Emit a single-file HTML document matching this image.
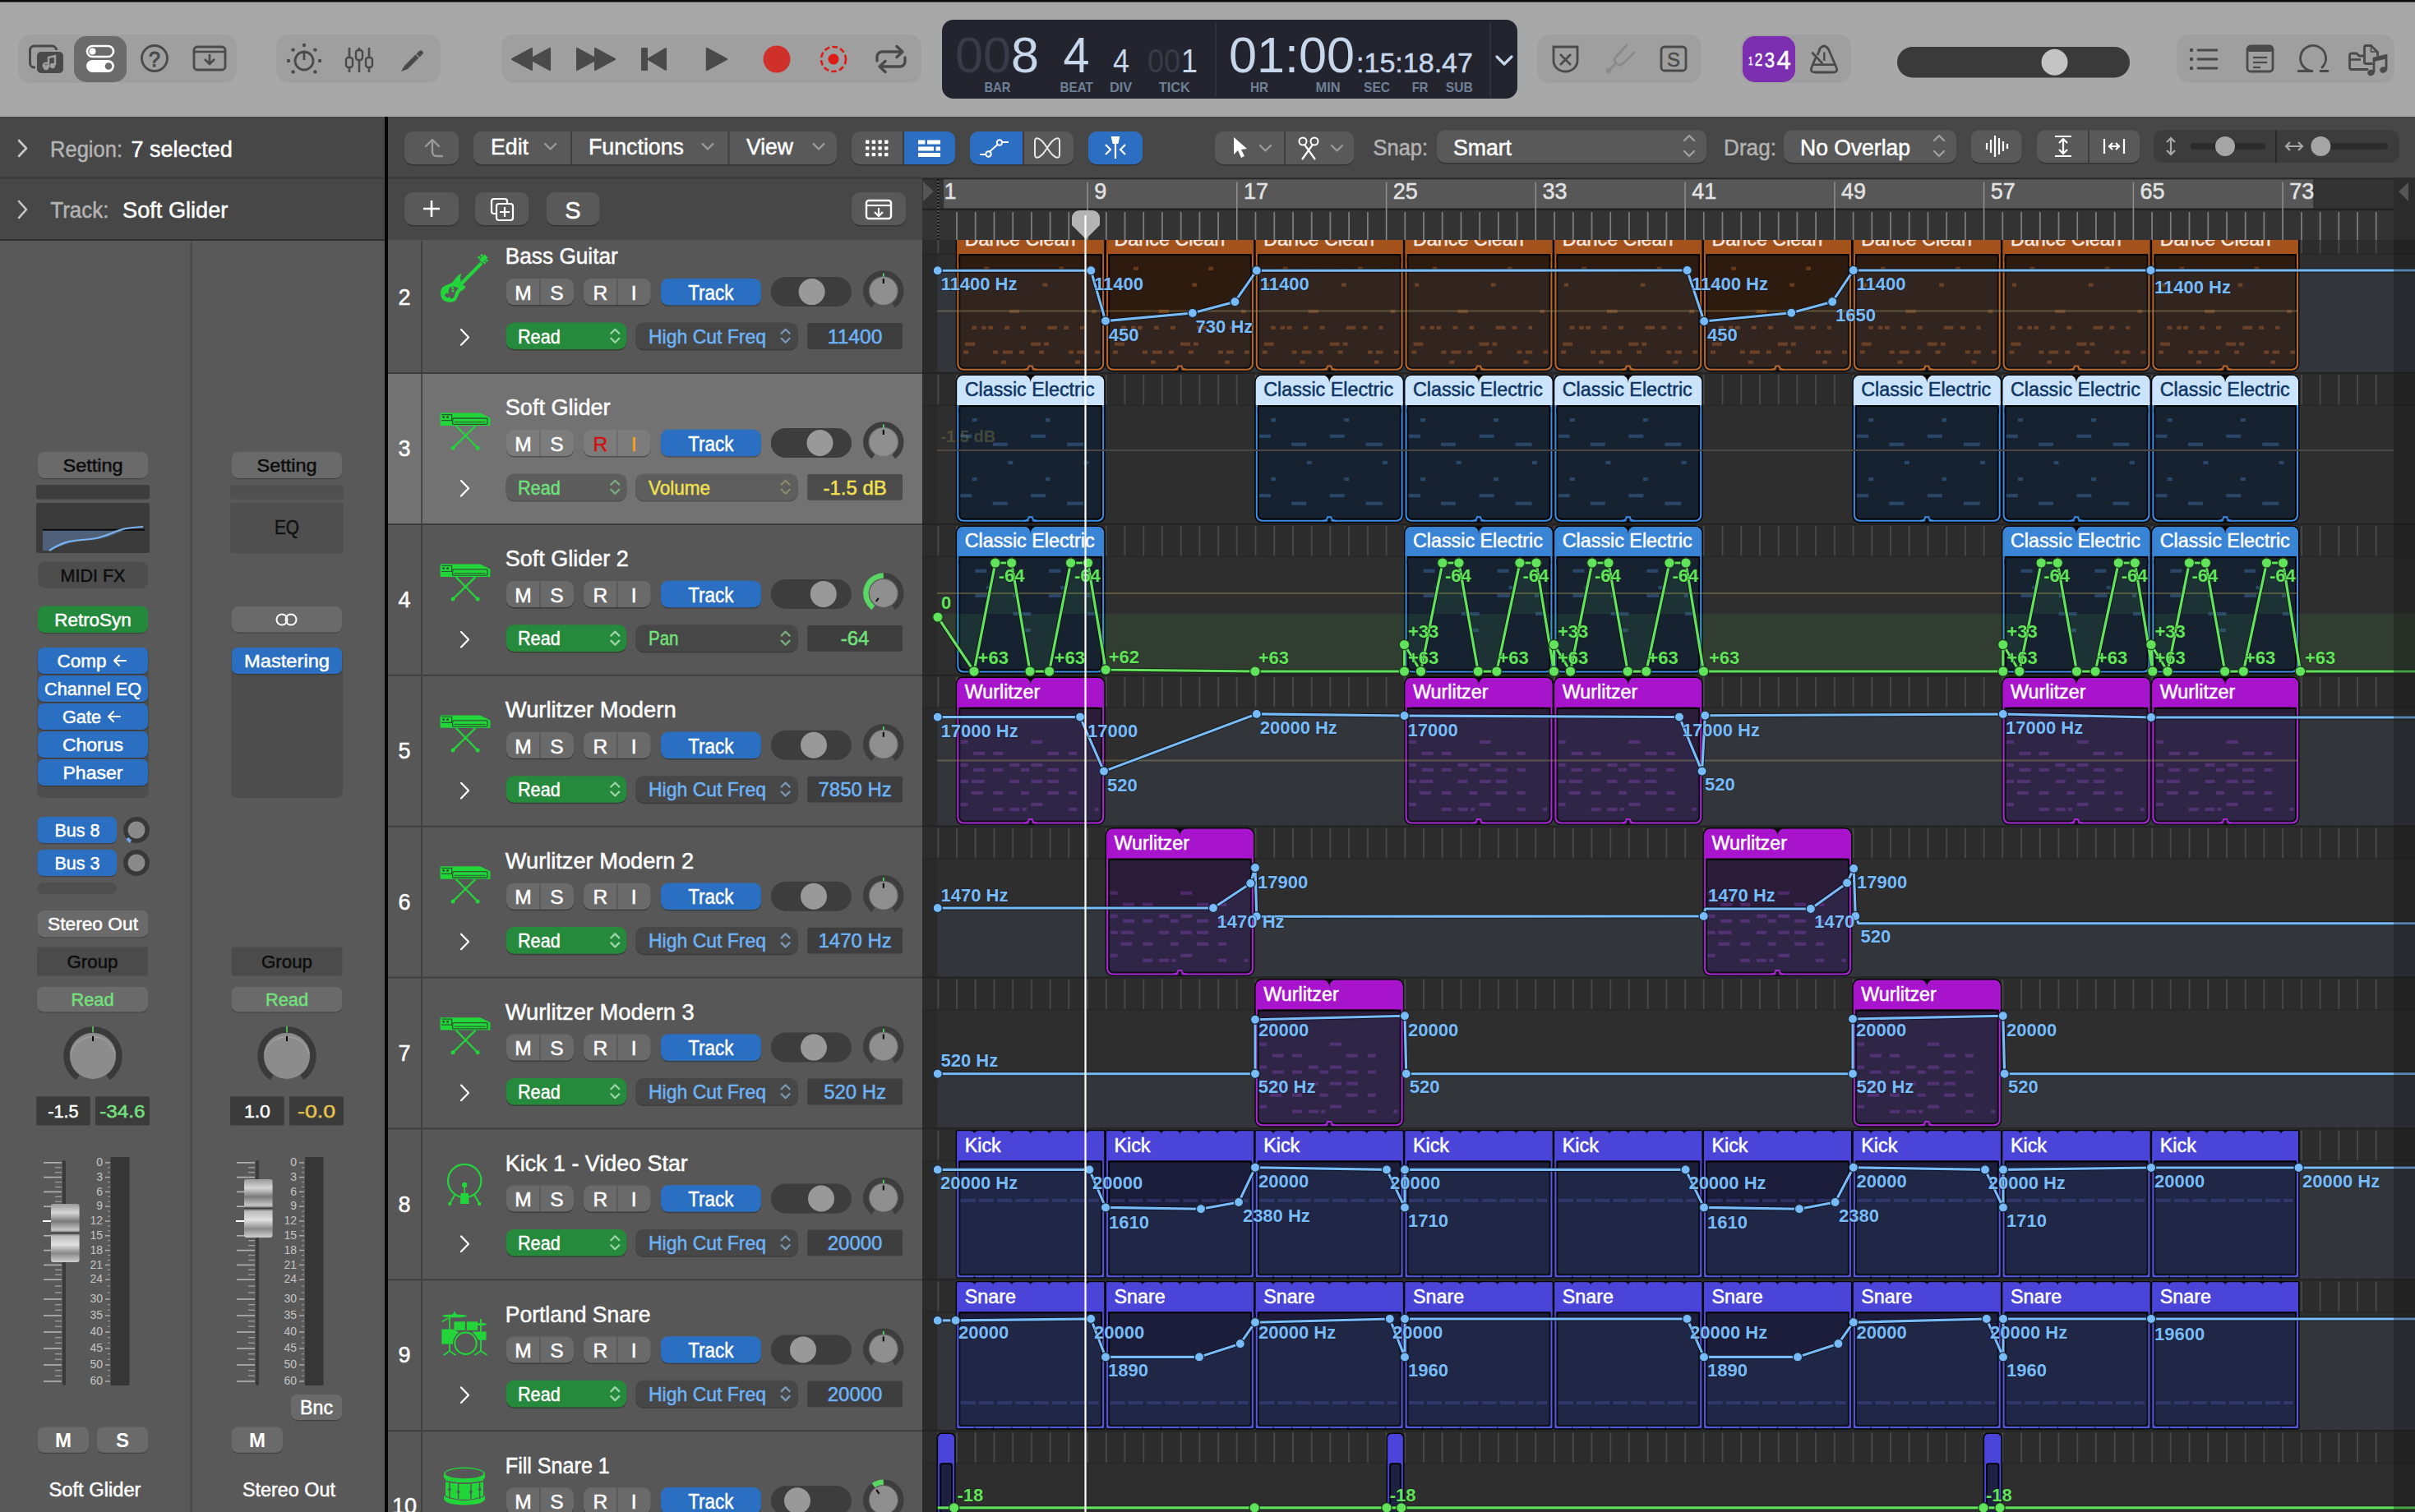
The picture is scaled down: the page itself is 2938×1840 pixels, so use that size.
<!DOCTYPE html>
<html><head><meta charset="utf-8"><title>Logic Pro</title>
<style>
html,body{margin:0;padding:0;background:#474747;overflow:hidden;width:2938px;height:1840px}
svg{display:block;font-family:"Liberation Sans",sans-serif}
</style></head><body>
<svg width="2938" height="1840" viewBox="0 0 2938 1840">
<rect x="0.0" y="0.0" width="2938.0" height="1840.0" rx="0" fill="#474747" />
<rect x="0.0" y="0.0" width="2938.0" height="142.0" rx="0" fill="#a8a8a8" />
<rect x="0.0" y="0.0" width="2938.0" height="2.5" rx="0" fill="#0a0a0a" />
<rect x="22.0" y="42.0" width="266.0" height="59.0" rx="15" fill="#9f9f9f" />
<rect x="336.0" y="42.0" width="200.0" height="59.0" rx="15" fill="#9f9f9f" />
<rect x="610.0" y="42.0" width="511.0" height="59.0" rx="15" fill="#9f9f9f" />
<rect x="1870.0" y="42.0" width="200.0" height="59.0" rx="15" fill="#9f9f9f" />
<rect x="2118.0" y="42.0" width="134.0" height="59.0" rx="15" fill="#9f9f9f" />
<rect x="2648.0" y="42.0" width="265.0" height="59.0" rx="15" fill="#9f9f9f" />
<rect x="90.0" y="44.0" width="64.0" height="56.0" rx="15" fill="#6b6b6b" />
<rect x="36.5" y="56.0" width="32.0" height="26.0" rx="5" fill="none" stroke="#4a4a4a" stroke-width="3"/>
<rect x="43.0" y="61.0" width="36.0" height="30.0" rx="6" fill="#9f9f9f" />
<rect x="45.0" y="63.0" width="32.0" height="26.0" rx="5" fill="#4a4a4a" />
<path d="M56 83 a3.2 3.2 0 1 1 0.1 0 M59 82 V70 l8 -2 v11" fill="none" stroke="#9f9f9f" stroke-width="2.4" />
<circle cx="56.0" cy="82.0" r="3.2" fill="#9f9f9f" />
<circle cx="64.0" cy="80.0" r="3.2" fill="#9f9f9f" />
<rect x="106.0" y="56.0" width="32.0" height="13.0" rx="6.5" fill="none" stroke="#fff" stroke-width="2.6"/>
<circle cx="112.5" cy="62.5" r="4" fill="#fff" />
<rect x="105.0" y="73.0" width="34.0" height="15.0" rx="7.5" fill="#fff" />
<circle cx="132.0" cy="80.5" r="4.3" fill="#6b6b6b" />
<circle cx="188.0" cy="71.0" r="15.5" fill="none" stroke="#4a4a4a" stroke-width="2.8"/>
<text x="188.0" y="80.5" font-size="25" fill="#4a4a4a" text-anchor="middle" stroke="#4a4a4a" stroke-width="0.9">?</text>
<rect x="236.0" y="57.0" width="38.0" height="28.0" rx="4" fill="none" stroke="#4a4a4a" stroke-width="2.8"/>
<line x1="236.0" y1="63.0" x2="274.0" y2="63.0" stroke="#4a4a4a" stroke-width="2.6" />
<path d="M255 66 V78 M249 72 l6 6 l6 -6" fill="none" stroke="#4a4a4a" stroke-width="2.6" />
<circle cx="370.0" cy="74.0" r="11" fill="none" stroke="#4a4a4a" stroke-width="2.8"/>
<line x1="370.0" y1="63.0" x2="370.0" y2="73.0" stroke="#4a4a4a" stroke-width="2.8" />
<circle cx="370.0" cy="55.0" r="2.2" fill="#4a4a4a" />
<circle cx="383.4" cy="60.6" r="2.2" fill="#4a4a4a" />
<circle cx="356.6" cy="60.6" r="2.2" fill="#4a4a4a" />
<circle cx="389.0" cy="74.0" r="2.2" fill="#4a4a4a" />
<circle cx="351.0" cy="74.0" r="2.2" fill="#4a4a4a" />
<circle cx="383.4" cy="87.4" r="2.2" fill="#4a4a4a" />
<circle cx="356.6" cy="87.4" r="2.2" fill="#4a4a4a" />
<line x1="425.0" y1="58.0" x2="425.0" y2="88.0" stroke="#4a4a4a" stroke-width="2.6" />
<rect x="421.0" y="70.0" width="8.0" height="12.0" rx="3" fill="#9f9f9f" stroke="#4a4a4a" stroke-width="2.4"/>
<line x1="437.0" y1="58.0" x2="437.0" y2="88.0" stroke="#4a4a4a" stroke-width="2.6" />
<rect x="433.0" y="61.0" width="8.0" height="12.0" rx="3" fill="#9f9f9f" stroke="#4a4a4a" stroke-width="2.4"/>
<line x1="449.0" y1="58.0" x2="449.0" y2="88.0" stroke="#4a4a4a" stroke-width="2.6" />
<rect x="445.0" y="70.0" width="8.0" height="12.0" rx="3" fill="#9f9f9f" stroke="#4a4a4a" stroke-width="2.4"/>
<path d="M492 80 L510 62 a2.5 2.5 0 0 1 3.5 0 l0.5 0.5 a2.5 2.5 0 0 1 0 3.5 L496 84 L488 87 Z" fill="#4a4a4a" />
<line x1="506.0" y1="66.0" x2="510.0" y2="70.0" stroke="#9f9f9f" stroke-width="1.2" />
<path d="M623 72 L647 59 V85 Z M645 72 L669 59 V85 Z" fill="#4a4a4a" stroke="#4a4a4a" stroke-width="2" stroke-linejoin="round"/>
<path d="M702 59 L726 72 L702 85 Z M724 59 L748 72 L724 85 Z" fill="#4a4a4a" stroke="#4a4a4a" stroke-width="2" stroke-linejoin="round"/>
<rect x="780.0" y="58.0" width="8.0" height="28.0" rx="1.5" fill="#4a4a4a" />
<path d="M810 59 V85 L788 72 Z" fill="#4a4a4a" stroke="#4a4a4a" stroke-width="2" stroke-linejoin="round"/>
<path d="M860 59 V85 L884 72 Z" fill="#4a4a4a" stroke="#4a4a4a" stroke-width="2.4" stroke-linejoin="round"/>
<circle cx="945.0" cy="72.0" r="16.5" fill="#d0302a" />
<circle cx="1014.0" cy="72.0" r="15" fill="none" stroke="#dd1b14" stroke-width="2.6" stroke-dasharray="6.5 3.3"/>
<circle cx="1014.0" cy="72.0" r="6.5" fill="#dd1b14" />
<path d="M1067 74 V69 a6 6 0 0 1 6 -6 H1098 M1091 56.5 L1098 63 L1091 69.5 M1101 70 V75 a6 6 0 0 1 -6 6 H1070 M1077 74.5 L1070 81 L1077 87.5" fill="none" stroke="#4a4a4a" stroke-width="3.4" stroke-linejoin="round" stroke-linecap="round"/>
<rect x="1146.0" y="24.0" width="700.0" height="96.0" rx="14" fill="#23242d" />
<line x1="1479.0" y1="27.0" x2="1479.0" y2="118.0" stroke="#333744" stroke-width="1.5" />
<line x1="1813.0" y1="27.0" x2="1813.0" y2="118.0" stroke="#333744" stroke-width="1.5" />
<text x="1162.0" y="88.3" font-size="61.5" fill="#393c48" textLength="68.0" lengthAdjust="spacingAndGlyphs" stroke="none">00</text>
<text x="1230.0" y="88.3" font-size="61.5" fill="#c6d7eb" textLength="34.0" lengthAdjust="spacingAndGlyphs" stroke="none">8</text>
<text x="1293.5" y="88.3" font-size="61.5" fill="#c6d7eb" textLength="32.0" lengthAdjust="spacingAndGlyphs" stroke="none">4</text>
<text x="1354.0" y="88.3" font-size="40.7" fill="#c6d7eb" textLength="20.0" lengthAdjust="spacingAndGlyphs" stroke="none">4</text>
<text x="1396.0" y="88.3" font-size="40.7" fill="#393c48" textLength="40.0" lengthAdjust="spacingAndGlyphs" stroke="none">00</text>
<text x="1437.0" y="88.3" font-size="40.7" fill="#c6d7eb" textLength="20.0" lengthAdjust="spacingAndGlyphs" stroke="none">1</text>
<text x="1197.4" y="111.7" font-size="16.3" fill="#6e8095" font-weight="bold" textLength="32.0" lengthAdjust="spacingAndGlyphs">BAR</text>
<text x="1289.5" y="111.7" font-size="16.3" fill="#6e8095" font-weight="bold" textLength="40.3" lengthAdjust="spacingAndGlyphs">BEAT</text>
<text x="1350.0" y="111.7" font-size="16.3" fill="#6e8095" font-weight="bold" textLength="27.3" lengthAdjust="spacingAndGlyphs">DIV</text>
<text x="1409.8" y="111.7" font-size="16.3" fill="#6e8095" font-weight="bold" textLength="38.0" lengthAdjust="spacingAndGlyphs">TICK</text>
<text x="1521.0" y="111.7" font-size="16.3" fill="#6e8095" font-weight="bold" textLength="22.0" lengthAdjust="spacingAndGlyphs">HR</text>
<text x="1600.6" y="111.7" font-size="16.3" fill="#6e8095" font-weight="bold" textLength="30.1" lengthAdjust="spacingAndGlyphs">MIN</text>
<text x="1659.0" y="111.7" font-size="16.3" fill="#6e8095" font-weight="bold" textLength="32.0" lengthAdjust="spacingAndGlyphs">SEC</text>
<text x="1717.7" y="111.7" font-size="16.3" fill="#6e8095" font-weight="bold" textLength="19.7" lengthAdjust="spacingAndGlyphs">FR</text>
<text x="1758.7" y="111.7" font-size="16.3" fill="#6e8095" font-weight="bold" textLength="33.2" lengthAdjust="spacingAndGlyphs">SUB</text>
<text x="1495.0" y="88.3" font-size="61.5" fill="#c6d7eb" textLength="153.0" lengthAdjust="spacingAndGlyphs" stroke="none">01:00</text>
<text x="1650.0" y="87.5" font-size="33.7" fill="#c6d7eb" stroke="#c6d7eb" stroke-width="0.5" textLength="142.0" lengthAdjust="spacingAndGlyphs">:15:18.47</text>
<path d="M1821 69 L1830 78 L1839 69" fill="none" stroke="#c6d7eb" stroke-width="3.2" stroke-linecap="round" stroke-linejoin="round"/>
<path d="M1890 57 h29 v17 a14.5 13 0 0 1 -29 0 z" fill="none" stroke="#4a4a4a" stroke-width="2.8" />
<path d="M1898 66 l13 13 M1911 66 l-13 13" fill="none" stroke="#4a4a4a" stroke-width="2.6" />
<path d="M1957 86 L1966 77 M1966 77 C1962 72 1965 70 1968 67 L1979 55 M1966 77 C1971 81 1973 79 1976 76 L1988 64" fill="none" stroke="#8a8a8a" stroke-width="2.8" stroke-linecap="round" stroke-linejoin="round"/>
<circle cx="1957.0" cy="86.0" r="3.2" fill="#8a8a8a" />
<rect x="2021.0" y="57.0" width="30.0" height="29.0" rx="4" fill="none" stroke="#4a4a4a" stroke-width="2.8"/>
<text x="2036.0" y="81.0" font-size="24" fill="#4a4a4a" stroke="#4a4a4a" stroke-width="0.5" text-anchor="middle">S</text>
<rect x="2120.0" y="44.0" width="64.0" height="56.0" rx="15" fill="#7b2eb0" />
<text x="2127.0" y="78.7" font-size="14.8" fill="#fff" stroke="#fff" stroke-width="0.5" textLength="5.5" lengthAdjust="spacingAndGlyphs">1</text>
<text x="2134.8" y="80.0" font-size="22.5" fill="#fff" stroke="#fff" stroke-width="0.5" textLength="9.6" lengthAdjust="spacingAndGlyphs">2</text>
<text x="2146.7" y="82.0" font-size="26" fill="#fff" stroke="#fff" stroke-width="0.5" textLength="12.3" lengthAdjust="spacingAndGlyphs">3</text>
<text x="2161.6" y="83.7" font-size="31" fill="#fff" stroke="#fff" stroke-width="0.5" textLength="17.3" lengthAdjust="spacingAndGlyphs">4</text>
<path d="M2213.5 60 Q2219 52 2224.5 60 L2234 82 Q2236.5 88 2230 88 H2208 Q2201.5 88 2204 82 L2208.5 71" fill="none" stroke="#4a4a4a" stroke-width="2.8" stroke-linejoin="round" stroke-linecap="round"/>
<path d="M2211.5 66 L2213.5 61" fill="none" stroke="#4a4a4a" stroke-width="2.8" stroke-linecap="round"/>
<line x1="2206.0" y1="78.7" x2="2232.0" y2="78.7" stroke="#4a4a4a" stroke-width="2.6" />
<line x1="2204.4" y1="63.8" x2="2217.3" y2="77.4" stroke="#4a4a4a" stroke-width="2.8" />
<line x1="2219.3" y1="63.5" x2="2219.3" y2="74.0" stroke="#4a4a4a" stroke-width="2.4" />
<rect x="2308.0" y="57.0" width="283.0" height="37.5" rx="18.7" fill="#3a3a3a" />
<circle cx="2499.5" cy="75.8" r="16" fill="#c4c4c4" />
<circle cx="2666.0" cy="61.0" r="2.3" fill="#4a4a4a" />
<line x1="2674.0" y1="61.0" x2="2697.0" y2="61.0" stroke="#4a4a4a" stroke-width="2.8" stroke-linecap="round"/>
<circle cx="2666.0" cy="72.0" r="2.3" fill="#4a4a4a" />
<line x1="2674.0" y1="72.0" x2="2697.0" y2="72.0" stroke="#4a4a4a" stroke-width="2.8" stroke-linecap="round"/>
<circle cx="2666.0" cy="83.0" r="2.3" fill="#4a4a4a" />
<line x1="2674.0" y1="83.0" x2="2697.0" y2="83.0" stroke="#4a4a4a" stroke-width="2.8" stroke-linecap="round"/>
<rect x="2734.0" y="56.0" width="31.0" height="31.0" rx="4" fill="none" stroke="#4a4a4a" stroke-width="2.8"/>
<rect x="2734.0" y="56.0" width="31.0" height="7.0" rx="3" fill="#4a4a4a" />
<line x1="2741.0" y1="70.0" x2="2758.0" y2="70.0" stroke="#4a4a4a" stroke-width="2.2" />
<line x1="2741.0" y1="76.0" x2="2758.0" y2="76.0" stroke="#4a4a4a" stroke-width="2.2" />
<line x1="2741.0" y1="82.0" x2="2750.0" y2="82.0" stroke="#4a4a4a" stroke-width="2.2" />
<path d="M2796 86.5 H2814 A15.5 15.5 0 1 1 2825 82 M2823 86.5 H2832" fill="none" stroke="#4a4a4a" stroke-width="2.8" stroke-linecap="round"/>
<path d="M2880 84.5 H2861 a2.5 2.5 0 0 1 -2.5 -2.5 V67.5 a2.5 2.5 0 0 1 2.5 -2.5 h6 l3 3 h6" fill="none" stroke="#4a4a4a" stroke-width="2.8" stroke-linejoin="round" stroke-linecap="round"/>
<line x1="2859.0" y1="72.5" x2="2872.0" y2="72.5" stroke="#4a4a4a" stroke-width="2.6" />
<path d="M2885.5 77.5 H2878.5 a2 2 0 0 1 -2 -2 V57.5 a2 2 0 0 1 2 -2 h6 l8 8 v4" fill="none" stroke="#4a4a4a" stroke-width="2.8" stroke-linejoin="round" stroke-linecap="round"/>
<path d="M2884.5 56 V63 h7" fill="none" stroke="#4a4a4a" stroke-width="1.6" />
<path d="M2888 88 V71 L2903 67.5 V85" fill="none" stroke="#4a4a4a" stroke-width="2.8" />
<path d="M2888 70 L2903 66.5 V71.5 L2888 75 Z" fill="#4a4a4a" />
<ellipse cx="2884.5" cy="88.5" rx="4.3" ry="3.6" fill="#4a4a4a" transform="rotate(-20 2884.5 88.5)"/>
<ellipse cx="2899.5" cy="85" rx="4.3" ry="3.6" fill="#4a4a4a" transform="rotate(-20 2899.5 85)"/>
<rect x="0.0" y="142.0" width="2938.0" height="150.0" rx="0" fill="#474747" />
<rect x="0.0" y="142.0" width="468.0" height="150.0" rx="0" fill="#474747" />
<line x1="0.0" y1="216.5" x2="468.0" y2="216.5" stroke="#3b3b3b" stroke-width="2" />
<line x1="0.0" y1="292.0" x2="468.0" y2="292.0" stroke="#303030" stroke-width="2" />
<path d="M23 171 l9 9.5 l-9 9.5" fill="none" stroke="#c8c8c8" stroke-width="2.6" stroke-linecap="round" stroke-linejoin="round"/>
<text x="61.0" y="190.5" font-size="27" fill="#b3b3b3" stroke="#b3b3b3" stroke-width="0.5" textLength="88.0" lengthAdjust="spacingAndGlyphs">Region:</text>
<text x="159.4" y="190.5" font-size="27" fill="#ffffff" stroke="#ffffff" stroke-width="0.5" textLength="123.4" lengthAdjust="spacingAndGlyphs">7 selected</text>
<path d="M23 245 l9 10 l-9 10" fill="none" stroke="#c8c8c8" stroke-width="2.6" stroke-linecap="round" stroke-linejoin="round"/>
<text x="61.3" y="265.0" font-size="27" fill="#b3b3b3" stroke="#b3b3b3" stroke-width="0.5" textLength="71.2" lengthAdjust="spacingAndGlyphs">Track:</text>
<text x="149.0" y="265.0" font-size="27" fill="#ffffff" stroke="#ffffff" stroke-width="0.5" textLength="128.4" lengthAdjust="spacingAndGlyphs">Soft Glider</text>
<rect x="468.0" y="142.0" width="4.0" height="1698.0" rx="0" fill="#050505" />
<line x1="472.0" y1="216.5" x2="1122.0" y2="216.5" stroke="#3b3b3b" stroke-width="2" />
<rect x="492.0" y="161.5" width="66.0" height="40.0" rx="10" fill="rgba(0,0,0,0.28)" />
<rect x="492.0" y="160.0" width="66.0" height="40.0" rx="10" fill="#595959" />
<path d="M526 171 V185 a5 5 0 0 0 5 5 h7 M518 178 l8 -8 l8 8" fill="none" stroke="#9a9a9a" stroke-width="2.4" stroke-linecap="round" stroke-linejoin="round"/>
<rect x="575.7" y="161.5" width="442.3" height="40.0" rx="10" fill="rgba(0,0,0,0.28)" />
<rect x="575.7" y="160.0" width="442.3" height="40.0" rx="10" fill="#595959" />
<line x1="695.0" y1="160.0" x2="695.0" y2="200.0" stroke="#3e3e3e" stroke-width="2" />
<line x1="886.6" y1="160.0" x2="886.6" y2="200.0" stroke="#3e3e3e" stroke-width="2" />
<text x="597.0" y="188.4" font-size="27" fill="#fff" stroke="#fff" stroke-width="0.5" textLength="46.0" lengthAdjust="spacingAndGlyphs">Edit</text>
<text x="716.0" y="188.4" font-size="27" fill="#fff" stroke="#fff" stroke-width="0.5" textLength="116.0" lengthAdjust="spacingAndGlyphs">Functions</text>
<text x="908.0" y="188.4" font-size="27" fill="#fff" stroke="#fff" stroke-width="0.5" textLength="57.0" lengthAdjust="spacingAndGlyphs">View</text>
<path d="M663.1 175 l6.5 6.5 l6.5 -6.5" fill="none" stroke="#9a9a9a" stroke-width="2.4" stroke-linecap="round" stroke-linejoin="round"/>
<path d="M854.5 175 l6.5 6.5 l6.5 -6.5" fill="none" stroke="#9a9a9a" stroke-width="2.4" stroke-linecap="round" stroke-linejoin="round"/>
<path d="M989.5 175 l6.5 6.5 l6.5 -6.5" fill="none" stroke="#9a9a9a" stroke-width="2.4" stroke-linecap="round" stroke-linejoin="round"/>
<rect x="492.0" y="235.5" width="66.0" height="40.0" rx="10" fill="rgba(0,0,0,0.28)" />
<rect x="492.0" y="234.0" width="66.0" height="40.0" rx="10" fill="#595959" />
<path d="M525 244 V264 M515 254 H535" fill="none" stroke="#fff" stroke-width="2.6" />
<rect x="578.0" y="235.5" width="65.5" height="40.0" rx="10" fill="rgba(0,0,0,0.28)" />
<rect x="578.0" y="234.0" width="65.5" height="40.0" rx="10" fill="#595959" />
<rect x="598.0" y="242.0" width="19.0" height="18.0" rx="3" fill="none" stroke="#fff" stroke-width="2.2"/>
<rect x="604.0" y="248.0" width="20.0" height="20.0" rx="3" fill="#595959" stroke="#fff" stroke-width="2.2"/>
<path d="M614 252 V264 M608 258 H620" fill="none" stroke="#fff" stroke-width="2.2" />
<rect x="664.5" y="235.5" width="65.1" height="40.0" rx="10" fill="rgba(0,0,0,0.28)" />
<rect x="664.5" y="234.0" width="65.1" height="40.0" rx="10" fill="#595959" />
<text x="697.0" y="266.0" font-size="29" fill="#fff" stroke="#fff" stroke-width="0.5" text-anchor="middle">S</text>
<rect x="1036.0" y="235.5" width="66.0" height="40.0" rx="10" fill="rgba(0,0,0,0.28)" />
<rect x="1036.0" y="234.0" width="66.0" height="40.0" rx="10" fill="#595959" />
<rect x="1054.0" y="244.0" width="30.0" height="22.0" rx="3" fill="none" stroke="#fff" stroke-width="2.4"/>
<line x1="1054.0" y1="250.0" x2="1084.0" y2="250.0" stroke="#fff" stroke-width="2.2" />
<path d="M1069 253 V262 M1064 258 l5 5 l5 -5" fill="none" stroke="#fff" stroke-width="2.2" />
<rect x="1036.0" y="161.5" width="126.0" height="40.0" rx="10" fill="rgba(0,0,0,0.28)" />
<rect x="1036.0" y="160.0" width="126.0" height="40.0" rx="10" fill="#595959" />
<rect x="1100.0" y="160.0" width="62.0" height="40.0" rx="10" fill="#2c6ec2" />
<rect x="1100.0" y="160.0" width="12.0" height="40.0" rx="0" fill="#2c6ec2" />
<line x1="1099.0" y1="160.0" x2="1099.0" y2="200.0" stroke="#3e3e3e" stroke-width="2" />
<rect x="1053.0" y="170.5" width="4.4" height="4.4" rx="0.8" fill="#fff" />
<rect x="1060.7" y="170.5" width="4.4" height="4.4" rx="0.8" fill="#fff" />
<rect x="1068.4" y="170.5" width="4.4" height="4.4" rx="0.8" fill="#fff" />
<rect x="1076.1" y="170.5" width="4.4" height="4.4" rx="0.8" fill="#fff" />
<rect x="1053.0" y="178.2" width="4.4" height="4.4" rx="0.8" fill="#fff" />
<rect x="1060.7" y="178.2" width="4.4" height="4.4" rx="0.8" fill="#fff" />
<rect x="1068.4" y="178.2" width="4.4" height="4.4" rx="0.8" fill="#fff" />
<rect x="1076.1" y="178.2" width="4.4" height="4.4" rx="0.8" fill="#fff" />
<rect x="1053.0" y="185.9" width="4.4" height="4.4" rx="0.8" fill="#fff" />
<rect x="1060.7" y="185.9" width="4.4" height="4.4" rx="0.8" fill="#fff" />
<rect x="1068.4" y="185.9" width="4.4" height="4.4" rx="0.8" fill="#fff" />
<rect x="1076.1" y="185.9" width="4.4" height="4.4" rx="0.8" fill="#fff" />
<rect x="1117.0" y="170.5" width="8.5" height="5.0" rx="0.5" fill="#fff" />
<rect x="1128.0" y="170.5" width="16.0" height="5.0" rx="0.5" fill="#fff" />
<rect x="1117.0" y="178.5" width="19.0" height="5.0" rx="0.5" fill="#fff" />
<rect x="1138.5" y="178.5" width="5.5" height="5.0" rx="0.5" fill="#fff" />
<rect x="1117.0" y="186.0" width="27.0" height="5.0" rx="0.5" fill="#fff" />
<rect x="1180.0" y="161.5" width="126.0" height="40.0" rx="10" fill="rgba(0,0,0,0.28)" />
<rect x="1180.0" y="160.0" width="126.0" height="40.0" rx="10" fill="#595959" />
<rect x="1180.0" y="160.0" width="64.0" height="40.0" rx="10" fill="#2c6ec2" />
<rect x="1232.0" y="160.0" width="12.0" height="40.0" rx="0" fill="#2c6ec2" />
<line x1="1245.0" y1="160.0" x2="1245.0" y2="200.0" stroke="#3e3e3e" stroke-width="2" />
<path d="M1192 188 h7 M1219 173 h8 M1204 184.5 L1213.5 176" fill="none" stroke="#fff" stroke-width="2" />
<circle cx="1202.5" cy="187.5" r="3.2" fill="none" stroke="#fff" stroke-width="2"/>
<circle cx="1216.0" cy="173.5" r="3.2" fill="none" stroke="#fff" stroke-width="2"/>
<path d="M1259 188 V172 C1259 166 1264 168 1268 172 C1272 176 1276 184 1280 188 C1284 192 1289 194 1289 188 V172 C1289 166 1284 168 1280 172 C1276 176 1272 184 1268 188 C1264 192 1259 194 1259 188 Z" fill="none" stroke="#e8e8e8" stroke-width="2" stroke-linejoin="round"/>
<rect x="1324.0" y="161.5" width="66.0" height="40.0" rx="10" fill="rgba(0,0,0,0.28)" />
<rect x="1324.0" y="160.0" width="66.0" height="40.0" rx="10" fill="#595959" />
<rect x="1324.0" y="160.0" width="66.0" height="40.0" rx="10" fill="#2c6ec2" />
<path d="M1357 170 V193 M1353 167 h8 l-1.5 7 h-5 z M1345 176 l6 6 l-6 6 M1369 176 l-6 6 l6 6" fill="none" stroke="#fff" stroke-width="2.2" />
<rect x="1353.0" y="167.0" width="8.0" height="6.0" rx="0" fill="#fff" />
<rect x="1478.0" y="161.5" width="169.5" height="40.0" rx="10" fill="rgba(0,0,0,0.28)" />
<rect x="1478.0" y="160.0" width="169.5" height="40.0" rx="10" fill="#595959" />
<line x1="1563.0" y1="160.0" x2="1563.0" y2="200.0" stroke="#3e3e3e" stroke-width="2" />
<path d="M1501 167 L1501 188 L1506 183 L1510 192 L1514 190 L1510 182 L1517 181 Z" fill="#fff" />
<path d="M1533 177 l6.5 6.5 l6.5 -6.5" fill="none" stroke="#9a9a9a" stroke-width="2.4" stroke-linecap="round" stroke-linejoin="round"/>
<circle cx="1585.0" cy="172.0" r="4.5" fill="none" stroke="#fff" stroke-width="2"/>
<circle cx="1599.0" cy="172.0" r="4.5" fill="none" stroke="#fff" stroke-width="2"/>
<path d="M1587 176 L1600 194 M1597 176 L1584 194" fill="none" stroke="#fff" stroke-width="2.2" />
<path d="M1620 177 l6.5 6.5 l6.5 -6.5" fill="none" stroke="#9a9a9a" stroke-width="2.4" stroke-linecap="round" stroke-linejoin="round"/>
<text x="1670.6" y="188.5" font-size="27" fill="#b3b3b3" stroke="#b3b3b3" stroke-width="0.5" textLength="66.4" lengthAdjust="spacingAndGlyphs">Snap:</text>
<rect x="1748.0" y="159.9" width="328.0" height="39.6" rx="10" fill="rgba(0,0,0,0.28)" />
<rect x="1748.0" y="158.4" width="328.0" height="39.6" rx="10" fill="#595959" />
<text x="1768.0" y="188.5" font-size="27" fill="#fff" stroke="#fff" stroke-width="0.5" textLength="71.0" lengthAdjust="spacingAndGlyphs">Smart</text>
<path d="M2049 171 l6 -6 l6 6 M2049 184 l6 6 l6 -6" fill="none" stroke="#a0a0a0" stroke-width="2.4" stroke-linecap="round" stroke-linejoin="round"/>
<text x="2097.0" y="188.5" font-size="27" fill="#b3b3b3" stroke="#b3b3b3" stroke-width="0.5" textLength="64.0" lengthAdjust="spacingAndGlyphs">Drag:</text>
<rect x="2170.0" y="159.9" width="210.0" height="39.6" rx="10" fill="rgba(0,0,0,0.28)" />
<rect x="2170.0" y="158.4" width="210.0" height="39.6" rx="10" fill="#595959" />
<text x="2190.0" y="188.5" font-size="27" fill="#fff" stroke="#fff" stroke-width="0.5" textLength="134.0" lengthAdjust="spacingAndGlyphs">No Overlap</text>
<path d="M2353 171 l6 -6 l6 6 M2353 184 l6 6 l6 -6" fill="none" stroke="#a0a0a0" stroke-width="2.4" stroke-linecap="round" stroke-linejoin="round"/>
<rect x="2397.6" y="159.9" width="62.1" height="39.6" rx="10" fill="rgba(0,0,0,0.28)" />
<rect x="2397.6" y="158.4" width="62.1" height="39.6" rx="10" fill="#595959" />
<line x1="2417.0" y1="174.0" x2="2417.0" y2="182.0" stroke="#fff" stroke-width="2.2" />
<line x1="2422.0" y1="170.0" x2="2422.0" y2="186.0" stroke="#fff" stroke-width="2.2" />
<line x1="2427.0" y1="165.0" x2="2427.0" y2="191.0" stroke="#fff" stroke-width="2.2" />
<line x1="2432.0" y1="168.0" x2="2432.0" y2="188.0" stroke="#fff" stroke-width="2.2" />
<line x1="2437.0" y1="172.0" x2="2437.0" y2="184.0" stroke="#fff" stroke-width="2.2" />
<line x1="2442.0" y1="175.0" x2="2442.0" y2="181.0" stroke="#fff" stroke-width="2.2" />
<rect x="2478.0" y="159.9" width="125.4" height="39.6" rx="10" fill="rgba(0,0,0,0.28)" />
<rect x="2478.0" y="158.4" width="125.4" height="39.6" rx="10" fill="#595959" />
<line x1="2541.0" y1="158.4" x2="2541.0" y2="198.0" stroke="#3e3e3e" stroke-width="2" />
<path d="M2500 166 h20 M2500 190 h20 M2510 170 V186 M2505 174 l5 -5 l5 5 M2505 182 l5 5 l5 -5" fill="none" stroke="#fff" stroke-width="2.2" />
<path d="M2560 169 V187 M2584 169 V187 M2566 178 h12 M2570 174 l-4 4 l4 4 M2574 174 l4 4 l-4 4" fill="none" stroke="#fff" stroke-width="2.2" />
<rect x="2620.0" y="158.4" width="299.0" height="39.6" rx="10" fill="#3c3c3c" />
<line x1="2769.0" y1="158.4" x2="2769.0" y2="198.0" stroke="#2a2a2a" stroke-width="2" />
<path d="M2641 168 V188 M2636 173 l5 -5 l5 5 M2636 183 l5 5 l5 -5" fill="none" stroke="#a8a8a8" stroke-width="2.2" />
<rect x="2665.0" y="174.0" width="91.0" height="8.0" rx="4" fill="#2c2c2c" />
<circle cx="2707.0" cy="178.0" r="12" fill="#a5a5a5" />
<path d="M2781 178 h20 M2786 173 l-5 5 l5 5 M2796 173 l5 5 l-5 5" fill="none" stroke="#a8a8a8" stroke-width="2.2" />
<rect x="2810.0" y="174.0" width="95.0" height="8.0" rx="4" fill="#2c2c2c" />
<circle cx="2823.3" cy="178.0" r="12" fill="#a5a5a5" />
<rect x="0.0" y="293.0" width="468.0" height="1547.0" rx="0" fill="#595959" />
<rect x="231.5" y="293.0" width="2.0" height="1547.0" rx="0" fill="#474747" />
<rect x="46.0" y="551.2" width="134.0" height="32.0" rx="8" fill="rgba(0,0,0,0.25)" />
<rect x="46.0" y="550.0" width="134.0" height="32.0" rx="8" fill="#6a6a6a" />
<text x="76.5" y="574.0" font-size="22.3" fill="#0d0d0d" stroke="#0d0d0d" stroke-width="0.5" textLength="73.0" lengthAdjust="spacingAndGlyphs">Setting</text>
<rect x="282.0" y="551.2" width="134.0" height="32.0" rx="8" fill="rgba(0,0,0,0.25)" />
<rect x="282.0" y="550.0" width="134.0" height="32.0" rx="8" fill="#6a6a6a" />
<text x="312.5" y="574.0" font-size="22.3" fill="#0d0d0d" stroke="#0d0d0d" stroke-width="0.5" textLength="73.0" lengthAdjust="spacingAndGlyphs">Setting</text>
<rect x="44.0" y="590.0" width="138.0" height="17.5" rx="3" fill="#3d3d3d" />
<rect x="280.0" y="590.0" width="138.0" height="17.5" rx="3" fill="#505050" />
<rect x="44.0" y="612.0" width="138.0" height="61.0" rx="3" fill="#3b3b3b" />
<rect x="280.0" y="612.0" width="138.0" height="61.0" rx="3" fill="#4f4f4f" />
<text x="334.0" y="650.0" font-size="23" fill="#111" stroke="#111" stroke-width="0.5" textLength="30.0" lengthAdjust="spacingAndGlyphs">EQ</text>
<path d="M52 670 V645 H155 C150 645 145 648 135 652 C122 657 115 656 100 658 C85 660 75 664 60 670 Z" fill="#4f6078" />
<line x1="52.0" y1="644.8" x2="176.0" y2="644.8" stroke="#0a0a0a" stroke-width="2" />
<path d="M60 670 C75 660 85 658 100 657 C115 656 125 654 140 647 C155 641 165 642 174 641" fill="none" stroke="#7ab4f0" stroke-width="2.2" />
<rect x="46.0" y="683.6" width="134.0" height="32.4" rx="9" fill="#4d4d4d" />
<text x="73.5" y="707.5" font-size="22" fill="#0d0d0d" stroke="#0d0d0d" stroke-width="0.5" textLength="79.0" lengthAdjust="spacingAndGlyphs">MIDI FX</text>
<rect x="46.0" y="738.8" width="134.0" height="32.4" rx="8" fill="rgba(0,0,0,0.25)" />
<rect x="46.0" y="737.6" width="134.0" height="32.4" rx="8" fill="#248a3b" />
<text x="66.2" y="762.0" font-size="22.5" fill="#fff" stroke="#fff" stroke-width="0.5" textLength="93.6" lengthAdjust="spacingAndGlyphs">RetroSyn</text>
<rect x="282.0" y="739.2" width="134.0" height="31.5" rx="8" fill="rgba(0,0,0,0.25)" />
<rect x="282.0" y="738.0" width="134.0" height="31.5" rx="8" fill="#6a6a6a" />
<circle cx="343.0" cy="754.0" r="6.5" fill="none" stroke="#fff" stroke-width="2"/>
<circle cx="354.0" cy="754.0" r="6.5" fill="none" stroke="#fff" stroke-width="2"/>
<rect x="45.0" y="788.0" width="136.0" height="183.0" rx="8" fill="#4d4d4d" />
<rect x="281.0" y="788.0" width="136.0" height="183.0" rx="8" fill="#4d4d4d" />
<rect x="46.0" y="789.2" width="134.0" height="32.0" rx="7" fill="rgba(0,0,0,0.25)" />
<rect x="46.0" y="788.0" width="134.0" height="32.0" rx="7" fill="#2b6fc3" />
<text x="69.5" y="812.0" font-size="22.5" fill="#fff" stroke="#fff" stroke-width="0.5" textLength="60.0" lengthAdjust="spacingAndGlyphs">Comp</text>
<path d="M139 804 h14 M145 798 l-6 6 l6 6" fill="none" stroke="#fff" stroke-width="2.2" stroke-linecap="round" stroke-linejoin="round"/>
<rect x="46.0" y="823.2" width="134.0" height="32.0" rx="7" fill="rgba(0,0,0,0.25)" />
<rect x="46.0" y="822.0" width="134.0" height="32.0" rx="7" fill="#2b6fc3" />
<text x="54.0" y="846.0" font-size="22.5" fill="#fff" stroke="#fff" stroke-width="0.5" textLength="118.0" lengthAdjust="spacingAndGlyphs">Channel EQ</text>
<rect x="46.0" y="857.2" width="134.0" height="32.0" rx="7" fill="rgba(0,0,0,0.25)" />
<rect x="46.0" y="856.0" width="134.0" height="32.0" rx="7" fill="#2b6fc3" />
<text x="76.0" y="880.0" font-size="22.5" fill="#fff" stroke="#fff" stroke-width="0.5" textLength="47.0" lengthAdjust="spacingAndGlyphs">Gate</text>
<path d="M132 872 h14 M138 866 l-6 6 l6 6" fill="none" stroke="#fff" stroke-width="2.2" stroke-linecap="round" stroke-linejoin="round"/>
<rect x="46.0" y="891.2" width="134.0" height="32.0" rx="7" fill="rgba(0,0,0,0.25)" />
<rect x="46.0" y="890.0" width="134.0" height="32.0" rx="7" fill="#2b6fc3" />
<text x="76.0" y="914.0" font-size="22.5" fill="#fff" stroke="#fff" stroke-width="0.5" textLength="74.0" lengthAdjust="spacingAndGlyphs">Chorus</text>
<rect x="46.0" y="925.2" width="134.0" height="32.0" rx="7" fill="rgba(0,0,0,0.25)" />
<rect x="46.0" y="924.0" width="134.0" height="32.0" rx="7" fill="#2b6fc3" />
<text x="76.5" y="948.0" font-size="22.5" fill="#fff" stroke="#fff" stroke-width="0.5" textLength="73.0" lengthAdjust="spacingAndGlyphs">Phaser</text>
<rect x="282.0" y="789.2" width="134.0" height="32.0" rx="7" fill="rgba(0,0,0,0.25)" />
<rect x="282.0" y="788.0" width="134.0" height="32.0" rx="7" fill="#2b6fc3" />
<text x="297.0" y="812.0" font-size="22.5" fill="#fff" stroke="#fff" stroke-width="0.5" textLength="104.0" lengthAdjust="spacingAndGlyphs">Mastering</text>
<rect x="45.5" y="995.2" width="96.5" height="32.0" rx="7" fill="rgba(0,0,0,0.25)" />
<rect x="45.5" y="994.0" width="96.5" height="32.0" rx="7" fill="#2b6fc3" />
<text x="66.5" y="1018.0" font-size="22.5" fill="#fff" stroke="#fff" stroke-width="0.5" textLength="55.0" lengthAdjust="spacingAndGlyphs">Bus 8</text>
<circle cx="166.0" cy="1010.0" r="16" fill="#383838" />
<circle cx="166.0" cy="1010.0" r="10.5" fill="#8a8a8a" />
<rect x="45.5" y="1035.2" width="96.5" height="32.0" rx="7" fill="rgba(0,0,0,0.25)" />
<rect x="45.5" y="1034.0" width="96.5" height="32.0" rx="7" fill="#2b6fc3" />
<text x="66.5" y="1058.0" font-size="22.5" fill="#fff" stroke="#fff" stroke-width="0.5" textLength="55.0" lengthAdjust="spacingAndGlyphs">Bus 3</text>
<circle cx="166.0" cy="1050.0" r="16" fill="#383838" />
<circle cx="166.0" cy="1050.0" r="10.5" fill="#8a8a8a" />
<path d="M155 1020 a14 14 0 0 0 4 4" fill="none" stroke="#6aa8f0" stroke-width="4" />
<rect x="45.5" y="1074.0" width="96.5" height="14.0" rx="7" fill="#4f4f4f" />
<rect x="45.5" y="1109.2" width="134.8" height="32.4" rx="8" fill="rgba(0,0,0,0.25)" />
<rect x="45.5" y="1108.0" width="134.8" height="32.4" rx="8" fill="#6a6a6a" />
<text x="58.0" y="1132.0" font-size="22.5" fill="#fff" stroke="#fff" stroke-width="0.5" textLength="110.0" lengthAdjust="spacingAndGlyphs">Stereo Out</text>
<rect x="45.0" y="1152.4" width="135.0" height="35.2" rx="2" fill="#4b4b4b" />
<text x="81.5" y="1178.0" font-size="22.5" fill="#0d0d0d" stroke="#0d0d0d" stroke-width="0.5" textLength="62.0" lengthAdjust="spacingAndGlyphs">Group</text>
<rect x="45.0" y="1201.9" width="135.0" height="30.7" rx="8" fill="rgba(0,0,0,0.25)" />
<rect x="45.0" y="1200.7" width="135.0" height="30.7" rx="8" fill="#6a6a6a" />
<text x="86.5" y="1224.0" font-size="22.5" fill="#73e07c" stroke="#73e07c" stroke-width="0.5" textLength="52.0" lengthAdjust="spacingAndGlyphs">Read</text>
<rect x="281.6" y="1152.4" width="134.8" height="35.2" rx="2" fill="#4b4b4b" />
<text x="318.0" y="1178.0" font-size="22.5" fill="#0d0d0d" stroke="#0d0d0d" stroke-width="0.5" textLength="62.0" lengthAdjust="spacingAndGlyphs">Group</text>
<rect x="281.6" y="1201.9" width="134.8" height="30.7" rx="8" fill="rgba(0,0,0,0.25)" />
<rect x="281.6" y="1200.7" width="134.8" height="30.7" rx="8" fill="#6a6a6a" />
<text x="323.0" y="1224.0" font-size="22.5" fill="#73e07c" stroke="#73e07c" stroke-width="0.5" textLength="52.0" lengthAdjust="spacingAndGlyphs">Read</text>
<path d="M94.6 1311.2 A32 32 0 1 1 131.4 1311.2" fill="none" stroke="#3a3a3a" stroke-width="7.5" />
<circle cx="113.0" cy="1285.0" r="28" fill="#8c8c8c" />
<path d="M86 1282 A28 28 0 0 1 140 1282" fill="none" stroke="#a8a8a8" stroke-width="1" />
<line x1="113.0" y1="1249.0" x2="113.0" y2="1256.5" stroke="#5ad865" stroke-width="1.5" />
<line x1="113.0" y1="1261.0" x2="113.0" y2="1267.0" stroke="#000" stroke-width="2" />
<path d="M330.6 1311.2 A32 32 0 1 1 367.4 1311.2" fill="none" stroke="#3a3a3a" stroke-width="7.5" />
<circle cx="349.0" cy="1285.0" r="28" fill="#8c8c8c" />
<path d="M322 1282 A28 28 0 0 1 376 1282" fill="none" stroke="#a8a8a8" stroke-width="1" />
<line x1="349.0" y1="1249.0" x2="349.0" y2="1256.5" stroke="#5ad865" stroke-width="1.5" />
<line x1="349.0" y1="1261.0" x2="349.0" y2="1267.0" stroke="#000" stroke-width="2" />
<rect x="44.2" y="1334.2" width="65.6" height="35.4" rx="2" fill="#3b3b3b" />
<text x="58.3" y="1360.0" font-size="22.5" fill="#fff" stroke="#fff" stroke-width="0.5" textLength="37.4" lengthAdjust="spacingAndGlyphs">-1.5</text>
<rect x="116.0" y="1334.2" width="66.0" height="35.4" rx="2" fill="#3b3b3b" />
<text x="121.3" y="1360.0" font-size="22.5" fill="#76e27e" stroke="#76e27e" stroke-width="0.5" textLength="55.3" lengthAdjust="spacingAndGlyphs">-34.6</text>
<rect x="280.0" y="1334.2" width="65.8" height="35.4" rx="2" fill="#3b3b3b" />
<text x="296.9" y="1360.0" font-size="22.5" fill="#fff" stroke="#fff" stroke-width="0.5" textLength="32.0" lengthAdjust="spacingAndGlyphs">1.0</text>
<rect x="352.0" y="1334.2" width="66.0" height="35.4" rx="2" fill="#3b3b3b" />
<text x="362.0" y="1360.0" font-size="22.5" fill="#e6c34a" stroke="#e6c34a" stroke-width="0.5" textLength="46.0" lengthAdjust="spacingAndGlyphs">-0.0</text>
<defs><linearGradient id="capg" x1="0" y1="0" x2="0" y2="1"><stop offset="0" stop-color="#9a9a9a"/><stop offset="0.15" stop-color="#d6d6d6"/><stop offset="0.3" stop-color="#7a7a7a"/><stop offset="0.45" stop-color="#c8c8c8"/><stop offset="0.5" stop-color="#555"/><stop offset="0.55" stop-color="#bbb"/><stop offset="0.7" stop-color="#e0e0e0"/><stop offset="0.85" stop-color="#8a8a8a"/><stop offset="1" stop-color="#cfcfcf"/></linearGradient></defs>
<line x1="53.0" y1="1414.9" x2="75.0" y2="1414.9" stroke="#b4b4b4" stroke-width="1.6" />
<line x1="67.0" y1="1420.8" x2="75.0" y2="1420.8" stroke="#9a9a9a" stroke-width="1.4" />
<line x1="67.0" y1="1426.7" x2="75.0" y2="1426.7" stroke="#9a9a9a" stroke-width="1.4" />
<text x="125.0" y="1419.1" font-size="14" fill="#c4c4c4" text-anchor="end" stroke="none">0</text>
<line x1="128.0" y1="1414.9" x2="134.0" y2="1414.9" stroke="#b0b0b0" stroke-width="1.4" />
<line x1="131.0" y1="1420.8" x2="134.0" y2="1420.8" stroke="#9a9a9a" stroke-width="1.2" />
<line x1="131.0" y1="1426.7" x2="134.0" y2="1426.7" stroke="#9a9a9a" stroke-width="1.2" />
<line x1="53.0" y1="1432.6" x2="75.0" y2="1432.6" stroke="#b4b4b4" stroke-width="1.6" />
<line x1="67.0" y1="1438.5" x2="75.0" y2="1438.5" stroke="#9a9a9a" stroke-width="1.4" />
<line x1="67.0" y1="1444.5" x2="75.0" y2="1444.5" stroke="#9a9a9a" stroke-width="1.4" />
<text x="125.0" y="1436.8" font-size="14" fill="#c4c4c4" text-anchor="end" stroke="none">3</text>
<line x1="128.0" y1="1432.6" x2="134.0" y2="1432.6" stroke="#b0b0b0" stroke-width="1.4" />
<line x1="131.0" y1="1438.5" x2="134.0" y2="1438.5" stroke="#9a9a9a" stroke-width="1.2" />
<line x1="131.0" y1="1444.5" x2="134.0" y2="1444.5" stroke="#9a9a9a" stroke-width="1.2" />
<line x1="53.0" y1="1450.4" x2="75.0" y2="1450.4" stroke="#b4b4b4" stroke-width="1.6" />
<line x1="67.0" y1="1456.3" x2="75.0" y2="1456.3" stroke="#9a9a9a" stroke-width="1.4" />
<line x1="67.0" y1="1462.3" x2="75.0" y2="1462.3" stroke="#9a9a9a" stroke-width="1.4" />
<text x="125.0" y="1454.6" font-size="14" fill="#c4c4c4" text-anchor="end" stroke="none">6</text>
<line x1="128.0" y1="1450.4" x2="134.0" y2="1450.4" stroke="#b0b0b0" stroke-width="1.4" />
<line x1="131.0" y1="1456.3" x2="134.0" y2="1456.3" stroke="#9a9a9a" stroke-width="1.2" />
<line x1="131.0" y1="1462.3" x2="134.0" y2="1462.3" stroke="#9a9a9a" stroke-width="1.2" />
<line x1="53.0" y1="1468.2" x2="75.0" y2="1468.2" stroke="#b4b4b4" stroke-width="1.6" />
<line x1="67.0" y1="1474.1" x2="75.0" y2="1474.1" stroke="#9a9a9a" stroke-width="1.4" />
<line x1="67.0" y1="1480.1" x2="75.0" y2="1480.1" stroke="#9a9a9a" stroke-width="1.4" />
<text x="125.0" y="1472.4" font-size="14" fill="#c4c4c4" text-anchor="end" stroke="none">9</text>
<line x1="128.0" y1="1468.2" x2="134.0" y2="1468.2" stroke="#b0b0b0" stroke-width="1.4" />
<line x1="131.0" y1="1474.1" x2="134.0" y2="1474.1" stroke="#9a9a9a" stroke-width="1.2" />
<line x1="131.0" y1="1480.1" x2="134.0" y2="1480.1" stroke="#9a9a9a" stroke-width="1.2" />
<line x1="53.0" y1="1486.0" x2="75.0" y2="1486.0" stroke="#b4b4b4" stroke-width="1.6" />
<line x1="67.0" y1="1491.9" x2="75.0" y2="1491.9" stroke="#9a9a9a" stroke-width="1.4" />
<line x1="67.0" y1="1497.9" x2="75.0" y2="1497.9" stroke="#9a9a9a" stroke-width="1.4" />
<text x="125.0" y="1490.2" font-size="14" fill="#c4c4c4" text-anchor="end" stroke="none">12</text>
<line x1="128.0" y1="1486.0" x2="134.0" y2="1486.0" stroke="#b0b0b0" stroke-width="1.4" />
<line x1="131.0" y1="1491.9" x2="134.0" y2="1491.9" stroke="#9a9a9a" stroke-width="1.2" />
<line x1="131.0" y1="1497.9" x2="134.0" y2="1497.9" stroke="#9a9a9a" stroke-width="1.2" />
<line x1="53.0" y1="1503.8" x2="75.0" y2="1503.8" stroke="#b4b4b4" stroke-width="1.6" />
<line x1="67.0" y1="1509.7" x2="75.0" y2="1509.7" stroke="#9a9a9a" stroke-width="1.4" />
<line x1="67.0" y1="1515.7" x2="75.0" y2="1515.7" stroke="#9a9a9a" stroke-width="1.4" />
<text x="125.0" y="1508.0" font-size="14" fill="#c4c4c4" text-anchor="end" stroke="none">15</text>
<line x1="128.0" y1="1503.8" x2="134.0" y2="1503.8" stroke="#b0b0b0" stroke-width="1.4" />
<line x1="131.0" y1="1509.7" x2="134.0" y2="1509.7" stroke="#9a9a9a" stroke-width="1.2" />
<line x1="131.0" y1="1515.7" x2="134.0" y2="1515.7" stroke="#9a9a9a" stroke-width="1.2" />
<line x1="53.0" y1="1521.6" x2="75.0" y2="1521.6" stroke="#b4b4b4" stroke-width="1.6" />
<line x1="67.0" y1="1527.5" x2="75.0" y2="1527.5" stroke="#9a9a9a" stroke-width="1.4" />
<line x1="67.0" y1="1533.5" x2="75.0" y2="1533.5" stroke="#9a9a9a" stroke-width="1.4" />
<text x="125.0" y="1525.8" font-size="14" fill="#c4c4c4" text-anchor="end" stroke="none">18</text>
<line x1="128.0" y1="1521.6" x2="134.0" y2="1521.6" stroke="#b0b0b0" stroke-width="1.4" />
<line x1="131.0" y1="1527.5" x2="134.0" y2="1527.5" stroke="#9a9a9a" stroke-width="1.2" />
<line x1="131.0" y1="1533.5" x2="134.0" y2="1533.5" stroke="#9a9a9a" stroke-width="1.2" />
<line x1="53.0" y1="1539.4" x2="75.0" y2="1539.4" stroke="#b4b4b4" stroke-width="1.6" />
<line x1="67.0" y1="1545.3" x2="75.0" y2="1545.3" stroke="#9a9a9a" stroke-width="1.4" />
<line x1="67.0" y1="1551.3" x2="75.0" y2="1551.3" stroke="#9a9a9a" stroke-width="1.4" />
<text x="125.0" y="1543.6" font-size="14" fill="#c4c4c4" text-anchor="end" stroke="none">21</text>
<line x1="128.0" y1="1539.4" x2="134.0" y2="1539.4" stroke="#b0b0b0" stroke-width="1.4" />
<line x1="131.0" y1="1545.3" x2="134.0" y2="1545.3" stroke="#9a9a9a" stroke-width="1.2" />
<line x1="131.0" y1="1551.3" x2="134.0" y2="1551.3" stroke="#9a9a9a" stroke-width="1.2" />
<line x1="53.0" y1="1557.2" x2="75.0" y2="1557.2" stroke="#b4b4b4" stroke-width="1.6" />
<line x1="67.0" y1="1565.1" x2="75.0" y2="1565.1" stroke="#9a9a9a" stroke-width="1.4" />
<line x1="67.0" y1="1573.1" x2="75.0" y2="1573.1" stroke="#9a9a9a" stroke-width="1.4" />
<text x="125.0" y="1561.4" font-size="14" fill="#c4c4c4" text-anchor="end" stroke="none">24</text>
<line x1="128.0" y1="1557.2" x2="134.0" y2="1557.2" stroke="#b0b0b0" stroke-width="1.4" />
<line x1="131.0" y1="1565.1" x2="134.0" y2="1565.1" stroke="#9a9a9a" stroke-width="1.2" />
<line x1="131.0" y1="1573.1" x2="134.0" y2="1573.1" stroke="#9a9a9a" stroke-width="1.2" />
<line x1="53.0" y1="1581.0" x2="75.0" y2="1581.0" stroke="#b4b4b4" stroke-width="1.6" />
<line x1="67.0" y1="1587.7" x2="75.0" y2="1587.7" stroke="#9a9a9a" stroke-width="1.4" />
<line x1="67.0" y1="1594.3" x2="75.0" y2="1594.3" stroke="#9a9a9a" stroke-width="1.4" />
<text x="125.0" y="1585.2" font-size="14" fill="#c4c4c4" text-anchor="end" stroke="none">30</text>
<line x1="128.0" y1="1581.0" x2="134.0" y2="1581.0" stroke="#b0b0b0" stroke-width="1.4" />
<line x1="131.0" y1="1587.7" x2="134.0" y2="1587.7" stroke="#9a9a9a" stroke-width="1.2" />
<line x1="131.0" y1="1594.3" x2="134.0" y2="1594.3" stroke="#9a9a9a" stroke-width="1.2" />
<line x1="53.0" y1="1601.0" x2="75.0" y2="1601.0" stroke="#b4b4b4" stroke-width="1.6" />
<line x1="67.0" y1="1607.7" x2="75.0" y2="1607.7" stroke="#9a9a9a" stroke-width="1.4" />
<line x1="67.0" y1="1614.3" x2="75.0" y2="1614.3" stroke="#9a9a9a" stroke-width="1.4" />
<text x="125.0" y="1605.2" font-size="14" fill="#c4c4c4" text-anchor="end" stroke="none">35</text>
<line x1="128.0" y1="1601.0" x2="134.0" y2="1601.0" stroke="#b0b0b0" stroke-width="1.4" />
<line x1="131.0" y1="1607.7" x2="134.0" y2="1607.7" stroke="#9a9a9a" stroke-width="1.2" />
<line x1="131.0" y1="1614.3" x2="134.0" y2="1614.3" stroke="#9a9a9a" stroke-width="1.2" />
<line x1="53.0" y1="1621.0" x2="75.0" y2="1621.0" stroke="#b4b4b4" stroke-width="1.6" />
<line x1="67.0" y1="1627.7" x2="75.0" y2="1627.7" stroke="#9a9a9a" stroke-width="1.4" />
<line x1="67.0" y1="1634.3" x2="75.0" y2="1634.3" stroke="#9a9a9a" stroke-width="1.4" />
<text x="125.0" y="1625.2" font-size="14" fill="#c4c4c4" text-anchor="end" stroke="none">40</text>
<line x1="128.0" y1="1621.0" x2="134.0" y2="1621.0" stroke="#b0b0b0" stroke-width="1.4" />
<line x1="131.0" y1="1627.7" x2="134.0" y2="1627.7" stroke="#9a9a9a" stroke-width="1.2" />
<line x1="131.0" y1="1634.3" x2="134.0" y2="1634.3" stroke="#9a9a9a" stroke-width="1.2" />
<line x1="53.0" y1="1641.0" x2="75.0" y2="1641.0" stroke="#b4b4b4" stroke-width="1.6" />
<line x1="67.0" y1="1647.7" x2="75.0" y2="1647.7" stroke="#9a9a9a" stroke-width="1.4" />
<line x1="67.0" y1="1654.3" x2="75.0" y2="1654.3" stroke="#9a9a9a" stroke-width="1.4" />
<text x="125.0" y="1645.2" font-size="14" fill="#c4c4c4" text-anchor="end" stroke="none">45</text>
<line x1="128.0" y1="1641.0" x2="134.0" y2="1641.0" stroke="#b0b0b0" stroke-width="1.4" />
<line x1="131.0" y1="1647.7" x2="134.0" y2="1647.7" stroke="#9a9a9a" stroke-width="1.2" />
<line x1="131.0" y1="1654.3" x2="134.0" y2="1654.3" stroke="#9a9a9a" stroke-width="1.2" />
<line x1="53.0" y1="1661.0" x2="75.0" y2="1661.0" stroke="#b4b4b4" stroke-width="1.6" />
<line x1="67.0" y1="1667.7" x2="75.0" y2="1667.7" stroke="#9a9a9a" stroke-width="1.4" />
<line x1="67.0" y1="1674.3" x2="75.0" y2="1674.3" stroke="#9a9a9a" stroke-width="1.4" />
<text x="125.0" y="1665.2" font-size="14" fill="#c4c4c4" text-anchor="end" stroke="none">50</text>
<line x1="128.0" y1="1661.0" x2="134.0" y2="1661.0" stroke="#b0b0b0" stroke-width="1.4" />
<line x1="131.0" y1="1667.7" x2="134.0" y2="1667.7" stroke="#9a9a9a" stroke-width="1.2" />
<line x1="131.0" y1="1674.3" x2="134.0" y2="1674.3" stroke="#9a9a9a" stroke-width="1.2" />
<line x1="53.0" y1="1681.0" x2="75.0" y2="1681.0" stroke="#b4b4b4" stroke-width="1.6" />
<text x="125.0" y="1685.2" font-size="14" fill="#c4c4c4" text-anchor="end" stroke="none">60</text>
<line x1="128.0" y1="1681.0" x2="134.0" y2="1681.0" stroke="#b0b0b0" stroke-width="1.4" />
<rect x="76.0" y="1412.0" width="4.0" height="274.0" rx="2" fill="#3a3a3a" />
<rect x="134.5" y="1408.0" width="23.1" height="278.0" rx="1" fill="#363636" />
<rect x="62.0" y="1465" width="34.6" height="71" rx="3" fill="url(#capg)"/>
<line x1="62.0" y1="1500.5" x2="96.6" y2="1500.5" stroke="#3a3a3a" stroke-width="1.5" />
<line x1="52.0" y1="1486.0" x2="62.0" y2="1486.0" stroke="#fff" stroke-width="2" />
<line x1="288.0" y1="1414.9" x2="310.0" y2="1414.9" stroke="#b4b4b4" stroke-width="1.6" />
<line x1="302.0" y1="1420.8" x2="310.0" y2="1420.8" stroke="#9a9a9a" stroke-width="1.4" />
<line x1="302.0" y1="1426.7" x2="310.0" y2="1426.7" stroke="#9a9a9a" stroke-width="1.4" />
<text x="361.0" y="1419.1" font-size="14" fill="#c4c4c4" text-anchor="end" stroke="none">0</text>
<line x1="364.0" y1="1414.9" x2="370.0" y2="1414.9" stroke="#b0b0b0" stroke-width="1.4" />
<line x1="367.0" y1="1420.8" x2="370.0" y2="1420.8" stroke="#9a9a9a" stroke-width="1.2" />
<line x1="367.0" y1="1426.7" x2="370.0" y2="1426.7" stroke="#9a9a9a" stroke-width="1.2" />
<line x1="288.0" y1="1432.6" x2="310.0" y2="1432.6" stroke="#b4b4b4" stroke-width="1.6" />
<line x1="302.0" y1="1438.5" x2="310.0" y2="1438.5" stroke="#9a9a9a" stroke-width="1.4" />
<line x1="302.0" y1="1444.5" x2="310.0" y2="1444.5" stroke="#9a9a9a" stroke-width="1.4" />
<text x="361.0" y="1436.8" font-size="14" fill="#c4c4c4" text-anchor="end" stroke="none">3</text>
<line x1="364.0" y1="1432.6" x2="370.0" y2="1432.6" stroke="#b0b0b0" stroke-width="1.4" />
<line x1="367.0" y1="1438.5" x2="370.0" y2="1438.5" stroke="#9a9a9a" stroke-width="1.2" />
<line x1="367.0" y1="1444.5" x2="370.0" y2="1444.5" stroke="#9a9a9a" stroke-width="1.2" />
<line x1="288.0" y1="1450.4" x2="310.0" y2="1450.4" stroke="#b4b4b4" stroke-width="1.6" />
<line x1="302.0" y1="1456.3" x2="310.0" y2="1456.3" stroke="#9a9a9a" stroke-width="1.4" />
<line x1="302.0" y1="1462.3" x2="310.0" y2="1462.3" stroke="#9a9a9a" stroke-width="1.4" />
<text x="361.0" y="1454.6" font-size="14" fill="#c4c4c4" text-anchor="end" stroke="none">6</text>
<line x1="364.0" y1="1450.4" x2="370.0" y2="1450.4" stroke="#b0b0b0" stroke-width="1.4" />
<line x1="367.0" y1="1456.3" x2="370.0" y2="1456.3" stroke="#9a9a9a" stroke-width="1.2" />
<line x1="367.0" y1="1462.3" x2="370.0" y2="1462.3" stroke="#9a9a9a" stroke-width="1.2" />
<line x1="288.0" y1="1468.2" x2="310.0" y2="1468.2" stroke="#b4b4b4" stroke-width="1.6" />
<line x1="302.0" y1="1474.1" x2="310.0" y2="1474.1" stroke="#9a9a9a" stroke-width="1.4" />
<line x1="302.0" y1="1480.1" x2="310.0" y2="1480.1" stroke="#9a9a9a" stroke-width="1.4" />
<text x="361.0" y="1472.4" font-size="14" fill="#c4c4c4" text-anchor="end" stroke="none">9</text>
<line x1="364.0" y1="1468.2" x2="370.0" y2="1468.2" stroke="#b0b0b0" stroke-width="1.4" />
<line x1="367.0" y1="1474.1" x2="370.0" y2="1474.1" stroke="#9a9a9a" stroke-width="1.2" />
<line x1="367.0" y1="1480.1" x2="370.0" y2="1480.1" stroke="#9a9a9a" stroke-width="1.2" />
<line x1="288.0" y1="1486.0" x2="310.0" y2="1486.0" stroke="#b4b4b4" stroke-width="1.6" />
<line x1="302.0" y1="1491.9" x2="310.0" y2="1491.9" stroke="#9a9a9a" stroke-width="1.4" />
<line x1="302.0" y1="1497.9" x2="310.0" y2="1497.9" stroke="#9a9a9a" stroke-width="1.4" />
<text x="361.0" y="1490.2" font-size="14" fill="#c4c4c4" text-anchor="end" stroke="none">12</text>
<line x1="364.0" y1="1486.0" x2="370.0" y2="1486.0" stroke="#b0b0b0" stroke-width="1.4" />
<line x1="367.0" y1="1491.9" x2="370.0" y2="1491.9" stroke="#9a9a9a" stroke-width="1.2" />
<line x1="367.0" y1="1497.9" x2="370.0" y2="1497.9" stroke="#9a9a9a" stroke-width="1.2" />
<line x1="288.0" y1="1503.8" x2="310.0" y2="1503.8" stroke="#b4b4b4" stroke-width="1.6" />
<line x1="302.0" y1="1509.7" x2="310.0" y2="1509.7" stroke="#9a9a9a" stroke-width="1.4" />
<line x1="302.0" y1="1515.7" x2="310.0" y2="1515.7" stroke="#9a9a9a" stroke-width="1.4" />
<text x="361.0" y="1508.0" font-size="14" fill="#c4c4c4" text-anchor="end" stroke="none">15</text>
<line x1="364.0" y1="1503.8" x2="370.0" y2="1503.8" stroke="#b0b0b0" stroke-width="1.4" />
<line x1="367.0" y1="1509.7" x2="370.0" y2="1509.7" stroke="#9a9a9a" stroke-width="1.2" />
<line x1="367.0" y1="1515.7" x2="370.0" y2="1515.7" stroke="#9a9a9a" stroke-width="1.2" />
<line x1="288.0" y1="1521.6" x2="310.0" y2="1521.6" stroke="#b4b4b4" stroke-width="1.6" />
<line x1="302.0" y1="1527.5" x2="310.0" y2="1527.5" stroke="#9a9a9a" stroke-width="1.4" />
<line x1="302.0" y1="1533.5" x2="310.0" y2="1533.5" stroke="#9a9a9a" stroke-width="1.4" />
<text x="361.0" y="1525.8" font-size="14" fill="#c4c4c4" text-anchor="end" stroke="none">18</text>
<line x1="364.0" y1="1521.6" x2="370.0" y2="1521.6" stroke="#b0b0b0" stroke-width="1.4" />
<line x1="367.0" y1="1527.5" x2="370.0" y2="1527.5" stroke="#9a9a9a" stroke-width="1.2" />
<line x1="367.0" y1="1533.5" x2="370.0" y2="1533.5" stroke="#9a9a9a" stroke-width="1.2" />
<line x1="288.0" y1="1539.4" x2="310.0" y2="1539.4" stroke="#b4b4b4" stroke-width="1.6" />
<line x1="302.0" y1="1545.3" x2="310.0" y2="1545.3" stroke="#9a9a9a" stroke-width="1.4" />
<line x1="302.0" y1="1551.3" x2="310.0" y2="1551.3" stroke="#9a9a9a" stroke-width="1.4" />
<text x="361.0" y="1543.6" font-size="14" fill="#c4c4c4" text-anchor="end" stroke="none">21</text>
<line x1="364.0" y1="1539.4" x2="370.0" y2="1539.4" stroke="#b0b0b0" stroke-width="1.4" />
<line x1="367.0" y1="1545.3" x2="370.0" y2="1545.3" stroke="#9a9a9a" stroke-width="1.2" />
<line x1="367.0" y1="1551.3" x2="370.0" y2="1551.3" stroke="#9a9a9a" stroke-width="1.2" />
<line x1="288.0" y1="1557.2" x2="310.0" y2="1557.2" stroke="#b4b4b4" stroke-width="1.6" />
<line x1="302.0" y1="1565.1" x2="310.0" y2="1565.1" stroke="#9a9a9a" stroke-width="1.4" />
<line x1="302.0" y1="1573.1" x2="310.0" y2="1573.1" stroke="#9a9a9a" stroke-width="1.4" />
<text x="361.0" y="1561.4" font-size="14" fill="#c4c4c4" text-anchor="end" stroke="none">24</text>
<line x1="364.0" y1="1557.2" x2="370.0" y2="1557.2" stroke="#b0b0b0" stroke-width="1.4" />
<line x1="367.0" y1="1565.1" x2="370.0" y2="1565.1" stroke="#9a9a9a" stroke-width="1.2" />
<line x1="367.0" y1="1573.1" x2="370.0" y2="1573.1" stroke="#9a9a9a" stroke-width="1.2" />
<line x1="288.0" y1="1581.0" x2="310.0" y2="1581.0" stroke="#b4b4b4" stroke-width="1.6" />
<line x1="302.0" y1="1587.7" x2="310.0" y2="1587.7" stroke="#9a9a9a" stroke-width="1.4" />
<line x1="302.0" y1="1594.3" x2="310.0" y2="1594.3" stroke="#9a9a9a" stroke-width="1.4" />
<text x="361.0" y="1585.2" font-size="14" fill="#c4c4c4" text-anchor="end" stroke="none">30</text>
<line x1="364.0" y1="1581.0" x2="370.0" y2="1581.0" stroke="#b0b0b0" stroke-width="1.4" />
<line x1="367.0" y1="1587.7" x2="370.0" y2="1587.7" stroke="#9a9a9a" stroke-width="1.2" />
<line x1="367.0" y1="1594.3" x2="370.0" y2="1594.3" stroke="#9a9a9a" stroke-width="1.2" />
<line x1="288.0" y1="1601.0" x2="310.0" y2="1601.0" stroke="#b4b4b4" stroke-width="1.6" />
<line x1="302.0" y1="1607.7" x2="310.0" y2="1607.7" stroke="#9a9a9a" stroke-width="1.4" />
<line x1="302.0" y1="1614.3" x2="310.0" y2="1614.3" stroke="#9a9a9a" stroke-width="1.4" />
<text x="361.0" y="1605.2" font-size="14" fill="#c4c4c4" text-anchor="end" stroke="none">35</text>
<line x1="364.0" y1="1601.0" x2="370.0" y2="1601.0" stroke="#b0b0b0" stroke-width="1.4" />
<line x1="367.0" y1="1607.7" x2="370.0" y2="1607.7" stroke="#9a9a9a" stroke-width="1.2" />
<line x1="367.0" y1="1614.3" x2="370.0" y2="1614.3" stroke="#9a9a9a" stroke-width="1.2" />
<line x1="288.0" y1="1621.0" x2="310.0" y2="1621.0" stroke="#b4b4b4" stroke-width="1.6" />
<line x1="302.0" y1="1627.7" x2="310.0" y2="1627.7" stroke="#9a9a9a" stroke-width="1.4" />
<line x1="302.0" y1="1634.3" x2="310.0" y2="1634.3" stroke="#9a9a9a" stroke-width="1.4" />
<text x="361.0" y="1625.2" font-size="14" fill="#c4c4c4" text-anchor="end" stroke="none">40</text>
<line x1="364.0" y1="1621.0" x2="370.0" y2="1621.0" stroke="#b0b0b0" stroke-width="1.4" />
<line x1="367.0" y1="1627.7" x2="370.0" y2="1627.7" stroke="#9a9a9a" stroke-width="1.2" />
<line x1="367.0" y1="1634.3" x2="370.0" y2="1634.3" stroke="#9a9a9a" stroke-width="1.2" />
<line x1="288.0" y1="1641.0" x2="310.0" y2="1641.0" stroke="#b4b4b4" stroke-width="1.6" />
<line x1="302.0" y1="1647.7" x2="310.0" y2="1647.7" stroke="#9a9a9a" stroke-width="1.4" />
<line x1="302.0" y1="1654.3" x2="310.0" y2="1654.3" stroke="#9a9a9a" stroke-width="1.4" />
<text x="361.0" y="1645.2" font-size="14" fill="#c4c4c4" text-anchor="end" stroke="none">45</text>
<line x1="364.0" y1="1641.0" x2="370.0" y2="1641.0" stroke="#b0b0b0" stroke-width="1.4" />
<line x1="367.0" y1="1647.7" x2="370.0" y2="1647.7" stroke="#9a9a9a" stroke-width="1.2" />
<line x1="367.0" y1="1654.3" x2="370.0" y2="1654.3" stroke="#9a9a9a" stroke-width="1.2" />
<line x1="288.0" y1="1661.0" x2="310.0" y2="1661.0" stroke="#b4b4b4" stroke-width="1.6" />
<line x1="302.0" y1="1667.7" x2="310.0" y2="1667.7" stroke="#9a9a9a" stroke-width="1.4" />
<line x1="302.0" y1="1674.3" x2="310.0" y2="1674.3" stroke="#9a9a9a" stroke-width="1.4" />
<text x="361.0" y="1665.2" font-size="14" fill="#c4c4c4" text-anchor="end" stroke="none">50</text>
<line x1="364.0" y1="1661.0" x2="370.0" y2="1661.0" stroke="#b0b0b0" stroke-width="1.4" />
<line x1="367.0" y1="1667.7" x2="370.0" y2="1667.7" stroke="#9a9a9a" stroke-width="1.2" />
<line x1="367.0" y1="1674.3" x2="370.0" y2="1674.3" stroke="#9a9a9a" stroke-width="1.2" />
<line x1="288.0" y1="1681.0" x2="310.0" y2="1681.0" stroke="#b4b4b4" stroke-width="1.6" />
<text x="361.0" y="1685.2" font-size="14" fill="#c4c4c4" text-anchor="end" stroke="none">60</text>
<line x1="364.0" y1="1681.0" x2="370.0" y2="1681.0" stroke="#b0b0b0" stroke-width="1.4" />
<rect x="311.0" y="1412.0" width="4.0" height="274.0" rx="2" fill="#3a3a3a" />
<rect x="371.0" y="1408.0" width="22.6" height="278.0" rx="1" fill="#363636" />
<rect x="297.0" y="1435" width="34.6" height="71" rx="3" fill="url(#capg)"/>
<line x1="297.0" y1="1470.5" x2="331.6" y2="1470.5" stroke="#3a3a3a" stroke-width="1.5" />
<line x1="287.0" y1="1486.0" x2="297.0" y2="1486.0" stroke="#fff" stroke-width="2" />
<rect x="353.8" y="1697.9" width="62.6" height="31.3" rx="8" fill="rgba(0,0,0,0.25)" />
<rect x="353.8" y="1696.7" width="62.6" height="31.3" rx="8" fill="#6a6a6a" />
<text x="365.0" y="1721.0" font-size="23" fill="#fff" stroke="#fff" stroke-width="0.5" textLength="40.0" lengthAdjust="spacingAndGlyphs">Bnc</text>
<rect x="45.5" y="1737.7" width="62.5" height="31.3" rx="8" fill="rgba(0,0,0,0.25)" />
<rect x="45.5" y="1736.5" width="62.5" height="31.3" rx="8" fill="#6a6a6a" />
<text x="77.0" y="1761.0" font-size="24" fill="#fff" font-weight="bold" text-anchor="middle">M</text>
<rect x="117.7" y="1737.7" width="62.6" height="31.3" rx="8" fill="rgba(0,0,0,0.25)" />
<rect x="117.7" y="1736.5" width="62.6" height="31.3" rx="8" fill="#6a6a6a" />
<text x="149.0" y="1761.0" font-size="24" fill="#fff" font-weight="bold" text-anchor="middle">S</text>
<rect x="281.6" y="1737.7" width="62.4" height="31.3" rx="8" fill="rgba(0,0,0,0.25)" />
<rect x="281.6" y="1736.5" width="62.4" height="31.3" rx="8" fill="#6a6a6a" />
<text x="313.0" y="1761.0" font-size="24" fill="#fff" font-weight="bold" text-anchor="middle">M</text>
<text x="59.5" y="1820.7" font-size="23.5" fill="#fff" stroke="#fff" stroke-width="0.5" textLength="112.0" lengthAdjust="spacingAndGlyphs">Soft Glider</text>
<text x="295.0" y="1820.7" font-size="23.5" fill="#fff" stroke="#fff" stroke-width="0.5" textLength="113.0" lengthAdjust="spacingAndGlyphs">Stereo Out</text>
<rect x="472.0" y="292.0" width="650.0" height="1548.0" rx="0" fill="#565656" />
<defs><clipPath id="hdr"><rect x="472" y="293" width="650" height="1547"/></clipPath></defs><g clip-path="url(#hdr)">
<rect x="472.0" y="271.1" width="650.0" height="182.0" rx="0" fill="#575757" />
<rect x="472.0" y="453.1" width="650.0" height="2.0" rx="0" fill="#3d3d3d" />
<rect x="512.0" y="271.1" width="2.0" height="182.0" rx="0" fill="#414141" />
<text x="492.0" y="371.1" font-size="27" fill="#fff" stroke="#fff" stroke-width="0.5" text-anchor="middle">2</text>
<g transform="translate(0 0.0)" fill="#22d63a"><path d="M561.5 333 C557 334 554 339 551 343 C548 346 542 346.5 538 350 C535 354 535.5 361 539 365 C543 368.5 550 368.5 554 366 C557 363 557.5 357 560 355 C562 353 566 352 566 349 C565.5 346.5 562 347.5 559.5 346.5 L558.5 345.5 C560 343 561.5 341 560 339 C559.5 337 561 335 561.5 333 Z"/><path d="M557 346.5 L584.5 318.5 L587.5 321.5 L560 349.5 Z"/><path d="M583 316 L589.5 309.5 L593.5 313.5 L587 320 Z"/><circle cx="585.8" cy="310.7" r="1.5"/><circle cx="582.7" cy="313.2" r="1.5"/><circle cx="592.2" cy="317" r="1.5"/><circle cx="589.6" cy="319.8" r="1.5"/></g>
<path d="M547.5 349.5 C551 347.5 554 349.0 558 351.0 C555 353.0 553.5 357.0 552.5 361.0 C551 364.0 548.5 364.0 547 362.0 C545 357.0 545 353.0 547.5 349.5 Z" fill="#575757" />
<circle cx="550.8" cy="350.6" r="1.6" fill="#22d63a" />
<circle cx="551.0" cy="354.0" r="1.6" fill="#22d63a" />
<rect x="541.5" y="357.5" width="5" height="4" fill="#575757" transform="rotate(40 544 359.5)"/>
<text x="614.8" y="321.4" font-size="26.8" fill="#fff" stroke="#fff" stroke-width="0.5" textLength="137.0" lengthAdjust="spacingAndGlyphs">Bass Guitar</text>
<rect x="616.0" y="340.6" width="82.0" height="32.0" rx="9" fill="rgba(0,0,0,0.3)" />
<rect x="616.0" y="339.1" width="82.0" height="32.0" rx="9" fill="#6a6a6a" />
<rect x="656.2" y="339.1" width="1.6" height="32.0" rx="0" fill="#575757" />
<text x="636.5" y="364.8" font-size="24.5" fill="#fff" stroke="#fff" stroke-width="0.5" text-anchor="middle">M</text>
<text x="677.5" y="364.8" font-size="24.5" fill="#fff" stroke="#fff" stroke-width="0.5" text-anchor="middle">S</text>
<rect x="709.8" y="340.6" width="81.9" height="32.0" rx="9" fill="rgba(0,0,0,0.3)" />
<rect x="709.8" y="339.1" width="81.9" height="32.0" rx="9" fill="#6a6a6a" />
<rect x="750.0" y="339.1" width="1.6" height="32.0" rx="0" fill="#575757" />
<text x="730.3" y="364.8" font-size="24.5" fill="#fff" stroke="#fff" stroke-width="0.5" text-anchor="middle">R</text>
<text x="771.2" y="364.8" font-size="24.5" fill="#fff" stroke="#fff" stroke-width="0.5" text-anchor="middle">I</text>
<rect x="803.8" y="340.6" width="122.1" height="32.2" rx="9" fill="rgba(0,0,0,0.3)" />
<rect x="803.8" y="338.9" width="122.1" height="32.5" rx="9" fill="#2b6fc3" />
<text x="864.8" y="364.8" font-size="25" fill="#fff" stroke="#fff" stroke-width="0.5" text-anchor="middle" textLength="55.0" lengthAdjust="spacingAndGlyphs">Track</text>
<rect x="937.8" y="337.1" width="98.2" height="36.0" rx="18" fill="#3d3d3d" />
<circle cx="987.6" cy="355.1" r="16" fill="#999999" />
<path d="M1062.5 371.7 A21.5 21.5 0 1 1 1087.1 371.7" fill="none" stroke="#3d3d3d" stroke-width="6.5" />
<circle cx="1074.8" cy="354.1" r="17" fill="#8f8f8f" />
<line x1="1074.8" y1="339.1" x2="1074.8" y2="345.1" stroke="#111" stroke-width="2.2" />
<line x1="1074.8" y1="332.6" x2="1074.8" y2="336.6" stroke="#5bd665" stroke-width="1.8" />
<path d="M561 401.1 l9 9.3 l-9 9.3" fill="none" stroke="#fff" stroke-width="2.2" stroke-linecap="round" stroke-linejoin="round"/>
<rect x="615.5" y="394.0" width="146.9" height="32.6" rx="10" fill="rgba(0,0,0,0.3)" />
<rect x="615.5" y="392.5" width="146.9" height="32.6" rx="10" fill="#268a3c" />
<text x="630.0" y="417.6" font-size="24.3" fill="#fff" stroke="#fff" stroke-width="0.5" textLength="51.7" lengthAdjust="spacingAndGlyphs">Read</text>
<path d="M743.3 405.8 l5 -5 l5 5 M743.3 411.8 l5 5 l5 -5" fill="none" stroke="#9fd4a8" stroke-width="2.2" stroke-linecap="round" stroke-linejoin="round"/>
<rect x="773.0" y="394.0" width="197.7" height="32.6" rx="10" fill="rgba(0,0,0,0.3)" />
<rect x="773.0" y="392.5" width="197.7" height="32.6" rx="10" fill="#474747" />
<text x="789.0" y="417.6" font-size="24.3" fill="#6db3f8" stroke="#6db3f8" stroke-width="0.5" textLength="143.0" lengthAdjust="spacingAndGlyphs">High Cut Freq</text>
<path d="M950.6 405.8 l5 -5 l5 5 M950.6 411.8 l5 5 l5 -5" fill="none" stroke="#7d9ab8" stroke-width="2.2" stroke-linecap="round" stroke-linejoin="round"/>
<rect x="982.2" y="393.1" width="115.8" height="31.8" rx="2" fill="#3e3e3e" />
<text x="1006.8" y="417.6" font-size="24.3" fill="#6db3f8" stroke="#6db3f8" stroke-width="0.5" textLength="66.6" lengthAdjust="spacingAndGlyphs">11400</text>
<rect x="472.0" y="455.0" width="650.0" height="182.0" rx="0" fill="#727272" />
<rect x="472.0" y="637.0" width="650.0" height="2.0" rx="0" fill="#3d3d3d" />
<rect x="512.0" y="455.0" width="2.0" height="182.0" rx="0" fill="#4a4a4a" />
<text x="492.0" y="555.0" font-size="27" fill="#fff" stroke="#fff" stroke-width="0.5" text-anchor="middle">3</text>
<path d="M535.6 502.6 H584.0 L596.4 508.6 V518.0 H535.6 Z" fill="#22d63a" />
<rect x="550.6" y="509.0" width="42.4" height="7.3" rx="1" fill="none" stroke="#2a5a30" stroke-width="1.3"/>
<line x1="552.6" y1="513.6" x2="590.6" y2="513.6" stroke="#2a5a30" stroke-width="1" />
<path d="M537.1 511.6 H549.6 V504.6 H537.1" fill="none" stroke="#2a5a30" stroke-width="1.2" />
<circle cx="539.6" cy="507.6" r="1.5" fill="#2a5a30" />
<circle cx="544.6" cy="507.6" r="1.5" fill="#2a5a30" />
<line x1="554.6" y1="518.0" x2="581.4" y2="545.6" stroke="#22d63a" stroke-width="2.2" />
<line x1="578.6" y1="518.0" x2="550.6" y2="545.6" stroke="#22d63a" stroke-width="2.2" />
<circle cx="551.0" cy="545.2" r="2.5" fill="#22d63a" />
<circle cx="581.1" cy="545.2" r="2.5" fill="#22d63a" />
<text x="614.8" y="505.3" font-size="26.8" fill="#fff" stroke="#fff" stroke-width="0.5" textLength="127.8" lengthAdjust="spacingAndGlyphs">Soft Glider</text>
<rect x="616.0" y="524.5" width="82.0" height="32.0" rx="9" fill="rgba(0,0,0,0.3)" />
<rect x="616.0" y="523.0" width="82.0" height="32.0" rx="9" fill="#7c7c7c" />
<rect x="656.2" y="523.0" width="1.6" height="32.0" rx="0" fill="#6a6a6a" />
<text x="636.5" y="548.7" font-size="24.5" fill="#fff" stroke="#fff" stroke-width="0.5" text-anchor="middle">M</text>
<text x="677.5" y="548.7" font-size="24.5" fill="#fff" stroke="#fff" stroke-width="0.5" text-anchor="middle">S</text>
<rect x="709.8" y="524.5" width="81.9" height="32.0" rx="9" fill="rgba(0,0,0,0.3)" />
<rect x="709.8" y="523.0" width="81.9" height="32.0" rx="9" fill="#7c7c7c" />
<rect x="750.0" y="523.0" width="1.6" height="32.0" rx="0" fill="#6a6a6a" />
<text x="730.3" y="548.7" font-size="24.5" fill="#d40f0f" stroke="#d40f0f" stroke-width="0.5" text-anchor="middle">R</text>
<text x="771.2" y="548.7" font-size="24.5" fill="#f5a31c" stroke="#f5a31c" stroke-width="0.5" text-anchor="middle">I</text>
<rect x="803.8" y="524.5" width="122.1" height="32.2" rx="9" fill="rgba(0,0,0,0.3)" />
<rect x="803.8" y="522.8" width="122.1" height="32.5" rx="9" fill="#2b6fc3" />
<text x="864.8" y="548.7" font-size="25" fill="#fff" stroke="#fff" stroke-width="0.5" text-anchor="middle" textLength="55.0" lengthAdjust="spacingAndGlyphs">Track</text>
<rect x="937.8" y="521.0" width="98.2" height="36.0" rx="18" fill="#3d3d3d" />
<circle cx="997.5" cy="539.0" r="16" fill="#999999" />
<path d="M1062.5 555.6 A21.5 21.5 0 1 1 1087.1 555.6" fill="none" stroke="#3d3d3d" stroke-width="6.5" />
<circle cx="1074.8" cy="538.0" r="17" fill="#8f8f8f" />
<line x1="1074.8" y1="523.0" x2="1074.8" y2="529.0" stroke="#111" stroke-width="2.2" />
<line x1="1074.8" y1="516.5" x2="1074.8" y2="520.5" stroke="#5bd665" stroke-width="1.8" />
<path d="M561 585.0 l9 9.3 l-9 9.3" fill="none" stroke="#fff" stroke-width="2.2" stroke-linecap="round" stroke-linejoin="round"/>
<rect x="615.5" y="577.9" width="146.9" height="32.6" rx="10" fill="rgba(0,0,0,0.3)" />
<rect x="615.5" y="576.4" width="146.9" height="32.6" rx="10" fill="#5d5d5d" />
<text x="630.0" y="601.5" font-size="24.3" fill="#6fe07a" stroke="#6fe07a" stroke-width="0.5" textLength="51.7" lengthAdjust="spacingAndGlyphs">Read</text>
<path d="M743.3 589.7 l5 -5 l5 5 M743.3 595.7 l5 5 l5 -5" fill="none" stroke="#7aae80" stroke-width="2.2" stroke-linecap="round" stroke-linejoin="round"/>
<rect x="773.0" y="577.9" width="197.7" height="32.6" rx="10" fill="rgba(0,0,0,0.3)" />
<rect x="773.0" y="576.4" width="197.7" height="32.6" rx="10" fill="#5e5e5e" />
<text x="789.0" y="601.5" font-size="24.3" fill="#f2e04f" stroke="#f2e04f" stroke-width="0.5" textLength="75.0" lengthAdjust="spacingAndGlyphs">Volume</text>
<path d="M950.6 589.7 l5 -5 l5 5 M950.6 595.7 l5 5 l5 -5" fill="none" stroke="#8a8a6a" stroke-width="2.2" stroke-linecap="round" stroke-linejoin="round"/>
<rect x="982.2" y="577.0" width="115.8" height="31.8" rx="2" fill="#4b4b4b" />
<text x="1001.5" y="601.5" font-size="24.3" fill="#f2e04f" stroke="#f2e04f" stroke-width="0.5" textLength="77.2" lengthAdjust="spacingAndGlyphs">-1.5 dB</text>
<rect x="472.0" y="638.9" width="650.0" height="182.0" rx="0" fill="#575757" />
<rect x="472.0" y="820.9" width="650.0" height="2.0" rx="0" fill="#3d3d3d" />
<rect x="512.0" y="638.9" width="2.0" height="182.0" rx="0" fill="#414141" />
<text x="492.0" y="738.9" font-size="27" fill="#fff" stroke="#fff" stroke-width="0.5" text-anchor="middle">4</text>
<path d="M535.6 686.5 H584.0 L596.4 692.5 V701.9 H535.6 Z" fill="#22d63a" />
<rect x="550.6" y="692.9" width="42.4" height="7.3" rx="1" fill="none" stroke="#2a5a30" stroke-width="1.3"/>
<line x1="552.6" y1="697.5" x2="590.6" y2="697.5" stroke="#2a5a30" stroke-width="1" />
<path d="M537.1 695.5 H549.6 V688.5 H537.1" fill="none" stroke="#2a5a30" stroke-width="1.2" />
<circle cx="539.6" cy="691.5" r="1.5" fill="#2a5a30" />
<circle cx="544.6" cy="691.5" r="1.5" fill="#2a5a30" />
<line x1="554.6" y1="701.9" x2="581.4" y2="729.5" stroke="#22d63a" stroke-width="2.2" />
<line x1="578.6" y1="701.9" x2="550.6" y2="729.5" stroke="#22d63a" stroke-width="2.2" />
<circle cx="551.0" cy="729.1" r="2.5" fill="#22d63a" />
<circle cx="581.1" cy="729.1" r="2.5" fill="#22d63a" />
<text x="614.8" y="689.2" font-size="26.8" fill="#fff" stroke="#fff" stroke-width="0.5" textLength="150.0" lengthAdjust="spacingAndGlyphs">Soft Glider 2</text>
<rect x="616.0" y="708.4" width="82.0" height="32.0" rx="9" fill="rgba(0,0,0,0.3)" />
<rect x="616.0" y="706.9" width="82.0" height="32.0" rx="9" fill="#6a6a6a" />
<rect x="656.2" y="706.9" width="1.6" height="32.0" rx="0" fill="#575757" />
<text x="636.5" y="732.6" font-size="24.5" fill="#fff" stroke="#fff" stroke-width="0.5" text-anchor="middle">M</text>
<text x="677.5" y="732.6" font-size="24.5" fill="#fff" stroke="#fff" stroke-width="0.5" text-anchor="middle">S</text>
<rect x="709.8" y="708.4" width="81.9" height="32.0" rx="9" fill="rgba(0,0,0,0.3)" />
<rect x="709.8" y="706.9" width="81.9" height="32.0" rx="9" fill="#6a6a6a" />
<rect x="750.0" y="706.9" width="1.6" height="32.0" rx="0" fill="#575757" />
<text x="730.3" y="732.6" font-size="24.5" fill="#fff" stroke="#fff" stroke-width="0.5" text-anchor="middle">R</text>
<text x="771.2" y="732.6" font-size="24.5" fill="#fff" stroke="#fff" stroke-width="0.5" text-anchor="middle">I</text>
<rect x="803.8" y="708.4" width="122.1" height="32.2" rx="9" fill="rgba(0,0,0,0.3)" />
<rect x="803.8" y="706.7" width="122.1" height="32.5" rx="9" fill="#2b6fc3" />
<text x="864.8" y="732.6" font-size="25" fill="#fff" stroke="#fff" stroke-width="0.5" text-anchor="middle" textLength="55.0" lengthAdjust="spacingAndGlyphs">Track</text>
<rect x="937.8" y="704.9" width="98.2" height="36.0" rx="18" fill="#3d3d3d" />
<circle cx="1001.8" cy="722.9" r="16" fill="#999999" />
<path d="M1062.5 739.5 A21.5 21.5 0 1 1 1087.1 739.5" fill="none" stroke="#3d3d3d" stroke-width="6.5" />
<path d="M1074.8 700.4 A21.5 21.5 0 0 0 1062.5 739.5" fill="none" stroke="#5bd665" stroke-width="6.5" />
<circle cx="1074.8" cy="721.9" r="17" fill="#8f8f8f" />
<line x1="1065.8" y1="731.9" x2="1068.8" y2="727.9" stroke="#111" stroke-width="2" />
<path d="M561 768.9 l9 9.3 l-9 9.3" fill="none" stroke="#fff" stroke-width="2.2" stroke-linecap="round" stroke-linejoin="round"/>
<rect x="615.5" y="761.8" width="146.9" height="32.6" rx="10" fill="rgba(0,0,0,0.3)" />
<rect x="615.5" y="760.3" width="146.9" height="32.6" rx="10" fill="#268a3c" />
<text x="630.0" y="785.4" font-size="24.3" fill="#fff" stroke="#fff" stroke-width="0.5" textLength="51.7" lengthAdjust="spacingAndGlyphs">Read</text>
<path d="M743.3 773.5999999999999 l5 -5 l5 5 M743.3 779.5999999999999 l5 5 l5 -5" fill="none" stroke="#9fd4a8" stroke-width="2.2" stroke-linecap="round" stroke-linejoin="round"/>
<rect x="773.0" y="761.8" width="197.7" height="32.6" rx="10" fill="rgba(0,0,0,0.3)" />
<rect x="773.0" y="760.3" width="197.7" height="32.6" rx="10" fill="#474747" />
<text x="789.0" y="785.4" font-size="24.3" fill="#72e27a" stroke="#72e27a" stroke-width="0.5" textLength="36.4" lengthAdjust="spacingAndGlyphs">Pan</text>
<path d="M950.6 773.5999999999999 l5 -5 l5 5 M950.6 779.5999999999999 l5 5 l5 -5" fill="none" stroke="#7aae80" stroke-width="2.2" stroke-linecap="round" stroke-linejoin="round"/>
<rect x="982.2" y="760.9" width="115.8" height="31.8" rx="2" fill="#3e3e3e" />
<text x="1022.8" y="785.4" font-size="24.3" fill="#72e27a" stroke="#72e27a" stroke-width="0.5" textLength="34.6" lengthAdjust="spacingAndGlyphs">-64</text>
<rect x="472.0" y="822.8" width="650.0" height="182.0" rx="0" fill="#575757" />
<rect x="472.0" y="1004.8" width="650.0" height="2.0" rx="0" fill="#3d3d3d" />
<rect x="512.0" y="822.8" width="2.0" height="182.0" rx="0" fill="#414141" />
<text x="492.0" y="922.8" font-size="27" fill="#fff" stroke="#fff" stroke-width="0.5" text-anchor="middle">5</text>
<path d="M535.6 870.4 H584.0 L596.4 876.4 V885.8 H535.6 Z" fill="#22d63a" />
<rect x="550.6" y="876.8" width="42.4" height="7.3" rx="1" fill="none" stroke="#2a5a30" stroke-width="1.3"/>
<line x1="552.6" y1="881.4" x2="590.6" y2="881.4" stroke="#2a5a30" stroke-width="1" />
<path d="M537.1 879.4 H549.6 V872.4 H537.1" fill="none" stroke="#2a5a30" stroke-width="1.2" />
<circle cx="539.6" cy="875.4" r="1.5" fill="#2a5a30" />
<circle cx="544.6" cy="875.4" r="1.5" fill="#2a5a30" />
<line x1="554.6" y1="885.8" x2="581.4" y2="913.4" stroke="#22d63a" stroke-width="2.2" />
<line x1="578.6" y1="885.8" x2="550.6" y2="913.4" stroke="#22d63a" stroke-width="2.2" />
<circle cx="551.0" cy="913.0" r="2.5" fill="#22d63a" />
<circle cx="581.1" cy="913.0" r="2.5" fill="#22d63a" />
<text x="614.8" y="873.1" font-size="26.8" fill="#fff" stroke="#fff" stroke-width="0.5" textLength="207.8" lengthAdjust="spacingAndGlyphs">Wurlitzer Modern</text>
<rect x="616.0" y="892.3" width="82.0" height="32.0" rx="9" fill="rgba(0,0,0,0.3)" />
<rect x="616.0" y="890.8" width="82.0" height="32.0" rx="9" fill="#6a6a6a" />
<rect x="656.2" y="890.8" width="1.6" height="32.0" rx="0" fill="#575757" />
<text x="636.5" y="916.5" font-size="24.5" fill="#fff" stroke="#fff" stroke-width="0.5" text-anchor="middle">M</text>
<text x="677.5" y="916.5" font-size="24.5" fill="#fff" stroke="#fff" stroke-width="0.5" text-anchor="middle">S</text>
<rect x="709.8" y="892.3" width="81.9" height="32.0" rx="9" fill="rgba(0,0,0,0.3)" />
<rect x="709.8" y="890.8" width="81.9" height="32.0" rx="9" fill="#6a6a6a" />
<rect x="750.0" y="890.8" width="1.6" height="32.0" rx="0" fill="#575757" />
<text x="730.3" y="916.5" font-size="24.5" fill="#fff" stroke="#fff" stroke-width="0.5" text-anchor="middle">R</text>
<text x="771.2" y="916.5" font-size="24.5" fill="#fff" stroke="#fff" stroke-width="0.5" text-anchor="middle">I</text>
<rect x="803.8" y="892.3" width="122.1" height="32.2" rx="9" fill="rgba(0,0,0,0.3)" />
<rect x="803.8" y="890.6" width="122.1" height="32.5" rx="9" fill="#2b6fc3" />
<text x="864.8" y="916.5" font-size="25" fill="#fff" stroke="#fff" stroke-width="0.5" text-anchor="middle" textLength="55.0" lengthAdjust="spacingAndGlyphs">Track</text>
<rect x="937.8" y="888.8" width="98.2" height="36.0" rx="18" fill="#3d3d3d" />
<circle cx="990.0" cy="906.8" r="16" fill="#999999" />
<path d="M1062.5 923.4 A21.5 21.5 0 1 1 1087.1 923.4" fill="none" stroke="#3d3d3d" stroke-width="6.5" />
<circle cx="1074.8" cy="905.8" r="17" fill="#8f8f8f" />
<line x1="1074.8" y1="890.8" x2="1074.8" y2="896.8" stroke="#111" stroke-width="2.2" />
<line x1="1074.8" y1="884.3" x2="1074.8" y2="888.3" stroke="#5bd665" stroke-width="1.8" />
<path d="M561 952.8 l9 9.3 l-9 9.3" fill="none" stroke="#fff" stroke-width="2.2" stroke-linecap="round" stroke-linejoin="round"/>
<rect x="615.5" y="945.7" width="146.9" height="32.6" rx="10" fill="rgba(0,0,0,0.3)" />
<rect x="615.5" y="944.2" width="146.9" height="32.6" rx="10" fill="#268a3c" />
<text x="630.0" y="969.3" font-size="24.3" fill="#fff" stroke="#fff" stroke-width="0.5" textLength="51.7" lengthAdjust="spacingAndGlyphs">Read</text>
<path d="M743.3 957.5 l5 -5 l5 5 M743.3 963.5 l5 5 l5 -5" fill="none" stroke="#9fd4a8" stroke-width="2.2" stroke-linecap="round" stroke-linejoin="round"/>
<rect x="773.0" y="945.7" width="197.7" height="32.6" rx="10" fill="rgba(0,0,0,0.3)" />
<rect x="773.0" y="944.2" width="197.7" height="32.6" rx="10" fill="#474747" />
<text x="789.0" y="969.3" font-size="24.3" fill="#6db3f8" stroke="#6db3f8" stroke-width="0.5" textLength="143.0" lengthAdjust="spacingAndGlyphs">High Cut Freq</text>
<path d="M950.6 957.5 l5 -5 l5 5 M950.6 963.5 l5 5 l5 -5" fill="none" stroke="#7d9ab8" stroke-width="2.2" stroke-linecap="round" stroke-linejoin="round"/>
<rect x="982.2" y="944.8" width="115.8" height="31.8" rx="2" fill="#3e3e3e" />
<text x="995.5" y="969.3" font-size="24.3" fill="#6db3f8" stroke="#6db3f8" stroke-width="0.5" textLength="89.2" lengthAdjust="spacingAndGlyphs">7850 Hz</text>
<rect x="472.0" y="1006.7" width="650.0" height="182.0" rx="0" fill="#575757" />
<rect x="472.0" y="1188.7" width="650.0" height="2.0" rx="0" fill="#3d3d3d" />
<rect x="512.0" y="1006.7" width="2.0" height="182.0" rx="0" fill="#414141" />
<text x="492.0" y="1106.7" font-size="27" fill="#fff" stroke="#fff" stroke-width="0.5" text-anchor="middle">6</text>
<path d="M535.6 1054.3 H584.0 L596.4 1060.3 V1069.7 H535.6 Z" fill="#22d63a" />
<rect x="550.6" y="1060.7" width="42.4" height="7.3" rx="1" fill="none" stroke="#2a5a30" stroke-width="1.3"/>
<line x1="552.6" y1="1065.3" x2="590.6" y2="1065.3" stroke="#2a5a30" stroke-width="1" />
<path d="M537.1 1063.3 H549.6 V1056.3 H537.1" fill="none" stroke="#2a5a30" stroke-width="1.2" />
<circle cx="539.6" cy="1059.3" r="1.5" fill="#2a5a30" />
<circle cx="544.6" cy="1059.3" r="1.5" fill="#2a5a30" />
<line x1="554.6" y1="1069.7" x2="581.4" y2="1097.3" stroke="#22d63a" stroke-width="2.2" />
<line x1="578.6" y1="1069.7" x2="550.6" y2="1097.3" stroke="#22d63a" stroke-width="2.2" />
<circle cx="551.0" cy="1096.9" r="2.5" fill="#22d63a" />
<circle cx="581.1" cy="1096.9" r="2.5" fill="#22d63a" />
<text x="614.8" y="1057.0" font-size="26.8" fill="#fff" stroke="#fff" stroke-width="0.5" textLength="229.4" lengthAdjust="spacingAndGlyphs">Wurlitzer Modern 2</text>
<rect x="616.0" y="1076.2" width="82.0" height="32.0" rx="9" fill="rgba(0,0,0,0.3)" />
<rect x="616.0" y="1074.7" width="82.0" height="32.0" rx="9" fill="#6a6a6a" />
<rect x="656.2" y="1074.7" width="1.6" height="32.0" rx="0" fill="#575757" />
<text x="636.5" y="1100.4" font-size="24.5" fill="#fff" stroke="#fff" stroke-width="0.5" text-anchor="middle">M</text>
<text x="677.5" y="1100.4" font-size="24.5" fill="#fff" stroke="#fff" stroke-width="0.5" text-anchor="middle">S</text>
<rect x="709.8" y="1076.2" width="81.9" height="32.0" rx="9" fill="rgba(0,0,0,0.3)" />
<rect x="709.8" y="1074.7" width="81.9" height="32.0" rx="9" fill="#6a6a6a" />
<rect x="750.0" y="1074.7" width="1.6" height="32.0" rx="0" fill="#575757" />
<text x="730.3" y="1100.4" font-size="24.5" fill="#fff" stroke="#fff" stroke-width="0.5" text-anchor="middle">R</text>
<text x="771.2" y="1100.4" font-size="24.5" fill="#fff" stroke="#fff" stroke-width="0.5" text-anchor="middle">I</text>
<rect x="803.8" y="1076.2" width="122.1" height="32.2" rx="9" fill="rgba(0,0,0,0.3)" />
<rect x="803.8" y="1074.5" width="122.1" height="32.5" rx="9" fill="#2b6fc3" />
<text x="864.8" y="1100.4" font-size="25" fill="#fff" stroke="#fff" stroke-width="0.5" text-anchor="middle" textLength="55.0" lengthAdjust="spacingAndGlyphs">Track</text>
<rect x="937.8" y="1072.7" width="98.2" height="36.0" rx="18" fill="#3d3d3d" />
<circle cx="990.0" cy="1090.7" r="16" fill="#999999" />
<path d="M1062.5 1107.3 A21.5 21.5 0 1 1 1087.1 1107.3" fill="none" stroke="#3d3d3d" stroke-width="6.5" />
<circle cx="1074.8" cy="1089.7" r="17" fill="#8f8f8f" />
<line x1="1074.8" y1="1074.7" x2="1074.8" y2="1080.7" stroke="#111" stroke-width="2.2" />
<line x1="1074.8" y1="1068.2" x2="1074.8" y2="1072.2" stroke="#5bd665" stroke-width="1.8" />
<path d="M561 1136.7 l9 9.3 l-9 9.3" fill="none" stroke="#fff" stroke-width="2.2" stroke-linecap="round" stroke-linejoin="round"/>
<rect x="615.5" y="1129.6" width="146.9" height="32.6" rx="10" fill="rgba(0,0,0,0.3)" />
<rect x="615.5" y="1128.1" width="146.9" height="32.6" rx="10" fill="#268a3c" />
<text x="630.0" y="1153.2" font-size="24.3" fill="#fff" stroke="#fff" stroke-width="0.5" textLength="51.7" lengthAdjust="spacingAndGlyphs">Read</text>
<path d="M743.3 1141.4 l5 -5 l5 5 M743.3 1147.4 l5 5 l5 -5" fill="none" stroke="#9fd4a8" stroke-width="2.2" stroke-linecap="round" stroke-linejoin="round"/>
<rect x="773.0" y="1129.6" width="197.7" height="32.6" rx="10" fill="rgba(0,0,0,0.3)" />
<rect x="773.0" y="1128.1" width="197.7" height="32.6" rx="10" fill="#474747" />
<text x="789.0" y="1153.2" font-size="24.3" fill="#6db3f8" stroke="#6db3f8" stroke-width="0.5" textLength="143.0" lengthAdjust="spacingAndGlyphs">High Cut Freq</text>
<path d="M950.6 1141.4 l5 -5 l5 5 M950.6 1147.4 l5 5 l5 -5" fill="none" stroke="#7d9ab8" stroke-width="2.2" stroke-linecap="round" stroke-linejoin="round"/>
<rect x="982.2" y="1128.7" width="115.8" height="31.8" rx="2" fill="#3e3e3e" />
<text x="995.5" y="1153.2" font-size="24.3" fill="#6db3f8" stroke="#6db3f8" stroke-width="0.5" textLength="89.2" lengthAdjust="spacingAndGlyphs">1470 Hz</text>
<rect x="472.0" y="1190.6" width="650.0" height="182.0" rx="0" fill="#575757" />
<rect x="472.0" y="1372.6" width="650.0" height="2.0" rx="0" fill="#3d3d3d" />
<rect x="512.0" y="1190.6" width="2.0" height="182.0" rx="0" fill="#414141" />
<text x="492.0" y="1290.6" font-size="27" fill="#fff" stroke="#fff" stroke-width="0.5" text-anchor="middle">7</text>
<path d="M535.6 1238.1999999999998 H584.0 L596.4 1244.1999999999998 V1253.6 H535.6 Z" fill="#22d63a" />
<rect x="550.6" y="1244.6" width="42.4" height="7.3" rx="1" fill="none" stroke="#2a5a30" stroke-width="1.3"/>
<line x1="552.6" y1="1249.2" x2="590.6" y2="1249.2" stroke="#2a5a30" stroke-width="1" />
<path d="M537.1 1247.1999999999998 H549.6 V1240.1999999999998 H537.1" fill="none" stroke="#2a5a30" stroke-width="1.2" />
<circle cx="539.6" cy="1243.2" r="1.5" fill="#2a5a30" />
<circle cx="544.6" cy="1243.2" r="1.5" fill="#2a5a30" />
<line x1="554.6" y1="1253.6" x2="581.4" y2="1281.2" stroke="#22d63a" stroke-width="2.2" />
<line x1="578.6" y1="1253.6" x2="550.6" y2="1281.2" stroke="#22d63a" stroke-width="2.2" />
<circle cx="551.0" cy="1280.8" r="2.5" fill="#22d63a" />
<circle cx="581.1" cy="1280.8" r="2.5" fill="#22d63a" />
<text x="614.8" y="1240.9" font-size="26.8" fill="#fff" stroke="#fff" stroke-width="0.5" textLength="230.0" lengthAdjust="spacingAndGlyphs">Wurlitzer Modern 3</text>
<rect x="616.0" y="1260.1" width="82.0" height="32.0" rx="9" fill="rgba(0,0,0,0.3)" />
<rect x="616.0" y="1258.6" width="82.0" height="32.0" rx="9" fill="#6a6a6a" />
<rect x="656.2" y="1258.6" width="1.6" height="32.0" rx="0" fill="#575757" />
<text x="636.5" y="1284.3" font-size="24.5" fill="#fff" stroke="#fff" stroke-width="0.5" text-anchor="middle">M</text>
<text x="677.5" y="1284.3" font-size="24.5" fill="#fff" stroke="#fff" stroke-width="0.5" text-anchor="middle">S</text>
<rect x="709.8" y="1260.1" width="81.9" height="32.0" rx="9" fill="rgba(0,0,0,0.3)" />
<rect x="709.8" y="1258.6" width="81.9" height="32.0" rx="9" fill="#6a6a6a" />
<rect x="750.0" y="1258.6" width="1.6" height="32.0" rx="0" fill="#575757" />
<text x="730.3" y="1284.3" font-size="24.5" fill="#fff" stroke="#fff" stroke-width="0.5" text-anchor="middle">R</text>
<text x="771.2" y="1284.3" font-size="24.5" fill="#fff" stroke="#fff" stroke-width="0.5" text-anchor="middle">I</text>
<rect x="803.8" y="1260.1" width="122.1" height="32.2" rx="9" fill="rgba(0,0,0,0.3)" />
<rect x="803.8" y="1258.4" width="122.1" height="32.5" rx="9" fill="#2b6fc3" />
<text x="864.8" y="1284.3" font-size="25" fill="#fff" stroke="#fff" stroke-width="0.5" text-anchor="middle" textLength="55.0" lengthAdjust="spacingAndGlyphs">Track</text>
<rect x="937.8" y="1256.6" width="98.2" height="36.0" rx="18" fill="#3d3d3d" />
<circle cx="990.0" cy="1274.6" r="16" fill="#999999" />
<path d="M1062.5 1291.2 A21.5 21.5 0 1 1 1087.1 1291.2" fill="none" stroke="#3d3d3d" stroke-width="6.5" />
<circle cx="1074.8" cy="1273.6" r="17" fill="#8f8f8f" />
<line x1="1074.8" y1="1258.6" x2="1074.8" y2="1264.6" stroke="#111" stroke-width="2.2" />
<line x1="1074.8" y1="1252.1" x2="1074.8" y2="1256.1" stroke="#5bd665" stroke-width="1.8" />
<path d="M561 1320.6 l9 9.3 l-9 9.3" fill="none" stroke="#fff" stroke-width="2.2" stroke-linecap="round" stroke-linejoin="round"/>
<rect x="615.5" y="1313.5" width="146.9" height="32.6" rx="10" fill="rgba(0,0,0,0.3)" />
<rect x="615.5" y="1312.0" width="146.9" height="32.6" rx="10" fill="#268a3c" />
<text x="630.0" y="1337.1" font-size="24.3" fill="#fff" stroke="#fff" stroke-width="0.5" textLength="51.7" lengthAdjust="spacingAndGlyphs">Read</text>
<path d="M743.3 1325.3 l5 -5 l5 5 M743.3 1331.3 l5 5 l5 -5" fill="none" stroke="#9fd4a8" stroke-width="2.2" stroke-linecap="round" stroke-linejoin="round"/>
<rect x="773.0" y="1313.5" width="197.7" height="32.6" rx="10" fill="rgba(0,0,0,0.3)" />
<rect x="773.0" y="1312.0" width="197.7" height="32.6" rx="10" fill="#474747" />
<text x="789.0" y="1337.1" font-size="24.3" fill="#6db3f8" stroke="#6db3f8" stroke-width="0.5" textLength="143.0" lengthAdjust="spacingAndGlyphs">High Cut Freq</text>
<path d="M950.6 1325.3 l5 -5 l5 5 M950.6 1331.3 l5 5 l5 -5" fill="none" stroke="#7d9ab8" stroke-width="2.2" stroke-linecap="round" stroke-linejoin="round"/>
<rect x="982.2" y="1312.6" width="115.8" height="31.8" rx="2" fill="#3e3e3e" />
<text x="1002.2" y="1337.1" font-size="24.3" fill="#6db3f8" stroke="#6db3f8" stroke-width="0.5" textLength="75.8" lengthAdjust="spacingAndGlyphs">520 Hz</text>
<rect x="472.0" y="1374.5" width="650.0" height="182.0" rx="0" fill="#575757" />
<rect x="472.0" y="1556.5" width="650.0" height="2.0" rx="0" fill="#3d3d3d" />
<rect x="512.0" y="1374.5" width="2.0" height="182.0" rx="0" fill="#414141" />
<text x="492.0" y="1474.5" font-size="27" fill="#fff" stroke="#fff" stroke-width="0.5" text-anchor="middle">8</text>
<circle cx="565.2" cy="1437.0" r="20.2" fill="none" stroke="#22d63a" stroke-width="2.2"/>
<circle cx="565.2" cy="1442.0" r="3.2" fill="#22d63a" />
<line x1="565.2" y1="1442.0" x2="565.2" y2="1452.0" stroke="#22d63a" stroke-width="1.6" />
<path d="M560.7 1452.0 h9 l1 13 h-11 z" fill="#22d63a" />
<line x1="553.2" y1="1454.0" x2="547.2" y2="1465.0" stroke="#22d63a" stroke-width="2" />
<circle cx="547.2" cy="1465.0" r="2.2" fill="#22d63a" />
<line x1="577.2" y1="1454.0" x2="583.2" y2="1465.0" stroke="#22d63a" stroke-width="2" />
<circle cx="583.2" cy="1465.0" r="2.2" fill="#22d63a" />
<text x="614.8" y="1424.8" font-size="26.8" fill="#fff" stroke="#fff" stroke-width="0.5" textLength="222.0" lengthAdjust="spacingAndGlyphs">Kick 1 - Video Star</text>
<rect x="616.0" y="1444.0" width="82.0" height="32.0" rx="9" fill="rgba(0,0,0,0.3)" />
<rect x="616.0" y="1442.5" width="82.0" height="32.0" rx="9" fill="#6a6a6a" />
<rect x="656.2" y="1442.5" width="1.6" height="32.0" rx="0" fill="#575757" />
<text x="636.5" y="1468.2" font-size="24.5" fill="#fff" stroke="#fff" stroke-width="0.5" text-anchor="middle">M</text>
<text x="677.5" y="1468.2" font-size="24.5" fill="#fff" stroke="#fff" stroke-width="0.5" text-anchor="middle">S</text>
<rect x="709.8" y="1444.0" width="81.9" height="32.0" rx="9" fill="rgba(0,0,0,0.3)" />
<rect x="709.8" y="1442.5" width="81.9" height="32.0" rx="9" fill="#6a6a6a" />
<rect x="750.0" y="1442.5" width="1.6" height="32.0" rx="0" fill="#575757" />
<text x="730.3" y="1468.2" font-size="24.5" fill="#fff" stroke="#fff" stroke-width="0.5" text-anchor="middle">R</text>
<text x="771.2" y="1468.2" font-size="24.5" fill="#fff" stroke="#fff" stroke-width="0.5" text-anchor="middle">I</text>
<rect x="803.8" y="1444.0" width="122.1" height="32.2" rx="9" fill="rgba(0,0,0,0.3)" />
<rect x="803.8" y="1442.3" width="122.1" height="32.5" rx="9" fill="#2b6fc3" />
<text x="864.8" y="1468.2" font-size="25" fill="#fff" stroke="#fff" stroke-width="0.5" text-anchor="middle" textLength="55.0" lengthAdjust="spacingAndGlyphs">Track</text>
<rect x="937.8" y="1440.5" width="98.2" height="36.0" rx="18" fill="#3d3d3d" />
<circle cx="999.0" cy="1458.5" r="16" fill="#999999" />
<path d="M1062.5 1475.1 A21.5 21.5 0 1 1 1087.1 1475.1" fill="none" stroke="#3d3d3d" stroke-width="6.5" />
<circle cx="1074.8" cy="1457.5" r="17" fill="#8f8f8f" />
<line x1="1074.8" y1="1442.5" x2="1074.8" y2="1448.5" stroke="#111" stroke-width="2.2" />
<line x1="1074.8" y1="1436.0" x2="1074.8" y2="1440.0" stroke="#5bd665" stroke-width="1.8" />
<path d="M561 1504.5 l9 9.3 l-9 9.3" fill="none" stroke="#fff" stroke-width="2.2" stroke-linecap="round" stroke-linejoin="round"/>
<rect x="615.5" y="1497.4" width="146.9" height="32.6" rx="10" fill="rgba(0,0,0,0.3)" />
<rect x="615.5" y="1495.9" width="146.9" height="32.6" rx="10" fill="#268a3c" />
<text x="630.0" y="1521.0" font-size="24.3" fill="#fff" stroke="#fff" stroke-width="0.5" textLength="51.7" lengthAdjust="spacingAndGlyphs">Read</text>
<path d="M743.3 1509.2 l5 -5 l5 5 M743.3 1515.2 l5 5 l5 -5" fill="none" stroke="#9fd4a8" stroke-width="2.2" stroke-linecap="round" stroke-linejoin="round"/>
<rect x="773.0" y="1497.4" width="197.7" height="32.6" rx="10" fill="rgba(0,0,0,0.3)" />
<rect x="773.0" y="1495.9" width="197.7" height="32.6" rx="10" fill="#474747" />
<text x="789.0" y="1521.0" font-size="24.3" fill="#6db3f8" stroke="#6db3f8" stroke-width="0.5" textLength="143.0" lengthAdjust="spacingAndGlyphs">High Cut Freq</text>
<path d="M950.6 1509.2 l5 -5 l5 5 M950.6 1515.2 l5 5 l5 -5" fill="none" stroke="#7d9ab8" stroke-width="2.2" stroke-linecap="round" stroke-linejoin="round"/>
<rect x="982.2" y="1496.5" width="115.8" height="31.8" rx="2" fill="#3e3e3e" />
<text x="1006.8" y="1521.0" font-size="24.3" fill="#6db3f8" stroke="#6db3f8" stroke-width="0.5" textLength="66.6" lengthAdjust="spacingAndGlyphs">20000</text>
<rect x="472.0" y="1558.4" width="650.0" height="182.0" rx="0" fill="#575757" />
<rect x="472.0" y="1740.4" width="650.0" height="2.0" rx="0" fill="#3d3d3d" />
<rect x="512.0" y="1558.4" width="2.0" height="182.0" rx="0" fill="#414141" />
<text x="492.0" y="1658.4" font-size="27" fill="#fff" stroke="#fff" stroke-width="0.5" text-anchor="middle">9</text>
<g transform="translate(0 0.0)"><ellipse cx="553" cy="1601.4" rx="14.8" ry="1.9" fill="#22d63a"/><path d="M550 1600 Q553 1595.5 556 1600 Z" fill="#22d63a"/><rect x="552.2" y="1596" width="1.6" height="4" fill="#22d63a"/><line x1="537.6" y1="1608.5" x2="545.5" y2="1604" stroke="#22d63a" stroke-width="1.8"/><line x1="547" y1="1602" x2="547" y2="1645" stroke="#22d63a" stroke-width="1.8"/><path d="M539.6 1649.3 L547 1644 L554.5 1649.3" fill="none" stroke="#22d63a" stroke-width="1.8"/><path d="M537.3 1617.5 H551 L557.5 1620.8 V1625 L551 1635.6 H537.3 Z" fill="#22d63a"/><rect x="552.4" y="1608.3" width="13.4" height="10.5" fill="#22d63a"/><rect x="567.8" y="1608.3" width="13.2" height="10.5" fill="#22d63a"/><path d="M575 1620.5 H591.5 V1630.8 H582 L577 1625 Z" fill="#22d63a"/><ellipse cx="585.5" cy="1611.5" rx="6.5" ry="1.6" fill="#22d63a"/><line x1="585" y1="1605" x2="585" y2="1645" stroke="#22d63a" stroke-width="1.8"/><path d="M577.3 1649 L585 1644 L592.5 1649" fill="none" stroke="#22d63a" stroke-width="1.8"/><circle cx="566.5" cy="1634.7" r="15.5" fill="#575757"/><circle cx="566.5" cy="1634.7" r="13.2" fill="none" stroke="#22d63a" stroke-width="2"/></g>
<text x="614.8" y="1608.7" font-size="26.8" fill="#fff" stroke="#fff" stroke-width="0.5" textLength="176.6" lengthAdjust="spacingAndGlyphs">Portland Snare</text>
<rect x="616.0" y="1627.9" width="82.0" height="32.0" rx="9" fill="rgba(0,0,0,0.3)" />
<rect x="616.0" y="1626.4" width="82.0" height="32.0" rx="9" fill="#6a6a6a" />
<rect x="656.2" y="1626.4" width="1.6" height="32.0" rx="0" fill="#575757" />
<text x="636.5" y="1652.1" font-size="24.5" fill="#fff" stroke="#fff" stroke-width="0.5" text-anchor="middle">M</text>
<text x="677.5" y="1652.1" font-size="24.5" fill="#fff" stroke="#fff" stroke-width="0.5" text-anchor="middle">S</text>
<rect x="709.8" y="1627.9" width="81.9" height="32.0" rx="9" fill="rgba(0,0,0,0.3)" />
<rect x="709.8" y="1626.4" width="81.9" height="32.0" rx="9" fill="#6a6a6a" />
<rect x="750.0" y="1626.4" width="1.6" height="32.0" rx="0" fill="#575757" />
<text x="730.3" y="1652.1" font-size="24.5" fill="#fff" stroke="#fff" stroke-width="0.5" text-anchor="middle">R</text>
<text x="771.2" y="1652.1" font-size="24.5" fill="#fff" stroke="#fff" stroke-width="0.5" text-anchor="middle">I</text>
<rect x="803.8" y="1627.9" width="122.1" height="32.2" rx="9" fill="rgba(0,0,0,0.3)" />
<rect x="803.8" y="1626.2" width="122.1" height="32.5" rx="9" fill="#2b6fc3" />
<text x="864.8" y="1652.1" font-size="25" fill="#fff" stroke="#fff" stroke-width="0.5" text-anchor="middle" textLength="55.0" lengthAdjust="spacingAndGlyphs">Track</text>
<rect x="937.8" y="1624.4" width="98.2" height="36.0" rx="18" fill="#3d3d3d" />
<circle cx="977.0" cy="1642.4" r="16" fill="#999999" />
<path d="M1062.5 1659.0 A21.5 21.5 0 1 1 1087.1 1659.0" fill="none" stroke="#3d3d3d" stroke-width="6.5" />
<circle cx="1074.8" cy="1641.4" r="17" fill="#8f8f8f" />
<line x1="1074.8" y1="1626.4" x2="1074.8" y2="1632.4" stroke="#111" stroke-width="2.2" />
<line x1="1074.8" y1="1619.9" x2="1074.8" y2="1623.9" stroke="#5bd665" stroke-width="1.8" />
<path d="M561 1688.4 l9 9.3 l-9 9.3" fill="none" stroke="#fff" stroke-width="2.2" stroke-linecap="round" stroke-linejoin="round"/>
<rect x="615.5" y="1681.3" width="146.9" height="32.6" rx="10" fill="rgba(0,0,0,0.3)" />
<rect x="615.5" y="1679.8" width="146.9" height="32.6" rx="10" fill="#268a3c" />
<text x="630.0" y="1704.9" font-size="24.3" fill="#fff" stroke="#fff" stroke-width="0.5" textLength="51.7" lengthAdjust="spacingAndGlyphs">Read</text>
<path d="M743.3 1693.1000000000001 l5 -5 l5 5 M743.3 1699.1000000000001 l5 5 l5 -5" fill="none" stroke="#9fd4a8" stroke-width="2.2" stroke-linecap="round" stroke-linejoin="round"/>
<rect x="773.0" y="1681.3" width="197.7" height="32.6" rx="10" fill="rgba(0,0,0,0.3)" />
<rect x="773.0" y="1679.8" width="197.7" height="32.6" rx="10" fill="#474747" />
<text x="789.0" y="1704.9" font-size="24.3" fill="#6db3f8" stroke="#6db3f8" stroke-width="0.5" textLength="143.0" lengthAdjust="spacingAndGlyphs">High Cut Freq</text>
<path d="M950.6 1693.1000000000001 l5 -5 l5 5 M950.6 1699.1000000000001 l5 5 l5 -5" fill="none" stroke="#7d9ab8" stroke-width="2.2" stroke-linecap="round" stroke-linejoin="round"/>
<rect x="982.2" y="1680.4" width="115.8" height="31.8" rx="2" fill="#3e3e3e" />
<text x="1006.8" y="1704.9" font-size="24.3" fill="#6db3f8" stroke="#6db3f8" stroke-width="0.5" textLength="66.6" lengthAdjust="spacingAndGlyphs">20000</text>
<rect x="472.0" y="1742.3" width="650.0" height="182.0" rx="0" fill="#575757" />
<rect x="472.0" y="1924.3" width="650.0" height="2.0" rx="0" fill="#3d3d3d" />
<rect x="512.0" y="1742.3" width="2.0" height="182.0" rx="0" fill="#414141" />
<text x="492.0" y="1842.3" font-size="27" fill="#fff" stroke="#fff" stroke-width="0.5" text-anchor="middle">10</text>
<g transform="translate(0 0.0)"><path d="M542 1800 Q565 1811 588 1800 V1822 Q565 1831 542 1822 Z" fill="#22d63a"/><path d="M540 1820 Q565 1830 590 1820 V1824 Q589 1831 565 1831.5 Q541 1831 540 1824 Z" fill="#22d63a"/><path d="M541 1820.5 Q565 1830.5 589 1820.5" fill="none" stroke="#575757" stroke-width="1.3"/><ellipse cx="565" cy="1794" rx="25.2" ry="8.4" fill="#22d63a"/><ellipse cx="565" cy="1793.2" rx="23.3" ry="6.1" fill="#575757"/><path d="M540.5 1796 Q542 1802.8 565 1803.2 Q588 1802.8 589.5 1796" fill="none" stroke="#22d63a" stroke-width="2.5"/><path d="M542 1802.5 Q565 1808 588 1802.5" fill="none" stroke="#575757" stroke-width="1.3"/><line x1="546.9" y1="1804" x2="546.9" y2="1824" stroke="#575757" stroke-width="1.4"/><circle cx="546.9" cy="1812.5" r="1.9" fill="#575757"/><line x1="557.6" y1="1804" x2="557.6" y2="1824" stroke="#575757" stroke-width="1.4"/><circle cx="557.6" cy="1815.6" r="1.9" fill="#575757"/><line x1="572.9" y1="1804" x2="572.9" y2="1824" stroke="#575757" stroke-width="1.4"/><circle cx="572.9" cy="1815.6" r="1.9" fill="#575757"/><line x1="583.6" y1="1804" x2="583.6" y2="1824" stroke="#575757" stroke-width="1.4"/><circle cx="583.6" cy="1812.5" r="1.9" fill="#575757"/></g>
<text x="614.8" y="1792.6" font-size="26.8" fill="#fff" stroke="#fff" stroke-width="0.5" textLength="127.0" lengthAdjust="spacingAndGlyphs">Fill Snare 1</text>
<rect x="616.0" y="1811.8" width="82.0" height="32.0" rx="9" fill="rgba(0,0,0,0.3)" />
<rect x="616.0" y="1810.3" width="82.0" height="32.0" rx="9" fill="#6a6a6a" />
<rect x="656.2" y="1810.3" width="1.6" height="32.0" rx="0" fill="#575757" />
<text x="636.5" y="1836.0" font-size="24.5" fill="#fff" stroke="#fff" stroke-width="0.5" text-anchor="middle">M</text>
<text x="677.5" y="1836.0" font-size="24.5" fill="#fff" stroke="#fff" stroke-width="0.5" text-anchor="middle">S</text>
<rect x="709.8" y="1811.8" width="81.9" height="32.0" rx="9" fill="rgba(0,0,0,0.3)" />
<rect x="709.8" y="1810.3" width="81.9" height="32.0" rx="9" fill="#6a6a6a" />
<rect x="750.0" y="1810.3" width="1.6" height="32.0" rx="0" fill="#575757" />
<text x="730.3" y="1836.0" font-size="24.5" fill="#fff" stroke="#fff" stroke-width="0.5" text-anchor="middle">R</text>
<text x="771.2" y="1836.0" font-size="24.5" fill="#fff" stroke="#fff" stroke-width="0.5" text-anchor="middle">I</text>
<rect x="803.8" y="1811.8" width="122.1" height="32.2" rx="9" fill="rgba(0,0,0,0.3)" />
<rect x="803.8" y="1810.1" width="122.1" height="32.5" rx="9" fill="#2b6fc3" />
<text x="864.8" y="1836.0" font-size="25" fill="#fff" stroke="#fff" stroke-width="0.5" text-anchor="middle" textLength="55.0" lengthAdjust="spacingAndGlyphs">Track</text>
<rect x="937.8" y="1808.3" width="98.2" height="36.0" rx="18" fill="#3d3d3d" />
<circle cx="970.0" cy="1826.3" r="16" fill="#999999" />
<path d="M1062.5 1842.9 A21.5 21.5 0 1 1 1087.1 1842.9" fill="none" stroke="#3d3d3d" stroke-width="6.5" />
<circle cx="1074.8" cy="1825.3" r="17" fill="#8f8f8f" />
<path d="M1074.8 1803.8 A21.5 21.5 0 0 0 1062.5 1807.7" fill="none" stroke="#5bd665" stroke-width="6.5" />
<circle cx="1074.8" cy="1825.3" r="17" fill="#8f8f8f" />
<line x1="1066.2" y1="1813.0" x2="1069.6" y2="1817.9" stroke="#111" stroke-width="2.2" />
</g>
<rect x="1122.0" y="216.5" width="1816.0" height="75.5" rx="0" fill="#333333" />
<rect x="1122.0" y="216.5" width="1816.0" height="1.8" rx="0" fill="#262626" />
<rect x="1148.0" y="218.3" width="1666.0" height="35.3" rx="0" fill="#575757" />
<rect x="1122.0" y="253.6" width="1816.0" height="2.4" rx="0" fill="#222222" />
<path d="M1123 221 L1136 233 L1123 245 Z" fill="#555555" />
<rect x="1140.2" y="218.0" width="2.2" height="74.0" rx="0" fill="#5a5a5a" />
<rect x="1140.2" y="218.0" width="2.2" height="2.2" rx="0" fill="#0c0c0c" />
<rect x="1140.2" y="222.0" width="2.2" height="2.2" rx="0" fill="#0c0c0c" />
<rect x="1140.2" y="226.0" width="2.2" height="2.2" rx="0" fill="#0c0c0c" />
<rect x="1140.2" y="230.0" width="2.2" height="2.2" rx="0" fill="#0c0c0c" />
<rect x="1140.2" y="234.0" width="2.2" height="2.2" rx="0" fill="#0c0c0c" />
<rect x="1140.2" y="238.0" width="2.2" height="2.2" rx="0" fill="#0c0c0c" />
<rect x="1140.2" y="242.0" width="2.2" height="2.2" rx="0" fill="#0c0c0c" />
<rect x="1140.2" y="246.0" width="2.2" height="2.2" rx="0" fill="#0c0c0c" />
<rect x="1140.2" y="250.0" width="2.2" height="2.2" rx="0" fill="#0c0c0c" />
<rect x="1140.2" y="254.0" width="2.2" height="2.2" rx="0" fill="#0c0c0c" />
<rect x="1140.2" y="258.0" width="2.2" height="2.2" rx="0" fill="#0c0c0c" />
<rect x="1140.2" y="262.0" width="2.2" height="2.2" rx="0" fill="#0c0c0c" />
<rect x="1140.2" y="266.0" width="2.2" height="2.2" rx="0" fill="#0c0c0c" />
<rect x="1140.2" y="270.0" width="2.2" height="2.2" rx="0" fill="#0c0c0c" />
<rect x="1140.2" y="274.0" width="2.2" height="2.2" rx="0" fill="#0c0c0c" />
<rect x="1140.2" y="278.0" width="2.2" height="2.2" rx="0" fill="#0c0c0c" />
<rect x="1140.2" y="282.0" width="2.2" height="2.2" rx="0" fill="#0c0c0c" />
<rect x="1140.2" y="286.0" width="2.2" height="2.2" rx="0" fill="#0c0c0c" />
<rect x="1140.2" y="290.0" width="2.2" height="2.2" rx="0" fill="#0c0c0c" />
<text x="1148.5" y="242.0" font-size="27" fill="#e2e2e2" stroke="#e2e2e2" stroke-width="0.5">1</text>
<line x1="1323.1" y1="221.6" x2="1323.1" y2="292.0" stroke="#8c8c8c" stroke-width="1.6" />
<text x="1331.3" y="242.0" font-size="27" fill="#e2e2e2" stroke="#e2e2e2" stroke-width="0.5">9</text>
<line x1="1504.8" y1="221.6" x2="1504.8" y2="292.0" stroke="#8c8c8c" stroke-width="1.6" />
<text x="1513.0" y="242.0" font-size="27" fill="#e2e2e2" stroke="#e2e2e2" stroke-width="0.5">17</text>
<line x1="1686.6" y1="221.6" x2="1686.6" y2="292.0" stroke="#8c8c8c" stroke-width="1.6" />
<text x="1694.8" y="242.0" font-size="27" fill="#e2e2e2" stroke="#e2e2e2" stroke-width="0.5">25</text>
<line x1="1868.3" y1="221.6" x2="1868.3" y2="292.0" stroke="#8c8c8c" stroke-width="1.6" />
<text x="1876.5" y="242.0" font-size="27" fill="#e2e2e2" stroke="#e2e2e2" stroke-width="0.5">33</text>
<line x1="2050.1" y1="221.6" x2="2050.1" y2="292.0" stroke="#8c8c8c" stroke-width="1.6" />
<text x="2058.3" y="242.0" font-size="27" fill="#e2e2e2" stroke="#e2e2e2" stroke-width="0.5">41</text>
<line x1="2231.9" y1="221.6" x2="2231.9" y2="292.0" stroke="#8c8c8c" stroke-width="1.6" />
<text x="2240.1" y="242.0" font-size="27" fill="#e2e2e2" stroke="#e2e2e2" stroke-width="0.5">49</text>
<line x1="2413.6" y1="221.6" x2="2413.6" y2="292.0" stroke="#8c8c8c" stroke-width="1.6" />
<text x="2421.8" y="242.0" font-size="27" fill="#e2e2e2" stroke="#e2e2e2" stroke-width="0.5">57</text>
<line x1="2595.4" y1="221.6" x2="2595.4" y2="292.0" stroke="#8c8c8c" stroke-width="1.6" />
<text x="2603.6" y="242.0" font-size="27" fill="#e2e2e2" stroke="#e2e2e2" stroke-width="0.5">65</text>
<line x1="2777.1" y1="221.6" x2="2777.1" y2="292.0" stroke="#8c8c8c" stroke-width="1.6" />
<text x="2785.3" y="242.0" font-size="27" fill="#e2e2e2" stroke="#e2e2e2" stroke-width="0.5">73</text>
<line x1="1164.0" y1="258.0" x2="1164.0" y2="292.0" stroke="#7c7c7c" stroke-width="1.8" />
<line x1="1186.7" y1="258.0" x2="1186.7" y2="292.0" stroke="#7c7c7c" stroke-width="1.8" />
<line x1="1209.5" y1="258.0" x2="1209.5" y2="292.0" stroke="#7c7c7c" stroke-width="1.8" />
<line x1="1232.2" y1="258.0" x2="1232.2" y2="292.0" stroke="#7c7c7c" stroke-width="1.8" />
<line x1="1254.9" y1="258.0" x2="1254.9" y2="292.0" stroke="#7c7c7c" stroke-width="1.8" />
<line x1="1277.6" y1="258.0" x2="1277.6" y2="292.0" stroke="#7c7c7c" stroke-width="1.8" />
<line x1="1300.3" y1="258.0" x2="1300.3" y2="292.0" stroke="#7c7c7c" stroke-width="1.8" />
<line x1="1345.8" y1="258.0" x2="1345.8" y2="292.0" stroke="#7c7c7c" stroke-width="1.8" />
<line x1="1368.5" y1="258.0" x2="1368.5" y2="292.0" stroke="#7c7c7c" stroke-width="1.8" />
<line x1="1391.2" y1="258.0" x2="1391.2" y2="292.0" stroke="#7c7c7c" stroke-width="1.8" />
<line x1="1413.9" y1="258.0" x2="1413.9" y2="292.0" stroke="#7c7c7c" stroke-width="1.8" />
<line x1="1436.7" y1="258.0" x2="1436.7" y2="292.0" stroke="#7c7c7c" stroke-width="1.8" />
<line x1="1459.4" y1="258.0" x2="1459.4" y2="292.0" stroke="#7c7c7c" stroke-width="1.8" />
<line x1="1482.1" y1="258.0" x2="1482.1" y2="292.0" stroke="#7c7c7c" stroke-width="1.8" />
<line x1="1527.5" y1="258.0" x2="1527.5" y2="292.0" stroke="#7c7c7c" stroke-width="1.8" />
<line x1="1550.3" y1="258.0" x2="1550.3" y2="292.0" stroke="#7c7c7c" stroke-width="1.8" />
<line x1="1573.0" y1="258.0" x2="1573.0" y2="292.0" stroke="#7c7c7c" stroke-width="1.8" />
<line x1="1595.7" y1="258.0" x2="1595.7" y2="292.0" stroke="#7c7c7c" stroke-width="1.8" />
<line x1="1618.4" y1="258.0" x2="1618.4" y2="292.0" stroke="#7c7c7c" stroke-width="1.8" />
<line x1="1641.1" y1="258.0" x2="1641.1" y2="292.0" stroke="#7c7c7c" stroke-width="1.8" />
<line x1="1663.9" y1="258.0" x2="1663.9" y2="292.0" stroke="#7c7c7c" stroke-width="1.8" />
<line x1="1709.3" y1="258.0" x2="1709.3" y2="292.0" stroke="#7c7c7c" stroke-width="1.8" />
<line x1="1732.0" y1="258.0" x2="1732.0" y2="292.0" stroke="#7c7c7c" stroke-width="1.8" />
<line x1="1754.7" y1="258.0" x2="1754.7" y2="292.0" stroke="#7c7c7c" stroke-width="1.8" />
<line x1="1777.5" y1="258.0" x2="1777.5" y2="292.0" stroke="#7c7c7c" stroke-width="1.8" />
<line x1="1800.2" y1="258.0" x2="1800.2" y2="292.0" stroke="#7c7c7c" stroke-width="1.8" />
<line x1="1822.9" y1="258.0" x2="1822.9" y2="292.0" stroke="#7c7c7c" stroke-width="1.8" />
<line x1="1845.6" y1="258.0" x2="1845.6" y2="292.0" stroke="#7c7c7c" stroke-width="1.8" />
<line x1="1891.1" y1="258.0" x2="1891.1" y2="292.0" stroke="#7c7c7c" stroke-width="1.8" />
<line x1="1913.8" y1="258.0" x2="1913.8" y2="292.0" stroke="#7c7c7c" stroke-width="1.8" />
<line x1="1936.5" y1="258.0" x2="1936.5" y2="292.0" stroke="#7c7c7c" stroke-width="1.8" />
<line x1="1959.2" y1="258.0" x2="1959.2" y2="292.0" stroke="#7c7c7c" stroke-width="1.8" />
<line x1="1981.9" y1="258.0" x2="1981.9" y2="292.0" stroke="#7c7c7c" stroke-width="1.8" />
<line x1="2004.7" y1="258.0" x2="2004.7" y2="292.0" stroke="#7c7c7c" stroke-width="1.8" />
<line x1="2027.4" y1="258.0" x2="2027.4" y2="292.0" stroke="#7c7c7c" stroke-width="1.8" />
<line x1="2072.8" y1="258.0" x2="2072.8" y2="292.0" stroke="#7c7c7c" stroke-width="1.8" />
<line x1="2095.5" y1="258.0" x2="2095.5" y2="292.0" stroke="#7c7c7c" stroke-width="1.8" />
<line x1="2118.3" y1="258.0" x2="2118.3" y2="292.0" stroke="#7c7c7c" stroke-width="1.8" />
<line x1="2141.0" y1="258.0" x2="2141.0" y2="292.0" stroke="#7c7c7c" stroke-width="1.8" />
<line x1="2163.7" y1="258.0" x2="2163.7" y2="292.0" stroke="#7c7c7c" stroke-width="1.8" />
<line x1="2186.4" y1="258.0" x2="2186.4" y2="292.0" stroke="#7c7c7c" stroke-width="1.8" />
<line x1="2209.1" y1="258.0" x2="2209.1" y2="292.0" stroke="#7c7c7c" stroke-width="1.8" />
<line x1="2254.6" y1="258.0" x2="2254.6" y2="292.0" stroke="#7c7c7c" stroke-width="1.8" />
<line x1="2277.3" y1="258.0" x2="2277.3" y2="292.0" stroke="#7c7c7c" stroke-width="1.8" />
<line x1="2300.0" y1="258.0" x2="2300.0" y2="292.0" stroke="#7c7c7c" stroke-width="1.8" />
<line x1="2322.7" y1="258.0" x2="2322.7" y2="292.0" stroke="#7c7c7c" stroke-width="1.8" />
<line x1="2345.5" y1="258.0" x2="2345.5" y2="292.0" stroke="#7c7c7c" stroke-width="1.8" />
<line x1="2368.2" y1="258.0" x2="2368.2" y2="292.0" stroke="#7c7c7c" stroke-width="1.8" />
<line x1="2390.9" y1="258.0" x2="2390.9" y2="292.0" stroke="#7c7c7c" stroke-width="1.8" />
<line x1="2436.3" y1="258.0" x2="2436.3" y2="292.0" stroke="#7c7c7c" stroke-width="1.8" />
<line x1="2459.1" y1="258.0" x2="2459.1" y2="292.0" stroke="#7c7c7c" stroke-width="1.8" />
<line x1="2481.8" y1="258.0" x2="2481.8" y2="292.0" stroke="#7c7c7c" stroke-width="1.8" />
<line x1="2504.5" y1="258.0" x2="2504.5" y2="292.0" stroke="#7c7c7c" stroke-width="1.8" />
<line x1="2527.2" y1="258.0" x2="2527.2" y2="292.0" stroke="#7c7c7c" stroke-width="1.8" />
<line x1="2549.9" y1="258.0" x2="2549.9" y2="292.0" stroke="#7c7c7c" stroke-width="1.8" />
<line x1="2572.7" y1="258.0" x2="2572.7" y2="292.0" stroke="#7c7c7c" stroke-width="1.8" />
<line x1="2618.1" y1="258.0" x2="2618.1" y2="292.0" stroke="#7c7c7c" stroke-width="1.8" />
<line x1="2640.8" y1="258.0" x2="2640.8" y2="292.0" stroke="#7c7c7c" stroke-width="1.8" />
<line x1="2663.5" y1="258.0" x2="2663.5" y2="292.0" stroke="#7c7c7c" stroke-width="1.8" />
<line x1="2686.3" y1="258.0" x2="2686.3" y2="292.0" stroke="#7c7c7c" stroke-width="1.8" />
<line x1="2709.0" y1="258.0" x2="2709.0" y2="292.0" stroke="#7c7c7c" stroke-width="1.8" />
<line x1="2731.7" y1="258.0" x2="2731.7" y2="292.0" stroke="#7c7c7c" stroke-width="1.8" />
<line x1="2754.4" y1="258.0" x2="2754.4" y2="292.0" stroke="#7c7c7c" stroke-width="1.8" />
<line x1="2799.9" y1="258.0" x2="2799.9" y2="292.0" stroke="#7c7c7c" stroke-width="1.8" />
<line x1="2822.6" y1="258.0" x2="2822.6" y2="292.0" stroke="#7c7c7c" stroke-width="1.8" />
<line x1="2845.3" y1="258.0" x2="2845.3" y2="292.0" stroke="#7c7c7c" stroke-width="1.8" />
<line x1="2868.0" y1="258.0" x2="2868.0" y2="292.0" stroke="#7c7c7c" stroke-width="1.8" />
<line x1="2890.7" y1="258.0" x2="2890.7" y2="292.0" stroke="#7c7c7c" stroke-width="1.8" />
<rect x="2912.0" y="216.5" width="26.0" height="75.5" rx="0" fill="#2b2b2b" />
<path d="M2930 222 L2918 233 L2930 245 Z" fill="#555555" />
<defs><clipPath id="arr"><rect x="1122" y="292" width="1816" height="1548"/></clipPath><clipPath id="arrx"><rect x="1140" y="292" width="1772" height="1548"/></clipPath></defs>
<g clip-path="url(#arr)">
<rect x="1122.0" y="292.0" width="1816.0" height="1548.0" rx="0" fill="#2e2e2e" />
<rect x="1122.0" y="292.0" width="18.0" height="1548.0" rx="0" fill="#2a2a2a" />
<rect x="1122.0" y="269.1" width="1816.0" height="2.0" rx="0" fill="#232323" />
<rect x="1122.0" y="271.1" width="1816.0" height="37.5" rx="0" fill="#2c2c2c" />
<rect x="1122.0" y="308.6" width="1816.0" height="1.2" rx="0" fill="#262626" />
<line x1="1141.3" y1="272.1" x2="1141.3" y2="308.6" stroke="#474747" stroke-width="2" />
<line x1="1164.0" y1="272.1" x2="1164.0" y2="308.6" stroke="#474747" stroke-width="2" />
<line x1="1186.7" y1="272.1" x2="1186.7" y2="308.6" stroke="#474747" stroke-width="2" />
<line x1="1209.5" y1="272.1" x2="1209.5" y2="308.6" stroke="#474747" stroke-width="2" />
<line x1="1232.2" y1="272.1" x2="1232.2" y2="308.6" stroke="#474747" stroke-width="2" />
<line x1="1254.9" y1="272.1" x2="1254.9" y2="308.6" stroke="#474747" stroke-width="2" />
<line x1="1277.6" y1="272.1" x2="1277.6" y2="308.6" stroke="#474747" stroke-width="2" />
<line x1="1300.3" y1="272.1" x2="1300.3" y2="308.6" stroke="#474747" stroke-width="2" />
<line x1="1323.1" y1="272.1" x2="1323.1" y2="308.6" stroke="#474747" stroke-width="2" />
<line x1="1345.8" y1="272.1" x2="1345.8" y2="308.6" stroke="#474747" stroke-width="2" />
<line x1="1368.5" y1="272.1" x2="1368.5" y2="308.6" stroke="#474747" stroke-width="2" />
<line x1="1391.2" y1="272.1" x2="1391.2" y2="308.6" stroke="#474747" stroke-width="2" />
<line x1="1413.9" y1="272.1" x2="1413.9" y2="308.6" stroke="#474747" stroke-width="2" />
<line x1="1436.7" y1="272.1" x2="1436.7" y2="308.6" stroke="#474747" stroke-width="2" />
<line x1="1459.4" y1="272.1" x2="1459.4" y2="308.6" stroke="#474747" stroke-width="2" />
<line x1="1482.1" y1="272.1" x2="1482.1" y2="308.6" stroke="#474747" stroke-width="2" />
<line x1="1504.8" y1="272.1" x2="1504.8" y2="308.6" stroke="#474747" stroke-width="2" />
<line x1="1527.5" y1="272.1" x2="1527.5" y2="308.6" stroke="#474747" stroke-width="2" />
<line x1="1550.3" y1="272.1" x2="1550.3" y2="308.6" stroke="#474747" stroke-width="2" />
<line x1="1573.0" y1="272.1" x2="1573.0" y2="308.6" stroke="#474747" stroke-width="2" />
<line x1="1595.7" y1="272.1" x2="1595.7" y2="308.6" stroke="#474747" stroke-width="2" />
<line x1="1618.4" y1="272.1" x2="1618.4" y2="308.6" stroke="#474747" stroke-width="2" />
<line x1="1641.1" y1="272.1" x2="1641.1" y2="308.6" stroke="#474747" stroke-width="2" />
<line x1="1663.9" y1="272.1" x2="1663.9" y2="308.6" stroke="#474747" stroke-width="2" />
<line x1="1686.6" y1="272.1" x2="1686.6" y2="308.6" stroke="#474747" stroke-width="2" />
<line x1="1709.3" y1="272.1" x2="1709.3" y2="308.6" stroke="#474747" stroke-width="2" />
<line x1="1732.0" y1="272.1" x2="1732.0" y2="308.6" stroke="#474747" stroke-width="2" />
<line x1="1754.7" y1="272.1" x2="1754.7" y2="308.6" stroke="#474747" stroke-width="2" />
<line x1="1777.5" y1="272.1" x2="1777.5" y2="308.6" stroke="#474747" stroke-width="2" />
<line x1="1800.2" y1="272.1" x2="1800.2" y2="308.6" stroke="#474747" stroke-width="2" />
<line x1="1822.9" y1="272.1" x2="1822.9" y2="308.6" stroke="#474747" stroke-width="2" />
<line x1="1845.6" y1="272.1" x2="1845.6" y2="308.6" stroke="#474747" stroke-width="2" />
<line x1="1868.3" y1="272.1" x2="1868.3" y2="308.6" stroke="#474747" stroke-width="2" />
<line x1="1891.1" y1="272.1" x2="1891.1" y2="308.6" stroke="#474747" stroke-width="2" />
<line x1="1913.8" y1="272.1" x2="1913.8" y2="308.6" stroke="#474747" stroke-width="2" />
<line x1="1936.5" y1="272.1" x2="1936.5" y2="308.6" stroke="#474747" stroke-width="2" />
<line x1="1959.2" y1="272.1" x2="1959.2" y2="308.6" stroke="#474747" stroke-width="2" />
<line x1="1981.9" y1="272.1" x2="1981.9" y2="308.6" stroke="#474747" stroke-width="2" />
<line x1="2004.7" y1="272.1" x2="2004.7" y2="308.6" stroke="#474747" stroke-width="2" />
<line x1="2027.4" y1="272.1" x2="2027.4" y2="308.6" stroke="#474747" stroke-width="2" />
<line x1="2050.1" y1="272.1" x2="2050.1" y2="308.6" stroke="#474747" stroke-width="2" />
<line x1="2072.8" y1="272.1" x2="2072.8" y2="308.6" stroke="#474747" stroke-width="2" />
<line x1="2095.5" y1="272.1" x2="2095.5" y2="308.6" stroke="#474747" stroke-width="2" />
<line x1="2118.3" y1="272.1" x2="2118.3" y2="308.6" stroke="#474747" stroke-width="2" />
<line x1="2141.0" y1="272.1" x2="2141.0" y2="308.6" stroke="#474747" stroke-width="2" />
<line x1="2163.7" y1="272.1" x2="2163.7" y2="308.6" stroke="#474747" stroke-width="2" />
<line x1="2186.4" y1="272.1" x2="2186.4" y2="308.6" stroke="#474747" stroke-width="2" />
<line x1="2209.1" y1="272.1" x2="2209.1" y2="308.6" stroke="#474747" stroke-width="2" />
<line x1="2231.9" y1="272.1" x2="2231.9" y2="308.6" stroke="#474747" stroke-width="2" />
<line x1="2254.6" y1="272.1" x2="2254.6" y2="308.6" stroke="#474747" stroke-width="2" />
<line x1="2277.3" y1="272.1" x2="2277.3" y2="308.6" stroke="#474747" stroke-width="2" />
<line x1="2300.0" y1="272.1" x2="2300.0" y2="308.6" stroke="#474747" stroke-width="2" />
<line x1="2322.7" y1="272.1" x2="2322.7" y2="308.6" stroke="#474747" stroke-width="2" />
<line x1="2345.5" y1="272.1" x2="2345.5" y2="308.6" stroke="#474747" stroke-width="2" />
<line x1="2368.2" y1="272.1" x2="2368.2" y2="308.6" stroke="#474747" stroke-width="2" />
<line x1="2390.9" y1="272.1" x2="2390.9" y2="308.6" stroke="#474747" stroke-width="2" />
<line x1="2413.6" y1="272.1" x2="2413.6" y2="308.6" stroke="#474747" stroke-width="2" />
<line x1="2436.3" y1="272.1" x2="2436.3" y2="308.6" stroke="#474747" stroke-width="2" />
<line x1="2459.1" y1="272.1" x2="2459.1" y2="308.6" stroke="#474747" stroke-width="2" />
<line x1="2481.8" y1="272.1" x2="2481.8" y2="308.6" stroke="#474747" stroke-width="2" />
<line x1="2504.5" y1="272.1" x2="2504.5" y2="308.6" stroke="#474747" stroke-width="2" />
<line x1="2527.2" y1="272.1" x2="2527.2" y2="308.6" stroke="#474747" stroke-width="2" />
<line x1="2549.9" y1="272.1" x2="2549.9" y2="308.6" stroke="#474747" stroke-width="2" />
<line x1="2572.7" y1="272.1" x2="2572.7" y2="308.6" stroke="#474747" stroke-width="2" />
<line x1="2595.4" y1="272.1" x2="2595.4" y2="308.6" stroke="#474747" stroke-width="2" />
<line x1="2618.1" y1="272.1" x2="2618.1" y2="308.6" stroke="#474747" stroke-width="2" />
<line x1="2640.8" y1="272.1" x2="2640.8" y2="308.6" stroke="#474747" stroke-width="2" />
<line x1="2663.5" y1="272.1" x2="2663.5" y2="308.6" stroke="#474747" stroke-width="2" />
<line x1="2686.3" y1="272.1" x2="2686.3" y2="308.6" stroke="#474747" stroke-width="2" />
<line x1="2709.0" y1="272.1" x2="2709.0" y2="308.6" stroke="#474747" stroke-width="2" />
<line x1="2731.7" y1="272.1" x2="2731.7" y2="308.6" stroke="#474747" stroke-width="2" />
<line x1="2754.4" y1="272.1" x2="2754.4" y2="308.6" stroke="#474747" stroke-width="2" />
<line x1="2777.1" y1="272.1" x2="2777.1" y2="308.6" stroke="#474747" stroke-width="2" />
<line x1="2799.9" y1="272.1" x2="2799.9" y2="308.6" stroke="#474747" stroke-width="2" />
<line x1="2822.6" y1="272.1" x2="2822.6" y2="308.6" stroke="#474747" stroke-width="2" />
<line x1="2845.3" y1="272.1" x2="2845.3" y2="308.6" stroke="#474747" stroke-width="2" />
<line x1="2868.0" y1="272.1" x2="2868.0" y2="308.6" stroke="#474747" stroke-width="2" />
<line x1="2890.7" y1="272.1" x2="2890.7" y2="308.6" stroke="#474747" stroke-width="2" />
<rect x="1122.0" y="453.0" width="1816.0" height="2.0" rx="0" fill="#232323" />
<rect x="1122.0" y="455.0" width="1816.0" height="37.5" rx="0" fill="#2c2c2c" />
<rect x="1122.0" y="492.5" width="1816.0" height="1.2" rx="0" fill="#262626" />
<line x1="1141.3" y1="456.0" x2="1141.3" y2="492.5" stroke="#474747" stroke-width="2" />
<line x1="1164.0" y1="456.0" x2="1164.0" y2="492.5" stroke="#474747" stroke-width="2" />
<line x1="1186.7" y1="456.0" x2="1186.7" y2="492.5" stroke="#474747" stroke-width="2" />
<line x1="1209.5" y1="456.0" x2="1209.5" y2="492.5" stroke="#474747" stroke-width="2" />
<line x1="1232.2" y1="456.0" x2="1232.2" y2="492.5" stroke="#474747" stroke-width="2" />
<line x1="1254.9" y1="456.0" x2="1254.9" y2="492.5" stroke="#474747" stroke-width="2" />
<line x1="1277.6" y1="456.0" x2="1277.6" y2="492.5" stroke="#474747" stroke-width="2" />
<line x1="1300.3" y1="456.0" x2="1300.3" y2="492.5" stroke="#474747" stroke-width="2" />
<line x1="1323.1" y1="456.0" x2="1323.1" y2="492.5" stroke="#474747" stroke-width="2" />
<line x1="1345.8" y1="456.0" x2="1345.8" y2="492.5" stroke="#474747" stroke-width="2" />
<line x1="1368.5" y1="456.0" x2="1368.5" y2="492.5" stroke="#474747" stroke-width="2" />
<line x1="1391.2" y1="456.0" x2="1391.2" y2="492.5" stroke="#474747" stroke-width="2" />
<line x1="1413.9" y1="456.0" x2="1413.9" y2="492.5" stroke="#474747" stroke-width="2" />
<line x1="1436.7" y1="456.0" x2="1436.7" y2="492.5" stroke="#474747" stroke-width="2" />
<line x1="1459.4" y1="456.0" x2="1459.4" y2="492.5" stroke="#474747" stroke-width="2" />
<line x1="1482.1" y1="456.0" x2="1482.1" y2="492.5" stroke="#474747" stroke-width="2" />
<line x1="1504.8" y1="456.0" x2="1504.8" y2="492.5" stroke="#474747" stroke-width="2" />
<line x1="1527.5" y1="456.0" x2="1527.5" y2="492.5" stroke="#474747" stroke-width="2" />
<line x1="1550.3" y1="456.0" x2="1550.3" y2="492.5" stroke="#474747" stroke-width="2" />
<line x1="1573.0" y1="456.0" x2="1573.0" y2="492.5" stroke="#474747" stroke-width="2" />
<line x1="1595.7" y1="456.0" x2="1595.7" y2="492.5" stroke="#474747" stroke-width="2" />
<line x1="1618.4" y1="456.0" x2="1618.4" y2="492.5" stroke="#474747" stroke-width="2" />
<line x1="1641.1" y1="456.0" x2="1641.1" y2="492.5" stroke="#474747" stroke-width="2" />
<line x1="1663.9" y1="456.0" x2="1663.9" y2="492.5" stroke="#474747" stroke-width="2" />
<line x1="1686.6" y1="456.0" x2="1686.6" y2="492.5" stroke="#474747" stroke-width="2" />
<line x1="1709.3" y1="456.0" x2="1709.3" y2="492.5" stroke="#474747" stroke-width="2" />
<line x1="1732.0" y1="456.0" x2="1732.0" y2="492.5" stroke="#474747" stroke-width="2" />
<line x1="1754.7" y1="456.0" x2="1754.7" y2="492.5" stroke="#474747" stroke-width="2" />
<line x1="1777.5" y1="456.0" x2="1777.5" y2="492.5" stroke="#474747" stroke-width="2" />
<line x1="1800.2" y1="456.0" x2="1800.2" y2="492.5" stroke="#474747" stroke-width="2" />
<line x1="1822.9" y1="456.0" x2="1822.9" y2="492.5" stroke="#474747" stroke-width="2" />
<line x1="1845.6" y1="456.0" x2="1845.6" y2="492.5" stroke="#474747" stroke-width="2" />
<line x1="1868.3" y1="456.0" x2="1868.3" y2="492.5" stroke="#474747" stroke-width="2" />
<line x1="1891.1" y1="456.0" x2="1891.1" y2="492.5" stroke="#474747" stroke-width="2" />
<line x1="1913.8" y1="456.0" x2="1913.8" y2="492.5" stroke="#474747" stroke-width="2" />
<line x1="1936.5" y1="456.0" x2="1936.5" y2="492.5" stroke="#474747" stroke-width="2" />
<line x1="1959.2" y1="456.0" x2="1959.2" y2="492.5" stroke="#474747" stroke-width="2" />
<line x1="1981.9" y1="456.0" x2="1981.9" y2="492.5" stroke="#474747" stroke-width="2" />
<line x1="2004.7" y1="456.0" x2="2004.7" y2="492.5" stroke="#474747" stroke-width="2" />
<line x1="2027.4" y1="456.0" x2="2027.4" y2="492.5" stroke="#474747" stroke-width="2" />
<line x1="2050.1" y1="456.0" x2="2050.1" y2="492.5" stroke="#474747" stroke-width="2" />
<line x1="2072.8" y1="456.0" x2="2072.8" y2="492.5" stroke="#474747" stroke-width="2" />
<line x1="2095.5" y1="456.0" x2="2095.5" y2="492.5" stroke="#474747" stroke-width="2" />
<line x1="2118.3" y1="456.0" x2="2118.3" y2="492.5" stroke="#474747" stroke-width="2" />
<line x1="2141.0" y1="456.0" x2="2141.0" y2="492.5" stroke="#474747" stroke-width="2" />
<line x1="2163.7" y1="456.0" x2="2163.7" y2="492.5" stroke="#474747" stroke-width="2" />
<line x1="2186.4" y1="456.0" x2="2186.4" y2="492.5" stroke="#474747" stroke-width="2" />
<line x1="2209.1" y1="456.0" x2="2209.1" y2="492.5" stroke="#474747" stroke-width="2" />
<line x1="2231.9" y1="456.0" x2="2231.9" y2="492.5" stroke="#474747" stroke-width="2" />
<line x1="2254.6" y1="456.0" x2="2254.6" y2="492.5" stroke="#474747" stroke-width="2" />
<line x1="2277.3" y1="456.0" x2="2277.3" y2="492.5" stroke="#474747" stroke-width="2" />
<line x1="2300.0" y1="456.0" x2="2300.0" y2="492.5" stroke="#474747" stroke-width="2" />
<line x1="2322.7" y1="456.0" x2="2322.7" y2="492.5" stroke="#474747" stroke-width="2" />
<line x1="2345.5" y1="456.0" x2="2345.5" y2="492.5" stroke="#474747" stroke-width="2" />
<line x1="2368.2" y1="456.0" x2="2368.2" y2="492.5" stroke="#474747" stroke-width="2" />
<line x1="2390.9" y1="456.0" x2="2390.9" y2="492.5" stroke="#474747" stroke-width="2" />
<line x1="2413.6" y1="456.0" x2="2413.6" y2="492.5" stroke="#474747" stroke-width="2" />
<line x1="2436.3" y1="456.0" x2="2436.3" y2="492.5" stroke="#474747" stroke-width="2" />
<line x1="2459.1" y1="456.0" x2="2459.1" y2="492.5" stroke="#474747" stroke-width="2" />
<line x1="2481.8" y1="456.0" x2="2481.8" y2="492.5" stroke="#474747" stroke-width="2" />
<line x1="2504.5" y1="456.0" x2="2504.5" y2="492.5" stroke="#474747" stroke-width="2" />
<line x1="2527.2" y1="456.0" x2="2527.2" y2="492.5" stroke="#474747" stroke-width="2" />
<line x1="2549.9" y1="456.0" x2="2549.9" y2="492.5" stroke="#474747" stroke-width="2" />
<line x1="2572.7" y1="456.0" x2="2572.7" y2="492.5" stroke="#474747" stroke-width="2" />
<line x1="2595.4" y1="456.0" x2="2595.4" y2="492.5" stroke="#474747" stroke-width="2" />
<line x1="2618.1" y1="456.0" x2="2618.1" y2="492.5" stroke="#474747" stroke-width="2" />
<line x1="2640.8" y1="456.0" x2="2640.8" y2="492.5" stroke="#474747" stroke-width="2" />
<line x1="2663.5" y1="456.0" x2="2663.5" y2="492.5" stroke="#474747" stroke-width="2" />
<line x1="2686.3" y1="456.0" x2="2686.3" y2="492.5" stroke="#474747" stroke-width="2" />
<line x1="2709.0" y1="456.0" x2="2709.0" y2="492.5" stroke="#474747" stroke-width="2" />
<line x1="2731.7" y1="456.0" x2="2731.7" y2="492.5" stroke="#474747" stroke-width="2" />
<line x1="2754.4" y1="456.0" x2="2754.4" y2="492.5" stroke="#474747" stroke-width="2" />
<line x1="2777.1" y1="456.0" x2="2777.1" y2="492.5" stroke="#474747" stroke-width="2" />
<line x1="2799.9" y1="456.0" x2="2799.9" y2="492.5" stroke="#474747" stroke-width="2" />
<line x1="2822.6" y1="456.0" x2="2822.6" y2="492.5" stroke="#474747" stroke-width="2" />
<line x1="2845.3" y1="456.0" x2="2845.3" y2="492.5" stroke="#474747" stroke-width="2" />
<line x1="2868.0" y1="456.0" x2="2868.0" y2="492.5" stroke="#474747" stroke-width="2" />
<line x1="2890.7" y1="456.0" x2="2890.7" y2="492.5" stroke="#474747" stroke-width="2" />
<rect x="1122.0" y="636.9" width="1816.0" height="2.0" rx="0" fill="#232323" />
<rect x="1122.0" y="638.9" width="1816.0" height="37.5" rx="0" fill="#2c2c2c" />
<rect x="1122.0" y="676.4" width="1816.0" height="1.2" rx="0" fill="#262626" />
<line x1="1141.3" y1="639.9" x2="1141.3" y2="676.4" stroke="#474747" stroke-width="2" />
<line x1="1164.0" y1="639.9" x2="1164.0" y2="676.4" stroke="#474747" stroke-width="2" />
<line x1="1186.7" y1="639.9" x2="1186.7" y2="676.4" stroke="#474747" stroke-width="2" />
<line x1="1209.5" y1="639.9" x2="1209.5" y2="676.4" stroke="#474747" stroke-width="2" />
<line x1="1232.2" y1="639.9" x2="1232.2" y2="676.4" stroke="#474747" stroke-width="2" />
<line x1="1254.9" y1="639.9" x2="1254.9" y2="676.4" stroke="#474747" stroke-width="2" />
<line x1="1277.6" y1="639.9" x2="1277.6" y2="676.4" stroke="#474747" stroke-width="2" />
<line x1="1300.3" y1="639.9" x2="1300.3" y2="676.4" stroke="#474747" stroke-width="2" />
<line x1="1323.1" y1="639.9" x2="1323.1" y2="676.4" stroke="#474747" stroke-width="2" />
<line x1="1345.8" y1="639.9" x2="1345.8" y2="676.4" stroke="#474747" stroke-width="2" />
<line x1="1368.5" y1="639.9" x2="1368.5" y2="676.4" stroke="#474747" stroke-width="2" />
<line x1="1391.2" y1="639.9" x2="1391.2" y2="676.4" stroke="#474747" stroke-width="2" />
<line x1="1413.9" y1="639.9" x2="1413.9" y2="676.4" stroke="#474747" stroke-width="2" />
<line x1="1436.7" y1="639.9" x2="1436.7" y2="676.4" stroke="#474747" stroke-width="2" />
<line x1="1459.4" y1="639.9" x2="1459.4" y2="676.4" stroke="#474747" stroke-width="2" />
<line x1="1482.1" y1="639.9" x2="1482.1" y2="676.4" stroke="#474747" stroke-width="2" />
<line x1="1504.8" y1="639.9" x2="1504.8" y2="676.4" stroke="#474747" stroke-width="2" />
<line x1="1527.5" y1="639.9" x2="1527.5" y2="676.4" stroke="#474747" stroke-width="2" />
<line x1="1550.3" y1="639.9" x2="1550.3" y2="676.4" stroke="#474747" stroke-width="2" />
<line x1="1573.0" y1="639.9" x2="1573.0" y2="676.4" stroke="#474747" stroke-width="2" />
<line x1="1595.7" y1="639.9" x2="1595.7" y2="676.4" stroke="#474747" stroke-width="2" />
<line x1="1618.4" y1="639.9" x2="1618.4" y2="676.4" stroke="#474747" stroke-width="2" />
<line x1="1641.1" y1="639.9" x2="1641.1" y2="676.4" stroke="#474747" stroke-width="2" />
<line x1="1663.9" y1="639.9" x2="1663.9" y2="676.4" stroke="#474747" stroke-width="2" />
<line x1="1686.6" y1="639.9" x2="1686.6" y2="676.4" stroke="#474747" stroke-width="2" />
<line x1="1709.3" y1="639.9" x2="1709.3" y2="676.4" stroke="#474747" stroke-width="2" />
<line x1="1732.0" y1="639.9" x2="1732.0" y2="676.4" stroke="#474747" stroke-width="2" />
<line x1="1754.7" y1="639.9" x2="1754.7" y2="676.4" stroke="#474747" stroke-width="2" />
<line x1="1777.5" y1="639.9" x2="1777.5" y2="676.4" stroke="#474747" stroke-width="2" />
<line x1="1800.2" y1="639.9" x2="1800.2" y2="676.4" stroke="#474747" stroke-width="2" />
<line x1="1822.9" y1="639.9" x2="1822.9" y2="676.4" stroke="#474747" stroke-width="2" />
<line x1="1845.6" y1="639.9" x2="1845.6" y2="676.4" stroke="#474747" stroke-width="2" />
<line x1="1868.3" y1="639.9" x2="1868.3" y2="676.4" stroke="#474747" stroke-width="2" />
<line x1="1891.1" y1="639.9" x2="1891.1" y2="676.4" stroke="#474747" stroke-width="2" />
<line x1="1913.8" y1="639.9" x2="1913.8" y2="676.4" stroke="#474747" stroke-width="2" />
<line x1="1936.5" y1="639.9" x2="1936.5" y2="676.4" stroke="#474747" stroke-width="2" />
<line x1="1959.2" y1="639.9" x2="1959.2" y2="676.4" stroke="#474747" stroke-width="2" />
<line x1="1981.9" y1="639.9" x2="1981.9" y2="676.4" stroke="#474747" stroke-width="2" />
<line x1="2004.7" y1="639.9" x2="2004.7" y2="676.4" stroke="#474747" stroke-width="2" />
<line x1="2027.4" y1="639.9" x2="2027.4" y2="676.4" stroke="#474747" stroke-width="2" />
<line x1="2050.1" y1="639.9" x2="2050.1" y2="676.4" stroke="#474747" stroke-width="2" />
<line x1="2072.8" y1="639.9" x2="2072.8" y2="676.4" stroke="#474747" stroke-width="2" />
<line x1="2095.5" y1="639.9" x2="2095.5" y2="676.4" stroke="#474747" stroke-width="2" />
<line x1="2118.3" y1="639.9" x2="2118.3" y2="676.4" stroke="#474747" stroke-width="2" />
<line x1="2141.0" y1="639.9" x2="2141.0" y2="676.4" stroke="#474747" stroke-width="2" />
<line x1="2163.7" y1="639.9" x2="2163.7" y2="676.4" stroke="#474747" stroke-width="2" />
<line x1="2186.4" y1="639.9" x2="2186.4" y2="676.4" stroke="#474747" stroke-width="2" />
<line x1="2209.1" y1="639.9" x2="2209.1" y2="676.4" stroke="#474747" stroke-width="2" />
<line x1="2231.9" y1="639.9" x2="2231.9" y2="676.4" stroke="#474747" stroke-width="2" />
<line x1="2254.6" y1="639.9" x2="2254.6" y2="676.4" stroke="#474747" stroke-width="2" />
<line x1="2277.3" y1="639.9" x2="2277.3" y2="676.4" stroke="#474747" stroke-width="2" />
<line x1="2300.0" y1="639.9" x2="2300.0" y2="676.4" stroke="#474747" stroke-width="2" />
<line x1="2322.7" y1="639.9" x2="2322.7" y2="676.4" stroke="#474747" stroke-width="2" />
<line x1="2345.5" y1="639.9" x2="2345.5" y2="676.4" stroke="#474747" stroke-width="2" />
<line x1="2368.2" y1="639.9" x2="2368.2" y2="676.4" stroke="#474747" stroke-width="2" />
<line x1="2390.9" y1="639.9" x2="2390.9" y2="676.4" stroke="#474747" stroke-width="2" />
<line x1="2413.6" y1="639.9" x2="2413.6" y2="676.4" stroke="#474747" stroke-width="2" />
<line x1="2436.3" y1="639.9" x2="2436.3" y2="676.4" stroke="#474747" stroke-width="2" />
<line x1="2459.1" y1="639.9" x2="2459.1" y2="676.4" stroke="#474747" stroke-width="2" />
<line x1="2481.8" y1="639.9" x2="2481.8" y2="676.4" stroke="#474747" stroke-width="2" />
<line x1="2504.5" y1="639.9" x2="2504.5" y2="676.4" stroke="#474747" stroke-width="2" />
<line x1="2527.2" y1="639.9" x2="2527.2" y2="676.4" stroke="#474747" stroke-width="2" />
<line x1="2549.9" y1="639.9" x2="2549.9" y2="676.4" stroke="#474747" stroke-width="2" />
<line x1="2572.7" y1="639.9" x2="2572.7" y2="676.4" stroke="#474747" stroke-width="2" />
<line x1="2595.4" y1="639.9" x2="2595.4" y2="676.4" stroke="#474747" stroke-width="2" />
<line x1="2618.1" y1="639.9" x2="2618.1" y2="676.4" stroke="#474747" stroke-width="2" />
<line x1="2640.8" y1="639.9" x2="2640.8" y2="676.4" stroke="#474747" stroke-width="2" />
<line x1="2663.5" y1="639.9" x2="2663.5" y2="676.4" stroke="#474747" stroke-width="2" />
<line x1="2686.3" y1="639.9" x2="2686.3" y2="676.4" stroke="#474747" stroke-width="2" />
<line x1="2709.0" y1="639.9" x2="2709.0" y2="676.4" stroke="#474747" stroke-width="2" />
<line x1="2731.7" y1="639.9" x2="2731.7" y2="676.4" stroke="#474747" stroke-width="2" />
<line x1="2754.4" y1="639.9" x2="2754.4" y2="676.4" stroke="#474747" stroke-width="2" />
<line x1="2777.1" y1="639.9" x2="2777.1" y2="676.4" stroke="#474747" stroke-width="2" />
<line x1="2799.9" y1="639.9" x2="2799.9" y2="676.4" stroke="#474747" stroke-width="2" />
<line x1="2822.6" y1="639.9" x2="2822.6" y2="676.4" stroke="#474747" stroke-width="2" />
<line x1="2845.3" y1="639.9" x2="2845.3" y2="676.4" stroke="#474747" stroke-width="2" />
<line x1="2868.0" y1="639.9" x2="2868.0" y2="676.4" stroke="#474747" stroke-width="2" />
<line x1="2890.7" y1="639.9" x2="2890.7" y2="676.4" stroke="#474747" stroke-width="2" />
<rect x="1122.0" y="820.8" width="1816.0" height="2.0" rx="0" fill="#232323" />
<rect x="1122.0" y="822.8" width="1816.0" height="37.5" rx="0" fill="#2c2c2c" />
<rect x="1122.0" y="860.3" width="1816.0" height="1.2" rx="0" fill="#262626" />
<line x1="1141.3" y1="823.8" x2="1141.3" y2="860.3" stroke="#474747" stroke-width="2" />
<line x1="1164.0" y1="823.8" x2="1164.0" y2="860.3" stroke="#474747" stroke-width="2" />
<line x1="1186.7" y1="823.8" x2="1186.7" y2="860.3" stroke="#474747" stroke-width="2" />
<line x1="1209.5" y1="823.8" x2="1209.5" y2="860.3" stroke="#474747" stroke-width="2" />
<line x1="1232.2" y1="823.8" x2="1232.2" y2="860.3" stroke="#474747" stroke-width="2" />
<line x1="1254.9" y1="823.8" x2="1254.9" y2="860.3" stroke="#474747" stroke-width="2" />
<line x1="1277.6" y1="823.8" x2="1277.6" y2="860.3" stroke="#474747" stroke-width="2" />
<line x1="1300.3" y1="823.8" x2="1300.3" y2="860.3" stroke="#474747" stroke-width="2" />
<line x1="1323.1" y1="823.8" x2="1323.1" y2="860.3" stroke="#474747" stroke-width="2" />
<line x1="1345.8" y1="823.8" x2="1345.8" y2="860.3" stroke="#474747" stroke-width="2" />
<line x1="1368.5" y1="823.8" x2="1368.5" y2="860.3" stroke="#474747" stroke-width="2" />
<line x1="1391.2" y1="823.8" x2="1391.2" y2="860.3" stroke="#474747" stroke-width="2" />
<line x1="1413.9" y1="823.8" x2="1413.9" y2="860.3" stroke="#474747" stroke-width="2" />
<line x1="1436.7" y1="823.8" x2="1436.7" y2="860.3" stroke="#474747" stroke-width="2" />
<line x1="1459.4" y1="823.8" x2="1459.4" y2="860.3" stroke="#474747" stroke-width="2" />
<line x1="1482.1" y1="823.8" x2="1482.1" y2="860.3" stroke="#474747" stroke-width="2" />
<line x1="1504.8" y1="823.8" x2="1504.8" y2="860.3" stroke="#474747" stroke-width="2" />
<line x1="1527.5" y1="823.8" x2="1527.5" y2="860.3" stroke="#474747" stroke-width="2" />
<line x1="1550.3" y1="823.8" x2="1550.3" y2="860.3" stroke="#474747" stroke-width="2" />
<line x1="1573.0" y1="823.8" x2="1573.0" y2="860.3" stroke="#474747" stroke-width="2" />
<line x1="1595.7" y1="823.8" x2="1595.7" y2="860.3" stroke="#474747" stroke-width="2" />
<line x1="1618.4" y1="823.8" x2="1618.4" y2="860.3" stroke="#474747" stroke-width="2" />
<line x1="1641.1" y1="823.8" x2="1641.1" y2="860.3" stroke="#474747" stroke-width="2" />
<line x1="1663.9" y1="823.8" x2="1663.9" y2="860.3" stroke="#474747" stroke-width="2" />
<line x1="1686.6" y1="823.8" x2="1686.6" y2="860.3" stroke="#474747" stroke-width="2" />
<line x1="1709.3" y1="823.8" x2="1709.3" y2="860.3" stroke="#474747" stroke-width="2" />
<line x1="1732.0" y1="823.8" x2="1732.0" y2="860.3" stroke="#474747" stroke-width="2" />
<line x1="1754.7" y1="823.8" x2="1754.7" y2="860.3" stroke="#474747" stroke-width="2" />
<line x1="1777.5" y1="823.8" x2="1777.5" y2="860.3" stroke="#474747" stroke-width="2" />
<line x1="1800.2" y1="823.8" x2="1800.2" y2="860.3" stroke="#474747" stroke-width="2" />
<line x1="1822.9" y1="823.8" x2="1822.9" y2="860.3" stroke="#474747" stroke-width="2" />
<line x1="1845.6" y1="823.8" x2="1845.6" y2="860.3" stroke="#474747" stroke-width="2" />
<line x1="1868.3" y1="823.8" x2="1868.3" y2="860.3" stroke="#474747" stroke-width="2" />
<line x1="1891.1" y1="823.8" x2="1891.1" y2="860.3" stroke="#474747" stroke-width="2" />
<line x1="1913.8" y1="823.8" x2="1913.8" y2="860.3" stroke="#474747" stroke-width="2" />
<line x1="1936.5" y1="823.8" x2="1936.5" y2="860.3" stroke="#474747" stroke-width="2" />
<line x1="1959.2" y1="823.8" x2="1959.2" y2="860.3" stroke="#474747" stroke-width="2" />
<line x1="1981.9" y1="823.8" x2="1981.9" y2="860.3" stroke="#474747" stroke-width="2" />
<line x1="2004.7" y1="823.8" x2="2004.7" y2="860.3" stroke="#474747" stroke-width="2" />
<line x1="2027.4" y1="823.8" x2="2027.4" y2="860.3" stroke="#474747" stroke-width="2" />
<line x1="2050.1" y1="823.8" x2="2050.1" y2="860.3" stroke="#474747" stroke-width="2" />
<line x1="2072.8" y1="823.8" x2="2072.8" y2="860.3" stroke="#474747" stroke-width="2" />
<line x1="2095.5" y1="823.8" x2="2095.5" y2="860.3" stroke="#474747" stroke-width="2" />
<line x1="2118.3" y1="823.8" x2="2118.3" y2="860.3" stroke="#474747" stroke-width="2" />
<line x1="2141.0" y1="823.8" x2="2141.0" y2="860.3" stroke="#474747" stroke-width="2" />
<line x1="2163.7" y1="823.8" x2="2163.7" y2="860.3" stroke="#474747" stroke-width="2" />
<line x1="2186.4" y1="823.8" x2="2186.4" y2="860.3" stroke="#474747" stroke-width="2" />
<line x1="2209.1" y1="823.8" x2="2209.1" y2="860.3" stroke="#474747" stroke-width="2" />
<line x1="2231.9" y1="823.8" x2="2231.9" y2="860.3" stroke="#474747" stroke-width="2" />
<line x1="2254.6" y1="823.8" x2="2254.6" y2="860.3" stroke="#474747" stroke-width="2" />
<line x1="2277.3" y1="823.8" x2="2277.3" y2="860.3" stroke="#474747" stroke-width="2" />
<line x1="2300.0" y1="823.8" x2="2300.0" y2="860.3" stroke="#474747" stroke-width="2" />
<line x1="2322.7" y1="823.8" x2="2322.7" y2="860.3" stroke="#474747" stroke-width="2" />
<line x1="2345.5" y1="823.8" x2="2345.5" y2="860.3" stroke="#474747" stroke-width="2" />
<line x1="2368.2" y1="823.8" x2="2368.2" y2="860.3" stroke="#474747" stroke-width="2" />
<line x1="2390.9" y1="823.8" x2="2390.9" y2="860.3" stroke="#474747" stroke-width="2" />
<line x1="2413.6" y1="823.8" x2="2413.6" y2="860.3" stroke="#474747" stroke-width="2" />
<line x1="2436.3" y1="823.8" x2="2436.3" y2="860.3" stroke="#474747" stroke-width="2" />
<line x1="2459.1" y1="823.8" x2="2459.1" y2="860.3" stroke="#474747" stroke-width="2" />
<line x1="2481.8" y1="823.8" x2="2481.8" y2="860.3" stroke="#474747" stroke-width="2" />
<line x1="2504.5" y1="823.8" x2="2504.5" y2="860.3" stroke="#474747" stroke-width="2" />
<line x1="2527.2" y1="823.8" x2="2527.2" y2="860.3" stroke="#474747" stroke-width="2" />
<line x1="2549.9" y1="823.8" x2="2549.9" y2="860.3" stroke="#474747" stroke-width="2" />
<line x1="2572.7" y1="823.8" x2="2572.7" y2="860.3" stroke="#474747" stroke-width="2" />
<line x1="2595.4" y1="823.8" x2="2595.4" y2="860.3" stroke="#474747" stroke-width="2" />
<line x1="2618.1" y1="823.8" x2="2618.1" y2="860.3" stroke="#474747" stroke-width="2" />
<line x1="2640.8" y1="823.8" x2="2640.8" y2="860.3" stroke="#474747" stroke-width="2" />
<line x1="2663.5" y1="823.8" x2="2663.5" y2="860.3" stroke="#474747" stroke-width="2" />
<line x1="2686.3" y1="823.8" x2="2686.3" y2="860.3" stroke="#474747" stroke-width="2" />
<line x1="2709.0" y1="823.8" x2="2709.0" y2="860.3" stroke="#474747" stroke-width="2" />
<line x1="2731.7" y1="823.8" x2="2731.7" y2="860.3" stroke="#474747" stroke-width="2" />
<line x1="2754.4" y1="823.8" x2="2754.4" y2="860.3" stroke="#474747" stroke-width="2" />
<line x1="2777.1" y1="823.8" x2="2777.1" y2="860.3" stroke="#474747" stroke-width="2" />
<line x1="2799.9" y1="823.8" x2="2799.9" y2="860.3" stroke="#474747" stroke-width="2" />
<line x1="2822.6" y1="823.8" x2="2822.6" y2="860.3" stroke="#474747" stroke-width="2" />
<line x1="2845.3" y1="823.8" x2="2845.3" y2="860.3" stroke="#474747" stroke-width="2" />
<line x1="2868.0" y1="823.8" x2="2868.0" y2="860.3" stroke="#474747" stroke-width="2" />
<line x1="2890.7" y1="823.8" x2="2890.7" y2="860.3" stroke="#474747" stroke-width="2" />
<rect x="1122.0" y="1004.7" width="1816.0" height="2.0" rx="0" fill="#232323" />
<rect x="1122.0" y="1006.7" width="1816.0" height="37.5" rx="0" fill="#2c2c2c" />
<rect x="1122.0" y="1044.2" width="1816.0" height="1.2" rx="0" fill="#262626" />
<line x1="1141.3" y1="1007.7" x2="1141.3" y2="1044.2" stroke="#474747" stroke-width="2" />
<line x1="1164.0" y1="1007.7" x2="1164.0" y2="1044.2" stroke="#474747" stroke-width="2" />
<line x1="1186.7" y1="1007.7" x2="1186.7" y2="1044.2" stroke="#474747" stroke-width="2" />
<line x1="1209.5" y1="1007.7" x2="1209.5" y2="1044.2" stroke="#474747" stroke-width="2" />
<line x1="1232.2" y1="1007.7" x2="1232.2" y2="1044.2" stroke="#474747" stroke-width="2" />
<line x1="1254.9" y1="1007.7" x2="1254.9" y2="1044.2" stroke="#474747" stroke-width="2" />
<line x1="1277.6" y1="1007.7" x2="1277.6" y2="1044.2" stroke="#474747" stroke-width="2" />
<line x1="1300.3" y1="1007.7" x2="1300.3" y2="1044.2" stroke="#474747" stroke-width="2" />
<line x1="1323.1" y1="1007.7" x2="1323.1" y2="1044.2" stroke="#474747" stroke-width="2" />
<line x1="1345.8" y1="1007.7" x2="1345.8" y2="1044.2" stroke="#474747" stroke-width="2" />
<line x1="1368.5" y1="1007.7" x2="1368.5" y2="1044.2" stroke="#474747" stroke-width="2" />
<line x1="1391.2" y1="1007.7" x2="1391.2" y2="1044.2" stroke="#474747" stroke-width="2" />
<line x1="1413.9" y1="1007.7" x2="1413.9" y2="1044.2" stroke="#474747" stroke-width="2" />
<line x1="1436.7" y1="1007.7" x2="1436.7" y2="1044.2" stroke="#474747" stroke-width="2" />
<line x1="1459.4" y1="1007.7" x2="1459.4" y2="1044.2" stroke="#474747" stroke-width="2" />
<line x1="1482.1" y1="1007.7" x2="1482.1" y2="1044.2" stroke="#474747" stroke-width="2" />
<line x1="1504.8" y1="1007.7" x2="1504.8" y2="1044.2" stroke="#474747" stroke-width="2" />
<line x1="1527.5" y1="1007.7" x2="1527.5" y2="1044.2" stroke="#474747" stroke-width="2" />
<line x1="1550.3" y1="1007.7" x2="1550.3" y2="1044.2" stroke="#474747" stroke-width="2" />
<line x1="1573.0" y1="1007.7" x2="1573.0" y2="1044.2" stroke="#474747" stroke-width="2" />
<line x1="1595.7" y1="1007.7" x2="1595.7" y2="1044.2" stroke="#474747" stroke-width="2" />
<line x1="1618.4" y1="1007.7" x2="1618.4" y2="1044.2" stroke="#474747" stroke-width="2" />
<line x1="1641.1" y1="1007.7" x2="1641.1" y2="1044.2" stroke="#474747" stroke-width="2" />
<line x1="1663.9" y1="1007.7" x2="1663.9" y2="1044.2" stroke="#474747" stroke-width="2" />
<line x1="1686.6" y1="1007.7" x2="1686.6" y2="1044.2" stroke="#474747" stroke-width="2" />
<line x1="1709.3" y1="1007.7" x2="1709.3" y2="1044.2" stroke="#474747" stroke-width="2" />
<line x1="1732.0" y1="1007.7" x2="1732.0" y2="1044.2" stroke="#474747" stroke-width="2" />
<line x1="1754.7" y1="1007.7" x2="1754.7" y2="1044.2" stroke="#474747" stroke-width="2" />
<line x1="1777.5" y1="1007.7" x2="1777.5" y2="1044.2" stroke="#474747" stroke-width="2" />
<line x1="1800.2" y1="1007.7" x2="1800.2" y2="1044.2" stroke="#474747" stroke-width="2" />
<line x1="1822.9" y1="1007.7" x2="1822.9" y2="1044.2" stroke="#474747" stroke-width="2" />
<line x1="1845.6" y1="1007.7" x2="1845.6" y2="1044.2" stroke="#474747" stroke-width="2" />
<line x1="1868.3" y1="1007.7" x2="1868.3" y2="1044.2" stroke="#474747" stroke-width="2" />
<line x1="1891.1" y1="1007.7" x2="1891.1" y2="1044.2" stroke="#474747" stroke-width="2" />
<line x1="1913.8" y1="1007.7" x2="1913.8" y2="1044.2" stroke="#474747" stroke-width="2" />
<line x1="1936.5" y1="1007.7" x2="1936.5" y2="1044.2" stroke="#474747" stroke-width="2" />
<line x1="1959.2" y1="1007.7" x2="1959.2" y2="1044.2" stroke="#474747" stroke-width="2" />
<line x1="1981.9" y1="1007.7" x2="1981.9" y2="1044.2" stroke="#474747" stroke-width="2" />
<line x1="2004.7" y1="1007.7" x2="2004.7" y2="1044.2" stroke="#474747" stroke-width="2" />
<line x1="2027.4" y1="1007.7" x2="2027.4" y2="1044.2" stroke="#474747" stroke-width="2" />
<line x1="2050.1" y1="1007.7" x2="2050.1" y2="1044.2" stroke="#474747" stroke-width="2" />
<line x1="2072.8" y1="1007.7" x2="2072.8" y2="1044.2" stroke="#474747" stroke-width="2" />
<line x1="2095.5" y1="1007.7" x2="2095.5" y2="1044.2" stroke="#474747" stroke-width="2" />
<line x1="2118.3" y1="1007.7" x2="2118.3" y2="1044.2" stroke="#474747" stroke-width="2" />
<line x1="2141.0" y1="1007.7" x2="2141.0" y2="1044.2" stroke="#474747" stroke-width="2" />
<line x1="2163.7" y1="1007.7" x2="2163.7" y2="1044.2" stroke="#474747" stroke-width="2" />
<line x1="2186.4" y1="1007.7" x2="2186.4" y2="1044.2" stroke="#474747" stroke-width="2" />
<line x1="2209.1" y1="1007.7" x2="2209.1" y2="1044.2" stroke="#474747" stroke-width="2" />
<line x1="2231.9" y1="1007.7" x2="2231.9" y2="1044.2" stroke="#474747" stroke-width="2" />
<line x1="2254.6" y1="1007.7" x2="2254.6" y2="1044.2" stroke="#474747" stroke-width="2" />
<line x1="2277.3" y1="1007.7" x2="2277.3" y2="1044.2" stroke="#474747" stroke-width="2" />
<line x1="2300.0" y1="1007.7" x2="2300.0" y2="1044.2" stroke="#474747" stroke-width="2" />
<line x1="2322.7" y1="1007.7" x2="2322.7" y2="1044.2" stroke="#474747" stroke-width="2" />
<line x1="2345.5" y1="1007.7" x2="2345.5" y2="1044.2" stroke="#474747" stroke-width="2" />
<line x1="2368.2" y1="1007.7" x2="2368.2" y2="1044.2" stroke="#474747" stroke-width="2" />
<line x1="2390.9" y1="1007.7" x2="2390.9" y2="1044.2" stroke="#474747" stroke-width="2" />
<line x1="2413.6" y1="1007.7" x2="2413.6" y2="1044.2" stroke="#474747" stroke-width="2" />
<line x1="2436.3" y1="1007.7" x2="2436.3" y2="1044.2" stroke="#474747" stroke-width="2" />
<line x1="2459.1" y1="1007.7" x2="2459.1" y2="1044.2" stroke="#474747" stroke-width="2" />
<line x1="2481.8" y1="1007.7" x2="2481.8" y2="1044.2" stroke="#474747" stroke-width="2" />
<line x1="2504.5" y1="1007.7" x2="2504.5" y2="1044.2" stroke="#474747" stroke-width="2" />
<line x1="2527.2" y1="1007.7" x2="2527.2" y2="1044.2" stroke="#474747" stroke-width="2" />
<line x1="2549.9" y1="1007.7" x2="2549.9" y2="1044.2" stroke="#474747" stroke-width="2" />
<line x1="2572.7" y1="1007.7" x2="2572.7" y2="1044.2" stroke="#474747" stroke-width="2" />
<line x1="2595.4" y1="1007.7" x2="2595.4" y2="1044.2" stroke="#474747" stroke-width="2" />
<line x1="2618.1" y1="1007.7" x2="2618.1" y2="1044.2" stroke="#474747" stroke-width="2" />
<line x1="2640.8" y1="1007.7" x2="2640.8" y2="1044.2" stroke="#474747" stroke-width="2" />
<line x1="2663.5" y1="1007.7" x2="2663.5" y2="1044.2" stroke="#474747" stroke-width="2" />
<line x1="2686.3" y1="1007.7" x2="2686.3" y2="1044.2" stroke="#474747" stroke-width="2" />
<line x1="2709.0" y1="1007.7" x2="2709.0" y2="1044.2" stroke="#474747" stroke-width="2" />
<line x1="2731.7" y1="1007.7" x2="2731.7" y2="1044.2" stroke="#474747" stroke-width="2" />
<line x1="2754.4" y1="1007.7" x2="2754.4" y2="1044.2" stroke="#474747" stroke-width="2" />
<line x1="2777.1" y1="1007.7" x2="2777.1" y2="1044.2" stroke="#474747" stroke-width="2" />
<line x1="2799.9" y1="1007.7" x2="2799.9" y2="1044.2" stroke="#474747" stroke-width="2" />
<line x1="2822.6" y1="1007.7" x2="2822.6" y2="1044.2" stroke="#474747" stroke-width="2" />
<line x1="2845.3" y1="1007.7" x2="2845.3" y2="1044.2" stroke="#474747" stroke-width="2" />
<line x1="2868.0" y1="1007.7" x2="2868.0" y2="1044.2" stroke="#474747" stroke-width="2" />
<line x1="2890.7" y1="1007.7" x2="2890.7" y2="1044.2" stroke="#474747" stroke-width="2" />
<rect x="1122.0" y="1188.6" width="1816.0" height="2.0" rx="0" fill="#232323" />
<rect x="1122.0" y="1190.6" width="1816.0" height="37.5" rx="0" fill="#2c2c2c" />
<rect x="1122.0" y="1228.1" width="1816.0" height="1.2" rx="0" fill="#262626" />
<line x1="1141.3" y1="1191.6" x2="1141.3" y2="1228.1" stroke="#474747" stroke-width="2" />
<line x1="1164.0" y1="1191.6" x2="1164.0" y2="1228.1" stroke="#474747" stroke-width="2" />
<line x1="1186.7" y1="1191.6" x2="1186.7" y2="1228.1" stroke="#474747" stroke-width="2" />
<line x1="1209.5" y1="1191.6" x2="1209.5" y2="1228.1" stroke="#474747" stroke-width="2" />
<line x1="1232.2" y1="1191.6" x2="1232.2" y2="1228.1" stroke="#474747" stroke-width="2" />
<line x1="1254.9" y1="1191.6" x2="1254.9" y2="1228.1" stroke="#474747" stroke-width="2" />
<line x1="1277.6" y1="1191.6" x2="1277.6" y2="1228.1" stroke="#474747" stroke-width="2" />
<line x1="1300.3" y1="1191.6" x2="1300.3" y2="1228.1" stroke="#474747" stroke-width="2" />
<line x1="1323.1" y1="1191.6" x2="1323.1" y2="1228.1" stroke="#474747" stroke-width="2" />
<line x1="1345.8" y1="1191.6" x2="1345.8" y2="1228.1" stroke="#474747" stroke-width="2" />
<line x1="1368.5" y1="1191.6" x2="1368.5" y2="1228.1" stroke="#474747" stroke-width="2" />
<line x1="1391.2" y1="1191.6" x2="1391.2" y2="1228.1" stroke="#474747" stroke-width="2" />
<line x1="1413.9" y1="1191.6" x2="1413.9" y2="1228.1" stroke="#474747" stroke-width="2" />
<line x1="1436.7" y1="1191.6" x2="1436.7" y2="1228.1" stroke="#474747" stroke-width="2" />
<line x1="1459.4" y1="1191.6" x2="1459.4" y2="1228.1" stroke="#474747" stroke-width="2" />
<line x1="1482.1" y1="1191.6" x2="1482.1" y2="1228.1" stroke="#474747" stroke-width="2" />
<line x1="1504.8" y1="1191.6" x2="1504.8" y2="1228.1" stroke="#474747" stroke-width="2" />
<line x1="1527.5" y1="1191.6" x2="1527.5" y2="1228.1" stroke="#474747" stroke-width="2" />
<line x1="1550.3" y1="1191.6" x2="1550.3" y2="1228.1" stroke="#474747" stroke-width="2" />
<line x1="1573.0" y1="1191.6" x2="1573.0" y2="1228.1" stroke="#474747" stroke-width="2" />
<line x1="1595.7" y1="1191.6" x2="1595.7" y2="1228.1" stroke="#474747" stroke-width="2" />
<line x1="1618.4" y1="1191.6" x2="1618.4" y2="1228.1" stroke="#474747" stroke-width="2" />
<line x1="1641.1" y1="1191.6" x2="1641.1" y2="1228.1" stroke="#474747" stroke-width="2" />
<line x1="1663.9" y1="1191.6" x2="1663.9" y2="1228.1" stroke="#474747" stroke-width="2" />
<line x1="1686.6" y1="1191.6" x2="1686.6" y2="1228.1" stroke="#474747" stroke-width="2" />
<line x1="1709.3" y1="1191.6" x2="1709.3" y2="1228.1" stroke="#474747" stroke-width="2" />
<line x1="1732.0" y1="1191.6" x2="1732.0" y2="1228.1" stroke="#474747" stroke-width="2" />
<line x1="1754.7" y1="1191.6" x2="1754.7" y2="1228.1" stroke="#474747" stroke-width="2" />
<line x1="1777.5" y1="1191.6" x2="1777.5" y2="1228.1" stroke="#474747" stroke-width="2" />
<line x1="1800.2" y1="1191.6" x2="1800.2" y2="1228.1" stroke="#474747" stroke-width="2" />
<line x1="1822.9" y1="1191.6" x2="1822.9" y2="1228.1" stroke="#474747" stroke-width="2" />
<line x1="1845.6" y1="1191.6" x2="1845.6" y2="1228.1" stroke="#474747" stroke-width="2" />
<line x1="1868.3" y1="1191.6" x2="1868.3" y2="1228.1" stroke="#474747" stroke-width="2" />
<line x1="1891.1" y1="1191.6" x2="1891.1" y2="1228.1" stroke="#474747" stroke-width="2" />
<line x1="1913.8" y1="1191.6" x2="1913.8" y2="1228.1" stroke="#474747" stroke-width="2" />
<line x1="1936.5" y1="1191.6" x2="1936.5" y2="1228.1" stroke="#474747" stroke-width="2" />
<line x1="1959.2" y1="1191.6" x2="1959.2" y2="1228.1" stroke="#474747" stroke-width="2" />
<line x1="1981.9" y1="1191.6" x2="1981.9" y2="1228.1" stroke="#474747" stroke-width="2" />
<line x1="2004.7" y1="1191.6" x2="2004.7" y2="1228.1" stroke="#474747" stroke-width="2" />
<line x1="2027.4" y1="1191.6" x2="2027.4" y2="1228.1" stroke="#474747" stroke-width="2" />
<line x1="2050.1" y1="1191.6" x2="2050.1" y2="1228.1" stroke="#474747" stroke-width="2" />
<line x1="2072.8" y1="1191.6" x2="2072.8" y2="1228.1" stroke="#474747" stroke-width="2" />
<line x1="2095.5" y1="1191.6" x2="2095.5" y2="1228.1" stroke="#474747" stroke-width="2" />
<line x1="2118.3" y1="1191.6" x2="2118.3" y2="1228.1" stroke="#474747" stroke-width="2" />
<line x1="2141.0" y1="1191.6" x2="2141.0" y2="1228.1" stroke="#474747" stroke-width="2" />
<line x1="2163.7" y1="1191.6" x2="2163.7" y2="1228.1" stroke="#474747" stroke-width="2" />
<line x1="2186.4" y1="1191.6" x2="2186.4" y2="1228.1" stroke="#474747" stroke-width="2" />
<line x1="2209.1" y1="1191.6" x2="2209.1" y2="1228.1" stroke="#474747" stroke-width="2" />
<line x1="2231.9" y1="1191.6" x2="2231.9" y2="1228.1" stroke="#474747" stroke-width="2" />
<line x1="2254.6" y1="1191.6" x2="2254.6" y2="1228.1" stroke="#474747" stroke-width="2" />
<line x1="2277.3" y1="1191.6" x2="2277.3" y2="1228.1" stroke="#474747" stroke-width="2" />
<line x1="2300.0" y1="1191.6" x2="2300.0" y2="1228.1" stroke="#474747" stroke-width="2" />
<line x1="2322.7" y1="1191.6" x2="2322.7" y2="1228.1" stroke="#474747" stroke-width="2" />
<line x1="2345.5" y1="1191.6" x2="2345.5" y2="1228.1" stroke="#474747" stroke-width="2" />
<line x1="2368.2" y1="1191.6" x2="2368.2" y2="1228.1" stroke="#474747" stroke-width="2" />
<line x1="2390.9" y1="1191.6" x2="2390.9" y2="1228.1" stroke="#474747" stroke-width="2" />
<line x1="2413.6" y1="1191.6" x2="2413.6" y2="1228.1" stroke="#474747" stroke-width="2" />
<line x1="2436.3" y1="1191.6" x2="2436.3" y2="1228.1" stroke="#474747" stroke-width="2" />
<line x1="2459.1" y1="1191.6" x2="2459.1" y2="1228.1" stroke="#474747" stroke-width="2" />
<line x1="2481.8" y1="1191.6" x2="2481.8" y2="1228.1" stroke="#474747" stroke-width="2" />
<line x1="2504.5" y1="1191.6" x2="2504.5" y2="1228.1" stroke="#474747" stroke-width="2" />
<line x1="2527.2" y1="1191.6" x2="2527.2" y2="1228.1" stroke="#474747" stroke-width="2" />
<line x1="2549.9" y1="1191.6" x2="2549.9" y2="1228.1" stroke="#474747" stroke-width="2" />
<line x1="2572.7" y1="1191.6" x2="2572.7" y2="1228.1" stroke="#474747" stroke-width="2" />
<line x1="2595.4" y1="1191.6" x2="2595.4" y2="1228.1" stroke="#474747" stroke-width="2" />
<line x1="2618.1" y1="1191.6" x2="2618.1" y2="1228.1" stroke="#474747" stroke-width="2" />
<line x1="2640.8" y1="1191.6" x2="2640.8" y2="1228.1" stroke="#474747" stroke-width="2" />
<line x1="2663.5" y1="1191.6" x2="2663.5" y2="1228.1" stroke="#474747" stroke-width="2" />
<line x1="2686.3" y1="1191.6" x2="2686.3" y2="1228.1" stroke="#474747" stroke-width="2" />
<line x1="2709.0" y1="1191.6" x2="2709.0" y2="1228.1" stroke="#474747" stroke-width="2" />
<line x1="2731.7" y1="1191.6" x2="2731.7" y2="1228.1" stroke="#474747" stroke-width="2" />
<line x1="2754.4" y1="1191.6" x2="2754.4" y2="1228.1" stroke="#474747" stroke-width="2" />
<line x1="2777.1" y1="1191.6" x2="2777.1" y2="1228.1" stroke="#474747" stroke-width="2" />
<line x1="2799.9" y1="1191.6" x2="2799.9" y2="1228.1" stroke="#474747" stroke-width="2" />
<line x1="2822.6" y1="1191.6" x2="2822.6" y2="1228.1" stroke="#474747" stroke-width="2" />
<line x1="2845.3" y1="1191.6" x2="2845.3" y2="1228.1" stroke="#474747" stroke-width="2" />
<line x1="2868.0" y1="1191.6" x2="2868.0" y2="1228.1" stroke="#474747" stroke-width="2" />
<line x1="2890.7" y1="1191.6" x2="2890.7" y2="1228.1" stroke="#474747" stroke-width="2" />
<rect x="1122.0" y="1372.5" width="1816.0" height="2.0" rx="0" fill="#232323" />
<rect x="1122.0" y="1374.5" width="1816.0" height="37.5" rx="0" fill="#2c2c2c" />
<rect x="1122.0" y="1412.0" width="1816.0" height="1.2" rx="0" fill="#262626" />
<line x1="1141.3" y1="1375.5" x2="1141.3" y2="1412.0" stroke="#474747" stroke-width="2" />
<line x1="1164.0" y1="1375.5" x2="1164.0" y2="1412.0" stroke="#474747" stroke-width="2" />
<line x1="1186.7" y1="1375.5" x2="1186.7" y2="1412.0" stroke="#474747" stroke-width="2" />
<line x1="1209.5" y1="1375.5" x2="1209.5" y2="1412.0" stroke="#474747" stroke-width="2" />
<line x1="1232.2" y1="1375.5" x2="1232.2" y2="1412.0" stroke="#474747" stroke-width="2" />
<line x1="1254.9" y1="1375.5" x2="1254.9" y2="1412.0" stroke="#474747" stroke-width="2" />
<line x1="1277.6" y1="1375.5" x2="1277.6" y2="1412.0" stroke="#474747" stroke-width="2" />
<line x1="1300.3" y1="1375.5" x2="1300.3" y2="1412.0" stroke="#474747" stroke-width="2" />
<line x1="1323.1" y1="1375.5" x2="1323.1" y2="1412.0" stroke="#474747" stroke-width="2" />
<line x1="1345.8" y1="1375.5" x2="1345.8" y2="1412.0" stroke="#474747" stroke-width="2" />
<line x1="1368.5" y1="1375.5" x2="1368.5" y2="1412.0" stroke="#474747" stroke-width="2" />
<line x1="1391.2" y1="1375.5" x2="1391.2" y2="1412.0" stroke="#474747" stroke-width="2" />
<line x1="1413.9" y1="1375.5" x2="1413.9" y2="1412.0" stroke="#474747" stroke-width="2" />
<line x1="1436.7" y1="1375.5" x2="1436.7" y2="1412.0" stroke="#474747" stroke-width="2" />
<line x1="1459.4" y1="1375.5" x2="1459.4" y2="1412.0" stroke="#474747" stroke-width="2" />
<line x1="1482.1" y1="1375.5" x2="1482.1" y2="1412.0" stroke="#474747" stroke-width="2" />
<line x1="1504.8" y1="1375.5" x2="1504.8" y2="1412.0" stroke="#474747" stroke-width="2" />
<line x1="1527.5" y1="1375.5" x2="1527.5" y2="1412.0" stroke="#474747" stroke-width="2" />
<line x1="1550.3" y1="1375.5" x2="1550.3" y2="1412.0" stroke="#474747" stroke-width="2" />
<line x1="1573.0" y1="1375.5" x2="1573.0" y2="1412.0" stroke="#474747" stroke-width="2" />
<line x1="1595.7" y1="1375.5" x2="1595.7" y2="1412.0" stroke="#474747" stroke-width="2" />
<line x1="1618.4" y1="1375.5" x2="1618.4" y2="1412.0" stroke="#474747" stroke-width="2" />
<line x1="1641.1" y1="1375.5" x2="1641.1" y2="1412.0" stroke="#474747" stroke-width="2" />
<line x1="1663.9" y1="1375.5" x2="1663.9" y2="1412.0" stroke="#474747" stroke-width="2" />
<line x1="1686.6" y1="1375.5" x2="1686.6" y2="1412.0" stroke="#474747" stroke-width="2" />
<line x1="1709.3" y1="1375.5" x2="1709.3" y2="1412.0" stroke="#474747" stroke-width="2" />
<line x1="1732.0" y1="1375.5" x2="1732.0" y2="1412.0" stroke="#474747" stroke-width="2" />
<line x1="1754.7" y1="1375.5" x2="1754.7" y2="1412.0" stroke="#474747" stroke-width="2" />
<line x1="1777.5" y1="1375.5" x2="1777.5" y2="1412.0" stroke="#474747" stroke-width="2" />
<line x1="1800.2" y1="1375.5" x2="1800.2" y2="1412.0" stroke="#474747" stroke-width="2" />
<line x1="1822.9" y1="1375.5" x2="1822.9" y2="1412.0" stroke="#474747" stroke-width="2" />
<line x1="1845.6" y1="1375.5" x2="1845.6" y2="1412.0" stroke="#474747" stroke-width="2" />
<line x1="1868.3" y1="1375.5" x2="1868.3" y2="1412.0" stroke="#474747" stroke-width="2" />
<line x1="1891.1" y1="1375.5" x2="1891.1" y2="1412.0" stroke="#474747" stroke-width="2" />
<line x1="1913.8" y1="1375.5" x2="1913.8" y2="1412.0" stroke="#474747" stroke-width="2" />
<line x1="1936.5" y1="1375.5" x2="1936.5" y2="1412.0" stroke="#474747" stroke-width="2" />
<line x1="1959.2" y1="1375.5" x2="1959.2" y2="1412.0" stroke="#474747" stroke-width="2" />
<line x1="1981.9" y1="1375.5" x2="1981.9" y2="1412.0" stroke="#474747" stroke-width="2" />
<line x1="2004.7" y1="1375.5" x2="2004.7" y2="1412.0" stroke="#474747" stroke-width="2" />
<line x1="2027.4" y1="1375.5" x2="2027.4" y2="1412.0" stroke="#474747" stroke-width="2" />
<line x1="2050.1" y1="1375.5" x2="2050.1" y2="1412.0" stroke="#474747" stroke-width="2" />
<line x1="2072.8" y1="1375.5" x2="2072.8" y2="1412.0" stroke="#474747" stroke-width="2" />
<line x1="2095.5" y1="1375.5" x2="2095.5" y2="1412.0" stroke="#474747" stroke-width="2" />
<line x1="2118.3" y1="1375.5" x2="2118.3" y2="1412.0" stroke="#474747" stroke-width="2" />
<line x1="2141.0" y1="1375.5" x2="2141.0" y2="1412.0" stroke="#474747" stroke-width="2" />
<line x1="2163.7" y1="1375.5" x2="2163.7" y2="1412.0" stroke="#474747" stroke-width="2" />
<line x1="2186.4" y1="1375.5" x2="2186.4" y2="1412.0" stroke="#474747" stroke-width="2" />
<line x1="2209.1" y1="1375.5" x2="2209.1" y2="1412.0" stroke="#474747" stroke-width="2" />
<line x1="2231.9" y1="1375.5" x2="2231.9" y2="1412.0" stroke="#474747" stroke-width="2" />
<line x1="2254.6" y1="1375.5" x2="2254.6" y2="1412.0" stroke="#474747" stroke-width="2" />
<line x1="2277.3" y1="1375.5" x2="2277.3" y2="1412.0" stroke="#474747" stroke-width="2" />
<line x1="2300.0" y1="1375.5" x2="2300.0" y2="1412.0" stroke="#474747" stroke-width="2" />
<line x1="2322.7" y1="1375.5" x2="2322.7" y2="1412.0" stroke="#474747" stroke-width="2" />
<line x1="2345.5" y1="1375.5" x2="2345.5" y2="1412.0" stroke="#474747" stroke-width="2" />
<line x1="2368.2" y1="1375.5" x2="2368.2" y2="1412.0" stroke="#474747" stroke-width="2" />
<line x1="2390.9" y1="1375.5" x2="2390.9" y2="1412.0" stroke="#474747" stroke-width="2" />
<line x1="2413.6" y1="1375.5" x2="2413.6" y2="1412.0" stroke="#474747" stroke-width="2" />
<line x1="2436.3" y1="1375.5" x2="2436.3" y2="1412.0" stroke="#474747" stroke-width="2" />
<line x1="2459.1" y1="1375.5" x2="2459.1" y2="1412.0" stroke="#474747" stroke-width="2" />
<line x1="2481.8" y1="1375.5" x2="2481.8" y2="1412.0" stroke="#474747" stroke-width="2" />
<line x1="2504.5" y1="1375.5" x2="2504.5" y2="1412.0" stroke="#474747" stroke-width="2" />
<line x1="2527.2" y1="1375.5" x2="2527.2" y2="1412.0" stroke="#474747" stroke-width="2" />
<line x1="2549.9" y1="1375.5" x2="2549.9" y2="1412.0" stroke="#474747" stroke-width="2" />
<line x1="2572.7" y1="1375.5" x2="2572.7" y2="1412.0" stroke="#474747" stroke-width="2" />
<line x1="2595.4" y1="1375.5" x2="2595.4" y2="1412.0" stroke="#474747" stroke-width="2" />
<line x1="2618.1" y1="1375.5" x2="2618.1" y2="1412.0" stroke="#474747" stroke-width="2" />
<line x1="2640.8" y1="1375.5" x2="2640.8" y2="1412.0" stroke="#474747" stroke-width="2" />
<line x1="2663.5" y1="1375.5" x2="2663.5" y2="1412.0" stroke="#474747" stroke-width="2" />
<line x1="2686.3" y1="1375.5" x2="2686.3" y2="1412.0" stroke="#474747" stroke-width="2" />
<line x1="2709.0" y1="1375.5" x2="2709.0" y2="1412.0" stroke="#474747" stroke-width="2" />
<line x1="2731.7" y1="1375.5" x2="2731.7" y2="1412.0" stroke="#474747" stroke-width="2" />
<line x1="2754.4" y1="1375.5" x2="2754.4" y2="1412.0" stroke="#474747" stroke-width="2" />
<line x1="2777.1" y1="1375.5" x2="2777.1" y2="1412.0" stroke="#474747" stroke-width="2" />
<line x1="2799.9" y1="1375.5" x2="2799.9" y2="1412.0" stroke="#474747" stroke-width="2" />
<line x1="2822.6" y1="1375.5" x2="2822.6" y2="1412.0" stroke="#474747" stroke-width="2" />
<line x1="2845.3" y1="1375.5" x2="2845.3" y2="1412.0" stroke="#474747" stroke-width="2" />
<line x1="2868.0" y1="1375.5" x2="2868.0" y2="1412.0" stroke="#474747" stroke-width="2" />
<line x1="2890.7" y1="1375.5" x2="2890.7" y2="1412.0" stroke="#474747" stroke-width="2" />
<rect x="1122.0" y="1556.4" width="1816.0" height="2.0" rx="0" fill="#232323" />
<rect x="1122.0" y="1558.4" width="1816.0" height="37.5" rx="0" fill="#2c2c2c" />
<rect x="1122.0" y="1595.9" width="1816.0" height="1.2" rx="0" fill="#262626" />
<line x1="1141.3" y1="1559.4" x2="1141.3" y2="1595.9" stroke="#474747" stroke-width="2" />
<line x1="1164.0" y1="1559.4" x2="1164.0" y2="1595.9" stroke="#474747" stroke-width="2" />
<line x1="1186.7" y1="1559.4" x2="1186.7" y2="1595.9" stroke="#474747" stroke-width="2" />
<line x1="1209.5" y1="1559.4" x2="1209.5" y2="1595.9" stroke="#474747" stroke-width="2" />
<line x1="1232.2" y1="1559.4" x2="1232.2" y2="1595.9" stroke="#474747" stroke-width="2" />
<line x1="1254.9" y1="1559.4" x2="1254.9" y2="1595.9" stroke="#474747" stroke-width="2" />
<line x1="1277.6" y1="1559.4" x2="1277.6" y2="1595.9" stroke="#474747" stroke-width="2" />
<line x1="1300.3" y1="1559.4" x2="1300.3" y2="1595.9" stroke="#474747" stroke-width="2" />
<line x1="1323.1" y1="1559.4" x2="1323.1" y2="1595.9" stroke="#474747" stroke-width="2" />
<line x1="1345.8" y1="1559.4" x2="1345.8" y2="1595.9" stroke="#474747" stroke-width="2" />
<line x1="1368.5" y1="1559.4" x2="1368.5" y2="1595.9" stroke="#474747" stroke-width="2" />
<line x1="1391.2" y1="1559.4" x2="1391.2" y2="1595.9" stroke="#474747" stroke-width="2" />
<line x1="1413.9" y1="1559.4" x2="1413.9" y2="1595.9" stroke="#474747" stroke-width="2" />
<line x1="1436.7" y1="1559.4" x2="1436.7" y2="1595.9" stroke="#474747" stroke-width="2" />
<line x1="1459.4" y1="1559.4" x2="1459.4" y2="1595.9" stroke="#474747" stroke-width="2" />
<line x1="1482.1" y1="1559.4" x2="1482.1" y2="1595.9" stroke="#474747" stroke-width="2" />
<line x1="1504.8" y1="1559.4" x2="1504.8" y2="1595.9" stroke="#474747" stroke-width="2" />
<line x1="1527.5" y1="1559.4" x2="1527.5" y2="1595.9" stroke="#474747" stroke-width="2" />
<line x1="1550.3" y1="1559.4" x2="1550.3" y2="1595.9" stroke="#474747" stroke-width="2" />
<line x1="1573.0" y1="1559.4" x2="1573.0" y2="1595.9" stroke="#474747" stroke-width="2" />
<line x1="1595.7" y1="1559.4" x2="1595.7" y2="1595.9" stroke="#474747" stroke-width="2" />
<line x1="1618.4" y1="1559.4" x2="1618.4" y2="1595.9" stroke="#474747" stroke-width="2" />
<line x1="1641.1" y1="1559.4" x2="1641.1" y2="1595.9" stroke="#474747" stroke-width="2" />
<line x1="1663.9" y1="1559.4" x2="1663.9" y2="1595.9" stroke="#474747" stroke-width="2" />
<line x1="1686.6" y1="1559.4" x2="1686.6" y2="1595.9" stroke="#474747" stroke-width="2" />
<line x1="1709.3" y1="1559.4" x2="1709.3" y2="1595.9" stroke="#474747" stroke-width="2" />
<line x1="1732.0" y1="1559.4" x2="1732.0" y2="1595.9" stroke="#474747" stroke-width="2" />
<line x1="1754.7" y1="1559.4" x2="1754.7" y2="1595.9" stroke="#474747" stroke-width="2" />
<line x1="1777.5" y1="1559.4" x2="1777.5" y2="1595.9" stroke="#474747" stroke-width="2" />
<line x1="1800.2" y1="1559.4" x2="1800.2" y2="1595.9" stroke="#474747" stroke-width="2" />
<line x1="1822.9" y1="1559.4" x2="1822.9" y2="1595.9" stroke="#474747" stroke-width="2" />
<line x1="1845.6" y1="1559.4" x2="1845.6" y2="1595.9" stroke="#474747" stroke-width="2" />
<line x1="1868.3" y1="1559.4" x2="1868.3" y2="1595.9" stroke="#474747" stroke-width="2" />
<line x1="1891.1" y1="1559.4" x2="1891.1" y2="1595.9" stroke="#474747" stroke-width="2" />
<line x1="1913.8" y1="1559.4" x2="1913.8" y2="1595.9" stroke="#474747" stroke-width="2" />
<line x1="1936.5" y1="1559.4" x2="1936.5" y2="1595.9" stroke="#474747" stroke-width="2" />
<line x1="1959.2" y1="1559.4" x2="1959.2" y2="1595.9" stroke="#474747" stroke-width="2" />
<line x1="1981.9" y1="1559.4" x2="1981.9" y2="1595.9" stroke="#474747" stroke-width="2" />
<line x1="2004.7" y1="1559.4" x2="2004.7" y2="1595.9" stroke="#474747" stroke-width="2" />
<line x1="2027.4" y1="1559.4" x2="2027.4" y2="1595.9" stroke="#474747" stroke-width="2" />
<line x1="2050.1" y1="1559.4" x2="2050.1" y2="1595.9" stroke="#474747" stroke-width="2" />
<line x1="2072.8" y1="1559.4" x2="2072.8" y2="1595.9" stroke="#474747" stroke-width="2" />
<line x1="2095.5" y1="1559.4" x2="2095.5" y2="1595.9" stroke="#474747" stroke-width="2" />
<line x1="2118.3" y1="1559.4" x2="2118.3" y2="1595.9" stroke="#474747" stroke-width="2" />
<line x1="2141.0" y1="1559.4" x2="2141.0" y2="1595.9" stroke="#474747" stroke-width="2" />
<line x1="2163.7" y1="1559.4" x2="2163.7" y2="1595.9" stroke="#474747" stroke-width="2" />
<line x1="2186.4" y1="1559.4" x2="2186.4" y2="1595.9" stroke="#474747" stroke-width="2" />
<line x1="2209.1" y1="1559.4" x2="2209.1" y2="1595.9" stroke="#474747" stroke-width="2" />
<line x1="2231.9" y1="1559.4" x2="2231.9" y2="1595.9" stroke="#474747" stroke-width="2" />
<line x1="2254.6" y1="1559.4" x2="2254.6" y2="1595.9" stroke="#474747" stroke-width="2" />
<line x1="2277.3" y1="1559.4" x2="2277.3" y2="1595.9" stroke="#474747" stroke-width="2" />
<line x1="2300.0" y1="1559.4" x2="2300.0" y2="1595.9" stroke="#474747" stroke-width="2" />
<line x1="2322.7" y1="1559.4" x2="2322.7" y2="1595.9" stroke="#474747" stroke-width="2" />
<line x1="2345.5" y1="1559.4" x2="2345.5" y2="1595.9" stroke="#474747" stroke-width="2" />
<line x1="2368.2" y1="1559.4" x2="2368.2" y2="1595.9" stroke="#474747" stroke-width="2" />
<line x1="2390.9" y1="1559.4" x2="2390.9" y2="1595.9" stroke="#474747" stroke-width="2" />
<line x1="2413.6" y1="1559.4" x2="2413.6" y2="1595.9" stroke="#474747" stroke-width="2" />
<line x1="2436.3" y1="1559.4" x2="2436.3" y2="1595.9" stroke="#474747" stroke-width="2" />
<line x1="2459.1" y1="1559.4" x2="2459.1" y2="1595.9" stroke="#474747" stroke-width="2" />
<line x1="2481.8" y1="1559.4" x2="2481.8" y2="1595.9" stroke="#474747" stroke-width="2" />
<line x1="2504.5" y1="1559.4" x2="2504.5" y2="1595.9" stroke="#474747" stroke-width="2" />
<line x1="2527.2" y1="1559.4" x2="2527.2" y2="1595.9" stroke="#474747" stroke-width="2" />
<line x1="2549.9" y1="1559.4" x2="2549.9" y2="1595.9" stroke="#474747" stroke-width="2" />
<line x1="2572.7" y1="1559.4" x2="2572.7" y2="1595.9" stroke="#474747" stroke-width="2" />
<line x1="2595.4" y1="1559.4" x2="2595.4" y2="1595.9" stroke="#474747" stroke-width="2" />
<line x1="2618.1" y1="1559.4" x2="2618.1" y2="1595.9" stroke="#474747" stroke-width="2" />
<line x1="2640.8" y1="1559.4" x2="2640.8" y2="1595.9" stroke="#474747" stroke-width="2" />
<line x1="2663.5" y1="1559.4" x2="2663.5" y2="1595.9" stroke="#474747" stroke-width="2" />
<line x1="2686.3" y1="1559.4" x2="2686.3" y2="1595.9" stroke="#474747" stroke-width="2" />
<line x1="2709.0" y1="1559.4" x2="2709.0" y2="1595.9" stroke="#474747" stroke-width="2" />
<line x1="2731.7" y1="1559.4" x2="2731.7" y2="1595.9" stroke="#474747" stroke-width="2" />
<line x1="2754.4" y1="1559.4" x2="2754.4" y2="1595.9" stroke="#474747" stroke-width="2" />
<line x1="2777.1" y1="1559.4" x2="2777.1" y2="1595.9" stroke="#474747" stroke-width="2" />
<line x1="2799.9" y1="1559.4" x2="2799.9" y2="1595.9" stroke="#474747" stroke-width="2" />
<line x1="2822.6" y1="1559.4" x2="2822.6" y2="1595.9" stroke="#474747" stroke-width="2" />
<line x1="2845.3" y1="1559.4" x2="2845.3" y2="1595.9" stroke="#474747" stroke-width="2" />
<line x1="2868.0" y1="1559.4" x2="2868.0" y2="1595.9" stroke="#474747" stroke-width="2" />
<line x1="2890.7" y1="1559.4" x2="2890.7" y2="1595.9" stroke="#474747" stroke-width="2" />
<rect x="1122.0" y="1740.3" width="1816.0" height="2.0" rx="0" fill="#232323" />
<rect x="1122.0" y="1742.3" width="1816.0" height="37.5" rx="0" fill="#2c2c2c" />
<rect x="1122.0" y="1779.8" width="1816.0" height="1.2" rx="0" fill="#262626" />
<line x1="1141.3" y1="1743.3" x2="1141.3" y2="1779.8" stroke="#474747" stroke-width="2" />
<line x1="1164.0" y1="1743.3" x2="1164.0" y2="1779.8" stroke="#474747" stroke-width="2" />
<line x1="1186.7" y1="1743.3" x2="1186.7" y2="1779.8" stroke="#474747" stroke-width="2" />
<line x1="1209.5" y1="1743.3" x2="1209.5" y2="1779.8" stroke="#474747" stroke-width="2" />
<line x1="1232.2" y1="1743.3" x2="1232.2" y2="1779.8" stroke="#474747" stroke-width="2" />
<line x1="1254.9" y1="1743.3" x2="1254.9" y2="1779.8" stroke="#474747" stroke-width="2" />
<line x1="1277.6" y1="1743.3" x2="1277.6" y2="1779.8" stroke="#474747" stroke-width="2" />
<line x1="1300.3" y1="1743.3" x2="1300.3" y2="1779.8" stroke="#474747" stroke-width="2" />
<line x1="1323.1" y1="1743.3" x2="1323.1" y2="1779.8" stroke="#474747" stroke-width="2" />
<line x1="1345.8" y1="1743.3" x2="1345.8" y2="1779.8" stroke="#474747" stroke-width="2" />
<line x1="1368.5" y1="1743.3" x2="1368.5" y2="1779.8" stroke="#474747" stroke-width="2" />
<line x1="1391.2" y1="1743.3" x2="1391.2" y2="1779.8" stroke="#474747" stroke-width="2" />
<line x1="1413.9" y1="1743.3" x2="1413.9" y2="1779.8" stroke="#474747" stroke-width="2" />
<line x1="1436.7" y1="1743.3" x2="1436.7" y2="1779.8" stroke="#474747" stroke-width="2" />
<line x1="1459.4" y1="1743.3" x2="1459.4" y2="1779.8" stroke="#474747" stroke-width="2" />
<line x1="1482.1" y1="1743.3" x2="1482.1" y2="1779.8" stroke="#474747" stroke-width="2" />
<line x1="1504.8" y1="1743.3" x2="1504.8" y2="1779.8" stroke="#474747" stroke-width="2" />
<line x1="1527.5" y1="1743.3" x2="1527.5" y2="1779.8" stroke="#474747" stroke-width="2" />
<line x1="1550.3" y1="1743.3" x2="1550.3" y2="1779.8" stroke="#474747" stroke-width="2" />
<line x1="1573.0" y1="1743.3" x2="1573.0" y2="1779.8" stroke="#474747" stroke-width="2" />
<line x1="1595.7" y1="1743.3" x2="1595.7" y2="1779.8" stroke="#474747" stroke-width="2" />
<line x1="1618.4" y1="1743.3" x2="1618.4" y2="1779.8" stroke="#474747" stroke-width="2" />
<line x1="1641.1" y1="1743.3" x2="1641.1" y2="1779.8" stroke="#474747" stroke-width="2" />
<line x1="1663.9" y1="1743.3" x2="1663.9" y2="1779.8" stroke="#474747" stroke-width="2" />
<line x1="1686.6" y1="1743.3" x2="1686.6" y2="1779.8" stroke="#474747" stroke-width="2" />
<line x1="1709.3" y1="1743.3" x2="1709.3" y2="1779.8" stroke="#474747" stroke-width="2" />
<line x1="1732.0" y1="1743.3" x2="1732.0" y2="1779.8" stroke="#474747" stroke-width="2" />
<line x1="1754.7" y1="1743.3" x2="1754.7" y2="1779.8" stroke="#474747" stroke-width="2" />
<line x1="1777.5" y1="1743.3" x2="1777.5" y2="1779.8" stroke="#474747" stroke-width="2" />
<line x1="1800.2" y1="1743.3" x2="1800.2" y2="1779.8" stroke="#474747" stroke-width="2" />
<line x1="1822.9" y1="1743.3" x2="1822.9" y2="1779.8" stroke="#474747" stroke-width="2" />
<line x1="1845.6" y1="1743.3" x2="1845.6" y2="1779.8" stroke="#474747" stroke-width="2" />
<line x1="1868.3" y1="1743.3" x2="1868.3" y2="1779.8" stroke="#474747" stroke-width="2" />
<line x1="1891.1" y1="1743.3" x2="1891.1" y2="1779.8" stroke="#474747" stroke-width="2" />
<line x1="1913.8" y1="1743.3" x2="1913.8" y2="1779.8" stroke="#474747" stroke-width="2" />
<line x1="1936.5" y1="1743.3" x2="1936.5" y2="1779.8" stroke="#474747" stroke-width="2" />
<line x1="1959.2" y1="1743.3" x2="1959.2" y2="1779.8" stroke="#474747" stroke-width="2" />
<line x1="1981.9" y1="1743.3" x2="1981.9" y2="1779.8" stroke="#474747" stroke-width="2" />
<line x1="2004.7" y1="1743.3" x2="2004.7" y2="1779.8" stroke="#474747" stroke-width="2" />
<line x1="2027.4" y1="1743.3" x2="2027.4" y2="1779.8" stroke="#474747" stroke-width="2" />
<line x1="2050.1" y1="1743.3" x2="2050.1" y2="1779.8" stroke="#474747" stroke-width="2" />
<line x1="2072.8" y1="1743.3" x2="2072.8" y2="1779.8" stroke="#474747" stroke-width="2" />
<line x1="2095.5" y1="1743.3" x2="2095.5" y2="1779.8" stroke="#474747" stroke-width="2" />
<line x1="2118.3" y1="1743.3" x2="2118.3" y2="1779.8" stroke="#474747" stroke-width="2" />
<line x1="2141.0" y1="1743.3" x2="2141.0" y2="1779.8" stroke="#474747" stroke-width="2" />
<line x1="2163.7" y1="1743.3" x2="2163.7" y2="1779.8" stroke="#474747" stroke-width="2" />
<line x1="2186.4" y1="1743.3" x2="2186.4" y2="1779.8" stroke="#474747" stroke-width="2" />
<line x1="2209.1" y1="1743.3" x2="2209.1" y2="1779.8" stroke="#474747" stroke-width="2" />
<line x1="2231.9" y1="1743.3" x2="2231.9" y2="1779.8" stroke="#474747" stroke-width="2" />
<line x1="2254.6" y1="1743.3" x2="2254.6" y2="1779.8" stroke="#474747" stroke-width="2" />
<line x1="2277.3" y1="1743.3" x2="2277.3" y2="1779.8" stroke="#474747" stroke-width="2" />
<line x1="2300.0" y1="1743.3" x2="2300.0" y2="1779.8" stroke="#474747" stroke-width="2" />
<line x1="2322.7" y1="1743.3" x2="2322.7" y2="1779.8" stroke="#474747" stroke-width="2" />
<line x1="2345.5" y1="1743.3" x2="2345.5" y2="1779.8" stroke="#474747" stroke-width="2" />
<line x1="2368.2" y1="1743.3" x2="2368.2" y2="1779.8" stroke="#474747" stroke-width="2" />
<line x1="2390.9" y1="1743.3" x2="2390.9" y2="1779.8" stroke="#474747" stroke-width="2" />
<line x1="2413.6" y1="1743.3" x2="2413.6" y2="1779.8" stroke="#474747" stroke-width="2" />
<line x1="2436.3" y1="1743.3" x2="2436.3" y2="1779.8" stroke="#474747" stroke-width="2" />
<line x1="2459.1" y1="1743.3" x2="2459.1" y2="1779.8" stroke="#474747" stroke-width="2" />
<line x1="2481.8" y1="1743.3" x2="2481.8" y2="1779.8" stroke="#474747" stroke-width="2" />
<line x1="2504.5" y1="1743.3" x2="2504.5" y2="1779.8" stroke="#474747" stroke-width="2" />
<line x1="2527.2" y1="1743.3" x2="2527.2" y2="1779.8" stroke="#474747" stroke-width="2" />
<line x1="2549.9" y1="1743.3" x2="2549.9" y2="1779.8" stroke="#474747" stroke-width="2" />
<line x1="2572.7" y1="1743.3" x2="2572.7" y2="1779.8" stroke="#474747" stroke-width="2" />
<line x1="2595.4" y1="1743.3" x2="2595.4" y2="1779.8" stroke="#474747" stroke-width="2" />
<line x1="2618.1" y1="1743.3" x2="2618.1" y2="1779.8" stroke="#474747" stroke-width="2" />
<line x1="2640.8" y1="1743.3" x2="2640.8" y2="1779.8" stroke="#474747" stroke-width="2" />
<line x1="2663.5" y1="1743.3" x2="2663.5" y2="1779.8" stroke="#474747" stroke-width="2" />
<line x1="2686.3" y1="1743.3" x2="2686.3" y2="1779.8" stroke="#474747" stroke-width="2" />
<line x1="2709.0" y1="1743.3" x2="2709.0" y2="1779.8" stroke="#474747" stroke-width="2" />
<line x1="2731.7" y1="1743.3" x2="2731.7" y2="1779.8" stroke="#474747" stroke-width="2" />
<line x1="2754.4" y1="1743.3" x2="2754.4" y2="1779.8" stroke="#474747" stroke-width="2" />
<line x1="2777.1" y1="1743.3" x2="2777.1" y2="1779.8" stroke="#474747" stroke-width="2" />
<line x1="2799.9" y1="1743.3" x2="2799.9" y2="1779.8" stroke="#474747" stroke-width="2" />
<line x1="2822.6" y1="1743.3" x2="2822.6" y2="1779.8" stroke="#474747" stroke-width="2" />
<line x1="2845.3" y1="1743.3" x2="2845.3" y2="1779.8" stroke="#474747" stroke-width="2" />
<line x1="2868.0" y1="1743.3" x2="2868.0" y2="1779.8" stroke="#474747" stroke-width="2" />
<line x1="2890.7" y1="1743.3" x2="2890.7" y2="1779.8" stroke="#474747" stroke-width="2" />
<rect x="1162.7" y="271.6" width="182.0" height="180.8" rx="9" fill="#050505" />
<rect x="1164.3" y="273.2" width="178.8" height="177.6" rx="7.5" fill="#c0621c" />
<rect x="1164.3" y="273.2" width="178.8" height="39.9" rx="7.5" fill="#a4521c" />
<rect x="1164.3" y="305.1" width="178.8" height="4.0" rx="0" fill="#a4521c" />
<rect x="1166.3" y="309.1" width="174.8" height="139.7" rx="6" fill="#050505" />
<rect x="1166.3" y="309.1" width="174.8" height="10.0" rx="0" fill="#050505" />
<rect x="1168.3" y="311.3" width="170.8" height="135.5" rx="4.5" fill="#2e1b10" />
<rect x="1168.3" y="311.3" width="170.8" height="10.0" rx="0" fill="#2e1b10" />
<path d="M1245.7 272.6 A8 9 0 0 1 1253.7 281.6 A8 9 0 0 1 1261.7 272.6 Z" fill="#050505" />
<path d="M1245.7 452.40000000000003 A8 7 0 0 0 1253.7 445.40000000000003 A8 7 0 0 0 1261.7 452.40000000000003 Z" fill="#050505" />
<path d="M1245.7 449.8 A6 4.5 0 0 0 1251.7 445.40000000000003 H1255.7 A6 4.5 0 0 0 1261.7 449.8" fill="none" stroke="#c0621c" stroke-width="2" />
<text x="1173.7" y="298.5" font-size="23.3" fill="#f4e8e0" stroke="#f4e8e0" stroke-width="0.5">Dance Clean</text>
<rect x="1197.3" y="324.7" width="5.8" height="4.2" rx="0" fill="#6a3a18" />
<rect x="1288.4" y="324.7" width="5.8" height="4.2" rx="0" fill="#6a3a18" />
<rect x="1175.8" y="344.6" width="5.0" height="4.2" rx="0" fill="#6a3a18" />
<rect x="1268.5" y="344.6" width="5.8" height="4.2" rx="0" fill="#6a3a18" />
<rect x="1227.9" y="376.8" width="12.4" height="4.2" rx="0" fill="#6a3a18" />
<rect x="1328.1" y="376.8" width="5.8" height="4.2" rx="0" fill="#6a3a18" />
<rect x="1182.4" y="396.7" width="5.8" height="4.2" rx="0" fill="#6a3a18" />
<rect x="1194.2" y="396.7" width="5.5" height="4.2" rx="0" fill="#6a3a18" />
<rect x="1202.2" y="396.7" width="5.8" height="4.2" rx="0" fill="#6a3a18" />
<rect x="1222.1" y="396.7" width="5.8" height="4.2" rx="0" fill="#6a3a18" />
<rect x="1242.0" y="396.7" width="6.1" height="4.2" rx="0" fill="#6a3a18" />
<rect x="1274.3" y="396.7" width="11.6" height="4.2" rx="0" fill="#6a3a18" />
<rect x="1294.2" y="396.7" width="5.8" height="4.2" rx="0" fill="#6a3a18" />
<rect x="1314.0" y="396.7" width="5.0" height="4.2" rx="0" fill="#6a3a18" />
<rect x="1174.1" y="416.6" width="12.0" height="4.2" rx="0" fill="#6a3a18" />
<rect x="1254.1" y="416.6" width="12.0" height="4.2" rx="0" fill="#6a3a18" />
<rect x="1270.2" y="416.6" width="5.8" height="4.2" rx="0" fill="#6a3a18" />
<rect x="1172.1" y="426.5" width="6.0" height="4.2" rx="0" fill="#6a3a18" />
<rect x="1208.1" y="426.5" width="6.0" height="4.2" rx="0" fill="#6a3a18" />
<rect x="1220.1" y="426.5" width="12.0" height="4.2" rx="0" fill="#6a3a18" />
<rect x="1240.0" y="426.5" width="6.0" height="4.2" rx="0" fill="#6a3a18" />
<rect x="1264.0" y="426.5" width="6.0" height="4.2" rx="0" fill="#6a3a18" />
<rect x="1300.3" y="426.5" width="5.8" height="4.2" rx="0" fill="#6a3a18" />
<rect x="1310.4" y="426.5" width="8.6" height="4.2" rx="0" fill="#6a3a18" />
<rect x="1332.2" y="426.5" width="5.8" height="4.2" rx="0" fill="#6a3a18" />
<rect x="1218.0" y="438.6" width="6.0" height="4.2" rx="0" fill="#6a3a18" />
<rect x="1308.2" y="438.6" width="5.8" height="4.2" rx="0" fill="#6a3a18" />
<rect x="1344.5" y="271.6" width="182.0" height="180.8" rx="9" fill="#050505" />
<rect x="1346.1" y="273.2" width="178.8" height="177.6" rx="7.5" fill="#c0621c" />
<rect x="1346.1" y="273.2" width="178.8" height="39.9" rx="7.5" fill="#a4521c" />
<rect x="1346.1" y="305.1" width="178.8" height="4.0" rx="0" fill="#a4521c" />
<rect x="1348.1" y="309.1" width="174.8" height="139.7" rx="6" fill="#050505" />
<rect x="1348.1" y="309.1" width="174.8" height="10.0" rx="0" fill="#050505" />
<rect x="1350.1" y="311.3" width="170.8" height="135.5" rx="4.5" fill="#2e1b10" />
<rect x="1350.1" y="311.3" width="170.8" height="10.0" rx="0" fill="#2e1b10" />
<path d="M1427.46 272.6 A8 9 0 0 1 1435.46 281.6 A8 9 0 0 1 1443.46 272.6 Z" fill="#050505" />
<path d="M1427.46 452.40000000000003 A8 7 0 0 0 1435.46 445.40000000000003 A8 7 0 0 0 1443.46 452.40000000000003 Z" fill="#050505" />
<path d="M1427.46 449.8 A6 4.5 0 0 0 1433.46 445.40000000000003 H1437.46 A6 4.5 0 0 0 1443.46 449.8" fill="none" stroke="#c0621c" stroke-width="2" />
<text x="1355.5" y="298.5" font-size="23.3" fill="#f4e8e0" stroke="#f4e8e0" stroke-width="0.5">Dance Clean</text>
<rect x="1379.1" y="324.7" width="5.8" height="4.2" rx="0" fill="#6a3a18" />
<rect x="1470.2" y="324.7" width="5.8" height="4.2" rx="0" fill="#6a3a18" />
<rect x="1357.6" y="344.6" width="5.0" height="4.2" rx="0" fill="#6a3a18" />
<rect x="1450.3" y="344.6" width="5.8" height="4.2" rx="0" fill="#6a3a18" />
<rect x="1409.7" y="376.8" width="12.4" height="4.2" rx="0" fill="#6a3a18" />
<rect x="1509.9" y="376.8" width="5.8" height="4.2" rx="0" fill="#6a3a18" />
<rect x="1364.2" y="396.7" width="5.8" height="4.2" rx="0" fill="#6a3a18" />
<rect x="1376.0" y="396.7" width="5.5" height="4.2" rx="0" fill="#6a3a18" />
<rect x="1384.0" y="396.7" width="5.8" height="4.2" rx="0" fill="#6a3a18" />
<rect x="1403.9" y="396.7" width="5.8" height="4.2" rx="0" fill="#6a3a18" />
<rect x="1423.8" y="396.7" width="6.1" height="4.2" rx="0" fill="#6a3a18" />
<rect x="1456.1" y="396.7" width="11.6" height="4.2" rx="0" fill="#6a3a18" />
<rect x="1476.0" y="396.7" width="5.8" height="4.2" rx="0" fill="#6a3a18" />
<rect x="1495.8" y="396.7" width="5.0" height="4.2" rx="0" fill="#6a3a18" />
<rect x="1355.9" y="416.6" width="12.0" height="4.2" rx="0" fill="#6a3a18" />
<rect x="1435.9" y="416.6" width="12.0" height="4.2" rx="0" fill="#6a3a18" />
<rect x="1452.0" y="416.6" width="5.8" height="4.2" rx="0" fill="#6a3a18" />
<rect x="1353.9" y="426.5" width="6.0" height="4.2" rx="0" fill="#6a3a18" />
<rect x="1389.9" y="426.5" width="6.0" height="4.2" rx="0" fill="#6a3a18" />
<rect x="1401.9" y="426.5" width="12.0" height="4.2" rx="0" fill="#6a3a18" />
<rect x="1421.8" y="426.5" width="6.0" height="4.2" rx="0" fill="#6a3a18" />
<rect x="1445.8" y="426.5" width="6.0" height="4.2" rx="0" fill="#6a3a18" />
<rect x="1482.1" y="426.5" width="5.8" height="4.2" rx="0" fill="#6a3a18" />
<rect x="1492.2" y="426.5" width="8.6" height="4.2" rx="0" fill="#6a3a18" />
<rect x="1514.0" y="426.5" width="5.8" height="4.2" rx="0" fill="#6a3a18" />
<rect x="1399.8" y="438.6" width="6.0" height="4.2" rx="0" fill="#6a3a18" />
<rect x="1490.0" y="438.6" width="5.8" height="4.2" rx="0" fill="#6a3a18" />
<rect x="1526.2" y="271.6" width="182.0" height="180.8" rx="9" fill="#050505" />
<rect x="1527.8" y="273.2" width="178.8" height="177.6" rx="7.5" fill="#c0621c" />
<rect x="1527.8" y="273.2" width="178.8" height="39.9" rx="7.5" fill="#a4521c" />
<rect x="1527.8" y="305.1" width="178.8" height="4.0" rx="0" fill="#a4521c" />
<rect x="1529.8" y="309.1" width="174.8" height="139.7" rx="6" fill="#050505" />
<rect x="1529.8" y="309.1" width="174.8" height="10.0" rx="0" fill="#050505" />
<rect x="1531.8" y="311.3" width="170.8" height="135.5" rx="4.5" fill="#2e1b10" />
<rect x="1531.8" y="311.3" width="170.8" height="10.0" rx="0" fill="#2e1b10" />
<path d="M1609.22 272.6 A8 9 0 0 1 1617.22 281.6 A8 9 0 0 1 1625.22 272.6 Z" fill="#050505" />
<path d="M1609.22 452.40000000000003 A8 7 0 0 0 1617.22 445.40000000000003 A8 7 0 0 0 1625.22 452.40000000000003 Z" fill="#050505" />
<path d="M1609.22 449.8 A6 4.5 0 0 0 1615.22 445.40000000000003 H1619.22 A6 4.5 0 0 0 1625.22 449.8" fill="none" stroke="#c0621c" stroke-width="2" />
<text x="1537.2" y="298.5" font-size="23.3" fill="#f4e8e0" stroke="#f4e8e0" stroke-width="0.5">Dance Clean</text>
<rect x="1560.8" y="324.7" width="5.8" height="4.2" rx="0" fill="#6a3a18" />
<rect x="1651.9" y="324.7" width="5.8" height="4.2" rx="0" fill="#6a3a18" />
<rect x="1539.3" y="344.6" width="5.0" height="4.2" rx="0" fill="#6a3a18" />
<rect x="1632.0" y="344.6" width="5.8" height="4.2" rx="0" fill="#6a3a18" />
<rect x="1591.4" y="376.8" width="12.4" height="4.2" rx="0" fill="#6a3a18" />
<rect x="1691.6" y="376.8" width="5.8" height="4.2" rx="0" fill="#6a3a18" />
<rect x="1545.9" y="396.7" width="5.8" height="4.2" rx="0" fill="#6a3a18" />
<rect x="1557.7" y="396.7" width="5.5" height="4.2" rx="0" fill="#6a3a18" />
<rect x="1565.7" y="396.7" width="5.8" height="4.2" rx="0" fill="#6a3a18" />
<rect x="1585.6" y="396.7" width="5.8" height="4.2" rx="0" fill="#6a3a18" />
<rect x="1605.5" y="396.7" width="6.1" height="4.2" rx="0" fill="#6a3a18" />
<rect x="1637.8" y="396.7" width="11.6" height="4.2" rx="0" fill="#6a3a18" />
<rect x="1657.7" y="396.7" width="5.8" height="4.2" rx="0" fill="#6a3a18" />
<rect x="1677.5" y="396.7" width="5.0" height="4.2" rx="0" fill="#6a3a18" />
<rect x="1537.6" y="416.6" width="12.0" height="4.2" rx="0" fill="#6a3a18" />
<rect x="1617.6" y="416.6" width="12.0" height="4.2" rx="0" fill="#6a3a18" />
<rect x="1633.7" y="416.6" width="5.8" height="4.2" rx="0" fill="#6a3a18" />
<rect x="1535.6" y="426.5" width="6.0" height="4.2" rx="0" fill="#6a3a18" />
<rect x="1571.6" y="426.5" width="6.0" height="4.2" rx="0" fill="#6a3a18" />
<rect x="1583.6" y="426.5" width="12.0" height="4.2" rx="0" fill="#6a3a18" />
<rect x="1603.5" y="426.5" width="6.0" height="4.2" rx="0" fill="#6a3a18" />
<rect x="1627.5" y="426.5" width="6.0" height="4.2" rx="0" fill="#6a3a18" />
<rect x="1663.8" y="426.5" width="5.8" height="4.2" rx="0" fill="#6a3a18" />
<rect x="1673.9" y="426.5" width="8.6" height="4.2" rx="0" fill="#6a3a18" />
<rect x="1695.7" y="426.5" width="5.8" height="4.2" rx="0" fill="#6a3a18" />
<rect x="1581.5" y="438.6" width="6.0" height="4.2" rx="0" fill="#6a3a18" />
<rect x="1671.7" y="438.6" width="5.8" height="4.2" rx="0" fill="#6a3a18" />
<rect x="1708.0" y="271.6" width="182.0" height="180.8" rx="9" fill="#050505" />
<rect x="1709.6" y="273.2" width="178.8" height="177.6" rx="7.5" fill="#c0621c" />
<rect x="1709.6" y="273.2" width="178.8" height="39.9" rx="7.5" fill="#a4521c" />
<rect x="1709.6" y="305.1" width="178.8" height="4.0" rx="0" fill="#a4521c" />
<rect x="1711.6" y="309.1" width="174.8" height="139.7" rx="6" fill="#050505" />
<rect x="1711.6" y="309.1" width="174.8" height="10.0" rx="0" fill="#050505" />
<rect x="1713.6" y="311.3" width="170.8" height="135.5" rx="4.5" fill="#2e1b10" />
<rect x="1713.6" y="311.3" width="170.8" height="10.0" rx="0" fill="#2e1b10" />
<path d="M1790.98 272.6 A8 9 0 0 1 1798.98 281.6 A8 9 0 0 1 1806.98 272.6 Z" fill="#050505" />
<path d="M1790.98 452.40000000000003 A8 7 0 0 0 1798.98 445.40000000000003 A8 7 0 0 0 1806.98 452.40000000000003 Z" fill="#050505" />
<path d="M1790.98 449.8 A6 4.5 0 0 0 1796.98 445.40000000000003 H1800.98 A6 4.5 0 0 0 1806.98 449.8" fill="none" stroke="#c0621c" stroke-width="2" />
<text x="1719.0" y="298.5" font-size="23.3" fill="#f4e8e0" stroke="#f4e8e0" stroke-width="0.5">Dance Clean</text>
<rect x="1742.6" y="324.7" width="5.8" height="4.2" rx="0" fill="#6a3a18" />
<rect x="1833.7" y="324.7" width="5.8" height="4.2" rx="0" fill="#6a3a18" />
<rect x="1721.1" y="344.6" width="5.0" height="4.2" rx="0" fill="#6a3a18" />
<rect x="1813.8" y="344.6" width="5.8" height="4.2" rx="0" fill="#6a3a18" />
<rect x="1773.2" y="376.8" width="12.4" height="4.2" rx="0" fill="#6a3a18" />
<rect x="1873.4" y="376.8" width="5.8" height="4.2" rx="0" fill="#6a3a18" />
<rect x="1727.7" y="396.7" width="5.8" height="4.2" rx="0" fill="#6a3a18" />
<rect x="1739.5" y="396.7" width="5.5" height="4.2" rx="0" fill="#6a3a18" />
<rect x="1747.5" y="396.7" width="5.8" height="4.2" rx="0" fill="#6a3a18" />
<rect x="1767.4" y="396.7" width="5.8" height="4.2" rx="0" fill="#6a3a18" />
<rect x="1787.3" y="396.7" width="6.1" height="4.2" rx="0" fill="#6a3a18" />
<rect x="1819.6" y="396.7" width="11.6" height="4.2" rx="0" fill="#6a3a18" />
<rect x="1839.5" y="396.7" width="5.8" height="4.2" rx="0" fill="#6a3a18" />
<rect x="1859.3" y="396.7" width="5.0" height="4.2" rx="0" fill="#6a3a18" />
<rect x="1719.4" y="416.6" width="12.0" height="4.2" rx="0" fill="#6a3a18" />
<rect x="1799.4" y="416.6" width="12.0" height="4.2" rx="0" fill="#6a3a18" />
<rect x="1815.5" y="416.6" width="5.8" height="4.2" rx="0" fill="#6a3a18" />
<rect x="1717.4" y="426.5" width="6.0" height="4.2" rx="0" fill="#6a3a18" />
<rect x="1753.4" y="426.5" width="6.0" height="4.2" rx="0" fill="#6a3a18" />
<rect x="1765.4" y="426.5" width="12.0" height="4.2" rx="0" fill="#6a3a18" />
<rect x="1785.3" y="426.5" width="6.0" height="4.2" rx="0" fill="#6a3a18" />
<rect x="1809.3" y="426.5" width="6.0" height="4.2" rx="0" fill="#6a3a18" />
<rect x="1845.6" y="426.5" width="5.8" height="4.2" rx="0" fill="#6a3a18" />
<rect x="1855.7" y="426.5" width="8.6" height="4.2" rx="0" fill="#6a3a18" />
<rect x="1877.5" y="426.5" width="5.8" height="4.2" rx="0" fill="#6a3a18" />
<rect x="1763.3" y="438.6" width="6.0" height="4.2" rx="0" fill="#6a3a18" />
<rect x="1853.5" y="438.6" width="5.8" height="4.2" rx="0" fill="#6a3a18" />
<rect x="1889.8" y="271.6" width="182.0" height="180.8" rx="9" fill="#050505" />
<rect x="1891.4" y="273.2" width="178.8" height="177.6" rx="7.5" fill="#c0621c" />
<rect x="1891.4" y="273.2" width="178.8" height="39.9" rx="7.5" fill="#a4521c" />
<rect x="1891.4" y="305.1" width="178.8" height="4.0" rx="0" fill="#a4521c" />
<rect x="1893.4" y="309.1" width="174.8" height="139.7" rx="6" fill="#050505" />
<rect x="1893.4" y="309.1" width="174.8" height="10.0" rx="0" fill="#050505" />
<rect x="1895.4" y="311.3" width="170.8" height="135.5" rx="4.5" fill="#2e1b10" />
<rect x="1895.4" y="311.3" width="170.8" height="10.0" rx="0" fill="#2e1b10" />
<path d="M1972.7399999999998 272.6 A8 9 0 0 1 1980.7399999999998 281.6 A8 9 0 0 1 1988.7399999999998 272.6 Z" fill="#050505" />
<path d="M1972.7399999999998 452.40000000000003 A8 7 0 0 0 1980.7399999999998 445.40000000000003 A8 7 0 0 0 1988.7399999999998 452.40000000000003 Z" fill="#050505" />
<path d="M1972.7399999999998 449.8 A6 4.5 0 0 0 1978.7399999999998 445.40000000000003 H1982.7399999999998 A6 4.5 0 0 0 1988.7399999999998 449.8" fill="none" stroke="#c0621c" stroke-width="2" />
<text x="1900.8" y="298.5" font-size="23.3" fill="#f4e8e0" stroke="#f4e8e0" stroke-width="0.5">Dance Clean</text>
<rect x="1924.4" y="324.7" width="5.8" height="4.2" rx="0" fill="#6a3a18" />
<rect x="2015.5" y="324.7" width="5.8" height="4.2" rx="0" fill="#6a3a18" />
<rect x="1902.9" y="344.6" width="5.0" height="4.2" rx="0" fill="#6a3a18" />
<rect x="1995.6" y="344.6" width="5.8" height="4.2" rx="0" fill="#6a3a18" />
<rect x="1955.0" y="376.8" width="12.4" height="4.2" rx="0" fill="#6a3a18" />
<rect x="2055.2" y="376.8" width="5.8" height="4.2" rx="0" fill="#6a3a18" />
<rect x="1909.5" y="396.7" width="5.8" height="4.2" rx="0" fill="#6a3a18" />
<rect x="1921.3" y="396.7" width="5.5" height="4.2" rx="0" fill="#6a3a18" />
<rect x="1929.3" y="396.7" width="5.8" height="4.2" rx="0" fill="#6a3a18" />
<rect x="1949.2" y="396.7" width="5.8" height="4.2" rx="0" fill="#6a3a18" />
<rect x="1969.1" y="396.7" width="6.1" height="4.2" rx="0" fill="#6a3a18" />
<rect x="2001.4" y="396.7" width="11.6" height="4.2" rx="0" fill="#6a3a18" />
<rect x="2021.3" y="396.7" width="5.8" height="4.2" rx="0" fill="#6a3a18" />
<rect x="2041.1" y="396.7" width="5.0" height="4.2" rx="0" fill="#6a3a18" />
<rect x="1901.2" y="416.6" width="12.0" height="4.2" rx="0" fill="#6a3a18" />
<rect x="1981.2" y="416.6" width="12.0" height="4.2" rx="0" fill="#6a3a18" />
<rect x="1997.3" y="416.6" width="5.8" height="4.2" rx="0" fill="#6a3a18" />
<rect x="1899.2" y="426.5" width="6.0" height="4.2" rx="0" fill="#6a3a18" />
<rect x="1935.2" y="426.5" width="6.0" height="4.2" rx="0" fill="#6a3a18" />
<rect x="1947.2" y="426.5" width="12.0" height="4.2" rx="0" fill="#6a3a18" />
<rect x="1967.1" y="426.5" width="6.0" height="4.2" rx="0" fill="#6a3a18" />
<rect x="1991.1" y="426.5" width="6.0" height="4.2" rx="0" fill="#6a3a18" />
<rect x="2027.4" y="426.5" width="5.8" height="4.2" rx="0" fill="#6a3a18" />
<rect x="2037.5" y="426.5" width="8.6" height="4.2" rx="0" fill="#6a3a18" />
<rect x="2059.3" y="426.5" width="5.8" height="4.2" rx="0" fill="#6a3a18" />
<rect x="1945.1" y="438.6" width="6.0" height="4.2" rx="0" fill="#6a3a18" />
<rect x="2035.3" y="438.6" width="5.8" height="4.2" rx="0" fill="#6a3a18" />
<rect x="2071.5" y="271.6" width="182.0" height="180.8" rx="9" fill="#050505" />
<rect x="2073.1" y="273.2" width="178.8" height="177.6" rx="7.5" fill="#c0621c" />
<rect x="2073.1" y="273.2" width="178.8" height="39.9" rx="7.5" fill="#a4521c" />
<rect x="2073.1" y="305.1" width="178.8" height="4.0" rx="0" fill="#a4521c" />
<rect x="2075.1" y="309.1" width="174.8" height="139.7" rx="6" fill="#050505" />
<rect x="2075.1" y="309.1" width="174.8" height="10.0" rx="0" fill="#050505" />
<rect x="2077.1" y="311.3" width="170.8" height="135.5" rx="4.5" fill="#2e1b10" />
<rect x="2077.1" y="311.3" width="170.8" height="10.0" rx="0" fill="#2e1b10" />
<path d="M2154.5 272.6 A8 9 0 0 1 2162.5 281.6 A8 9 0 0 1 2170.5 272.6 Z" fill="#050505" />
<path d="M2154.5 452.40000000000003 A8 7 0 0 0 2162.5 445.40000000000003 A8 7 0 0 0 2170.5 452.40000000000003 Z" fill="#050505" />
<path d="M2154.5 449.8 A6 4.5 0 0 0 2160.5 445.40000000000003 H2164.5 A6 4.5 0 0 0 2170.5 449.8" fill="none" stroke="#c0621c" stroke-width="2" />
<text x="2082.5" y="298.5" font-size="23.3" fill="#f4e8e0" stroke="#f4e8e0" stroke-width="0.5">Dance Clean</text>
<rect x="2106.1" y="324.7" width="5.8" height="4.2" rx="0" fill="#6a3a18" />
<rect x="2197.2" y="324.7" width="5.8" height="4.2" rx="0" fill="#6a3a18" />
<rect x="2084.6" y="344.6" width="5.0" height="4.2" rx="0" fill="#6a3a18" />
<rect x="2177.3" y="344.6" width="5.8" height="4.2" rx="0" fill="#6a3a18" />
<rect x="2136.7" y="376.8" width="12.4" height="4.2" rx="0" fill="#6a3a18" />
<rect x="2236.9" y="376.8" width="5.8" height="4.2" rx="0" fill="#6a3a18" />
<rect x="2091.2" y="396.7" width="5.8" height="4.2" rx="0" fill="#6a3a18" />
<rect x="2103.0" y="396.7" width="5.5" height="4.2" rx="0" fill="#6a3a18" />
<rect x="2111.0" y="396.7" width="5.8" height="4.2" rx="0" fill="#6a3a18" />
<rect x="2130.9" y="396.7" width="5.8" height="4.2" rx="0" fill="#6a3a18" />
<rect x="2150.8" y="396.7" width="6.1" height="4.2" rx="0" fill="#6a3a18" />
<rect x="2183.1" y="396.7" width="11.6" height="4.2" rx="0" fill="#6a3a18" />
<rect x="2203.0" y="396.7" width="5.8" height="4.2" rx="0" fill="#6a3a18" />
<rect x="2222.8" y="396.7" width="5.0" height="4.2" rx="0" fill="#6a3a18" />
<rect x="2082.9" y="416.6" width="12.0" height="4.2" rx="0" fill="#6a3a18" />
<rect x="2162.9" y="416.6" width="12.0" height="4.2" rx="0" fill="#6a3a18" />
<rect x="2179.0" y="416.6" width="5.8" height="4.2" rx="0" fill="#6a3a18" />
<rect x="2080.9" y="426.5" width="6.0" height="4.2" rx="0" fill="#6a3a18" />
<rect x="2116.9" y="426.5" width="6.0" height="4.2" rx="0" fill="#6a3a18" />
<rect x="2128.9" y="426.5" width="12.0" height="4.2" rx="0" fill="#6a3a18" />
<rect x="2148.8" y="426.5" width="6.0" height="4.2" rx="0" fill="#6a3a18" />
<rect x="2172.8" y="426.5" width="6.0" height="4.2" rx="0" fill="#6a3a18" />
<rect x="2209.1" y="426.5" width="5.8" height="4.2" rx="0" fill="#6a3a18" />
<rect x="2219.2" y="426.5" width="8.6" height="4.2" rx="0" fill="#6a3a18" />
<rect x="2241.0" y="426.5" width="5.8" height="4.2" rx="0" fill="#6a3a18" />
<rect x="2126.8" y="438.6" width="6.0" height="4.2" rx="0" fill="#6a3a18" />
<rect x="2217.0" y="438.6" width="5.8" height="4.2" rx="0" fill="#6a3a18" />
<rect x="2253.3" y="271.6" width="182.0" height="180.8" rx="9" fill="#050505" />
<rect x="2254.9" y="273.2" width="178.8" height="177.6" rx="7.5" fill="#c0621c" />
<rect x="2254.9" y="273.2" width="178.8" height="39.9" rx="7.5" fill="#a4521c" />
<rect x="2254.9" y="305.1" width="178.8" height="4.0" rx="0" fill="#a4521c" />
<rect x="2256.9" y="309.1" width="174.8" height="139.7" rx="6" fill="#050505" />
<rect x="2256.9" y="309.1" width="174.8" height="10.0" rx="0" fill="#050505" />
<rect x="2258.9" y="311.3" width="170.8" height="135.5" rx="4.5" fill="#2e1b10" />
<rect x="2258.9" y="311.3" width="170.8" height="10.0" rx="0" fill="#2e1b10" />
<path d="M2336.2599999999998 272.6 A8 9 0 0 1 2344.2599999999998 281.6 A8 9 0 0 1 2352.2599999999998 272.6 Z" fill="#050505" />
<path d="M2336.2599999999998 452.40000000000003 A8 7 0 0 0 2344.2599999999998 445.40000000000003 A8 7 0 0 0 2352.2599999999998 452.40000000000003 Z" fill="#050505" />
<path d="M2336.2599999999998 449.8 A6 4.5 0 0 0 2342.2599999999998 445.40000000000003 H2346.2599999999998 A6 4.5 0 0 0 2352.2599999999998 449.8" fill="none" stroke="#c0621c" stroke-width="2" />
<text x="2264.3" y="298.5" font-size="23.3" fill="#f4e8e0" stroke="#f4e8e0" stroke-width="0.5">Dance Clean</text>
<rect x="2287.9" y="324.7" width="5.8" height="4.2" rx="0" fill="#6a3a18" />
<rect x="2379.0" y="324.7" width="5.8" height="4.2" rx="0" fill="#6a3a18" />
<rect x="2266.4" y="344.6" width="5.0" height="4.2" rx="0" fill="#6a3a18" />
<rect x="2359.1" y="344.6" width="5.8" height="4.2" rx="0" fill="#6a3a18" />
<rect x="2318.5" y="376.8" width="12.4" height="4.2" rx="0" fill="#6a3a18" />
<rect x="2418.7" y="376.8" width="5.8" height="4.2" rx="0" fill="#6a3a18" />
<rect x="2273.0" y="396.7" width="5.8" height="4.2" rx="0" fill="#6a3a18" />
<rect x="2284.8" y="396.7" width="5.5" height="4.2" rx="0" fill="#6a3a18" />
<rect x="2292.8" y="396.7" width="5.8" height="4.2" rx="0" fill="#6a3a18" />
<rect x="2312.7" y="396.7" width="5.8" height="4.2" rx="0" fill="#6a3a18" />
<rect x="2332.6" y="396.7" width="6.1" height="4.2" rx="0" fill="#6a3a18" />
<rect x="2364.9" y="396.7" width="11.6" height="4.2" rx="0" fill="#6a3a18" />
<rect x="2384.8" y="396.7" width="5.8" height="4.2" rx="0" fill="#6a3a18" />
<rect x="2404.6" y="396.7" width="5.0" height="4.2" rx="0" fill="#6a3a18" />
<rect x="2264.7" y="416.6" width="12.0" height="4.2" rx="0" fill="#6a3a18" />
<rect x="2344.7" y="416.6" width="12.0" height="4.2" rx="0" fill="#6a3a18" />
<rect x="2360.8" y="416.6" width="5.8" height="4.2" rx="0" fill="#6a3a18" />
<rect x="2262.7" y="426.5" width="6.0" height="4.2" rx="0" fill="#6a3a18" />
<rect x="2298.7" y="426.5" width="6.0" height="4.2" rx="0" fill="#6a3a18" />
<rect x="2310.7" y="426.5" width="12.0" height="4.2" rx="0" fill="#6a3a18" />
<rect x="2330.6" y="426.5" width="6.0" height="4.2" rx="0" fill="#6a3a18" />
<rect x="2354.6" y="426.5" width="6.0" height="4.2" rx="0" fill="#6a3a18" />
<rect x="2390.9" y="426.5" width="5.8" height="4.2" rx="0" fill="#6a3a18" />
<rect x="2401.0" y="426.5" width="8.6" height="4.2" rx="0" fill="#6a3a18" />
<rect x="2422.8" y="426.5" width="5.8" height="4.2" rx="0" fill="#6a3a18" />
<rect x="2308.6" y="438.6" width="6.0" height="4.2" rx="0" fill="#6a3a18" />
<rect x="2398.8" y="438.6" width="5.8" height="4.2" rx="0" fill="#6a3a18" />
<rect x="2435.0" y="271.6" width="182.0" height="180.8" rx="9" fill="#050505" />
<rect x="2436.6" y="273.2" width="178.8" height="177.6" rx="7.5" fill="#c0621c" />
<rect x="2436.6" y="273.2" width="178.8" height="39.9" rx="7.5" fill="#a4521c" />
<rect x="2436.6" y="305.1" width="178.8" height="4.0" rx="0" fill="#a4521c" />
<rect x="2438.6" y="309.1" width="174.8" height="139.7" rx="6" fill="#050505" />
<rect x="2438.6" y="309.1" width="174.8" height="10.0" rx="0" fill="#050505" />
<rect x="2440.6" y="311.3" width="170.8" height="135.5" rx="4.5" fill="#2e1b10" />
<rect x="2440.6" y="311.3" width="170.8" height="10.0" rx="0" fill="#2e1b10" />
<path d="M2518.02 272.6 A8 9 0 0 1 2526.02 281.6 A8 9 0 0 1 2534.02 272.6 Z" fill="#050505" />
<path d="M2518.02 452.40000000000003 A8 7 0 0 0 2526.02 445.40000000000003 A8 7 0 0 0 2534.02 452.40000000000003 Z" fill="#050505" />
<path d="M2518.02 449.8 A6 4.5 0 0 0 2524.02 445.40000000000003 H2528.02 A6 4.5 0 0 0 2534.02 449.8" fill="none" stroke="#c0621c" stroke-width="2" />
<text x="2446.0" y="298.5" font-size="23.3" fill="#f4e8e0" stroke="#f4e8e0" stroke-width="0.5">Dance Clean</text>
<rect x="2469.6" y="324.7" width="5.8" height="4.2" rx="0" fill="#6a3a18" />
<rect x="2560.7" y="324.7" width="5.8" height="4.2" rx="0" fill="#6a3a18" />
<rect x="2448.1" y="344.6" width="5.0" height="4.2" rx="0" fill="#6a3a18" />
<rect x="2540.8" y="344.6" width="5.8" height="4.2" rx="0" fill="#6a3a18" />
<rect x="2500.2" y="376.8" width="12.4" height="4.2" rx="0" fill="#6a3a18" />
<rect x="2600.4" y="376.8" width="5.8" height="4.2" rx="0" fill="#6a3a18" />
<rect x="2454.7" y="396.7" width="5.8" height="4.2" rx="0" fill="#6a3a18" />
<rect x="2466.5" y="396.7" width="5.5" height="4.2" rx="0" fill="#6a3a18" />
<rect x="2474.5" y="396.7" width="5.8" height="4.2" rx="0" fill="#6a3a18" />
<rect x="2494.4" y="396.7" width="5.8" height="4.2" rx="0" fill="#6a3a18" />
<rect x="2514.3" y="396.7" width="6.1" height="4.2" rx="0" fill="#6a3a18" />
<rect x="2546.6" y="396.7" width="11.6" height="4.2" rx="0" fill="#6a3a18" />
<rect x="2566.5" y="396.7" width="5.8" height="4.2" rx="0" fill="#6a3a18" />
<rect x="2586.3" y="396.7" width="5.0" height="4.2" rx="0" fill="#6a3a18" />
<rect x="2446.4" y="416.6" width="12.0" height="4.2" rx="0" fill="#6a3a18" />
<rect x="2526.4" y="416.6" width="12.0" height="4.2" rx="0" fill="#6a3a18" />
<rect x="2542.5" y="416.6" width="5.8" height="4.2" rx="0" fill="#6a3a18" />
<rect x="2444.4" y="426.5" width="6.0" height="4.2" rx="0" fill="#6a3a18" />
<rect x="2480.4" y="426.5" width="6.0" height="4.2" rx="0" fill="#6a3a18" />
<rect x="2492.4" y="426.5" width="12.0" height="4.2" rx="0" fill="#6a3a18" />
<rect x="2512.3" y="426.5" width="6.0" height="4.2" rx="0" fill="#6a3a18" />
<rect x="2536.3" y="426.5" width="6.0" height="4.2" rx="0" fill="#6a3a18" />
<rect x="2572.6" y="426.5" width="5.8" height="4.2" rx="0" fill="#6a3a18" />
<rect x="2582.7" y="426.5" width="8.6" height="4.2" rx="0" fill="#6a3a18" />
<rect x="2604.5" y="426.5" width="5.8" height="4.2" rx="0" fill="#6a3a18" />
<rect x="2490.3" y="438.6" width="6.0" height="4.2" rx="0" fill="#6a3a18" />
<rect x="2580.5" y="438.6" width="5.8" height="4.2" rx="0" fill="#6a3a18" />
<rect x="2616.8" y="271.6" width="180.8" height="180.8" rx="9" fill="#050505" />
<rect x="2618.4" y="273.2" width="177.6" height="177.6" rx="7.5" fill="#c0621c" />
<rect x="2618.4" y="273.2" width="177.6" height="39.9" rx="7.5" fill="#a4521c" />
<rect x="2618.4" y="305.1" width="177.6" height="4.0" rx="0" fill="#a4521c" />
<rect x="2620.4" y="309.1" width="173.6" height="139.7" rx="6" fill="#050505" />
<rect x="2620.4" y="309.1" width="173.6" height="10.0" rx="0" fill="#050505" />
<rect x="2622.4" y="311.3" width="169.6" height="135.5" rx="4.5" fill="#2e1b10" />
<rect x="2622.4" y="311.3" width="169.6" height="10.0" rx="0" fill="#2e1b10" />
<path d="M2699.1800000000003 272.6 A8 9 0 0 1 2707.1800000000003 281.6 A8 9 0 0 1 2715.1800000000003 272.6 Z" fill="#050505" />
<path d="M2699.1800000000003 452.40000000000003 A8 7 0 0 0 2707.1800000000003 445.40000000000003 A8 7 0 0 0 2715.1800000000003 452.40000000000003 Z" fill="#050505" />
<path d="M2699.1800000000003 449.8 A6 4.5 0 0 0 2705.1800000000003 445.40000000000003 H2709.1800000000003 A6 4.5 0 0 0 2715.1800000000003 449.8" fill="none" stroke="#c0621c" stroke-width="2" />
<text x="2627.8" y="298.5" font-size="23.3" fill="#f4e8e0" stroke="#f4e8e0" stroke-width="0.5">Dance Clean</text>
<rect x="2651.4" y="324.7" width="5.8" height="4.2" rx="0" fill="#6a3a18" />
<rect x="2742.5" y="324.7" width="5.8" height="4.2" rx="0" fill="#6a3a18" />
<rect x="2629.9" y="344.6" width="5.0" height="4.2" rx="0" fill="#6a3a18" />
<rect x="2722.6" y="344.6" width="5.8" height="4.2" rx="0" fill="#6a3a18" />
<rect x="2682.0" y="376.8" width="12.4" height="4.2" rx="0" fill="#6a3a18" />
<rect x="2782.2" y="376.8" width="5.8" height="4.2" rx="0" fill="#6a3a18" />
<rect x="2636.5" y="396.7" width="5.8" height="4.2" rx="0" fill="#6a3a18" />
<rect x="2648.3" y="396.7" width="5.5" height="4.2" rx="0" fill="#6a3a18" />
<rect x="2656.3" y="396.7" width="5.8" height="4.2" rx="0" fill="#6a3a18" />
<rect x="2676.2" y="396.7" width="5.8" height="4.2" rx="0" fill="#6a3a18" />
<rect x="2696.1" y="396.7" width="6.1" height="4.2" rx="0" fill="#6a3a18" />
<rect x="2728.4" y="396.7" width="11.6" height="4.2" rx="0" fill="#6a3a18" />
<rect x="2748.3" y="396.7" width="5.8" height="4.2" rx="0" fill="#6a3a18" />
<rect x="2768.1" y="396.7" width="5.0" height="4.2" rx="0" fill="#6a3a18" />
<rect x="2628.2" y="416.6" width="12.0" height="4.2" rx="0" fill="#6a3a18" />
<rect x="2708.2" y="416.6" width="12.0" height="4.2" rx="0" fill="#6a3a18" />
<rect x="2724.3" y="416.6" width="5.8" height="4.2" rx="0" fill="#6a3a18" />
<rect x="2626.2" y="426.5" width="6.0" height="4.2" rx="0" fill="#6a3a18" />
<rect x="2662.2" y="426.5" width="6.0" height="4.2" rx="0" fill="#6a3a18" />
<rect x="2674.2" y="426.5" width="12.0" height="4.2" rx="0" fill="#6a3a18" />
<rect x="2694.1" y="426.5" width="6.0" height="4.2" rx="0" fill="#6a3a18" />
<rect x="2718.1" y="426.5" width="6.0" height="4.2" rx="0" fill="#6a3a18" />
<rect x="2754.4" y="426.5" width="5.8" height="4.2" rx="0" fill="#6a3a18" />
<rect x="2764.5" y="426.5" width="8.6" height="4.2" rx="0" fill="#6a3a18" />
<rect x="2786.3" y="426.5" width="5.8" height="4.2" rx="0" fill="#6a3a18" />
<rect x="2672.1" y="438.6" width="6.0" height="4.2" rx="0" fill="#6a3a18" />
<rect x="2762.3" y="438.6" width="5.8" height="4.2" rx="0" fill="#6a3a18" />
<rect x="1162.7" y="455.5" width="182.0" height="180.8" rx="9" fill="#050505" />
<rect x="1164.3" y="457.1" width="178.8" height="177.6" rx="7.5" fill="#3b8ee8" />
<rect x="1164.3" y="457.1" width="178.8" height="39.9" rx="7.5" fill="#cce4fb" />
<rect x="1164.3" y="489.0" width="178.8" height="4.0" rx="0" fill="#cce4fb" />
<rect x="1166.3" y="493.0" width="174.8" height="139.7" rx="6" fill="#050505" />
<rect x="1166.3" y="493.0" width="174.8" height="10.0" rx="0" fill="#050505" />
<rect x="1168.3" y="495.2" width="170.8" height="135.5" rx="4.5" fill="#172231" />
<rect x="1168.3" y="495.2" width="170.8" height="10.0" rx="0" fill="#172231" />
<path d="M1245.7 456.5 A8 9 0 0 1 1253.7 465.5 A8 9 0 0 1 1261.7 456.5 Z" fill="#050505" />
<path d="M1245.7 636.3 A8 7 0 0 0 1253.7 629.3 A8 7 0 0 0 1261.7 636.3 Z" fill="#050505" />
<path d="M1245.7 633.6999999999999 A6 4.5 0 0 0 1251.7 629.3 H1255.7 A6 4.5 0 0 0 1261.7 633.6999999999999" fill="none" stroke="#3b8ee8" stroke-width="2" />
<text x="1173.7" y="482.4" font-size="23.3" fill="#0e3563" stroke="#0e3563" stroke-width="0.5">Classic Electric</text>
<rect x="1182.7" y="509.0" width="6.0" height="4.2" rx="0" fill="#2a4668" />
<rect x="1271.7" y="509.0" width="6.0" height="4.2" rx="0" fill="#2a4668" />
<rect x="1168.5" y="528.7" width="14.0" height="4.2" rx="0" fill="#2a4668" />
<rect x="1254.2" y="528.7" width="18.0" height="4.2" rx="0" fill="#2a4668" />
<rect x="1207.7" y="538.7" width="18.0" height="4.2" rx="0" fill="#2a4668" />
<rect x="1298.2" y="538.7" width="20.0" height="4.2" rx="0" fill="#2a4668" />
<rect x="1226.3" y="560.9" width="6.0" height="4.2" rx="0" fill="#2a4668" />
<rect x="1318.5" y="560.9" width="6.0" height="4.2" rx="0" fill="#2a4668" />
<rect x="1182.7" y="580.9" width="6.0" height="4.2" rx="0" fill="#2a4668" />
<rect x="1271.7" y="580.9" width="6.0" height="4.2" rx="0" fill="#2a4668" />
<rect x="1168.5" y="601.0" width="14.0" height="4.2" rx="0" fill="#2a4668" />
<rect x="1254.2" y="601.0" width="18.0" height="4.2" rx="0" fill="#2a4668" />
<rect x="1207.7" y="610.6" width="18.0" height="4.2" rx="0" fill="#2a4668" />
<rect x="1298.2" y="610.6" width="20.0" height="4.2" rx="0" fill="#2a4668" />
<rect x="1526.2" y="455.5" width="182.0" height="180.8" rx="9" fill="#050505" />
<rect x="1527.8" y="457.1" width="178.8" height="177.6" rx="7.5" fill="#3b8ee8" />
<rect x="1527.8" y="457.1" width="178.8" height="39.9" rx="7.5" fill="#cce4fb" />
<rect x="1527.8" y="489.0" width="178.8" height="4.0" rx="0" fill="#cce4fb" />
<rect x="1529.8" y="493.0" width="174.8" height="139.7" rx="6" fill="#050505" />
<rect x="1529.8" y="493.0" width="174.8" height="10.0" rx="0" fill="#050505" />
<rect x="1531.8" y="495.2" width="170.8" height="135.5" rx="4.5" fill="#172231" />
<rect x="1531.8" y="495.2" width="170.8" height="10.0" rx="0" fill="#172231" />
<path d="M1609.22 456.5 A8 9 0 0 1 1617.22 465.5 A8 9 0 0 1 1625.22 456.5 Z" fill="#050505" />
<path d="M1609.22 636.3 A8 7 0 0 0 1617.22 629.3 A8 7 0 0 0 1625.22 636.3 Z" fill="#050505" />
<path d="M1609.22 633.6999999999999 A6 4.5 0 0 0 1615.22 629.3 H1619.22 A6 4.5 0 0 0 1625.22 633.6999999999999" fill="none" stroke="#3b8ee8" stroke-width="2" />
<text x="1537.2" y="482.4" font-size="23.3" fill="#0e3563" stroke="#0e3563" stroke-width="0.5">Classic Electric</text>
<rect x="1546.2" y="509.0" width="6.0" height="4.2" rx="0" fill="#2a4668" />
<rect x="1635.2" y="509.0" width="6.0" height="4.2" rx="0" fill="#2a4668" />
<rect x="1532.0" y="528.7" width="14.0" height="4.2" rx="0" fill="#2a4668" />
<rect x="1617.7" y="528.7" width="18.0" height="4.2" rx="0" fill="#2a4668" />
<rect x="1571.2" y="538.7" width="18.0" height="4.2" rx="0" fill="#2a4668" />
<rect x="1661.7" y="538.7" width="20.0" height="4.2" rx="0" fill="#2a4668" />
<rect x="1589.8" y="560.9" width="6.0" height="4.2" rx="0" fill="#2a4668" />
<rect x="1682.0" y="560.9" width="6.0" height="4.2" rx="0" fill="#2a4668" />
<rect x="1546.2" y="580.9" width="6.0" height="4.2" rx="0" fill="#2a4668" />
<rect x="1635.2" y="580.9" width="6.0" height="4.2" rx="0" fill="#2a4668" />
<rect x="1532.0" y="601.0" width="14.0" height="4.2" rx="0" fill="#2a4668" />
<rect x="1617.7" y="601.0" width="18.0" height="4.2" rx="0" fill="#2a4668" />
<rect x="1571.2" y="610.6" width="18.0" height="4.2" rx="0" fill="#2a4668" />
<rect x="1661.7" y="610.6" width="20.0" height="4.2" rx="0" fill="#2a4668" />
<rect x="1708.0" y="455.5" width="182.0" height="180.8" rx="9" fill="#050505" />
<rect x="1709.6" y="457.1" width="178.8" height="177.6" rx="7.5" fill="#3b8ee8" />
<rect x="1709.6" y="457.1" width="178.8" height="39.9" rx="7.5" fill="#cce4fb" />
<rect x="1709.6" y="489.0" width="178.8" height="4.0" rx="0" fill="#cce4fb" />
<rect x="1711.6" y="493.0" width="174.8" height="139.7" rx="6" fill="#050505" />
<rect x="1711.6" y="493.0" width="174.8" height="10.0" rx="0" fill="#050505" />
<rect x="1713.6" y="495.2" width="170.8" height="135.5" rx="4.5" fill="#172231" />
<rect x="1713.6" y="495.2" width="170.8" height="10.0" rx="0" fill="#172231" />
<path d="M1790.98 456.5 A8 9 0 0 1 1798.98 465.5 A8 9 0 0 1 1806.98 456.5 Z" fill="#050505" />
<path d="M1790.98 636.3 A8 7 0 0 0 1798.98 629.3 A8 7 0 0 0 1806.98 636.3 Z" fill="#050505" />
<path d="M1790.98 633.6999999999999 A6 4.5 0 0 0 1796.98 629.3 H1800.98 A6 4.5 0 0 0 1806.98 633.6999999999999" fill="none" stroke="#3b8ee8" stroke-width="2" />
<text x="1719.0" y="482.4" font-size="23.3" fill="#0e3563" stroke="#0e3563" stroke-width="0.5">Classic Electric</text>
<rect x="1728.0" y="509.0" width="6.0" height="4.2" rx="0" fill="#2a4668" />
<rect x="1817.0" y="509.0" width="6.0" height="4.2" rx="0" fill="#2a4668" />
<rect x="1713.8" y="528.7" width="14.0" height="4.2" rx="0" fill="#2a4668" />
<rect x="1799.5" y="528.7" width="18.0" height="4.2" rx="0" fill="#2a4668" />
<rect x="1753.0" y="538.7" width="18.0" height="4.2" rx="0" fill="#2a4668" />
<rect x="1843.5" y="538.7" width="20.0" height="4.2" rx="0" fill="#2a4668" />
<rect x="1771.6" y="560.9" width="6.0" height="4.2" rx="0" fill="#2a4668" />
<rect x="1863.8" y="560.9" width="6.0" height="4.2" rx="0" fill="#2a4668" />
<rect x="1728.0" y="580.9" width="6.0" height="4.2" rx="0" fill="#2a4668" />
<rect x="1817.0" y="580.9" width="6.0" height="4.2" rx="0" fill="#2a4668" />
<rect x="1713.8" y="601.0" width="14.0" height="4.2" rx="0" fill="#2a4668" />
<rect x="1799.5" y="601.0" width="18.0" height="4.2" rx="0" fill="#2a4668" />
<rect x="1753.0" y="610.6" width="18.0" height="4.2" rx="0" fill="#2a4668" />
<rect x="1843.5" y="610.6" width="20.0" height="4.2" rx="0" fill="#2a4668" />
<rect x="1889.8" y="455.5" width="182.0" height="180.8" rx="9" fill="#050505" />
<rect x="1891.4" y="457.1" width="178.8" height="177.6" rx="7.5" fill="#3b8ee8" />
<rect x="1891.4" y="457.1" width="178.8" height="39.9" rx="7.5" fill="#cce4fb" />
<rect x="1891.4" y="489.0" width="178.8" height="4.0" rx="0" fill="#cce4fb" />
<rect x="1893.4" y="493.0" width="174.8" height="139.7" rx="6" fill="#050505" />
<rect x="1893.4" y="493.0" width="174.8" height="10.0" rx="0" fill="#050505" />
<rect x="1895.4" y="495.2" width="170.8" height="135.5" rx="4.5" fill="#172231" />
<rect x="1895.4" y="495.2" width="170.8" height="10.0" rx="0" fill="#172231" />
<path d="M1972.7399999999998 456.5 A8 9 0 0 1 1980.7399999999998 465.5 A8 9 0 0 1 1988.7399999999998 456.5 Z" fill="#050505" />
<path d="M1972.7399999999998 636.3 A8 7 0 0 0 1980.7399999999998 629.3 A8 7 0 0 0 1988.7399999999998 636.3 Z" fill="#050505" />
<path d="M1972.7399999999998 633.6999999999999 A6 4.5 0 0 0 1978.7399999999998 629.3 H1982.7399999999998 A6 4.5 0 0 0 1988.7399999999998 633.6999999999999" fill="none" stroke="#3b8ee8" stroke-width="2" />
<text x="1900.8" y="482.4" font-size="23.3" fill="#0e3563" stroke="#0e3563" stroke-width="0.5">Classic Electric</text>
<rect x="1909.8" y="509.0" width="6.0" height="4.2" rx="0" fill="#2a4668" />
<rect x="1998.8" y="509.0" width="6.0" height="4.2" rx="0" fill="#2a4668" />
<rect x="1895.6" y="528.7" width="14.0" height="4.2" rx="0" fill="#2a4668" />
<rect x="1981.3" y="528.7" width="18.0" height="4.2" rx="0" fill="#2a4668" />
<rect x="1934.8" y="538.7" width="18.0" height="4.2" rx="0" fill="#2a4668" />
<rect x="2025.3" y="538.7" width="20.0" height="4.2" rx="0" fill="#2a4668" />
<rect x="1953.4" y="560.9" width="6.0" height="4.2" rx="0" fill="#2a4668" />
<rect x="2045.6" y="560.9" width="6.0" height="4.2" rx="0" fill="#2a4668" />
<rect x="1909.8" y="580.9" width="6.0" height="4.2" rx="0" fill="#2a4668" />
<rect x="1998.8" y="580.9" width="6.0" height="4.2" rx="0" fill="#2a4668" />
<rect x="1895.6" y="601.0" width="14.0" height="4.2" rx="0" fill="#2a4668" />
<rect x="1981.3" y="601.0" width="18.0" height="4.2" rx="0" fill="#2a4668" />
<rect x="1934.8" y="610.6" width="18.0" height="4.2" rx="0" fill="#2a4668" />
<rect x="2025.3" y="610.6" width="20.0" height="4.2" rx="0" fill="#2a4668" />
<rect x="2253.3" y="455.5" width="182.0" height="180.8" rx="9" fill="#050505" />
<rect x="2254.9" y="457.1" width="178.8" height="177.6" rx="7.5" fill="#3b8ee8" />
<rect x="2254.9" y="457.1" width="178.8" height="39.9" rx="7.5" fill="#cce4fb" />
<rect x="2254.9" y="489.0" width="178.8" height="4.0" rx="0" fill="#cce4fb" />
<rect x="2256.9" y="493.0" width="174.8" height="139.7" rx="6" fill="#050505" />
<rect x="2256.9" y="493.0" width="174.8" height="10.0" rx="0" fill="#050505" />
<rect x="2258.9" y="495.2" width="170.8" height="135.5" rx="4.5" fill="#172231" />
<rect x="2258.9" y="495.2" width="170.8" height="10.0" rx="0" fill="#172231" />
<path d="M2336.2599999999998 456.5 A8 9 0 0 1 2344.2599999999998 465.5 A8 9 0 0 1 2352.2599999999998 456.5 Z" fill="#050505" />
<path d="M2336.2599999999998 636.3 A8 7 0 0 0 2344.2599999999998 629.3 A8 7 0 0 0 2352.2599999999998 636.3 Z" fill="#050505" />
<path d="M2336.2599999999998 633.6999999999999 A6 4.5 0 0 0 2342.2599999999998 629.3 H2346.2599999999998 A6 4.5 0 0 0 2352.2599999999998 633.6999999999999" fill="none" stroke="#3b8ee8" stroke-width="2" />
<text x="2264.3" y="482.4" font-size="23.3" fill="#0e3563" stroke="#0e3563" stroke-width="0.5">Classic Electric</text>
<rect x="2273.3" y="509.0" width="6.0" height="4.2" rx="0" fill="#2a4668" />
<rect x="2362.3" y="509.0" width="6.0" height="4.2" rx="0" fill="#2a4668" />
<rect x="2259.1" y="528.7" width="14.0" height="4.2" rx="0" fill="#2a4668" />
<rect x="2344.8" y="528.7" width="18.0" height="4.2" rx="0" fill="#2a4668" />
<rect x="2298.3" y="538.7" width="18.0" height="4.2" rx="0" fill="#2a4668" />
<rect x="2388.8" y="538.7" width="20.0" height="4.2" rx="0" fill="#2a4668" />
<rect x="2316.9" y="560.9" width="6.0" height="4.2" rx="0" fill="#2a4668" />
<rect x="2409.1" y="560.9" width="6.0" height="4.2" rx="0" fill="#2a4668" />
<rect x="2273.3" y="580.9" width="6.0" height="4.2" rx="0" fill="#2a4668" />
<rect x="2362.3" y="580.9" width="6.0" height="4.2" rx="0" fill="#2a4668" />
<rect x="2259.1" y="601.0" width="14.0" height="4.2" rx="0" fill="#2a4668" />
<rect x="2344.8" y="601.0" width="18.0" height="4.2" rx="0" fill="#2a4668" />
<rect x="2298.3" y="610.6" width="18.0" height="4.2" rx="0" fill="#2a4668" />
<rect x="2388.8" y="610.6" width="20.0" height="4.2" rx="0" fill="#2a4668" />
<rect x="2435.0" y="455.5" width="182.0" height="180.8" rx="9" fill="#050505" />
<rect x="2436.6" y="457.1" width="178.8" height="177.6" rx="7.5" fill="#3b8ee8" />
<rect x="2436.6" y="457.1" width="178.8" height="39.9" rx="7.5" fill="#cce4fb" />
<rect x="2436.6" y="489.0" width="178.8" height="4.0" rx="0" fill="#cce4fb" />
<rect x="2438.6" y="493.0" width="174.8" height="139.7" rx="6" fill="#050505" />
<rect x="2438.6" y="493.0" width="174.8" height="10.0" rx="0" fill="#050505" />
<rect x="2440.6" y="495.2" width="170.8" height="135.5" rx="4.5" fill="#172231" />
<rect x="2440.6" y="495.2" width="170.8" height="10.0" rx="0" fill="#172231" />
<path d="M2518.02 456.5 A8 9 0 0 1 2526.02 465.5 A8 9 0 0 1 2534.02 456.5 Z" fill="#050505" />
<path d="M2518.02 636.3 A8 7 0 0 0 2526.02 629.3 A8 7 0 0 0 2534.02 636.3 Z" fill="#050505" />
<path d="M2518.02 633.6999999999999 A6 4.5 0 0 0 2524.02 629.3 H2528.02 A6 4.5 0 0 0 2534.02 633.6999999999999" fill="none" stroke="#3b8ee8" stroke-width="2" />
<text x="2446.0" y="482.4" font-size="23.3" fill="#0e3563" stroke="#0e3563" stroke-width="0.5">Classic Electric</text>
<rect x="2455.0" y="509.0" width="6.0" height="4.2" rx="0" fill="#2a4668" />
<rect x="2544.0" y="509.0" width="6.0" height="4.2" rx="0" fill="#2a4668" />
<rect x="2440.8" y="528.7" width="14.0" height="4.2" rx="0" fill="#2a4668" />
<rect x="2526.5" y="528.7" width="18.0" height="4.2" rx="0" fill="#2a4668" />
<rect x="2480.0" y="538.7" width="18.0" height="4.2" rx="0" fill="#2a4668" />
<rect x="2570.5" y="538.7" width="20.0" height="4.2" rx="0" fill="#2a4668" />
<rect x="2498.6" y="560.9" width="6.0" height="4.2" rx="0" fill="#2a4668" />
<rect x="2590.8" y="560.9" width="6.0" height="4.2" rx="0" fill="#2a4668" />
<rect x="2455.0" y="580.9" width="6.0" height="4.2" rx="0" fill="#2a4668" />
<rect x="2544.0" y="580.9" width="6.0" height="4.2" rx="0" fill="#2a4668" />
<rect x="2440.8" y="601.0" width="14.0" height="4.2" rx="0" fill="#2a4668" />
<rect x="2526.5" y="601.0" width="18.0" height="4.2" rx="0" fill="#2a4668" />
<rect x="2480.0" y="610.6" width="18.0" height="4.2" rx="0" fill="#2a4668" />
<rect x="2570.5" y="610.6" width="20.0" height="4.2" rx="0" fill="#2a4668" />
<rect x="2616.8" y="455.5" width="180.8" height="180.8" rx="9" fill="#050505" />
<rect x="2618.4" y="457.1" width="177.6" height="177.6" rx="7.5" fill="#3b8ee8" />
<rect x="2618.4" y="457.1" width="177.6" height="39.9" rx="7.5" fill="#cce4fb" />
<rect x="2618.4" y="489.0" width="177.6" height="4.0" rx="0" fill="#cce4fb" />
<rect x="2620.4" y="493.0" width="173.6" height="139.7" rx="6" fill="#050505" />
<rect x="2620.4" y="493.0" width="173.6" height="10.0" rx="0" fill="#050505" />
<rect x="2622.4" y="495.2" width="169.6" height="135.5" rx="4.5" fill="#172231" />
<rect x="2622.4" y="495.2" width="169.6" height="10.0" rx="0" fill="#172231" />
<path d="M2699.1800000000003 456.5 A8 9 0 0 1 2707.1800000000003 465.5 A8 9 0 0 1 2715.1800000000003 456.5 Z" fill="#050505" />
<path d="M2699.1800000000003 636.3 A8 7 0 0 0 2707.1800000000003 629.3 A8 7 0 0 0 2715.1800000000003 636.3 Z" fill="#050505" />
<path d="M2699.1800000000003 633.6999999999999 A6 4.5 0 0 0 2705.1800000000003 629.3 H2709.1800000000003 A6 4.5 0 0 0 2715.1800000000003 633.6999999999999" fill="none" stroke="#3b8ee8" stroke-width="2" />
<text x="2627.8" y="482.4" font-size="23.3" fill="#0e3563" stroke="#0e3563" stroke-width="0.5">Classic Electric</text>
<rect x="2636.8" y="509.0" width="6.0" height="4.2" rx="0" fill="#2a4668" />
<rect x="2725.8" y="509.0" width="6.0" height="4.2" rx="0" fill="#2a4668" />
<rect x="2622.6" y="528.7" width="14.0" height="4.2" rx="0" fill="#2a4668" />
<rect x="2708.3" y="528.7" width="18.0" height="4.2" rx="0" fill="#2a4668" />
<rect x="2661.8" y="538.7" width="18.0" height="4.2" rx="0" fill="#2a4668" />
<rect x="2752.3" y="538.7" width="20.0" height="4.2" rx="0" fill="#2a4668" />
<rect x="2680.4" y="560.9" width="6.0" height="4.2" rx="0" fill="#2a4668" />
<rect x="2772.6" y="560.9" width="6.0" height="4.2" rx="0" fill="#2a4668" />
<rect x="2636.8" y="580.9" width="6.0" height="4.2" rx="0" fill="#2a4668" />
<rect x="2725.8" y="580.9" width="6.0" height="4.2" rx="0" fill="#2a4668" />
<rect x="2622.6" y="601.0" width="14.0" height="4.2" rx="0" fill="#2a4668" />
<rect x="2708.3" y="601.0" width="18.0" height="4.2" rx="0" fill="#2a4668" />
<rect x="2661.8" y="610.6" width="18.0" height="4.2" rx="0" fill="#2a4668" />
<rect x="2752.3" y="610.6" width="20.0" height="4.2" rx="0" fill="#2a4668" />
<rect x="1162.7" y="639.4" width="182.0" height="180.8" rx="9" fill="#050505" />
<rect x="1164.3" y="641.0" width="178.8" height="177.6" rx="7.5" fill="#3b8ee8" />
<rect x="1164.3" y="641.0" width="178.8" height="39.9" rx="7.5" fill="#3a84d6" />
<rect x="1164.3" y="672.9" width="178.8" height="4.0" rx="0" fill="#3a84d6" />
<rect x="1166.3" y="676.9" width="174.8" height="139.7" rx="6" fill="#050505" />
<rect x="1166.3" y="676.9" width="174.8" height="10.0" rx="0" fill="#050505" />
<rect x="1168.3" y="679.1" width="170.8" height="135.5" rx="4.5" fill="#172231" />
<rect x="1168.3" y="679.1" width="170.8" height="10.0" rx="0" fill="#172231" />
<path d="M1245.7 640.4 A8 9 0 0 1 1253.7 649.4 A8 9 0 0 1 1261.7 640.4 Z" fill="#050505" />
<path d="M1245.7 820.2 A8 7 0 0 0 1253.7 813.2 A8 7 0 0 0 1261.7 820.2 Z" fill="#050505" />
<path d="M1245.7 817.6 A6 4.5 0 0 0 1251.7 813.2 H1255.7 A6 4.5 0 0 0 1261.7 817.6" fill="none" stroke="#3b8ee8" stroke-width="2" />
<text x="1173.7" y="666.3" font-size="23.3" fill="#ffffff" stroke="#ffffff" stroke-width="0.5">Classic Electric</text>
<rect x="1186.3" y="692.7" width="14.0" height="4.2" rx="0" fill="#2a4668" />
<rect x="1276.2" y="692.7" width="14.0" height="4.2" rx="0" fill="#2a4668" />
<rect x="1200.2" y="712.9" width="4.0" height="4.2" rx="0" fill="#2a4668" />
<rect x="1290.3" y="712.9" width="5.0" height="4.2" rx="0" fill="#2a4668" />
<rect x="1186.3" y="722.8" width="15.0" height="4.2" rx="0" fill="#2a4668" />
<rect x="1232.4" y="722.8" width="4.5" height="4.2" rx="0" fill="#2a4668" />
<rect x="1276.2" y="722.8" width="15.0" height="4.2" rx="0" fill="#2a4668" />
<rect x="1321.7" y="722.8" width="5.0" height="4.2" rx="0" fill="#2a4668" />
<rect x="1232.4" y="744.9" width="22.0" height="4.2" rx="0" fill="#2a4668" />
<rect x="1322.7" y="744.9" width="10.0" height="4.2" rx="0" fill="#2a4668" />
<rect x="1242.7" y="764.9" width="11.0" height="4.2" rx="0" fill="#2a4668" />
<rect x="1708.0" y="639.4" width="182.0" height="180.8" rx="9" fill="#050505" />
<rect x="1709.6" y="641.0" width="178.8" height="177.6" rx="7.5" fill="#3b8ee8" />
<rect x="1709.6" y="641.0" width="178.8" height="39.9" rx="7.5" fill="#3a84d6" />
<rect x="1709.6" y="672.9" width="178.8" height="4.0" rx="0" fill="#3a84d6" />
<rect x="1711.6" y="676.9" width="174.8" height="139.7" rx="6" fill="#050505" />
<rect x="1711.6" y="676.9" width="174.8" height="10.0" rx="0" fill="#050505" />
<rect x="1713.6" y="679.1" width="170.8" height="135.5" rx="4.5" fill="#172231" />
<rect x="1713.6" y="679.1" width="170.8" height="10.0" rx="0" fill="#172231" />
<path d="M1790.98 640.4 A8 9 0 0 1 1798.98 649.4 A8 9 0 0 1 1806.98 640.4 Z" fill="#050505" />
<path d="M1790.98 820.2 A8 7 0 0 0 1798.98 813.2 A8 7 0 0 0 1806.98 820.2 Z" fill="#050505" />
<path d="M1790.98 817.6 A6 4.5 0 0 0 1796.98 813.2 H1800.98 A6 4.5 0 0 0 1806.98 817.6" fill="none" stroke="#3b8ee8" stroke-width="2" />
<text x="1719.0" y="666.3" font-size="23.3" fill="#ffffff" stroke="#ffffff" stroke-width="0.5">Classic Electric</text>
<rect x="1731.6" y="692.7" width="14.0" height="4.2" rx="0" fill="#2a4668" />
<rect x="1821.5" y="692.7" width="14.0" height="4.2" rx="0" fill="#2a4668" />
<rect x="1745.5" y="712.9" width="4.0" height="4.2" rx="0" fill="#2a4668" />
<rect x="1835.6" y="712.9" width="5.0" height="4.2" rx="0" fill="#2a4668" />
<rect x="1731.6" y="722.8" width="15.0" height="4.2" rx="0" fill="#2a4668" />
<rect x="1777.7" y="722.8" width="4.5" height="4.2" rx="0" fill="#2a4668" />
<rect x="1821.5" y="722.8" width="15.0" height="4.2" rx="0" fill="#2a4668" />
<rect x="1867.0" y="722.8" width="5.0" height="4.2" rx="0" fill="#2a4668" />
<rect x="1777.7" y="744.9" width="22.0" height="4.2" rx="0" fill="#2a4668" />
<rect x="1868.0" y="744.9" width="10.0" height="4.2" rx="0" fill="#2a4668" />
<rect x="1788.0" y="764.9" width="11.0" height="4.2" rx="0" fill="#2a4668" />
<rect x="1889.8" y="639.4" width="182.0" height="180.8" rx="9" fill="#050505" />
<rect x="1891.4" y="641.0" width="178.8" height="177.6" rx="7.5" fill="#3b8ee8" />
<rect x="1891.4" y="641.0" width="178.8" height="39.9" rx="7.5" fill="#3a84d6" />
<rect x="1891.4" y="672.9" width="178.8" height="4.0" rx="0" fill="#3a84d6" />
<rect x="1893.4" y="676.9" width="174.8" height="139.7" rx="6" fill="#050505" />
<rect x="1893.4" y="676.9" width="174.8" height="10.0" rx="0" fill="#050505" />
<rect x="1895.4" y="679.1" width="170.8" height="135.5" rx="4.5" fill="#172231" />
<rect x="1895.4" y="679.1" width="170.8" height="10.0" rx="0" fill="#172231" />
<path d="M1972.7399999999998 640.4 A8 9 0 0 1 1980.7399999999998 649.4 A8 9 0 0 1 1988.7399999999998 640.4 Z" fill="#050505" />
<path d="M1972.7399999999998 820.2 A8 7 0 0 0 1980.7399999999998 813.2 A8 7 0 0 0 1988.7399999999998 820.2 Z" fill="#050505" />
<path d="M1972.7399999999998 817.6 A6 4.5 0 0 0 1978.7399999999998 813.2 H1982.7399999999998 A6 4.5 0 0 0 1988.7399999999998 817.6" fill="none" stroke="#3b8ee8" stroke-width="2" />
<text x="1900.8" y="666.3" font-size="23.3" fill="#ffffff" stroke="#ffffff" stroke-width="0.5">Classic Electric</text>
<rect x="1913.4" y="692.7" width="14.0" height="4.2" rx="0" fill="#2a4668" />
<rect x="2003.3" y="692.7" width="14.0" height="4.2" rx="0" fill="#2a4668" />
<rect x="1927.3" y="712.9" width="4.0" height="4.2" rx="0" fill="#2a4668" />
<rect x="2017.4" y="712.9" width="5.0" height="4.2" rx="0" fill="#2a4668" />
<rect x="1913.4" y="722.8" width="15.0" height="4.2" rx="0" fill="#2a4668" />
<rect x="1959.5" y="722.8" width="4.5" height="4.2" rx="0" fill="#2a4668" />
<rect x="2003.3" y="722.8" width="15.0" height="4.2" rx="0" fill="#2a4668" />
<rect x="2048.8" y="722.8" width="5.0" height="4.2" rx="0" fill="#2a4668" />
<rect x="1959.5" y="744.9" width="22.0" height="4.2" rx="0" fill="#2a4668" />
<rect x="2049.8" y="744.9" width="10.0" height="4.2" rx="0" fill="#2a4668" />
<rect x="1969.8" y="764.9" width="11.0" height="4.2" rx="0" fill="#2a4668" />
<rect x="2435.0" y="639.4" width="182.0" height="180.8" rx="9" fill="#050505" />
<rect x="2436.6" y="641.0" width="178.8" height="177.6" rx="7.5" fill="#3b8ee8" />
<rect x="2436.6" y="641.0" width="178.8" height="39.9" rx="7.5" fill="#3a84d6" />
<rect x="2436.6" y="672.9" width="178.8" height="4.0" rx="0" fill="#3a84d6" />
<rect x="2438.6" y="676.9" width="174.8" height="139.7" rx="6" fill="#050505" />
<rect x="2438.6" y="676.9" width="174.8" height="10.0" rx="0" fill="#050505" />
<rect x="2440.6" y="679.1" width="170.8" height="135.5" rx="4.5" fill="#172231" />
<rect x="2440.6" y="679.1" width="170.8" height="10.0" rx="0" fill="#172231" />
<path d="M2518.02 640.4 A8 9 0 0 1 2526.02 649.4 A8 9 0 0 1 2534.02 640.4 Z" fill="#050505" />
<path d="M2518.02 820.2 A8 7 0 0 0 2526.02 813.2 A8 7 0 0 0 2534.02 820.2 Z" fill="#050505" />
<path d="M2518.02 817.6 A6 4.5 0 0 0 2524.02 813.2 H2528.02 A6 4.5 0 0 0 2534.02 817.6" fill="none" stroke="#3b8ee8" stroke-width="2" />
<text x="2446.0" y="666.3" font-size="23.3" fill="#ffffff" stroke="#ffffff" stroke-width="0.5">Classic Electric</text>
<rect x="2458.6" y="692.7" width="14.0" height="4.2" rx="0" fill="#2a4668" />
<rect x="2548.5" y="692.7" width="14.0" height="4.2" rx="0" fill="#2a4668" />
<rect x="2472.5" y="712.9" width="4.0" height="4.2" rx="0" fill="#2a4668" />
<rect x="2562.6" y="712.9" width="5.0" height="4.2" rx="0" fill="#2a4668" />
<rect x="2458.6" y="722.8" width="15.0" height="4.2" rx="0" fill="#2a4668" />
<rect x="2504.7" y="722.8" width="4.5" height="4.2" rx="0" fill="#2a4668" />
<rect x="2548.5" y="722.8" width="15.0" height="4.2" rx="0" fill="#2a4668" />
<rect x="2594.0" y="722.8" width="5.0" height="4.2" rx="0" fill="#2a4668" />
<rect x="2504.7" y="744.9" width="22.0" height="4.2" rx="0" fill="#2a4668" />
<rect x="2595.0" y="744.9" width="10.0" height="4.2" rx="0" fill="#2a4668" />
<rect x="2515.0" y="764.9" width="11.0" height="4.2" rx="0" fill="#2a4668" />
<rect x="2616.8" y="639.4" width="180.8" height="180.8" rx="9" fill="#050505" />
<rect x="2618.4" y="641.0" width="177.6" height="177.6" rx="7.5" fill="#3b8ee8" />
<rect x="2618.4" y="641.0" width="177.6" height="39.9" rx="7.5" fill="#3a84d6" />
<rect x="2618.4" y="672.9" width="177.6" height="4.0" rx="0" fill="#3a84d6" />
<rect x="2620.4" y="676.9" width="173.6" height="139.7" rx="6" fill="#050505" />
<rect x="2620.4" y="676.9" width="173.6" height="10.0" rx="0" fill="#050505" />
<rect x="2622.4" y="679.1" width="169.6" height="135.5" rx="4.5" fill="#172231" />
<rect x="2622.4" y="679.1" width="169.6" height="10.0" rx="0" fill="#172231" />
<path d="M2699.1800000000003 640.4 A8 9 0 0 1 2707.1800000000003 649.4 A8 9 0 0 1 2715.1800000000003 640.4 Z" fill="#050505" />
<path d="M2699.1800000000003 820.2 A8 7 0 0 0 2707.1800000000003 813.2 A8 7 0 0 0 2715.1800000000003 820.2 Z" fill="#050505" />
<path d="M2699.1800000000003 817.6 A6 4.5 0 0 0 2705.1800000000003 813.2 H2709.1800000000003 A6 4.5 0 0 0 2715.1800000000003 817.6" fill="none" stroke="#3b8ee8" stroke-width="2" />
<text x="2627.8" y="666.3" font-size="23.3" fill="#ffffff" stroke="#ffffff" stroke-width="0.5">Classic Electric</text>
<rect x="2640.4" y="692.7" width="14.0" height="4.2" rx="0" fill="#2a4668" />
<rect x="2730.3" y="692.7" width="14.0" height="4.2" rx="0" fill="#2a4668" />
<rect x="2654.3" y="712.9" width="4.0" height="4.2" rx="0" fill="#2a4668" />
<rect x="2744.4" y="712.9" width="5.0" height="4.2" rx="0" fill="#2a4668" />
<rect x="2640.4" y="722.8" width="15.0" height="4.2" rx="0" fill="#2a4668" />
<rect x="2686.5" y="722.8" width="4.5" height="4.2" rx="0" fill="#2a4668" />
<rect x="2730.3" y="722.8" width="15.0" height="4.2" rx="0" fill="#2a4668" />
<rect x="2775.8" y="722.8" width="5.0" height="4.2" rx="0" fill="#2a4668" />
<rect x="2686.5" y="744.9" width="22.0" height="4.2" rx="0" fill="#2a4668" />
<rect x="2776.8" y="744.9" width="10.0" height="4.2" rx="0" fill="#2a4668" />
<rect x="2696.8" y="764.9" width="11.0" height="4.2" rx="0" fill="#2a4668" />
<rect x="1162.7" y="823.3" width="182.0" height="180.8" rx="9" fill="#050505" />
<rect x="1164.3" y="824.9" width="178.8" height="177.6" rx="7.5" fill="#b01ed2" />
<rect x="1164.3" y="824.9" width="178.8" height="39.9" rx="7.5" fill="#a814cc" />
<rect x="1164.3" y="856.8" width="178.8" height="4.0" rx="0" fill="#a814cc" />
<rect x="1166.3" y="860.8" width="174.8" height="139.7" rx="6" fill="#050505" />
<rect x="1166.3" y="860.8" width="174.8" height="10.0" rx="0" fill="#050505" />
<rect x="1168.3" y="863.0" width="170.8" height="135.5" rx="4.5" fill="#2b1c3a" />
<rect x="1168.3" y="863.0" width="170.8" height="10.0" rx="0" fill="#2b1c3a" />
<path d="M1245.7 824.3 A8 9 0 0 1 1253.7 833.3 A8 9 0 0 1 1261.7 824.3 Z" fill="#050505" />
<path d="M1245.7 1004.0999999999999 A8 7 0 0 0 1253.7 997.0999999999999 A8 7 0 0 0 1261.7 1004.0999999999999 Z" fill="#050505" />
<path d="M1245.7 1001.4999999999999 A6 4.5 0 0 0 1251.7 997.0999999999999 H1255.7 A6 4.5 0 0 0 1261.7 1001.4999999999999" fill="none" stroke="#b01ed2" stroke-width="2" />
<text x="1173.7" y="850.2" font-size="23.3" fill="#ffffff" stroke="#ffffff" stroke-width="0.5">Wurlitzer</text>
<rect x="1168.7" y="900.8" width="9.0" height="4.2" rx="0" fill="#4f2a6a" />
<rect x="1254.4" y="900.8" width="14.0" height="4.2" rx="0" fill="#4f2a6a" />
<rect x="1184.3" y="914.8" width="14.0" height="4.2" rx="0" fill="#4f2a6a" />
<rect x="1208.4" y="914.8" width="12.0" height="4.2" rx="0" fill="#4f2a6a" />
<rect x="1274.3" y="914.8" width="14.0" height="4.2" rx="0" fill="#4f2a6a" />
<rect x="1300.3" y="914.8" width="10.0" height="4.2" rx="0" fill="#4f2a6a" />
<rect x="1168.7" y="928.8" width="9.0" height="4.2" rx="0" fill="#4f2a6a" />
<rect x="1228.3" y="928.8" width="12.0" height="4.2" rx="0" fill="#4f2a6a" />
<rect x="1254.4" y="928.8" width="14.0" height="4.2" rx="0" fill="#4f2a6a" />
<rect x="1184.3" y="934.8" width="14.0" height="4.2" rx="0" fill="#4f2a6a" />
<rect x="1208.4" y="934.8" width="12.0" height="4.2" rx="0" fill="#4f2a6a" />
<rect x="1242.0" y="934.8" width="10.0" height="4.2" rx="0" fill="#4f2a6a" />
<rect x="1274.3" y="934.8" width="14.0" height="4.2" rx="0" fill="#4f2a6a" />
<rect x="1300.3" y="934.8" width="10.0" height="4.2" rx="0" fill="#4f2a6a" />
<rect x="1168.7" y="948.8" width="9.0" height="4.2" rx="0" fill="#4f2a6a" />
<rect x="1181.7" y="948.8" width="16.0" height="4.2" rx="0" fill="#4f2a6a" />
<rect x="1228.3" y="948.8" width="12.0" height="4.2" rx="0" fill="#4f2a6a" />
<rect x="1254.4" y="948.8" width="14.0" height="4.2" rx="0" fill="#4f2a6a" />
<rect x="1274.3" y="948.8" width="14.0" height="4.2" rx="0" fill="#4f2a6a" />
<rect x="1181.7" y="962.8" width="14.0" height="4.2" rx="0" fill="#4f2a6a" />
<rect x="1208.4" y="962.8" width="12.0" height="4.2" rx="0" fill="#4f2a6a" />
<rect x="1242.0" y="962.8" width="10.0" height="4.2" rx="0" fill="#4f2a6a" />
<rect x="1274.3" y="962.8" width="14.0" height="4.2" rx="0" fill="#4f2a6a" />
<rect x="1300.3" y="962.8" width="10.0" height="4.2" rx="0" fill="#4f2a6a" />
<rect x="1168.7" y="976.8" width="9.0" height="4.2" rx="0" fill="#4f2a6a" />
<rect x="1254.4" y="976.8" width="14.0" height="4.2" rx="0" fill="#4f2a6a" />
<rect x="1208.4" y="982.8" width="12.0" height="4.2" rx="0" fill="#4f2a6a" />
<rect x="1228.3" y="982.8" width="12.0" height="4.2" rx="0" fill="#4f2a6a" />
<rect x="1243.7" y="982.8" width="5.0" height="4.2" rx="0" fill="#4f2a6a" />
<rect x="1300.3" y="982.8" width="10.0" height="4.2" rx="0" fill="#4f2a6a" />
<rect x="1331.7" y="982.8" width="5.0" height="4.2" rx="0" fill="#4f2a6a" />
<rect x="1708.0" y="823.3" width="182.0" height="180.8" rx="9" fill="#050505" />
<rect x="1709.6" y="824.9" width="178.8" height="177.6" rx="7.5" fill="#b01ed2" />
<rect x="1709.6" y="824.9" width="178.8" height="39.9" rx="7.5" fill="#a814cc" />
<rect x="1709.6" y="856.8" width="178.8" height="4.0" rx="0" fill="#a814cc" />
<rect x="1711.6" y="860.8" width="174.8" height="139.7" rx="6" fill="#050505" />
<rect x="1711.6" y="860.8" width="174.8" height="10.0" rx="0" fill="#050505" />
<rect x="1713.6" y="863.0" width="170.8" height="135.5" rx="4.5" fill="#2b1c3a" />
<rect x="1713.6" y="863.0" width="170.8" height="10.0" rx="0" fill="#2b1c3a" />
<path d="M1790.98 824.3 A8 9 0 0 1 1798.98 833.3 A8 9 0 0 1 1806.98 824.3 Z" fill="#050505" />
<path d="M1790.98 1004.0999999999999 A8 7 0 0 0 1798.98 997.0999999999999 A8 7 0 0 0 1806.98 1004.0999999999999 Z" fill="#050505" />
<path d="M1790.98 1001.4999999999999 A6 4.5 0 0 0 1796.98 997.0999999999999 H1800.98 A6 4.5 0 0 0 1806.98 1001.4999999999999" fill="none" stroke="#b01ed2" stroke-width="2" />
<text x="1719.0" y="850.2" font-size="23.3" fill="#ffffff" stroke="#ffffff" stroke-width="0.5">Wurlitzer</text>
<rect x="1714.0" y="900.8" width="9.0" height="4.2" rx="0" fill="#4f2a6a" />
<rect x="1799.7" y="900.8" width="14.0" height="4.2" rx="0" fill="#4f2a6a" />
<rect x="1729.6" y="914.8" width="14.0" height="4.2" rx="0" fill="#4f2a6a" />
<rect x="1753.7" y="914.8" width="12.0" height="4.2" rx="0" fill="#4f2a6a" />
<rect x="1819.6" y="914.8" width="14.0" height="4.2" rx="0" fill="#4f2a6a" />
<rect x="1845.6" y="914.8" width="10.0" height="4.2" rx="0" fill="#4f2a6a" />
<rect x="1714.0" y="928.8" width="9.0" height="4.2" rx="0" fill="#4f2a6a" />
<rect x="1773.6" y="928.8" width="12.0" height="4.2" rx="0" fill="#4f2a6a" />
<rect x="1799.7" y="928.8" width="14.0" height="4.2" rx="0" fill="#4f2a6a" />
<rect x="1729.6" y="934.8" width="14.0" height="4.2" rx="0" fill="#4f2a6a" />
<rect x="1753.7" y="934.8" width="12.0" height="4.2" rx="0" fill="#4f2a6a" />
<rect x="1787.3" y="934.8" width="10.0" height="4.2" rx="0" fill="#4f2a6a" />
<rect x="1819.6" y="934.8" width="14.0" height="4.2" rx="0" fill="#4f2a6a" />
<rect x="1845.6" y="934.8" width="10.0" height="4.2" rx="0" fill="#4f2a6a" />
<rect x="1714.0" y="948.8" width="9.0" height="4.2" rx="0" fill="#4f2a6a" />
<rect x="1727.0" y="948.8" width="16.0" height="4.2" rx="0" fill="#4f2a6a" />
<rect x="1773.6" y="948.8" width="12.0" height="4.2" rx="0" fill="#4f2a6a" />
<rect x="1799.7" y="948.8" width="14.0" height="4.2" rx="0" fill="#4f2a6a" />
<rect x="1819.6" y="948.8" width="14.0" height="4.2" rx="0" fill="#4f2a6a" />
<rect x="1727.0" y="962.8" width="14.0" height="4.2" rx="0" fill="#4f2a6a" />
<rect x="1753.7" y="962.8" width="12.0" height="4.2" rx="0" fill="#4f2a6a" />
<rect x="1787.3" y="962.8" width="10.0" height="4.2" rx="0" fill="#4f2a6a" />
<rect x="1819.6" y="962.8" width="14.0" height="4.2" rx="0" fill="#4f2a6a" />
<rect x="1845.6" y="962.8" width="10.0" height="4.2" rx="0" fill="#4f2a6a" />
<rect x="1714.0" y="976.8" width="9.0" height="4.2" rx="0" fill="#4f2a6a" />
<rect x="1799.7" y="976.8" width="14.0" height="4.2" rx="0" fill="#4f2a6a" />
<rect x="1753.7" y="982.8" width="12.0" height="4.2" rx="0" fill="#4f2a6a" />
<rect x="1773.6" y="982.8" width="12.0" height="4.2" rx="0" fill="#4f2a6a" />
<rect x="1789.0" y="982.8" width="5.0" height="4.2" rx="0" fill="#4f2a6a" />
<rect x="1845.6" y="982.8" width="10.0" height="4.2" rx="0" fill="#4f2a6a" />
<rect x="1877.0" y="982.8" width="5.0" height="4.2" rx="0" fill="#4f2a6a" />
<rect x="1889.8" y="823.3" width="182.0" height="180.8" rx="9" fill="#050505" />
<rect x="1891.4" y="824.9" width="178.8" height="177.6" rx="7.5" fill="#b01ed2" />
<rect x="1891.4" y="824.9" width="178.8" height="39.9" rx="7.5" fill="#a814cc" />
<rect x="1891.4" y="856.8" width="178.8" height="4.0" rx="0" fill="#a814cc" />
<rect x="1893.4" y="860.8" width="174.8" height="139.7" rx="6" fill="#050505" />
<rect x="1893.4" y="860.8" width="174.8" height="10.0" rx="0" fill="#050505" />
<rect x="1895.4" y="863.0" width="170.8" height="135.5" rx="4.5" fill="#2b1c3a" />
<rect x="1895.4" y="863.0" width="170.8" height="10.0" rx="0" fill="#2b1c3a" />
<path d="M1972.7399999999998 824.3 A8 9 0 0 1 1980.7399999999998 833.3 A8 9 0 0 1 1988.7399999999998 824.3 Z" fill="#050505" />
<path d="M1972.7399999999998 1004.0999999999999 A8 7 0 0 0 1980.7399999999998 997.0999999999999 A8 7 0 0 0 1988.7399999999998 1004.0999999999999 Z" fill="#050505" />
<path d="M1972.7399999999998 1001.4999999999999 A6 4.5 0 0 0 1978.7399999999998 997.0999999999999 H1982.7399999999998 A6 4.5 0 0 0 1988.7399999999998 1001.4999999999999" fill="none" stroke="#b01ed2" stroke-width="2" />
<text x="1900.8" y="850.2" font-size="23.3" fill="#ffffff" stroke="#ffffff" stroke-width="0.5">Wurlitzer</text>
<rect x="1895.8" y="900.8" width="9.0" height="4.2" rx="0" fill="#4f2a6a" />
<rect x="1981.5" y="900.8" width="14.0" height="4.2" rx="0" fill="#4f2a6a" />
<rect x="1911.4" y="914.8" width="14.0" height="4.2" rx="0" fill="#4f2a6a" />
<rect x="1935.5" y="914.8" width="12.0" height="4.2" rx="0" fill="#4f2a6a" />
<rect x="2001.4" y="914.8" width="14.0" height="4.2" rx="0" fill="#4f2a6a" />
<rect x="2027.4" y="914.8" width="10.0" height="4.2" rx="0" fill="#4f2a6a" />
<rect x="1895.8" y="928.8" width="9.0" height="4.2" rx="0" fill="#4f2a6a" />
<rect x="1955.4" y="928.8" width="12.0" height="4.2" rx="0" fill="#4f2a6a" />
<rect x="1981.5" y="928.8" width="14.0" height="4.2" rx="0" fill="#4f2a6a" />
<rect x="1911.4" y="934.8" width="14.0" height="4.2" rx="0" fill="#4f2a6a" />
<rect x="1935.5" y="934.8" width="12.0" height="4.2" rx="0" fill="#4f2a6a" />
<rect x="1969.1" y="934.8" width="10.0" height="4.2" rx="0" fill="#4f2a6a" />
<rect x="2001.4" y="934.8" width="14.0" height="4.2" rx="0" fill="#4f2a6a" />
<rect x="2027.4" y="934.8" width="10.0" height="4.2" rx="0" fill="#4f2a6a" />
<rect x="1895.8" y="948.8" width="9.0" height="4.2" rx="0" fill="#4f2a6a" />
<rect x="1908.8" y="948.8" width="16.0" height="4.2" rx="0" fill="#4f2a6a" />
<rect x="1955.4" y="948.8" width="12.0" height="4.2" rx="0" fill="#4f2a6a" />
<rect x="1981.5" y="948.8" width="14.0" height="4.2" rx="0" fill="#4f2a6a" />
<rect x="2001.4" y="948.8" width="14.0" height="4.2" rx="0" fill="#4f2a6a" />
<rect x="1908.8" y="962.8" width="14.0" height="4.2" rx="0" fill="#4f2a6a" />
<rect x="1935.5" y="962.8" width="12.0" height="4.2" rx="0" fill="#4f2a6a" />
<rect x="1969.1" y="962.8" width="10.0" height="4.2" rx="0" fill="#4f2a6a" />
<rect x="2001.4" y="962.8" width="14.0" height="4.2" rx="0" fill="#4f2a6a" />
<rect x="2027.4" y="962.8" width="10.0" height="4.2" rx="0" fill="#4f2a6a" />
<rect x="1895.8" y="976.8" width="9.0" height="4.2" rx="0" fill="#4f2a6a" />
<rect x="1981.5" y="976.8" width="14.0" height="4.2" rx="0" fill="#4f2a6a" />
<rect x="1935.5" y="982.8" width="12.0" height="4.2" rx="0" fill="#4f2a6a" />
<rect x="1955.4" y="982.8" width="12.0" height="4.2" rx="0" fill="#4f2a6a" />
<rect x="1970.8" y="982.8" width="5.0" height="4.2" rx="0" fill="#4f2a6a" />
<rect x="2027.4" y="982.8" width="10.0" height="4.2" rx="0" fill="#4f2a6a" />
<rect x="2058.8" y="982.8" width="5.0" height="4.2" rx="0" fill="#4f2a6a" />
<rect x="2435.0" y="823.3" width="182.0" height="180.8" rx="9" fill="#050505" />
<rect x="2436.6" y="824.9" width="178.8" height="177.6" rx="7.5" fill="#b01ed2" />
<rect x="2436.6" y="824.9" width="178.8" height="39.9" rx="7.5" fill="#a814cc" />
<rect x="2436.6" y="856.8" width="178.8" height="4.0" rx="0" fill="#a814cc" />
<rect x="2438.6" y="860.8" width="174.8" height="139.7" rx="6" fill="#050505" />
<rect x="2438.6" y="860.8" width="174.8" height="10.0" rx="0" fill="#050505" />
<rect x="2440.6" y="863.0" width="170.8" height="135.5" rx="4.5" fill="#2b1c3a" />
<rect x="2440.6" y="863.0" width="170.8" height="10.0" rx="0" fill="#2b1c3a" />
<path d="M2518.02 824.3 A8 9 0 0 1 2526.02 833.3 A8 9 0 0 1 2534.02 824.3 Z" fill="#050505" />
<path d="M2518.02 1004.0999999999999 A8 7 0 0 0 2526.02 997.0999999999999 A8 7 0 0 0 2534.02 1004.0999999999999 Z" fill="#050505" />
<path d="M2518.02 1001.4999999999999 A6 4.5 0 0 0 2524.02 997.0999999999999 H2528.02 A6 4.5 0 0 0 2534.02 1001.4999999999999" fill="none" stroke="#b01ed2" stroke-width="2" />
<text x="2446.0" y="850.2" font-size="23.3" fill="#ffffff" stroke="#ffffff" stroke-width="0.5">Wurlitzer</text>
<rect x="2441.0" y="900.8" width="9.0" height="4.2" rx="0" fill="#4f2a6a" />
<rect x="2526.7" y="900.8" width="14.0" height="4.2" rx="0" fill="#4f2a6a" />
<rect x="2456.6" y="914.8" width="14.0" height="4.2" rx="0" fill="#4f2a6a" />
<rect x="2480.7" y="914.8" width="12.0" height="4.2" rx="0" fill="#4f2a6a" />
<rect x="2546.6" y="914.8" width="14.0" height="4.2" rx="0" fill="#4f2a6a" />
<rect x="2572.6" y="914.8" width="10.0" height="4.2" rx="0" fill="#4f2a6a" />
<rect x="2441.0" y="928.8" width="9.0" height="4.2" rx="0" fill="#4f2a6a" />
<rect x="2500.6" y="928.8" width="12.0" height="4.2" rx="0" fill="#4f2a6a" />
<rect x="2526.7" y="928.8" width="14.0" height="4.2" rx="0" fill="#4f2a6a" />
<rect x="2456.6" y="934.8" width="14.0" height="4.2" rx="0" fill="#4f2a6a" />
<rect x="2480.7" y="934.8" width="12.0" height="4.2" rx="0" fill="#4f2a6a" />
<rect x="2514.3" y="934.8" width="10.0" height="4.2" rx="0" fill="#4f2a6a" />
<rect x="2546.6" y="934.8" width="14.0" height="4.2" rx="0" fill="#4f2a6a" />
<rect x="2572.6" y="934.8" width="10.0" height="4.2" rx="0" fill="#4f2a6a" />
<rect x="2441.0" y="948.8" width="9.0" height="4.2" rx="0" fill="#4f2a6a" />
<rect x="2454.0" y="948.8" width="16.0" height="4.2" rx="0" fill="#4f2a6a" />
<rect x="2500.6" y="948.8" width="12.0" height="4.2" rx="0" fill="#4f2a6a" />
<rect x="2526.7" y="948.8" width="14.0" height="4.2" rx="0" fill="#4f2a6a" />
<rect x="2546.6" y="948.8" width="14.0" height="4.2" rx="0" fill="#4f2a6a" />
<rect x="2454.0" y="962.8" width="14.0" height="4.2" rx="0" fill="#4f2a6a" />
<rect x="2480.7" y="962.8" width="12.0" height="4.2" rx="0" fill="#4f2a6a" />
<rect x="2514.3" y="962.8" width="10.0" height="4.2" rx="0" fill="#4f2a6a" />
<rect x="2546.6" y="962.8" width="14.0" height="4.2" rx="0" fill="#4f2a6a" />
<rect x="2572.6" y="962.8" width="10.0" height="4.2" rx="0" fill="#4f2a6a" />
<rect x="2441.0" y="976.8" width="9.0" height="4.2" rx="0" fill="#4f2a6a" />
<rect x="2526.7" y="976.8" width="14.0" height="4.2" rx="0" fill="#4f2a6a" />
<rect x="2480.7" y="982.8" width="12.0" height="4.2" rx="0" fill="#4f2a6a" />
<rect x="2500.6" y="982.8" width="12.0" height="4.2" rx="0" fill="#4f2a6a" />
<rect x="2516.0" y="982.8" width="5.0" height="4.2" rx="0" fill="#4f2a6a" />
<rect x="2572.6" y="982.8" width="10.0" height="4.2" rx="0" fill="#4f2a6a" />
<rect x="2604.0" y="982.8" width="5.0" height="4.2" rx="0" fill="#4f2a6a" />
<rect x="2616.8" y="823.3" width="180.8" height="180.8" rx="9" fill="#050505" />
<rect x="2618.4" y="824.9" width="177.6" height="177.6" rx="7.5" fill="#b01ed2" />
<rect x="2618.4" y="824.9" width="177.6" height="39.9" rx="7.5" fill="#a814cc" />
<rect x="2618.4" y="856.8" width="177.6" height="4.0" rx="0" fill="#a814cc" />
<rect x="2620.4" y="860.8" width="173.6" height="139.7" rx="6" fill="#050505" />
<rect x="2620.4" y="860.8" width="173.6" height="10.0" rx="0" fill="#050505" />
<rect x="2622.4" y="863.0" width="169.6" height="135.5" rx="4.5" fill="#2b1c3a" />
<rect x="2622.4" y="863.0" width="169.6" height="10.0" rx="0" fill="#2b1c3a" />
<path d="M2699.1800000000003 824.3 A8 9 0 0 1 2707.1800000000003 833.3 A8 9 0 0 1 2715.1800000000003 824.3 Z" fill="#050505" />
<path d="M2699.1800000000003 1004.0999999999999 A8 7 0 0 0 2707.1800000000003 997.0999999999999 A8 7 0 0 0 2715.1800000000003 1004.0999999999999 Z" fill="#050505" />
<path d="M2699.1800000000003 1001.4999999999999 A6 4.5 0 0 0 2705.1800000000003 997.0999999999999 H2709.1800000000003 A6 4.5 0 0 0 2715.1800000000003 1001.4999999999999" fill="none" stroke="#b01ed2" stroke-width="2" />
<text x="2627.8" y="850.2" font-size="23.3" fill="#ffffff" stroke="#ffffff" stroke-width="0.5">Wurlitzer</text>
<rect x="2622.8" y="900.8" width="9.0" height="4.2" rx="0" fill="#4f2a6a" />
<rect x="2708.5" y="900.8" width="14.0" height="4.2" rx="0" fill="#4f2a6a" />
<rect x="2638.4" y="914.8" width="14.0" height="4.2" rx="0" fill="#4f2a6a" />
<rect x="2662.5" y="914.8" width="12.0" height="4.2" rx="0" fill="#4f2a6a" />
<rect x="2728.4" y="914.8" width="14.0" height="4.2" rx="0" fill="#4f2a6a" />
<rect x="2754.4" y="914.8" width="10.0" height="4.2" rx="0" fill="#4f2a6a" />
<rect x="2622.8" y="928.8" width="9.0" height="4.2" rx="0" fill="#4f2a6a" />
<rect x="2682.4" y="928.8" width="12.0" height="4.2" rx="0" fill="#4f2a6a" />
<rect x="2708.5" y="928.8" width="14.0" height="4.2" rx="0" fill="#4f2a6a" />
<rect x="2638.4" y="934.8" width="14.0" height="4.2" rx="0" fill="#4f2a6a" />
<rect x="2662.5" y="934.8" width="12.0" height="4.2" rx="0" fill="#4f2a6a" />
<rect x="2696.1" y="934.8" width="10.0" height="4.2" rx="0" fill="#4f2a6a" />
<rect x="2728.4" y="934.8" width="14.0" height="4.2" rx="0" fill="#4f2a6a" />
<rect x="2754.4" y="934.8" width="10.0" height="4.2" rx="0" fill="#4f2a6a" />
<rect x="2622.8" y="948.8" width="9.0" height="4.2" rx="0" fill="#4f2a6a" />
<rect x="2635.8" y="948.8" width="16.0" height="4.2" rx="0" fill="#4f2a6a" />
<rect x="2682.4" y="948.8" width="12.0" height="4.2" rx="0" fill="#4f2a6a" />
<rect x="2708.5" y="948.8" width="14.0" height="4.2" rx="0" fill="#4f2a6a" />
<rect x="2728.4" y="948.8" width="14.0" height="4.2" rx="0" fill="#4f2a6a" />
<rect x="2635.8" y="962.8" width="14.0" height="4.2" rx="0" fill="#4f2a6a" />
<rect x="2662.5" y="962.8" width="12.0" height="4.2" rx="0" fill="#4f2a6a" />
<rect x="2696.1" y="962.8" width="10.0" height="4.2" rx="0" fill="#4f2a6a" />
<rect x="2728.4" y="962.8" width="14.0" height="4.2" rx="0" fill="#4f2a6a" />
<rect x="2754.4" y="962.8" width="10.0" height="4.2" rx="0" fill="#4f2a6a" />
<rect x="2622.8" y="976.8" width="9.0" height="4.2" rx="0" fill="#4f2a6a" />
<rect x="2708.5" y="976.8" width="14.0" height="4.2" rx="0" fill="#4f2a6a" />
<rect x="2662.5" y="982.8" width="12.0" height="4.2" rx="0" fill="#4f2a6a" />
<rect x="2682.4" y="982.8" width="12.0" height="4.2" rx="0" fill="#4f2a6a" />
<rect x="2697.8" y="982.8" width="5.0" height="4.2" rx="0" fill="#4f2a6a" />
<rect x="2754.4" y="982.8" width="10.0" height="4.2" rx="0" fill="#4f2a6a" />
<rect x="2785.8" y="982.8" width="5.0" height="4.2" rx="0" fill="#4f2a6a" />
<rect x="1344.5" y="1007.2" width="182.0" height="180.8" rx="9" fill="#050505" />
<rect x="1346.1" y="1008.8" width="178.8" height="177.6" rx="7.5" fill="#b01ed2" />
<rect x="1346.1" y="1008.8" width="178.8" height="39.9" rx="7.5" fill="#a814cc" />
<rect x="1346.1" y="1040.7" width="178.8" height="4.0" rx="0" fill="#a814cc" />
<rect x="1348.1" y="1044.7" width="174.8" height="139.7" rx="6" fill="#050505" />
<rect x="1348.1" y="1044.7" width="174.8" height="10.0" rx="0" fill="#050505" />
<rect x="1350.1" y="1046.9" width="170.8" height="135.5" rx="4.5" fill="#2b1c3a" />
<rect x="1350.1" y="1046.9" width="170.8" height="10.0" rx="0" fill="#2b1c3a" />
<path d="M1427.46 1008.2 A8 9 0 0 1 1435.46 1017.2 A8 9 0 0 1 1443.46 1008.2 Z" fill="#050505" />
<path d="M1427.46 1188.0 A8 7 0 0 0 1435.46 1181.0 A8 7 0 0 0 1443.46 1188.0 Z" fill="#050505" />
<path d="M1427.46 1185.4 A6 4.5 0 0 0 1433.46 1181.0 H1437.46 A6 4.5 0 0 0 1443.46 1185.4" fill="none" stroke="#b01ed2" stroke-width="2" />
<text x="1355.5" y="1034.1" font-size="23.3" fill="#ffffff" stroke="#ffffff" stroke-width="0.5">Wurlitzer</text>
<rect x="1350.5" y="1084.7" width="9.0" height="4.2" rx="0" fill="#4f2a6a" />
<rect x="1436.2" y="1084.7" width="14.0" height="4.2" rx="0" fill="#4f2a6a" />
<rect x="1366.1" y="1098.7" width="14.0" height="4.2" rx="0" fill="#4f2a6a" />
<rect x="1390.2" y="1098.7" width="12.0" height="4.2" rx="0" fill="#4f2a6a" />
<rect x="1456.1" y="1098.7" width="14.0" height="4.2" rx="0" fill="#4f2a6a" />
<rect x="1482.1" y="1098.7" width="10.0" height="4.2" rx="0" fill="#4f2a6a" />
<rect x="1350.5" y="1112.7" width="9.0" height="4.2" rx="0" fill="#4f2a6a" />
<rect x="1410.1" y="1112.7" width="12.0" height="4.2" rx="0" fill="#4f2a6a" />
<rect x="1436.2" y="1112.7" width="14.0" height="4.2" rx="0" fill="#4f2a6a" />
<rect x="1366.1" y="1118.7" width="14.0" height="4.2" rx="0" fill="#4f2a6a" />
<rect x="1390.2" y="1118.7" width="12.0" height="4.2" rx="0" fill="#4f2a6a" />
<rect x="1423.8" y="1118.7" width="10.0" height="4.2" rx="0" fill="#4f2a6a" />
<rect x="1456.1" y="1118.7" width="14.0" height="4.2" rx="0" fill="#4f2a6a" />
<rect x="1482.1" y="1118.7" width="10.0" height="4.2" rx="0" fill="#4f2a6a" />
<rect x="1350.5" y="1132.7" width="9.0" height="4.2" rx="0" fill="#4f2a6a" />
<rect x="1363.5" y="1132.7" width="16.0" height="4.2" rx="0" fill="#4f2a6a" />
<rect x="1410.1" y="1132.7" width="12.0" height="4.2" rx="0" fill="#4f2a6a" />
<rect x="1436.2" y="1132.7" width="14.0" height="4.2" rx="0" fill="#4f2a6a" />
<rect x="1456.1" y="1132.7" width="14.0" height="4.2" rx="0" fill="#4f2a6a" />
<rect x="1363.5" y="1146.7" width="14.0" height="4.2" rx="0" fill="#4f2a6a" />
<rect x="1390.2" y="1146.7" width="12.0" height="4.2" rx="0" fill="#4f2a6a" />
<rect x="1423.8" y="1146.7" width="10.0" height="4.2" rx="0" fill="#4f2a6a" />
<rect x="1456.1" y="1146.7" width="14.0" height="4.2" rx="0" fill="#4f2a6a" />
<rect x="1482.1" y="1146.7" width="10.0" height="4.2" rx="0" fill="#4f2a6a" />
<rect x="1350.5" y="1160.7" width="9.0" height="4.2" rx="0" fill="#4f2a6a" />
<rect x="1436.2" y="1160.7" width="14.0" height="4.2" rx="0" fill="#4f2a6a" />
<rect x="1390.2" y="1166.7" width="12.0" height="4.2" rx="0" fill="#4f2a6a" />
<rect x="1410.1" y="1166.7" width="12.0" height="4.2" rx="0" fill="#4f2a6a" />
<rect x="1425.5" y="1166.7" width="5.0" height="4.2" rx="0" fill="#4f2a6a" />
<rect x="1482.1" y="1166.7" width="10.0" height="4.2" rx="0" fill="#4f2a6a" />
<rect x="1513.5" y="1166.7" width="5.0" height="4.2" rx="0" fill="#4f2a6a" />
<rect x="2071.5" y="1007.2" width="182.0" height="180.8" rx="9" fill="#050505" />
<rect x="2073.1" y="1008.8" width="178.8" height="177.6" rx="7.5" fill="#b01ed2" />
<rect x="2073.1" y="1008.8" width="178.8" height="39.9" rx="7.5" fill="#a814cc" />
<rect x="2073.1" y="1040.7" width="178.8" height="4.0" rx="0" fill="#a814cc" />
<rect x="2075.1" y="1044.7" width="174.8" height="139.7" rx="6" fill="#050505" />
<rect x="2075.1" y="1044.7" width="174.8" height="10.0" rx="0" fill="#050505" />
<rect x="2077.1" y="1046.9" width="170.8" height="135.5" rx="4.5" fill="#2b1c3a" />
<rect x="2077.1" y="1046.9" width="170.8" height="10.0" rx="0" fill="#2b1c3a" />
<path d="M2154.5 1008.2 A8 9 0 0 1 2162.5 1017.2 A8 9 0 0 1 2170.5 1008.2 Z" fill="#050505" />
<path d="M2154.5 1188.0 A8 7 0 0 0 2162.5 1181.0 A8 7 0 0 0 2170.5 1188.0 Z" fill="#050505" />
<path d="M2154.5 1185.4 A6 4.5 0 0 0 2160.5 1181.0 H2164.5 A6 4.5 0 0 0 2170.5 1185.4" fill="none" stroke="#b01ed2" stroke-width="2" />
<text x="2082.5" y="1034.1" font-size="23.3" fill="#ffffff" stroke="#ffffff" stroke-width="0.5">Wurlitzer</text>
<rect x="2077.5" y="1084.7" width="9.0" height="4.2" rx="0" fill="#4f2a6a" />
<rect x="2163.2" y="1084.7" width="14.0" height="4.2" rx="0" fill="#4f2a6a" />
<rect x="2093.1" y="1098.7" width="14.0" height="4.2" rx="0" fill="#4f2a6a" />
<rect x="2117.2" y="1098.7" width="12.0" height="4.2" rx="0" fill="#4f2a6a" />
<rect x="2183.1" y="1098.7" width="14.0" height="4.2" rx="0" fill="#4f2a6a" />
<rect x="2209.1" y="1098.7" width="10.0" height="4.2" rx="0" fill="#4f2a6a" />
<rect x="2077.5" y="1112.7" width="9.0" height="4.2" rx="0" fill="#4f2a6a" />
<rect x="2137.1" y="1112.7" width="12.0" height="4.2" rx="0" fill="#4f2a6a" />
<rect x="2163.2" y="1112.7" width="14.0" height="4.2" rx="0" fill="#4f2a6a" />
<rect x="2093.1" y="1118.7" width="14.0" height="4.2" rx="0" fill="#4f2a6a" />
<rect x="2117.2" y="1118.7" width="12.0" height="4.2" rx="0" fill="#4f2a6a" />
<rect x="2150.8" y="1118.7" width="10.0" height="4.2" rx="0" fill="#4f2a6a" />
<rect x="2183.1" y="1118.7" width="14.0" height="4.2" rx="0" fill="#4f2a6a" />
<rect x="2209.1" y="1118.7" width="10.0" height="4.2" rx="0" fill="#4f2a6a" />
<rect x="2077.5" y="1132.7" width="9.0" height="4.2" rx="0" fill="#4f2a6a" />
<rect x="2090.5" y="1132.7" width="16.0" height="4.2" rx="0" fill="#4f2a6a" />
<rect x="2137.1" y="1132.7" width="12.0" height="4.2" rx="0" fill="#4f2a6a" />
<rect x="2163.2" y="1132.7" width="14.0" height="4.2" rx="0" fill="#4f2a6a" />
<rect x="2183.1" y="1132.7" width="14.0" height="4.2" rx="0" fill="#4f2a6a" />
<rect x="2090.5" y="1146.7" width="14.0" height="4.2" rx="0" fill="#4f2a6a" />
<rect x="2117.2" y="1146.7" width="12.0" height="4.2" rx="0" fill="#4f2a6a" />
<rect x="2150.8" y="1146.7" width="10.0" height="4.2" rx="0" fill="#4f2a6a" />
<rect x="2183.1" y="1146.7" width="14.0" height="4.2" rx="0" fill="#4f2a6a" />
<rect x="2209.1" y="1146.7" width="10.0" height="4.2" rx="0" fill="#4f2a6a" />
<rect x="2077.5" y="1160.7" width="9.0" height="4.2" rx="0" fill="#4f2a6a" />
<rect x="2163.2" y="1160.7" width="14.0" height="4.2" rx="0" fill="#4f2a6a" />
<rect x="2117.2" y="1166.7" width="12.0" height="4.2" rx="0" fill="#4f2a6a" />
<rect x="2137.1" y="1166.7" width="12.0" height="4.2" rx="0" fill="#4f2a6a" />
<rect x="2152.5" y="1166.7" width="5.0" height="4.2" rx="0" fill="#4f2a6a" />
<rect x="2209.1" y="1166.7" width="10.0" height="4.2" rx="0" fill="#4f2a6a" />
<rect x="2240.5" y="1166.7" width="5.0" height="4.2" rx="0" fill="#4f2a6a" />
<rect x="1526.2" y="1191.1" width="182.0" height="180.8" rx="9" fill="#050505" />
<rect x="1527.8" y="1192.7" width="178.8" height="177.6" rx="7.5" fill="#b01ed2" />
<rect x="1527.8" y="1192.7" width="178.8" height="39.9" rx="7.5" fill="#a814cc" />
<rect x="1527.8" y="1224.6" width="178.8" height="4.0" rx="0" fill="#a814cc" />
<rect x="1529.8" y="1228.6" width="174.8" height="139.7" rx="6" fill="#050505" />
<rect x="1529.8" y="1228.6" width="174.8" height="10.0" rx="0" fill="#050505" />
<rect x="1531.8" y="1230.8" width="170.8" height="135.5" rx="4.5" fill="#2b1c3a" />
<rect x="1531.8" y="1230.8" width="170.8" height="10.0" rx="0" fill="#2b1c3a" />
<path d="M1609.22 1192.1 A8 9 0 0 1 1617.22 1201.1 A8 9 0 0 1 1625.22 1192.1 Z" fill="#050505" />
<path d="M1609.22 1371.8999999999999 A8 7 0 0 0 1617.22 1364.8999999999999 A8 7 0 0 0 1625.22 1371.8999999999999 Z" fill="#050505" />
<path d="M1609.22 1369.3 A6 4.5 0 0 0 1615.22 1364.8999999999999 H1619.22 A6 4.5 0 0 0 1625.22 1369.3" fill="none" stroke="#b01ed2" stroke-width="2" />
<text x="1537.2" y="1218.0" font-size="23.3" fill="#ffffff" stroke="#ffffff" stroke-width="0.5">Wurlitzer</text>
<rect x="1532.2" y="1268.6" width="9.0" height="4.2" rx="0" fill="#4f2a6a" />
<rect x="1617.9" y="1268.6" width="14.0" height="4.2" rx="0" fill="#4f2a6a" />
<rect x="1547.8" y="1282.6" width="14.0" height="4.2" rx="0" fill="#4f2a6a" />
<rect x="1571.9" y="1282.6" width="12.0" height="4.2" rx="0" fill="#4f2a6a" />
<rect x="1637.8" y="1282.6" width="14.0" height="4.2" rx="0" fill="#4f2a6a" />
<rect x="1663.8" y="1282.6" width="10.0" height="4.2" rx="0" fill="#4f2a6a" />
<rect x="1532.2" y="1296.6" width="9.0" height="4.2" rx="0" fill="#4f2a6a" />
<rect x="1591.8" y="1296.6" width="12.0" height="4.2" rx="0" fill="#4f2a6a" />
<rect x="1617.9" y="1296.6" width="14.0" height="4.2" rx="0" fill="#4f2a6a" />
<rect x="1547.8" y="1302.6" width="14.0" height="4.2" rx="0" fill="#4f2a6a" />
<rect x="1571.9" y="1302.6" width="12.0" height="4.2" rx="0" fill="#4f2a6a" />
<rect x="1605.5" y="1302.6" width="10.0" height="4.2" rx="0" fill="#4f2a6a" />
<rect x="1637.8" y="1302.6" width="14.0" height="4.2" rx="0" fill="#4f2a6a" />
<rect x="1663.8" y="1302.6" width="10.0" height="4.2" rx="0" fill="#4f2a6a" />
<rect x="1532.2" y="1316.6" width="9.0" height="4.2" rx="0" fill="#4f2a6a" />
<rect x="1545.2" y="1316.6" width="16.0" height="4.2" rx="0" fill="#4f2a6a" />
<rect x="1591.8" y="1316.6" width="12.0" height="4.2" rx="0" fill="#4f2a6a" />
<rect x="1617.9" y="1316.6" width="14.0" height="4.2" rx="0" fill="#4f2a6a" />
<rect x="1637.8" y="1316.6" width="14.0" height="4.2" rx="0" fill="#4f2a6a" />
<rect x="1545.2" y="1330.6" width="14.0" height="4.2" rx="0" fill="#4f2a6a" />
<rect x="1571.9" y="1330.6" width="12.0" height="4.2" rx="0" fill="#4f2a6a" />
<rect x="1605.5" y="1330.6" width="10.0" height="4.2" rx="0" fill="#4f2a6a" />
<rect x="1637.8" y="1330.6" width="14.0" height="4.2" rx="0" fill="#4f2a6a" />
<rect x="1663.8" y="1330.6" width="10.0" height="4.2" rx="0" fill="#4f2a6a" />
<rect x="1532.2" y="1344.6" width="9.0" height="4.2" rx="0" fill="#4f2a6a" />
<rect x="1617.9" y="1344.6" width="14.0" height="4.2" rx="0" fill="#4f2a6a" />
<rect x="1571.9" y="1350.6" width="12.0" height="4.2" rx="0" fill="#4f2a6a" />
<rect x="1591.8" y="1350.6" width="12.0" height="4.2" rx="0" fill="#4f2a6a" />
<rect x="1607.2" y="1350.6" width="5.0" height="4.2" rx="0" fill="#4f2a6a" />
<rect x="1663.8" y="1350.6" width="10.0" height="4.2" rx="0" fill="#4f2a6a" />
<rect x="1695.2" y="1350.6" width="5.0" height="4.2" rx="0" fill="#4f2a6a" />
<rect x="2253.3" y="1191.1" width="182.0" height="180.8" rx="9" fill="#050505" />
<rect x="2254.9" y="1192.7" width="178.8" height="177.6" rx="7.5" fill="#b01ed2" />
<rect x="2254.9" y="1192.7" width="178.8" height="39.9" rx="7.5" fill="#a814cc" />
<rect x="2254.9" y="1224.6" width="178.8" height="4.0" rx="0" fill="#a814cc" />
<rect x="2256.9" y="1228.6" width="174.8" height="139.7" rx="6" fill="#050505" />
<rect x="2256.9" y="1228.6" width="174.8" height="10.0" rx="0" fill="#050505" />
<rect x="2258.9" y="1230.8" width="170.8" height="135.5" rx="4.5" fill="#2b1c3a" />
<rect x="2258.9" y="1230.8" width="170.8" height="10.0" rx="0" fill="#2b1c3a" />
<path d="M2336.2599999999998 1192.1 A8 9 0 0 1 2344.2599999999998 1201.1 A8 9 0 0 1 2352.2599999999998 1192.1 Z" fill="#050505" />
<path d="M2336.2599999999998 1371.8999999999999 A8 7 0 0 0 2344.2599999999998 1364.8999999999999 A8 7 0 0 0 2352.2599999999998 1371.8999999999999 Z" fill="#050505" />
<path d="M2336.2599999999998 1369.3 A6 4.5 0 0 0 2342.2599999999998 1364.8999999999999 H2346.2599999999998 A6 4.5 0 0 0 2352.2599999999998 1369.3" fill="none" stroke="#b01ed2" stroke-width="2" />
<text x="2264.3" y="1218.0" font-size="23.3" fill="#ffffff" stroke="#ffffff" stroke-width="0.5">Wurlitzer</text>
<rect x="2259.3" y="1268.6" width="9.0" height="4.2" rx="0" fill="#4f2a6a" />
<rect x="2345.0" y="1268.6" width="14.0" height="4.2" rx="0" fill="#4f2a6a" />
<rect x="2274.9" y="1282.6" width="14.0" height="4.2" rx="0" fill="#4f2a6a" />
<rect x="2299.0" y="1282.6" width="12.0" height="4.2" rx="0" fill="#4f2a6a" />
<rect x="2364.9" y="1282.6" width="14.0" height="4.2" rx="0" fill="#4f2a6a" />
<rect x="2390.9" y="1282.6" width="10.0" height="4.2" rx="0" fill="#4f2a6a" />
<rect x="2259.3" y="1296.6" width="9.0" height="4.2" rx="0" fill="#4f2a6a" />
<rect x="2318.9" y="1296.6" width="12.0" height="4.2" rx="0" fill="#4f2a6a" />
<rect x="2345.0" y="1296.6" width="14.0" height="4.2" rx="0" fill="#4f2a6a" />
<rect x="2274.9" y="1302.6" width="14.0" height="4.2" rx="0" fill="#4f2a6a" />
<rect x="2299.0" y="1302.6" width="12.0" height="4.2" rx="0" fill="#4f2a6a" />
<rect x="2332.6" y="1302.6" width="10.0" height="4.2" rx="0" fill="#4f2a6a" />
<rect x="2364.9" y="1302.6" width="14.0" height="4.2" rx="0" fill="#4f2a6a" />
<rect x="2390.9" y="1302.6" width="10.0" height="4.2" rx="0" fill="#4f2a6a" />
<rect x="2259.3" y="1316.6" width="9.0" height="4.2" rx="0" fill="#4f2a6a" />
<rect x="2272.3" y="1316.6" width="16.0" height="4.2" rx="0" fill="#4f2a6a" />
<rect x="2318.9" y="1316.6" width="12.0" height="4.2" rx="0" fill="#4f2a6a" />
<rect x="2345.0" y="1316.6" width="14.0" height="4.2" rx="0" fill="#4f2a6a" />
<rect x="2364.9" y="1316.6" width="14.0" height="4.2" rx="0" fill="#4f2a6a" />
<rect x="2272.3" y="1330.6" width="14.0" height="4.2" rx="0" fill="#4f2a6a" />
<rect x="2299.0" y="1330.6" width="12.0" height="4.2" rx="0" fill="#4f2a6a" />
<rect x="2332.6" y="1330.6" width="10.0" height="4.2" rx="0" fill="#4f2a6a" />
<rect x="2364.9" y="1330.6" width="14.0" height="4.2" rx="0" fill="#4f2a6a" />
<rect x="2390.9" y="1330.6" width="10.0" height="4.2" rx="0" fill="#4f2a6a" />
<rect x="2259.3" y="1344.6" width="9.0" height="4.2" rx="0" fill="#4f2a6a" />
<rect x="2345.0" y="1344.6" width="14.0" height="4.2" rx="0" fill="#4f2a6a" />
<rect x="2299.0" y="1350.6" width="12.0" height="4.2" rx="0" fill="#4f2a6a" />
<rect x="2318.9" y="1350.6" width="12.0" height="4.2" rx="0" fill="#4f2a6a" />
<rect x="2334.3" y="1350.6" width="5.0" height="4.2" rx="0" fill="#4f2a6a" />
<rect x="2390.9" y="1350.6" width="10.0" height="4.2" rx="0" fill="#4f2a6a" />
<rect x="2422.3" y="1350.6" width="5.0" height="4.2" rx="0" fill="#4f2a6a" />
<rect x="1162.7" y="1375.0" width="182.0" height="180.8" rx="2.5" fill="#050505" />
<rect x="1164.3" y="1376.6" width="178.8" height="177.6" rx="1.0" fill="#5550e0" />
<rect x="1164.3" y="1376.6" width="178.8" height="39.9" rx="1.0" fill="#4a45d8" />
<rect x="1164.3" y="1408.5" width="178.8" height="4.0" rx="0" fill="#4a45d8" />
<rect x="1166.3" y="1412.5" width="174.8" height="139.7" rx="2.5" fill="#050505" />
<rect x="1166.3" y="1412.5" width="174.8" height="10.0" rx="0" fill="#050505" />
<rect x="1168.3" y="1414.7" width="170.8" height="135.5" rx="2.5" fill="#1b1d3a" />
<rect x="1168.3" y="1414.7" width="170.8" height="10.0" rx="0" fill="#1b1d3a" />
<path d="M1180.4650000000001 1376.0 A5 4 0 0 1 1185.4650000000001 1380.0 A5 4 0 0 1 1190.4650000000001 1376.0 Z" fill="#050505" />
<path d="M1180.4650000000001 1555.8 A5 4 0 0 0 1185.4650000000001 1551.8 A5 4 0 0 0 1190.4650000000001 1555.8 Z" fill="#050505" />
<path d="M1203.21 1376.0 A5 4 0 0 1 1208.21 1380.0 A5 4 0 0 1 1213.21 1376.0 Z" fill="#050505" />
<path d="M1203.21 1555.8 A5 4 0 0 0 1208.21 1551.8 A5 4 0 0 0 1213.21 1555.8 Z" fill="#050505" />
<path d="M1225.955 1376.0 A5 4 0 0 1 1230.955 1380.0 A5 4 0 0 1 1235.955 1376.0 Z" fill="#050505" />
<path d="M1225.955 1555.8 A5 4 0 0 0 1230.955 1551.8 A5 4 0 0 0 1235.955 1555.8 Z" fill="#050505" />
<path d="M1248.7 1376.0 A5 4 0 0 1 1253.7 1380.0 A5 4 0 0 1 1258.7 1376.0 Z" fill="#050505" />
<path d="M1248.7 1555.8 A5 4 0 0 0 1253.7 1551.8 A5 4 0 0 0 1258.7 1555.8 Z" fill="#050505" />
<path d="M1271.4450000000002 1376.0 A5 4 0 0 1 1276.4450000000002 1380.0 A5 4 0 0 1 1281.4450000000002 1376.0 Z" fill="#050505" />
<path d="M1271.4450000000002 1555.8 A5 4 0 0 0 1276.4450000000002 1551.8 A5 4 0 0 0 1281.4450000000002 1555.8 Z" fill="#050505" />
<path d="M1294.19 1376.0 A5 4 0 0 1 1299.19 1380.0 A5 4 0 0 1 1304.19 1376.0 Z" fill="#050505" />
<path d="M1294.19 1555.8 A5 4 0 0 0 1299.19 1551.8 A5 4 0 0 0 1304.19 1555.8 Z" fill="#050505" />
<path d="M1316.935 1376.0 A5 4 0 0 1 1321.935 1380.0 A5 4 0 0 1 1326.935 1376.0 Z" fill="#050505" />
<path d="M1316.935 1555.8 A5 4 0 0 0 1321.935 1551.8 A5 4 0 0 0 1326.935 1555.8 Z" fill="#050505" />
<text x="1173.7" y="1401.9" font-size="23.3" fill="#ffffff" stroke="#ffffff" stroke-width="0.5">Kick</text>
<rect x="1168.7" y="1459.0" width="18.0" height="4.0" rx="0" fill="#2d2f62" />
<rect x="1190.9" y="1459.0" width="18.0" height="4.0" rx="0" fill="#2d2f62" />
<rect x="1213.1" y="1459.0" width="18.0" height="4.0" rx="0" fill="#2d2f62" />
<rect x="1235.3" y="1459.0" width="18.0" height="4.0" rx="0" fill="#2d2f62" />
<rect x="1257.5" y="1459.0" width="18.0" height="4.0" rx="0" fill="#2d2f62" />
<rect x="1279.7" y="1459.0" width="18.0" height="4.0" rx="0" fill="#2d2f62" />
<rect x="1301.9" y="1459.0" width="18.0" height="4.0" rx="0" fill="#2d2f62" />
<rect x="1324.1" y="1459.0" width="12.6" height="4.0" rx="0" fill="#2d2f62" />
<rect x="1344.5" y="1375.0" width="182.0" height="180.8" rx="2.5" fill="#050505" />
<rect x="1346.1" y="1376.6" width="178.8" height="177.6" rx="1.0" fill="#5550e0" />
<rect x="1346.1" y="1376.6" width="178.8" height="39.9" rx="1.0" fill="#4a45d8" />
<rect x="1346.1" y="1408.5" width="178.8" height="4.0" rx="0" fill="#4a45d8" />
<rect x="1348.1" y="1412.5" width="174.8" height="139.7" rx="2.5" fill="#050505" />
<rect x="1348.1" y="1412.5" width="174.8" height="10.0" rx="0" fill="#050505" />
<rect x="1350.1" y="1414.7" width="170.8" height="135.5" rx="2.5" fill="#1b1d3a" />
<rect x="1350.1" y="1414.7" width="170.8" height="10.0" rx="0" fill="#1b1d3a" />
<path d="M1362.225 1376.0 A5 4 0 0 1 1367.225 1380.0 A5 4 0 0 1 1372.225 1376.0 Z" fill="#050505" />
<path d="M1362.225 1555.8 A5 4 0 0 0 1367.225 1551.8 A5 4 0 0 0 1372.225 1555.8 Z" fill="#050505" />
<path d="M1384.97 1376.0 A5 4 0 0 1 1389.97 1380.0 A5 4 0 0 1 1394.97 1376.0 Z" fill="#050505" />
<path d="M1384.97 1555.8 A5 4 0 0 0 1389.97 1551.8 A5 4 0 0 0 1394.97 1555.8 Z" fill="#050505" />
<path d="M1407.7150000000001 1376.0 A5 4 0 0 1 1412.7150000000001 1380.0 A5 4 0 0 1 1417.7150000000001 1376.0 Z" fill="#050505" />
<path d="M1407.7150000000001 1555.8 A5 4 0 0 0 1412.7150000000001 1551.8 A5 4 0 0 0 1417.7150000000001 1555.8 Z" fill="#050505" />
<path d="M1430.46 1376.0 A5 4 0 0 1 1435.46 1380.0 A5 4 0 0 1 1440.46 1376.0 Z" fill="#050505" />
<path d="M1430.46 1555.8 A5 4 0 0 0 1435.46 1551.8 A5 4 0 0 0 1440.46 1555.8 Z" fill="#050505" />
<path d="M1453.205 1376.0 A5 4 0 0 1 1458.205 1380.0 A5 4 0 0 1 1463.205 1376.0 Z" fill="#050505" />
<path d="M1453.205 1555.8 A5 4 0 0 0 1458.205 1551.8 A5 4 0 0 0 1463.205 1555.8 Z" fill="#050505" />
<path d="M1475.95 1376.0 A5 4 0 0 1 1480.95 1380.0 A5 4 0 0 1 1485.95 1376.0 Z" fill="#050505" />
<path d="M1475.95 1555.8 A5 4 0 0 0 1480.95 1551.8 A5 4 0 0 0 1485.95 1555.8 Z" fill="#050505" />
<path d="M1498.6950000000002 1376.0 A5 4 0 0 1 1503.6950000000002 1380.0 A5 4 0 0 1 1508.6950000000002 1376.0 Z" fill="#050505" />
<path d="M1498.6950000000002 1555.8 A5 4 0 0 0 1503.6950000000002 1551.8 A5 4 0 0 0 1508.6950000000002 1555.8 Z" fill="#050505" />
<text x="1355.5" y="1401.9" font-size="23.3" fill="#ffffff" stroke="#ffffff" stroke-width="0.5">Kick</text>
<rect x="1350.5" y="1459.0" width="18.0" height="4.0" rx="0" fill="#2d2f62" />
<rect x="1372.7" y="1459.0" width="18.0" height="4.0" rx="0" fill="#2d2f62" />
<rect x="1394.9" y="1459.0" width="18.0" height="4.0" rx="0" fill="#2d2f62" />
<rect x="1417.1" y="1459.0" width="18.0" height="4.0" rx="0" fill="#2d2f62" />
<rect x="1439.3" y="1459.0" width="18.0" height="4.0" rx="0" fill="#2d2f62" />
<rect x="1461.5" y="1459.0" width="18.0" height="4.0" rx="0" fill="#2d2f62" />
<rect x="1483.7" y="1459.0" width="18.0" height="4.0" rx="0" fill="#2d2f62" />
<rect x="1505.9" y="1459.0" width="12.6" height="4.0" rx="0" fill="#2d2f62" />
<rect x="1526.2" y="1375.0" width="182.0" height="180.8" rx="2.5" fill="#050505" />
<rect x="1527.8" y="1376.6" width="178.8" height="177.6" rx="1.0" fill="#5550e0" />
<rect x="1527.8" y="1376.6" width="178.8" height="39.9" rx="1.0" fill="#4a45d8" />
<rect x="1527.8" y="1408.5" width="178.8" height="4.0" rx="0" fill="#4a45d8" />
<rect x="1529.8" y="1412.5" width="174.8" height="139.7" rx="2.5" fill="#050505" />
<rect x="1529.8" y="1412.5" width="174.8" height="10.0" rx="0" fill="#050505" />
<rect x="1531.8" y="1414.7" width="170.8" height="135.5" rx="2.5" fill="#1b1d3a" />
<rect x="1531.8" y="1414.7" width="170.8" height="10.0" rx="0" fill="#1b1d3a" />
<path d="M1543.9850000000001 1376.0 A5 4 0 0 1 1548.9850000000001 1380.0 A5 4 0 0 1 1553.9850000000001 1376.0 Z" fill="#050505" />
<path d="M1543.9850000000001 1555.8 A5 4 0 0 0 1548.9850000000001 1551.8 A5 4 0 0 0 1553.9850000000001 1555.8 Z" fill="#050505" />
<path d="M1566.73 1376.0 A5 4 0 0 1 1571.73 1380.0 A5 4 0 0 1 1576.73 1376.0 Z" fill="#050505" />
<path d="M1566.73 1555.8 A5 4 0 0 0 1571.73 1551.8 A5 4 0 0 0 1576.73 1555.8 Z" fill="#050505" />
<path d="M1589.475 1376.0 A5 4 0 0 1 1594.475 1380.0 A5 4 0 0 1 1599.475 1376.0 Z" fill="#050505" />
<path d="M1589.475 1555.8 A5 4 0 0 0 1594.475 1551.8 A5 4 0 0 0 1599.475 1555.8 Z" fill="#050505" />
<path d="M1612.22 1376.0 A5 4 0 0 1 1617.22 1380.0 A5 4 0 0 1 1622.22 1376.0 Z" fill="#050505" />
<path d="M1612.22 1555.8 A5 4 0 0 0 1617.22 1551.8 A5 4 0 0 0 1622.22 1555.8 Z" fill="#050505" />
<path d="M1634.9650000000001 1376.0 A5 4 0 0 1 1639.9650000000001 1380.0 A5 4 0 0 1 1644.9650000000001 1376.0 Z" fill="#050505" />
<path d="M1634.9650000000001 1555.8 A5 4 0 0 0 1639.9650000000001 1551.8 A5 4 0 0 0 1644.9650000000001 1555.8 Z" fill="#050505" />
<path d="M1657.71 1376.0 A5 4 0 0 1 1662.71 1380.0 A5 4 0 0 1 1667.71 1376.0 Z" fill="#050505" />
<path d="M1657.71 1555.8 A5 4 0 0 0 1662.71 1551.8 A5 4 0 0 0 1667.71 1555.8 Z" fill="#050505" />
<path d="M1680.455 1376.0 A5 4 0 0 1 1685.455 1380.0 A5 4 0 0 1 1690.455 1376.0 Z" fill="#050505" />
<path d="M1680.455 1555.8 A5 4 0 0 0 1685.455 1551.8 A5 4 0 0 0 1690.455 1555.8 Z" fill="#050505" />
<text x="1537.2" y="1401.9" font-size="23.3" fill="#ffffff" stroke="#ffffff" stroke-width="0.5">Kick</text>
<rect x="1532.2" y="1459.0" width="18.0" height="4.0" rx="0" fill="#2d2f62" />
<rect x="1554.4" y="1459.0" width="18.0" height="4.0" rx="0" fill="#2d2f62" />
<rect x="1576.6" y="1459.0" width="18.0" height="4.0" rx="0" fill="#2d2f62" />
<rect x="1598.8" y="1459.0" width="18.0" height="4.0" rx="0" fill="#2d2f62" />
<rect x="1621.0" y="1459.0" width="18.0" height="4.0" rx="0" fill="#2d2f62" />
<rect x="1643.2" y="1459.0" width="18.0" height="4.0" rx="0" fill="#2d2f62" />
<rect x="1665.4" y="1459.0" width="18.0" height="4.0" rx="0" fill="#2d2f62" />
<rect x="1687.6" y="1459.0" width="12.6" height="4.0" rx="0" fill="#2d2f62" />
<rect x="1708.0" y="1375.0" width="182.0" height="180.8" rx="2.5" fill="#050505" />
<rect x="1709.6" y="1376.6" width="178.8" height="177.6" rx="1.0" fill="#5550e0" />
<rect x="1709.6" y="1376.6" width="178.8" height="39.9" rx="1.0" fill="#4a45d8" />
<rect x="1709.6" y="1408.5" width="178.8" height="4.0" rx="0" fill="#4a45d8" />
<rect x="1711.6" y="1412.5" width="174.8" height="139.7" rx="2.5" fill="#050505" />
<rect x="1711.6" y="1412.5" width="174.8" height="10.0" rx="0" fill="#050505" />
<rect x="1713.6" y="1414.7" width="170.8" height="135.5" rx="2.5" fill="#1b1d3a" />
<rect x="1713.6" y="1414.7" width="170.8" height="10.0" rx="0" fill="#1b1d3a" />
<path d="M1725.745 1376.0 A5 4 0 0 1 1730.745 1380.0 A5 4 0 0 1 1735.745 1376.0 Z" fill="#050505" />
<path d="M1725.745 1555.8 A5 4 0 0 0 1730.745 1551.8 A5 4 0 0 0 1735.745 1555.8 Z" fill="#050505" />
<path d="M1748.49 1376.0 A5 4 0 0 1 1753.49 1380.0 A5 4 0 0 1 1758.49 1376.0 Z" fill="#050505" />
<path d="M1748.49 1555.8 A5 4 0 0 0 1753.49 1551.8 A5 4 0 0 0 1758.49 1555.8 Z" fill="#050505" />
<path d="M1771.2350000000001 1376.0 A5 4 0 0 1 1776.2350000000001 1380.0 A5 4 0 0 1 1781.2350000000001 1376.0 Z" fill="#050505" />
<path d="M1771.2350000000001 1555.8 A5 4 0 0 0 1776.2350000000001 1551.8 A5 4 0 0 0 1781.2350000000001 1555.8 Z" fill="#050505" />
<path d="M1793.98 1376.0 A5 4 0 0 1 1798.98 1380.0 A5 4 0 0 1 1803.98 1376.0 Z" fill="#050505" />
<path d="M1793.98 1555.8 A5 4 0 0 0 1798.98 1551.8 A5 4 0 0 0 1803.98 1555.8 Z" fill="#050505" />
<path d="M1816.725 1376.0 A5 4 0 0 1 1821.725 1380.0 A5 4 0 0 1 1826.725 1376.0 Z" fill="#050505" />
<path d="M1816.725 1555.8 A5 4 0 0 0 1821.725 1551.8 A5 4 0 0 0 1826.725 1555.8 Z" fill="#050505" />
<path d="M1839.47 1376.0 A5 4 0 0 1 1844.47 1380.0 A5 4 0 0 1 1849.47 1376.0 Z" fill="#050505" />
<path d="M1839.47 1555.8 A5 4 0 0 0 1844.47 1551.8 A5 4 0 0 0 1849.47 1555.8 Z" fill="#050505" />
<path d="M1862.2150000000001 1376.0 A5 4 0 0 1 1867.2150000000001 1380.0 A5 4 0 0 1 1872.2150000000001 1376.0 Z" fill="#050505" />
<path d="M1862.2150000000001 1555.8 A5 4 0 0 0 1867.2150000000001 1551.8 A5 4 0 0 0 1872.2150000000001 1555.8 Z" fill="#050505" />
<text x="1719.0" y="1401.9" font-size="23.3" fill="#ffffff" stroke="#ffffff" stroke-width="0.5">Kick</text>
<rect x="1714.0" y="1459.0" width="18.0" height="4.0" rx="0" fill="#2d2f62" />
<rect x="1736.2" y="1459.0" width="18.0" height="4.0" rx="0" fill="#2d2f62" />
<rect x="1758.4" y="1459.0" width="18.0" height="4.0" rx="0" fill="#2d2f62" />
<rect x="1780.6" y="1459.0" width="18.0" height="4.0" rx="0" fill="#2d2f62" />
<rect x="1802.8" y="1459.0" width="18.0" height="4.0" rx="0" fill="#2d2f62" />
<rect x="1825.0" y="1459.0" width="18.0" height="4.0" rx="0" fill="#2d2f62" />
<rect x="1847.2" y="1459.0" width="18.0" height="4.0" rx="0" fill="#2d2f62" />
<rect x="1869.4" y="1459.0" width="12.6" height="4.0" rx="0" fill="#2d2f62" />
<rect x="1889.8" y="1375.0" width="182.0" height="180.8" rx="2.5" fill="#050505" />
<rect x="1891.4" y="1376.6" width="178.8" height="177.6" rx="1.0" fill="#5550e0" />
<rect x="1891.4" y="1376.6" width="178.8" height="39.9" rx="1.0" fill="#4a45d8" />
<rect x="1891.4" y="1408.5" width="178.8" height="4.0" rx="0" fill="#4a45d8" />
<rect x="1893.4" y="1412.5" width="174.8" height="139.7" rx="2.5" fill="#050505" />
<rect x="1893.4" y="1412.5" width="174.8" height="10.0" rx="0" fill="#050505" />
<rect x="1895.4" y="1414.7" width="170.8" height="135.5" rx="2.5" fill="#1b1d3a" />
<rect x="1895.4" y="1414.7" width="170.8" height="10.0" rx="0" fill="#1b1d3a" />
<path d="M1907.5049999999999 1376.0 A5 4 0 0 1 1912.5049999999999 1380.0 A5 4 0 0 1 1917.5049999999999 1376.0 Z" fill="#050505" />
<path d="M1907.5049999999999 1555.8 A5 4 0 0 0 1912.5049999999999 1551.8 A5 4 0 0 0 1917.5049999999999 1555.8 Z" fill="#050505" />
<path d="M1930.25 1376.0 A5 4 0 0 1 1935.25 1380.0 A5 4 0 0 1 1940.25 1376.0 Z" fill="#050505" />
<path d="M1930.25 1555.8 A5 4 0 0 0 1935.25 1551.8 A5 4 0 0 0 1940.25 1555.8 Z" fill="#050505" />
<path d="M1952.995 1376.0 A5 4 0 0 1 1957.995 1380.0 A5 4 0 0 1 1962.995 1376.0 Z" fill="#050505" />
<path d="M1952.995 1555.8 A5 4 0 0 0 1957.995 1551.8 A5 4 0 0 0 1962.995 1555.8 Z" fill="#050505" />
<path d="M1975.7399999999998 1376.0 A5 4 0 0 1 1980.7399999999998 1380.0 A5 4 0 0 1 1985.7399999999998 1376.0 Z" fill="#050505" />
<path d="M1975.7399999999998 1555.8 A5 4 0 0 0 1980.7399999999998 1551.8 A5 4 0 0 0 1985.7399999999998 1555.8 Z" fill="#050505" />
<path d="M1998.485 1376.0 A5 4 0 0 1 2003.485 1380.0 A5 4 0 0 1 2008.485 1376.0 Z" fill="#050505" />
<path d="M1998.485 1555.8 A5 4 0 0 0 2003.485 1551.8 A5 4 0 0 0 2008.485 1555.8 Z" fill="#050505" />
<path d="M2021.2299999999998 1376.0 A5 4 0 0 1 2026.2299999999998 1380.0 A5 4 0 0 1 2031.2299999999998 1376.0 Z" fill="#050505" />
<path d="M2021.2299999999998 1555.8 A5 4 0 0 0 2026.2299999999998 1551.8 A5 4 0 0 0 2031.2299999999998 1555.8 Z" fill="#050505" />
<path d="M2043.975 1376.0 A5 4 0 0 1 2048.975 1380.0 A5 4 0 0 1 2053.975 1376.0 Z" fill="#050505" />
<path d="M2043.975 1555.8 A5 4 0 0 0 2048.975 1551.8 A5 4 0 0 0 2053.975 1555.8 Z" fill="#050505" />
<text x="1900.8" y="1401.9" font-size="23.3" fill="#ffffff" stroke="#ffffff" stroke-width="0.5">Kick</text>
<rect x="1895.8" y="1459.0" width="18.0" height="4.0" rx="0" fill="#2d2f62" />
<rect x="1918.0" y="1459.0" width="18.0" height="4.0" rx="0" fill="#2d2f62" />
<rect x="1940.2" y="1459.0" width="18.0" height="4.0" rx="0" fill="#2d2f62" />
<rect x="1962.4" y="1459.0" width="18.0" height="4.0" rx="0" fill="#2d2f62" />
<rect x="1984.6" y="1459.0" width="18.0" height="4.0" rx="0" fill="#2d2f62" />
<rect x="2006.8" y="1459.0" width="18.0" height="4.0" rx="0" fill="#2d2f62" />
<rect x="2029.0" y="1459.0" width="18.0" height="4.0" rx="0" fill="#2d2f62" />
<rect x="2051.2" y="1459.0" width="12.6" height="4.0" rx="0" fill="#2d2f62" />
<rect x="2071.5" y="1375.0" width="182.0" height="180.8" rx="2.5" fill="#050505" />
<rect x="2073.1" y="1376.6" width="178.8" height="177.6" rx="1.0" fill="#5550e0" />
<rect x="2073.1" y="1376.6" width="178.8" height="39.9" rx="1.0" fill="#4a45d8" />
<rect x="2073.1" y="1408.5" width="178.8" height="4.0" rx="0" fill="#4a45d8" />
<rect x="2075.1" y="1412.5" width="174.8" height="139.7" rx="2.5" fill="#050505" />
<rect x="2075.1" y="1412.5" width="174.8" height="10.0" rx="0" fill="#050505" />
<rect x="2077.1" y="1414.7" width="170.8" height="135.5" rx="2.5" fill="#1b1d3a" />
<rect x="2077.1" y="1414.7" width="170.8" height="10.0" rx="0" fill="#1b1d3a" />
<path d="M2089.265 1376.0 A5 4 0 0 1 2094.265 1380.0 A5 4 0 0 1 2099.265 1376.0 Z" fill="#050505" />
<path d="M2089.265 1555.8 A5 4 0 0 0 2094.265 1551.8 A5 4 0 0 0 2099.265 1555.8 Z" fill="#050505" />
<path d="M2112.0099999999998 1376.0 A5 4 0 0 1 2117.0099999999998 1380.0 A5 4 0 0 1 2122.0099999999998 1376.0 Z" fill="#050505" />
<path d="M2112.0099999999998 1555.8 A5 4 0 0 0 2117.0099999999998 1551.8 A5 4 0 0 0 2122.0099999999998 1555.8 Z" fill="#050505" />
<path d="M2134.7549999999997 1376.0 A5 4 0 0 1 2139.7549999999997 1380.0 A5 4 0 0 1 2144.7549999999997 1376.0 Z" fill="#050505" />
<path d="M2134.7549999999997 1555.8 A5 4 0 0 0 2139.7549999999997 1551.8 A5 4 0 0 0 2144.7549999999997 1555.8 Z" fill="#050505" />
<path d="M2157.5 1376.0 A5 4 0 0 1 2162.5 1380.0 A5 4 0 0 1 2167.5 1376.0 Z" fill="#050505" />
<path d="M2157.5 1555.8 A5 4 0 0 0 2162.5 1551.8 A5 4 0 0 0 2167.5 1555.8 Z" fill="#050505" />
<path d="M2180.245 1376.0 A5 4 0 0 1 2185.245 1380.0 A5 4 0 0 1 2190.245 1376.0 Z" fill="#050505" />
<path d="M2180.245 1555.8 A5 4 0 0 0 2185.245 1551.8 A5 4 0 0 0 2190.245 1555.8 Z" fill="#050505" />
<path d="M2202.99 1376.0 A5 4 0 0 1 2207.99 1380.0 A5 4 0 0 1 2212.99 1376.0 Z" fill="#050505" />
<path d="M2202.99 1555.8 A5 4 0 0 0 2207.99 1551.8 A5 4 0 0 0 2212.99 1555.8 Z" fill="#050505" />
<path d="M2225.7349999999997 1376.0 A5 4 0 0 1 2230.7349999999997 1380.0 A5 4 0 0 1 2235.7349999999997 1376.0 Z" fill="#050505" />
<path d="M2225.7349999999997 1555.8 A5 4 0 0 0 2230.7349999999997 1551.8 A5 4 0 0 0 2235.7349999999997 1555.8 Z" fill="#050505" />
<text x="2082.5" y="1401.9" font-size="23.3" fill="#ffffff" stroke="#ffffff" stroke-width="0.5">Kick</text>
<rect x="2077.5" y="1459.0" width="18.0" height="4.0" rx="0" fill="#2d2f62" />
<rect x="2099.7" y="1459.0" width="18.0" height="4.0" rx="0" fill="#2d2f62" />
<rect x="2121.9" y="1459.0" width="18.0" height="4.0" rx="0" fill="#2d2f62" />
<rect x="2144.1" y="1459.0" width="18.0" height="4.0" rx="0" fill="#2d2f62" />
<rect x="2166.3" y="1459.0" width="18.0" height="4.0" rx="0" fill="#2d2f62" />
<rect x="2188.5" y="1459.0" width="18.0" height="4.0" rx="0" fill="#2d2f62" />
<rect x="2210.7" y="1459.0" width="18.0" height="4.0" rx="0" fill="#2d2f62" />
<rect x="2232.9" y="1459.0" width="12.6" height="4.0" rx="0" fill="#2d2f62" />
<rect x="2253.3" y="1375.0" width="182.0" height="180.8" rx="2.5" fill="#050505" />
<rect x="2254.9" y="1376.6" width="178.8" height="177.6" rx="1.0" fill="#5550e0" />
<rect x="2254.9" y="1376.6" width="178.8" height="39.9" rx="1.0" fill="#4a45d8" />
<rect x="2254.9" y="1408.5" width="178.8" height="4.0" rx="0" fill="#4a45d8" />
<rect x="2256.9" y="1412.5" width="174.8" height="139.7" rx="2.5" fill="#050505" />
<rect x="2256.9" y="1412.5" width="174.8" height="10.0" rx="0" fill="#050505" />
<rect x="2258.9" y="1414.7" width="170.8" height="135.5" rx="2.5" fill="#1b1d3a" />
<rect x="2258.9" y="1414.7" width="170.8" height="10.0" rx="0" fill="#1b1d3a" />
<path d="M2271.0249999999996 1376.0 A5 4 0 0 1 2276.0249999999996 1380.0 A5 4 0 0 1 2281.0249999999996 1376.0 Z" fill="#050505" />
<path d="M2271.0249999999996 1555.8 A5 4 0 0 0 2276.0249999999996 1551.8 A5 4 0 0 0 2281.0249999999996 1555.8 Z" fill="#050505" />
<path d="M2293.7699999999995 1376.0 A5 4 0 0 1 2298.7699999999995 1380.0 A5 4 0 0 1 2303.7699999999995 1376.0 Z" fill="#050505" />
<path d="M2293.7699999999995 1555.8 A5 4 0 0 0 2298.7699999999995 1551.8 A5 4 0 0 0 2303.7699999999995 1555.8 Z" fill="#050505" />
<path d="M2316.515 1376.0 A5 4 0 0 1 2321.515 1380.0 A5 4 0 0 1 2326.515 1376.0 Z" fill="#050505" />
<path d="M2316.515 1555.8 A5 4 0 0 0 2321.515 1551.8 A5 4 0 0 0 2326.515 1555.8 Z" fill="#050505" />
<path d="M2339.2599999999998 1376.0 A5 4 0 0 1 2344.2599999999998 1380.0 A5 4 0 0 1 2349.2599999999998 1376.0 Z" fill="#050505" />
<path d="M2339.2599999999998 1555.8 A5 4 0 0 0 2344.2599999999998 1551.8 A5 4 0 0 0 2349.2599999999998 1555.8 Z" fill="#050505" />
<path d="M2362.0049999999997 1376.0 A5 4 0 0 1 2367.0049999999997 1380.0 A5 4 0 0 1 2372.0049999999997 1376.0 Z" fill="#050505" />
<path d="M2362.0049999999997 1555.8 A5 4 0 0 0 2367.0049999999997 1551.8 A5 4 0 0 0 2372.0049999999997 1555.8 Z" fill="#050505" />
<path d="M2384.75 1376.0 A5 4 0 0 1 2389.75 1380.0 A5 4 0 0 1 2394.75 1376.0 Z" fill="#050505" />
<path d="M2384.75 1555.8 A5 4 0 0 0 2389.75 1551.8 A5 4 0 0 0 2394.75 1555.8 Z" fill="#050505" />
<path d="M2407.495 1376.0 A5 4 0 0 1 2412.495 1380.0 A5 4 0 0 1 2417.495 1376.0 Z" fill="#050505" />
<path d="M2407.495 1555.8 A5 4 0 0 0 2412.495 1551.8 A5 4 0 0 0 2417.495 1555.8 Z" fill="#050505" />
<text x="2264.3" y="1401.9" font-size="23.3" fill="#ffffff" stroke="#ffffff" stroke-width="0.5">Kick</text>
<rect x="2259.3" y="1459.0" width="18.0" height="4.0" rx="0" fill="#2d2f62" />
<rect x="2281.5" y="1459.0" width="18.0" height="4.0" rx="0" fill="#2d2f62" />
<rect x="2303.7" y="1459.0" width="18.0" height="4.0" rx="0" fill="#2d2f62" />
<rect x="2325.9" y="1459.0" width="18.0" height="4.0" rx="0" fill="#2d2f62" />
<rect x="2348.1" y="1459.0" width="18.0" height="4.0" rx="0" fill="#2d2f62" />
<rect x="2370.3" y="1459.0" width="18.0" height="4.0" rx="0" fill="#2d2f62" />
<rect x="2392.5" y="1459.0" width="18.0" height="4.0" rx="0" fill="#2d2f62" />
<rect x="2414.7" y="1459.0" width="12.6" height="4.0" rx="0" fill="#2d2f62" />
<rect x="2435.0" y="1375.0" width="182.0" height="180.8" rx="2.5" fill="#050505" />
<rect x="2436.6" y="1376.6" width="178.8" height="177.6" rx="1.0" fill="#5550e0" />
<rect x="2436.6" y="1376.6" width="178.8" height="39.9" rx="1.0" fill="#4a45d8" />
<rect x="2436.6" y="1408.5" width="178.8" height="4.0" rx="0" fill="#4a45d8" />
<rect x="2438.6" y="1412.5" width="174.8" height="139.7" rx="2.5" fill="#050505" />
<rect x="2438.6" y="1412.5" width="174.8" height="10.0" rx="0" fill="#050505" />
<rect x="2440.6" y="1414.7" width="170.8" height="135.5" rx="2.5" fill="#1b1d3a" />
<rect x="2440.6" y="1414.7" width="170.8" height="10.0" rx="0" fill="#1b1d3a" />
<path d="M2452.785 1376.0 A5 4 0 0 1 2457.785 1380.0 A5 4 0 0 1 2462.785 1376.0 Z" fill="#050505" />
<path d="M2452.785 1555.8 A5 4 0 0 0 2457.785 1551.8 A5 4 0 0 0 2462.785 1555.8 Z" fill="#050505" />
<path d="M2475.5299999999997 1376.0 A5 4 0 0 1 2480.5299999999997 1380.0 A5 4 0 0 1 2485.5299999999997 1376.0 Z" fill="#050505" />
<path d="M2475.5299999999997 1555.8 A5 4 0 0 0 2480.5299999999997 1551.8 A5 4 0 0 0 2485.5299999999997 1555.8 Z" fill="#050505" />
<path d="M2498.275 1376.0 A5 4 0 0 1 2503.275 1380.0 A5 4 0 0 1 2508.275 1376.0 Z" fill="#050505" />
<path d="M2498.275 1555.8 A5 4 0 0 0 2503.275 1551.8 A5 4 0 0 0 2508.275 1555.8 Z" fill="#050505" />
<path d="M2521.02 1376.0 A5 4 0 0 1 2526.02 1380.0 A5 4 0 0 1 2531.02 1376.0 Z" fill="#050505" />
<path d="M2521.02 1555.8 A5 4 0 0 0 2526.02 1551.8 A5 4 0 0 0 2531.02 1555.8 Z" fill="#050505" />
<path d="M2543.765 1376.0 A5 4 0 0 1 2548.765 1380.0 A5 4 0 0 1 2553.765 1376.0 Z" fill="#050505" />
<path d="M2543.765 1555.8 A5 4 0 0 0 2548.765 1551.8 A5 4 0 0 0 2553.765 1555.8 Z" fill="#050505" />
<path d="M2566.51 1376.0 A5 4 0 0 1 2571.51 1380.0 A5 4 0 0 1 2576.51 1376.0 Z" fill="#050505" />
<path d="M2566.51 1555.8 A5 4 0 0 0 2571.51 1551.8 A5 4 0 0 0 2576.51 1555.8 Z" fill="#050505" />
<path d="M2589.255 1376.0 A5 4 0 0 1 2594.255 1380.0 A5 4 0 0 1 2599.255 1376.0 Z" fill="#050505" />
<path d="M2589.255 1555.8 A5 4 0 0 0 2594.255 1551.8 A5 4 0 0 0 2599.255 1555.8 Z" fill="#050505" />
<text x="2446.0" y="1401.9" font-size="23.3" fill="#ffffff" stroke="#ffffff" stroke-width="0.5">Kick</text>
<rect x="2441.0" y="1459.0" width="18.0" height="4.0" rx="0" fill="#2d2f62" />
<rect x="2463.2" y="1459.0" width="18.0" height="4.0" rx="0" fill="#2d2f62" />
<rect x="2485.4" y="1459.0" width="18.0" height="4.0" rx="0" fill="#2d2f62" />
<rect x="2507.6" y="1459.0" width="18.0" height="4.0" rx="0" fill="#2d2f62" />
<rect x="2529.8" y="1459.0" width="18.0" height="4.0" rx="0" fill="#2d2f62" />
<rect x="2552.0" y="1459.0" width="18.0" height="4.0" rx="0" fill="#2d2f62" />
<rect x="2574.2" y="1459.0" width="18.0" height="4.0" rx="0" fill="#2d2f62" />
<rect x="2596.4" y="1459.0" width="12.6" height="4.0" rx="0" fill="#2d2f62" />
<rect x="2616.8" y="1375.0" width="180.8" height="180.8" rx="2.5" fill="#050505" />
<rect x="2618.4" y="1376.6" width="177.6" height="177.6" rx="1.0" fill="#5550e0" />
<rect x="2618.4" y="1376.6" width="177.6" height="39.9" rx="1.0" fill="#4a45d8" />
<rect x="2618.4" y="1408.5" width="177.6" height="4.0" rx="0" fill="#4a45d8" />
<rect x="2620.4" y="1412.5" width="173.6" height="139.7" rx="2.5" fill="#050505" />
<rect x="2620.4" y="1412.5" width="173.6" height="10.0" rx="0" fill="#050505" />
<rect x="2622.4" y="1414.7" width="169.6" height="135.5" rx="2.5" fill="#1b1d3a" />
<rect x="2622.4" y="1414.7" width="169.6" height="10.0" rx="0" fill="#1b1d3a" />
<path d="M2634.395 1376.0 A5 4 0 0 1 2639.395 1380.0 A5 4 0 0 1 2644.395 1376.0 Z" fill="#050505" />
<path d="M2634.395 1555.8 A5 4 0 0 0 2639.395 1551.8 A5 4 0 0 0 2644.395 1555.8 Z" fill="#050505" />
<path d="M2656.9900000000002 1376.0 A5 4 0 0 1 2661.9900000000002 1380.0 A5 4 0 0 1 2666.9900000000002 1376.0 Z" fill="#050505" />
<path d="M2656.9900000000002 1555.8 A5 4 0 0 0 2661.9900000000002 1551.8 A5 4 0 0 0 2666.9900000000002 1555.8 Z" fill="#050505" />
<path d="M2679.585 1376.0 A5 4 0 0 1 2684.585 1380.0 A5 4 0 0 1 2689.585 1376.0 Z" fill="#050505" />
<path d="M2679.585 1555.8 A5 4 0 0 0 2684.585 1551.8 A5 4 0 0 0 2689.585 1555.8 Z" fill="#050505" />
<path d="M2702.1800000000003 1376.0 A5 4 0 0 1 2707.1800000000003 1380.0 A5 4 0 0 1 2712.1800000000003 1376.0 Z" fill="#050505" />
<path d="M2702.1800000000003 1555.8 A5 4 0 0 0 2707.1800000000003 1551.8 A5 4 0 0 0 2712.1800000000003 1555.8 Z" fill="#050505" />
<path d="M2724.775 1376.0 A5 4 0 0 1 2729.775 1380.0 A5 4 0 0 1 2734.775 1376.0 Z" fill="#050505" />
<path d="M2724.775 1555.8 A5 4 0 0 0 2729.775 1551.8 A5 4 0 0 0 2734.775 1555.8 Z" fill="#050505" />
<path d="M2747.37 1376.0 A5 4 0 0 1 2752.37 1380.0 A5 4 0 0 1 2757.37 1376.0 Z" fill="#050505" />
<path d="M2747.37 1555.8 A5 4 0 0 0 2752.37 1551.8 A5 4 0 0 0 2757.37 1555.8 Z" fill="#050505" />
<path d="M2769.965 1376.0 A5 4 0 0 1 2774.965 1380.0 A5 4 0 0 1 2779.965 1376.0 Z" fill="#050505" />
<path d="M2769.965 1555.8 A5 4 0 0 0 2774.965 1551.8 A5 4 0 0 0 2779.965 1555.8 Z" fill="#050505" />
<text x="2627.8" y="1401.9" font-size="23.3" fill="#ffffff" stroke="#ffffff" stroke-width="0.5">Kick</text>
<rect x="2622.8" y="1459.0" width="18.0" height="4.0" rx="0" fill="#2d2f62" />
<rect x="2645.0" y="1459.0" width="18.0" height="4.0" rx="0" fill="#2d2f62" />
<rect x="2667.2" y="1459.0" width="18.0" height="4.0" rx="0" fill="#2d2f62" />
<rect x="2689.4" y="1459.0" width="18.0" height="4.0" rx="0" fill="#2d2f62" />
<rect x="2711.6" y="1459.0" width="18.0" height="4.0" rx="0" fill="#2d2f62" />
<rect x="2733.8" y="1459.0" width="18.0" height="4.0" rx="0" fill="#2d2f62" />
<rect x="2756.0" y="1459.0" width="18.0" height="4.0" rx="0" fill="#2d2f62" />
<rect x="2778.2" y="1459.0" width="11.4" height="4.0" rx="0" fill="#2d2f62" />
<rect x="1162.7" y="1558.9" width="182.0" height="180.8" rx="2.5" fill="#050505" />
<rect x="1164.3" y="1560.5" width="178.8" height="177.6" rx="1.0" fill="#5550e0" />
<rect x="1164.3" y="1560.5" width="178.8" height="39.9" rx="1.0" fill="#4a45d8" />
<rect x="1164.3" y="1592.4" width="178.8" height="4.0" rx="0" fill="#4a45d8" />
<rect x="1166.3" y="1596.4" width="174.8" height="139.7" rx="2.5" fill="#050505" />
<rect x="1166.3" y="1596.4" width="174.8" height="10.0" rx="0" fill="#050505" />
<rect x="1168.3" y="1598.6" width="170.8" height="135.5" rx="2.5" fill="#1b1d3a" />
<rect x="1168.3" y="1598.6" width="170.8" height="10.0" rx="0" fill="#1b1d3a" />
<path d="M1180.4650000000001 1559.9 A5 4 0 0 1 1185.4650000000001 1563.9 A5 4 0 0 1 1190.4650000000001 1559.9 Z" fill="#050505" />
<path d="M1180.4650000000001 1739.7 A5 4 0 0 0 1185.4650000000001 1735.7 A5 4 0 0 0 1190.4650000000001 1739.7 Z" fill="#050505" />
<path d="M1203.21 1559.9 A5 4 0 0 1 1208.21 1563.9 A5 4 0 0 1 1213.21 1559.9 Z" fill="#050505" />
<path d="M1203.21 1739.7 A5 4 0 0 0 1208.21 1735.7 A5 4 0 0 0 1213.21 1739.7 Z" fill="#050505" />
<path d="M1225.955 1559.9 A5 4 0 0 1 1230.955 1563.9 A5 4 0 0 1 1235.955 1559.9 Z" fill="#050505" />
<path d="M1225.955 1739.7 A5 4 0 0 0 1230.955 1735.7 A5 4 0 0 0 1235.955 1739.7 Z" fill="#050505" />
<path d="M1248.7 1559.9 A5 4 0 0 1 1253.7 1563.9 A5 4 0 0 1 1258.7 1559.9 Z" fill="#050505" />
<path d="M1248.7 1739.7 A5 4 0 0 0 1253.7 1735.7 A5 4 0 0 0 1258.7 1739.7 Z" fill="#050505" />
<path d="M1271.4450000000002 1559.9 A5 4 0 0 1 1276.4450000000002 1563.9 A5 4 0 0 1 1281.4450000000002 1559.9 Z" fill="#050505" />
<path d="M1271.4450000000002 1739.7 A5 4 0 0 0 1276.4450000000002 1735.7 A5 4 0 0 0 1281.4450000000002 1739.7 Z" fill="#050505" />
<path d="M1294.19 1559.9 A5 4 0 0 1 1299.19 1563.9 A5 4 0 0 1 1304.19 1559.9 Z" fill="#050505" />
<path d="M1294.19 1739.7 A5 4 0 0 0 1299.19 1735.7 A5 4 0 0 0 1304.19 1739.7 Z" fill="#050505" />
<path d="M1316.935 1559.9 A5 4 0 0 1 1321.935 1563.9 A5 4 0 0 1 1326.935 1559.9 Z" fill="#050505" />
<path d="M1316.935 1739.7 A5 4 0 0 0 1321.935 1735.7 A5 4 0 0 0 1326.935 1739.7 Z" fill="#050505" />
<text x="1173.7" y="1585.8" font-size="23.3" fill="#ffffff" stroke="#ffffff" stroke-width="0.5">Snare</text>
<rect x="1168.7" y="1705.0" width="18.0" height="4.0" rx="0" fill="#2d2f62" />
<rect x="1190.9" y="1705.0" width="18.0" height="4.0" rx="0" fill="#2d2f62" />
<rect x="1213.1" y="1705.0" width="18.0" height="4.0" rx="0" fill="#2d2f62" />
<rect x="1235.3" y="1705.0" width="18.0" height="4.0" rx="0" fill="#2d2f62" />
<rect x="1257.5" y="1705.0" width="18.0" height="4.0" rx="0" fill="#2d2f62" />
<rect x="1279.7" y="1705.0" width="18.0" height="4.0" rx="0" fill="#2d2f62" />
<rect x="1301.9" y="1705.0" width="18.0" height="4.0" rx="0" fill="#2d2f62" />
<rect x="1324.1" y="1705.0" width="12.6" height="4.0" rx="0" fill="#2d2f62" />
<rect x="1344.5" y="1558.9" width="182.0" height="180.8" rx="2.5" fill="#050505" />
<rect x="1346.1" y="1560.5" width="178.8" height="177.6" rx="1.0" fill="#5550e0" />
<rect x="1346.1" y="1560.5" width="178.8" height="39.9" rx="1.0" fill="#4a45d8" />
<rect x="1346.1" y="1592.4" width="178.8" height="4.0" rx="0" fill="#4a45d8" />
<rect x="1348.1" y="1596.4" width="174.8" height="139.7" rx="2.5" fill="#050505" />
<rect x="1348.1" y="1596.4" width="174.8" height="10.0" rx="0" fill="#050505" />
<rect x="1350.1" y="1598.6" width="170.8" height="135.5" rx="2.5" fill="#1b1d3a" />
<rect x="1350.1" y="1598.6" width="170.8" height="10.0" rx="0" fill="#1b1d3a" />
<path d="M1362.225 1559.9 A5 4 0 0 1 1367.225 1563.9 A5 4 0 0 1 1372.225 1559.9 Z" fill="#050505" />
<path d="M1362.225 1739.7 A5 4 0 0 0 1367.225 1735.7 A5 4 0 0 0 1372.225 1739.7 Z" fill="#050505" />
<path d="M1384.97 1559.9 A5 4 0 0 1 1389.97 1563.9 A5 4 0 0 1 1394.97 1559.9 Z" fill="#050505" />
<path d="M1384.97 1739.7 A5 4 0 0 0 1389.97 1735.7 A5 4 0 0 0 1394.97 1739.7 Z" fill="#050505" />
<path d="M1407.7150000000001 1559.9 A5 4 0 0 1 1412.7150000000001 1563.9 A5 4 0 0 1 1417.7150000000001 1559.9 Z" fill="#050505" />
<path d="M1407.7150000000001 1739.7 A5 4 0 0 0 1412.7150000000001 1735.7 A5 4 0 0 0 1417.7150000000001 1739.7 Z" fill="#050505" />
<path d="M1430.46 1559.9 A5 4 0 0 1 1435.46 1563.9 A5 4 0 0 1 1440.46 1559.9 Z" fill="#050505" />
<path d="M1430.46 1739.7 A5 4 0 0 0 1435.46 1735.7 A5 4 0 0 0 1440.46 1739.7 Z" fill="#050505" />
<path d="M1453.205 1559.9 A5 4 0 0 1 1458.205 1563.9 A5 4 0 0 1 1463.205 1559.9 Z" fill="#050505" />
<path d="M1453.205 1739.7 A5 4 0 0 0 1458.205 1735.7 A5 4 0 0 0 1463.205 1739.7 Z" fill="#050505" />
<path d="M1475.95 1559.9 A5 4 0 0 1 1480.95 1563.9 A5 4 0 0 1 1485.95 1559.9 Z" fill="#050505" />
<path d="M1475.95 1739.7 A5 4 0 0 0 1480.95 1735.7 A5 4 0 0 0 1485.95 1739.7 Z" fill="#050505" />
<path d="M1498.6950000000002 1559.9 A5 4 0 0 1 1503.6950000000002 1563.9 A5 4 0 0 1 1508.6950000000002 1559.9 Z" fill="#050505" />
<path d="M1498.6950000000002 1739.7 A5 4 0 0 0 1503.6950000000002 1735.7 A5 4 0 0 0 1508.6950000000002 1739.7 Z" fill="#050505" />
<text x="1355.5" y="1585.8" font-size="23.3" fill="#ffffff" stroke="#ffffff" stroke-width="0.5">Snare</text>
<rect x="1350.5" y="1705.0" width="18.0" height="4.0" rx="0" fill="#2d2f62" />
<rect x="1372.7" y="1705.0" width="18.0" height="4.0" rx="0" fill="#2d2f62" />
<rect x="1394.9" y="1705.0" width="18.0" height="4.0" rx="0" fill="#2d2f62" />
<rect x="1417.1" y="1705.0" width="18.0" height="4.0" rx="0" fill="#2d2f62" />
<rect x="1439.3" y="1705.0" width="18.0" height="4.0" rx="0" fill="#2d2f62" />
<rect x="1461.5" y="1705.0" width="18.0" height="4.0" rx="0" fill="#2d2f62" />
<rect x="1483.7" y="1705.0" width="18.0" height="4.0" rx="0" fill="#2d2f62" />
<rect x="1505.9" y="1705.0" width="12.6" height="4.0" rx="0" fill="#2d2f62" />
<rect x="1526.2" y="1558.9" width="182.0" height="180.8" rx="2.5" fill="#050505" />
<rect x="1527.8" y="1560.5" width="178.8" height="177.6" rx="1.0" fill="#5550e0" />
<rect x="1527.8" y="1560.5" width="178.8" height="39.9" rx="1.0" fill="#4a45d8" />
<rect x="1527.8" y="1592.4" width="178.8" height="4.0" rx="0" fill="#4a45d8" />
<rect x="1529.8" y="1596.4" width="174.8" height="139.7" rx="2.5" fill="#050505" />
<rect x="1529.8" y="1596.4" width="174.8" height="10.0" rx="0" fill="#050505" />
<rect x="1531.8" y="1598.6" width="170.8" height="135.5" rx="2.5" fill="#1b1d3a" />
<rect x="1531.8" y="1598.6" width="170.8" height="10.0" rx="0" fill="#1b1d3a" />
<path d="M1543.9850000000001 1559.9 A5 4 0 0 1 1548.9850000000001 1563.9 A5 4 0 0 1 1553.9850000000001 1559.9 Z" fill="#050505" />
<path d="M1543.9850000000001 1739.7 A5 4 0 0 0 1548.9850000000001 1735.7 A5 4 0 0 0 1553.9850000000001 1739.7 Z" fill="#050505" />
<path d="M1566.73 1559.9 A5 4 0 0 1 1571.73 1563.9 A5 4 0 0 1 1576.73 1559.9 Z" fill="#050505" />
<path d="M1566.73 1739.7 A5 4 0 0 0 1571.73 1735.7 A5 4 0 0 0 1576.73 1739.7 Z" fill="#050505" />
<path d="M1589.475 1559.9 A5 4 0 0 1 1594.475 1563.9 A5 4 0 0 1 1599.475 1559.9 Z" fill="#050505" />
<path d="M1589.475 1739.7 A5 4 0 0 0 1594.475 1735.7 A5 4 0 0 0 1599.475 1739.7 Z" fill="#050505" />
<path d="M1612.22 1559.9 A5 4 0 0 1 1617.22 1563.9 A5 4 0 0 1 1622.22 1559.9 Z" fill="#050505" />
<path d="M1612.22 1739.7 A5 4 0 0 0 1617.22 1735.7 A5 4 0 0 0 1622.22 1739.7 Z" fill="#050505" />
<path d="M1634.9650000000001 1559.9 A5 4 0 0 1 1639.9650000000001 1563.9 A5 4 0 0 1 1644.9650000000001 1559.9 Z" fill="#050505" />
<path d="M1634.9650000000001 1739.7 A5 4 0 0 0 1639.9650000000001 1735.7 A5 4 0 0 0 1644.9650000000001 1739.7 Z" fill="#050505" />
<path d="M1657.71 1559.9 A5 4 0 0 1 1662.71 1563.9 A5 4 0 0 1 1667.71 1559.9 Z" fill="#050505" />
<path d="M1657.71 1739.7 A5 4 0 0 0 1662.71 1735.7 A5 4 0 0 0 1667.71 1739.7 Z" fill="#050505" />
<path d="M1680.455 1559.9 A5 4 0 0 1 1685.455 1563.9 A5 4 0 0 1 1690.455 1559.9 Z" fill="#050505" />
<path d="M1680.455 1739.7 A5 4 0 0 0 1685.455 1735.7 A5 4 0 0 0 1690.455 1739.7 Z" fill="#050505" />
<text x="1537.2" y="1585.8" font-size="23.3" fill="#ffffff" stroke="#ffffff" stroke-width="0.5">Snare</text>
<rect x="1532.2" y="1705.0" width="18.0" height="4.0" rx="0" fill="#2d2f62" />
<rect x="1554.4" y="1705.0" width="18.0" height="4.0" rx="0" fill="#2d2f62" />
<rect x="1576.6" y="1705.0" width="18.0" height="4.0" rx="0" fill="#2d2f62" />
<rect x="1598.8" y="1705.0" width="18.0" height="4.0" rx="0" fill="#2d2f62" />
<rect x="1621.0" y="1705.0" width="18.0" height="4.0" rx="0" fill="#2d2f62" />
<rect x="1643.2" y="1705.0" width="18.0" height="4.0" rx="0" fill="#2d2f62" />
<rect x="1665.4" y="1705.0" width="18.0" height="4.0" rx="0" fill="#2d2f62" />
<rect x="1687.6" y="1705.0" width="12.6" height="4.0" rx="0" fill="#2d2f62" />
<rect x="1708.0" y="1558.9" width="182.0" height="180.8" rx="2.5" fill="#050505" />
<rect x="1709.6" y="1560.5" width="178.8" height="177.6" rx="1.0" fill="#5550e0" />
<rect x="1709.6" y="1560.5" width="178.8" height="39.9" rx="1.0" fill="#4a45d8" />
<rect x="1709.6" y="1592.4" width="178.8" height="4.0" rx="0" fill="#4a45d8" />
<rect x="1711.6" y="1596.4" width="174.8" height="139.7" rx="2.5" fill="#050505" />
<rect x="1711.6" y="1596.4" width="174.8" height="10.0" rx="0" fill="#050505" />
<rect x="1713.6" y="1598.6" width="170.8" height="135.5" rx="2.5" fill="#1b1d3a" />
<rect x="1713.6" y="1598.6" width="170.8" height="10.0" rx="0" fill="#1b1d3a" />
<path d="M1725.745 1559.9 A5 4 0 0 1 1730.745 1563.9 A5 4 0 0 1 1735.745 1559.9 Z" fill="#050505" />
<path d="M1725.745 1739.7 A5 4 0 0 0 1730.745 1735.7 A5 4 0 0 0 1735.745 1739.7 Z" fill="#050505" />
<path d="M1748.49 1559.9 A5 4 0 0 1 1753.49 1563.9 A5 4 0 0 1 1758.49 1559.9 Z" fill="#050505" />
<path d="M1748.49 1739.7 A5 4 0 0 0 1753.49 1735.7 A5 4 0 0 0 1758.49 1739.7 Z" fill="#050505" />
<path d="M1771.2350000000001 1559.9 A5 4 0 0 1 1776.2350000000001 1563.9 A5 4 0 0 1 1781.2350000000001 1559.9 Z" fill="#050505" />
<path d="M1771.2350000000001 1739.7 A5 4 0 0 0 1776.2350000000001 1735.7 A5 4 0 0 0 1781.2350000000001 1739.7 Z" fill="#050505" />
<path d="M1793.98 1559.9 A5 4 0 0 1 1798.98 1563.9 A5 4 0 0 1 1803.98 1559.9 Z" fill="#050505" />
<path d="M1793.98 1739.7 A5 4 0 0 0 1798.98 1735.7 A5 4 0 0 0 1803.98 1739.7 Z" fill="#050505" />
<path d="M1816.725 1559.9 A5 4 0 0 1 1821.725 1563.9 A5 4 0 0 1 1826.725 1559.9 Z" fill="#050505" />
<path d="M1816.725 1739.7 A5 4 0 0 0 1821.725 1735.7 A5 4 0 0 0 1826.725 1739.7 Z" fill="#050505" />
<path d="M1839.47 1559.9 A5 4 0 0 1 1844.47 1563.9 A5 4 0 0 1 1849.47 1559.9 Z" fill="#050505" />
<path d="M1839.47 1739.7 A5 4 0 0 0 1844.47 1735.7 A5 4 0 0 0 1849.47 1739.7 Z" fill="#050505" />
<path d="M1862.2150000000001 1559.9 A5 4 0 0 1 1867.2150000000001 1563.9 A5 4 0 0 1 1872.2150000000001 1559.9 Z" fill="#050505" />
<path d="M1862.2150000000001 1739.7 A5 4 0 0 0 1867.2150000000001 1735.7 A5 4 0 0 0 1872.2150000000001 1739.7 Z" fill="#050505" />
<text x="1719.0" y="1585.8" font-size="23.3" fill="#ffffff" stroke="#ffffff" stroke-width="0.5">Snare</text>
<rect x="1714.0" y="1705.0" width="18.0" height="4.0" rx="0" fill="#2d2f62" />
<rect x="1736.2" y="1705.0" width="18.0" height="4.0" rx="0" fill="#2d2f62" />
<rect x="1758.4" y="1705.0" width="18.0" height="4.0" rx="0" fill="#2d2f62" />
<rect x="1780.6" y="1705.0" width="18.0" height="4.0" rx="0" fill="#2d2f62" />
<rect x="1802.8" y="1705.0" width="18.0" height="4.0" rx="0" fill="#2d2f62" />
<rect x="1825.0" y="1705.0" width="18.0" height="4.0" rx="0" fill="#2d2f62" />
<rect x="1847.2" y="1705.0" width="18.0" height="4.0" rx="0" fill="#2d2f62" />
<rect x="1869.4" y="1705.0" width="12.6" height="4.0" rx="0" fill="#2d2f62" />
<rect x="1889.8" y="1558.9" width="182.0" height="180.8" rx="2.5" fill="#050505" />
<rect x="1891.4" y="1560.5" width="178.8" height="177.6" rx="1.0" fill="#5550e0" />
<rect x="1891.4" y="1560.5" width="178.8" height="39.9" rx="1.0" fill="#4a45d8" />
<rect x="1891.4" y="1592.4" width="178.8" height="4.0" rx="0" fill="#4a45d8" />
<rect x="1893.4" y="1596.4" width="174.8" height="139.7" rx="2.5" fill="#050505" />
<rect x="1893.4" y="1596.4" width="174.8" height="10.0" rx="0" fill="#050505" />
<rect x="1895.4" y="1598.6" width="170.8" height="135.5" rx="2.5" fill="#1b1d3a" />
<rect x="1895.4" y="1598.6" width="170.8" height="10.0" rx="0" fill="#1b1d3a" />
<path d="M1907.5049999999999 1559.9 A5 4 0 0 1 1912.5049999999999 1563.9 A5 4 0 0 1 1917.5049999999999 1559.9 Z" fill="#050505" />
<path d="M1907.5049999999999 1739.7 A5 4 0 0 0 1912.5049999999999 1735.7 A5 4 0 0 0 1917.5049999999999 1739.7 Z" fill="#050505" />
<path d="M1930.25 1559.9 A5 4 0 0 1 1935.25 1563.9 A5 4 0 0 1 1940.25 1559.9 Z" fill="#050505" />
<path d="M1930.25 1739.7 A5 4 0 0 0 1935.25 1735.7 A5 4 0 0 0 1940.25 1739.7 Z" fill="#050505" />
<path d="M1952.995 1559.9 A5 4 0 0 1 1957.995 1563.9 A5 4 0 0 1 1962.995 1559.9 Z" fill="#050505" />
<path d="M1952.995 1739.7 A5 4 0 0 0 1957.995 1735.7 A5 4 0 0 0 1962.995 1739.7 Z" fill="#050505" />
<path d="M1975.7399999999998 1559.9 A5 4 0 0 1 1980.7399999999998 1563.9 A5 4 0 0 1 1985.7399999999998 1559.9 Z" fill="#050505" />
<path d="M1975.7399999999998 1739.7 A5 4 0 0 0 1980.7399999999998 1735.7 A5 4 0 0 0 1985.7399999999998 1739.7 Z" fill="#050505" />
<path d="M1998.485 1559.9 A5 4 0 0 1 2003.485 1563.9 A5 4 0 0 1 2008.485 1559.9 Z" fill="#050505" />
<path d="M1998.485 1739.7 A5 4 0 0 0 2003.485 1735.7 A5 4 0 0 0 2008.485 1739.7 Z" fill="#050505" />
<path d="M2021.2299999999998 1559.9 A5 4 0 0 1 2026.2299999999998 1563.9 A5 4 0 0 1 2031.2299999999998 1559.9 Z" fill="#050505" />
<path d="M2021.2299999999998 1739.7 A5 4 0 0 0 2026.2299999999998 1735.7 A5 4 0 0 0 2031.2299999999998 1739.7 Z" fill="#050505" />
<path d="M2043.975 1559.9 A5 4 0 0 1 2048.975 1563.9 A5 4 0 0 1 2053.975 1559.9 Z" fill="#050505" />
<path d="M2043.975 1739.7 A5 4 0 0 0 2048.975 1735.7 A5 4 0 0 0 2053.975 1739.7 Z" fill="#050505" />
<text x="1900.8" y="1585.8" font-size="23.3" fill="#ffffff" stroke="#ffffff" stroke-width="0.5">Snare</text>
<rect x="1895.8" y="1705.0" width="18.0" height="4.0" rx="0" fill="#2d2f62" />
<rect x="1918.0" y="1705.0" width="18.0" height="4.0" rx="0" fill="#2d2f62" />
<rect x="1940.2" y="1705.0" width="18.0" height="4.0" rx="0" fill="#2d2f62" />
<rect x="1962.4" y="1705.0" width="18.0" height="4.0" rx="0" fill="#2d2f62" />
<rect x="1984.6" y="1705.0" width="18.0" height="4.0" rx="0" fill="#2d2f62" />
<rect x="2006.8" y="1705.0" width="18.0" height="4.0" rx="0" fill="#2d2f62" />
<rect x="2029.0" y="1705.0" width="18.0" height="4.0" rx="0" fill="#2d2f62" />
<rect x="2051.2" y="1705.0" width="12.6" height="4.0" rx="0" fill="#2d2f62" />
<rect x="2071.5" y="1558.9" width="182.0" height="180.8" rx="2.5" fill="#050505" />
<rect x="2073.1" y="1560.5" width="178.8" height="177.6" rx="1.0" fill="#5550e0" />
<rect x="2073.1" y="1560.5" width="178.8" height="39.9" rx="1.0" fill="#4a45d8" />
<rect x="2073.1" y="1592.4" width="178.8" height="4.0" rx="0" fill="#4a45d8" />
<rect x="2075.1" y="1596.4" width="174.8" height="139.7" rx="2.5" fill="#050505" />
<rect x="2075.1" y="1596.4" width="174.8" height="10.0" rx="0" fill="#050505" />
<rect x="2077.1" y="1598.6" width="170.8" height="135.5" rx="2.5" fill="#1b1d3a" />
<rect x="2077.1" y="1598.6" width="170.8" height="10.0" rx="0" fill="#1b1d3a" />
<path d="M2089.265 1559.9 A5 4 0 0 1 2094.265 1563.9 A5 4 0 0 1 2099.265 1559.9 Z" fill="#050505" />
<path d="M2089.265 1739.7 A5 4 0 0 0 2094.265 1735.7 A5 4 0 0 0 2099.265 1739.7 Z" fill="#050505" />
<path d="M2112.0099999999998 1559.9 A5 4 0 0 1 2117.0099999999998 1563.9 A5 4 0 0 1 2122.0099999999998 1559.9 Z" fill="#050505" />
<path d="M2112.0099999999998 1739.7 A5 4 0 0 0 2117.0099999999998 1735.7 A5 4 0 0 0 2122.0099999999998 1739.7 Z" fill="#050505" />
<path d="M2134.7549999999997 1559.9 A5 4 0 0 1 2139.7549999999997 1563.9 A5 4 0 0 1 2144.7549999999997 1559.9 Z" fill="#050505" />
<path d="M2134.7549999999997 1739.7 A5 4 0 0 0 2139.7549999999997 1735.7 A5 4 0 0 0 2144.7549999999997 1739.7 Z" fill="#050505" />
<path d="M2157.5 1559.9 A5 4 0 0 1 2162.5 1563.9 A5 4 0 0 1 2167.5 1559.9 Z" fill="#050505" />
<path d="M2157.5 1739.7 A5 4 0 0 0 2162.5 1735.7 A5 4 0 0 0 2167.5 1739.7 Z" fill="#050505" />
<path d="M2180.245 1559.9 A5 4 0 0 1 2185.245 1563.9 A5 4 0 0 1 2190.245 1559.9 Z" fill="#050505" />
<path d="M2180.245 1739.7 A5 4 0 0 0 2185.245 1735.7 A5 4 0 0 0 2190.245 1739.7 Z" fill="#050505" />
<path d="M2202.99 1559.9 A5 4 0 0 1 2207.99 1563.9 A5 4 0 0 1 2212.99 1559.9 Z" fill="#050505" />
<path d="M2202.99 1739.7 A5 4 0 0 0 2207.99 1735.7 A5 4 0 0 0 2212.99 1739.7 Z" fill="#050505" />
<path d="M2225.7349999999997 1559.9 A5 4 0 0 1 2230.7349999999997 1563.9 A5 4 0 0 1 2235.7349999999997 1559.9 Z" fill="#050505" />
<path d="M2225.7349999999997 1739.7 A5 4 0 0 0 2230.7349999999997 1735.7 A5 4 0 0 0 2235.7349999999997 1739.7 Z" fill="#050505" />
<text x="2082.5" y="1585.8" font-size="23.3" fill="#ffffff" stroke="#ffffff" stroke-width="0.5">Snare</text>
<rect x="2077.5" y="1705.0" width="18.0" height="4.0" rx="0" fill="#2d2f62" />
<rect x="2099.7" y="1705.0" width="18.0" height="4.0" rx="0" fill="#2d2f62" />
<rect x="2121.9" y="1705.0" width="18.0" height="4.0" rx="0" fill="#2d2f62" />
<rect x="2144.1" y="1705.0" width="18.0" height="4.0" rx="0" fill="#2d2f62" />
<rect x="2166.3" y="1705.0" width="18.0" height="4.0" rx="0" fill="#2d2f62" />
<rect x="2188.5" y="1705.0" width="18.0" height="4.0" rx="0" fill="#2d2f62" />
<rect x="2210.7" y="1705.0" width="18.0" height="4.0" rx="0" fill="#2d2f62" />
<rect x="2232.9" y="1705.0" width="12.6" height="4.0" rx="0" fill="#2d2f62" />
<rect x="2253.3" y="1558.9" width="182.0" height="180.8" rx="2.5" fill="#050505" />
<rect x="2254.9" y="1560.5" width="178.8" height="177.6" rx="1.0" fill="#5550e0" />
<rect x="2254.9" y="1560.5" width="178.8" height="39.9" rx="1.0" fill="#4a45d8" />
<rect x="2254.9" y="1592.4" width="178.8" height="4.0" rx="0" fill="#4a45d8" />
<rect x="2256.9" y="1596.4" width="174.8" height="139.7" rx="2.5" fill="#050505" />
<rect x="2256.9" y="1596.4" width="174.8" height="10.0" rx="0" fill="#050505" />
<rect x="2258.9" y="1598.6" width="170.8" height="135.5" rx="2.5" fill="#1b1d3a" />
<rect x="2258.9" y="1598.6" width="170.8" height="10.0" rx="0" fill="#1b1d3a" />
<path d="M2271.0249999999996 1559.9 A5 4 0 0 1 2276.0249999999996 1563.9 A5 4 0 0 1 2281.0249999999996 1559.9 Z" fill="#050505" />
<path d="M2271.0249999999996 1739.7 A5 4 0 0 0 2276.0249999999996 1735.7 A5 4 0 0 0 2281.0249999999996 1739.7 Z" fill="#050505" />
<path d="M2293.7699999999995 1559.9 A5 4 0 0 1 2298.7699999999995 1563.9 A5 4 0 0 1 2303.7699999999995 1559.9 Z" fill="#050505" />
<path d="M2293.7699999999995 1739.7 A5 4 0 0 0 2298.7699999999995 1735.7 A5 4 0 0 0 2303.7699999999995 1739.7 Z" fill="#050505" />
<path d="M2316.515 1559.9 A5 4 0 0 1 2321.515 1563.9 A5 4 0 0 1 2326.515 1559.9 Z" fill="#050505" />
<path d="M2316.515 1739.7 A5 4 0 0 0 2321.515 1735.7 A5 4 0 0 0 2326.515 1739.7 Z" fill="#050505" />
<path d="M2339.2599999999998 1559.9 A5 4 0 0 1 2344.2599999999998 1563.9 A5 4 0 0 1 2349.2599999999998 1559.9 Z" fill="#050505" />
<path d="M2339.2599999999998 1739.7 A5 4 0 0 0 2344.2599999999998 1735.7 A5 4 0 0 0 2349.2599999999998 1739.7 Z" fill="#050505" />
<path d="M2362.0049999999997 1559.9 A5 4 0 0 1 2367.0049999999997 1563.9 A5 4 0 0 1 2372.0049999999997 1559.9 Z" fill="#050505" />
<path d="M2362.0049999999997 1739.7 A5 4 0 0 0 2367.0049999999997 1735.7 A5 4 0 0 0 2372.0049999999997 1739.7 Z" fill="#050505" />
<path d="M2384.75 1559.9 A5 4 0 0 1 2389.75 1563.9 A5 4 0 0 1 2394.75 1559.9 Z" fill="#050505" />
<path d="M2384.75 1739.7 A5 4 0 0 0 2389.75 1735.7 A5 4 0 0 0 2394.75 1739.7 Z" fill="#050505" />
<path d="M2407.495 1559.9 A5 4 0 0 1 2412.495 1563.9 A5 4 0 0 1 2417.495 1559.9 Z" fill="#050505" />
<path d="M2407.495 1739.7 A5 4 0 0 0 2412.495 1735.7 A5 4 0 0 0 2417.495 1739.7 Z" fill="#050505" />
<text x="2264.3" y="1585.8" font-size="23.3" fill="#ffffff" stroke="#ffffff" stroke-width="0.5">Snare</text>
<rect x="2259.3" y="1705.0" width="18.0" height="4.0" rx="0" fill="#2d2f62" />
<rect x="2281.5" y="1705.0" width="18.0" height="4.0" rx="0" fill="#2d2f62" />
<rect x="2303.7" y="1705.0" width="18.0" height="4.0" rx="0" fill="#2d2f62" />
<rect x="2325.9" y="1705.0" width="18.0" height="4.0" rx="0" fill="#2d2f62" />
<rect x="2348.1" y="1705.0" width="18.0" height="4.0" rx="0" fill="#2d2f62" />
<rect x="2370.3" y="1705.0" width="18.0" height="4.0" rx="0" fill="#2d2f62" />
<rect x="2392.5" y="1705.0" width="18.0" height="4.0" rx="0" fill="#2d2f62" />
<rect x="2414.7" y="1705.0" width="12.6" height="4.0" rx="0" fill="#2d2f62" />
<rect x="2435.0" y="1558.9" width="182.0" height="180.8" rx="2.5" fill="#050505" />
<rect x="2436.6" y="1560.5" width="178.8" height="177.6" rx="1.0" fill="#5550e0" />
<rect x="2436.6" y="1560.5" width="178.8" height="39.9" rx="1.0" fill="#4a45d8" />
<rect x="2436.6" y="1592.4" width="178.8" height="4.0" rx="0" fill="#4a45d8" />
<rect x="2438.6" y="1596.4" width="174.8" height="139.7" rx="2.5" fill="#050505" />
<rect x="2438.6" y="1596.4" width="174.8" height="10.0" rx="0" fill="#050505" />
<rect x="2440.6" y="1598.6" width="170.8" height="135.5" rx="2.5" fill="#1b1d3a" />
<rect x="2440.6" y="1598.6" width="170.8" height="10.0" rx="0" fill="#1b1d3a" />
<path d="M2452.785 1559.9 A5 4 0 0 1 2457.785 1563.9 A5 4 0 0 1 2462.785 1559.9 Z" fill="#050505" />
<path d="M2452.785 1739.7 A5 4 0 0 0 2457.785 1735.7 A5 4 0 0 0 2462.785 1739.7 Z" fill="#050505" />
<path d="M2475.5299999999997 1559.9 A5 4 0 0 1 2480.5299999999997 1563.9 A5 4 0 0 1 2485.5299999999997 1559.9 Z" fill="#050505" />
<path d="M2475.5299999999997 1739.7 A5 4 0 0 0 2480.5299999999997 1735.7 A5 4 0 0 0 2485.5299999999997 1739.7 Z" fill="#050505" />
<path d="M2498.275 1559.9 A5 4 0 0 1 2503.275 1563.9 A5 4 0 0 1 2508.275 1559.9 Z" fill="#050505" />
<path d="M2498.275 1739.7 A5 4 0 0 0 2503.275 1735.7 A5 4 0 0 0 2508.275 1739.7 Z" fill="#050505" />
<path d="M2521.02 1559.9 A5 4 0 0 1 2526.02 1563.9 A5 4 0 0 1 2531.02 1559.9 Z" fill="#050505" />
<path d="M2521.02 1739.7 A5 4 0 0 0 2526.02 1735.7 A5 4 0 0 0 2531.02 1739.7 Z" fill="#050505" />
<path d="M2543.765 1559.9 A5 4 0 0 1 2548.765 1563.9 A5 4 0 0 1 2553.765 1559.9 Z" fill="#050505" />
<path d="M2543.765 1739.7 A5 4 0 0 0 2548.765 1735.7 A5 4 0 0 0 2553.765 1739.7 Z" fill="#050505" />
<path d="M2566.51 1559.9 A5 4 0 0 1 2571.51 1563.9 A5 4 0 0 1 2576.51 1559.9 Z" fill="#050505" />
<path d="M2566.51 1739.7 A5 4 0 0 0 2571.51 1735.7 A5 4 0 0 0 2576.51 1739.7 Z" fill="#050505" />
<path d="M2589.255 1559.9 A5 4 0 0 1 2594.255 1563.9 A5 4 0 0 1 2599.255 1559.9 Z" fill="#050505" />
<path d="M2589.255 1739.7 A5 4 0 0 0 2594.255 1735.7 A5 4 0 0 0 2599.255 1739.7 Z" fill="#050505" />
<text x="2446.0" y="1585.8" font-size="23.3" fill="#ffffff" stroke="#ffffff" stroke-width="0.5">Snare</text>
<rect x="2441.0" y="1705.0" width="18.0" height="4.0" rx="0" fill="#2d2f62" />
<rect x="2463.2" y="1705.0" width="18.0" height="4.0" rx="0" fill="#2d2f62" />
<rect x="2485.4" y="1705.0" width="18.0" height="4.0" rx="0" fill="#2d2f62" />
<rect x="2507.6" y="1705.0" width="18.0" height="4.0" rx="0" fill="#2d2f62" />
<rect x="2529.8" y="1705.0" width="18.0" height="4.0" rx="0" fill="#2d2f62" />
<rect x="2552.0" y="1705.0" width="18.0" height="4.0" rx="0" fill="#2d2f62" />
<rect x="2574.2" y="1705.0" width="18.0" height="4.0" rx="0" fill="#2d2f62" />
<rect x="2596.4" y="1705.0" width="12.6" height="4.0" rx="0" fill="#2d2f62" />
<rect x="2616.8" y="1558.9" width="180.8" height="180.8" rx="2.5" fill="#050505" />
<rect x="2618.4" y="1560.5" width="177.6" height="177.6" rx="1.0" fill="#5550e0" />
<rect x="2618.4" y="1560.5" width="177.6" height="39.9" rx="1.0" fill="#4a45d8" />
<rect x="2618.4" y="1592.4" width="177.6" height="4.0" rx="0" fill="#4a45d8" />
<rect x="2620.4" y="1596.4" width="173.6" height="139.7" rx="2.5" fill="#050505" />
<rect x="2620.4" y="1596.4" width="173.6" height="10.0" rx="0" fill="#050505" />
<rect x="2622.4" y="1598.6" width="169.6" height="135.5" rx="2.5" fill="#1b1d3a" />
<rect x="2622.4" y="1598.6" width="169.6" height="10.0" rx="0" fill="#1b1d3a" />
<path d="M2634.395 1559.9 A5 4 0 0 1 2639.395 1563.9 A5 4 0 0 1 2644.395 1559.9 Z" fill="#050505" />
<path d="M2634.395 1739.7 A5 4 0 0 0 2639.395 1735.7 A5 4 0 0 0 2644.395 1739.7 Z" fill="#050505" />
<path d="M2656.9900000000002 1559.9 A5 4 0 0 1 2661.9900000000002 1563.9 A5 4 0 0 1 2666.9900000000002 1559.9 Z" fill="#050505" />
<path d="M2656.9900000000002 1739.7 A5 4 0 0 0 2661.9900000000002 1735.7 A5 4 0 0 0 2666.9900000000002 1739.7 Z" fill="#050505" />
<path d="M2679.585 1559.9 A5 4 0 0 1 2684.585 1563.9 A5 4 0 0 1 2689.585 1559.9 Z" fill="#050505" />
<path d="M2679.585 1739.7 A5 4 0 0 0 2684.585 1735.7 A5 4 0 0 0 2689.585 1739.7 Z" fill="#050505" />
<path d="M2702.1800000000003 1559.9 A5 4 0 0 1 2707.1800000000003 1563.9 A5 4 0 0 1 2712.1800000000003 1559.9 Z" fill="#050505" />
<path d="M2702.1800000000003 1739.7 A5 4 0 0 0 2707.1800000000003 1735.7 A5 4 0 0 0 2712.1800000000003 1739.7 Z" fill="#050505" />
<path d="M2724.775 1559.9 A5 4 0 0 1 2729.775 1563.9 A5 4 0 0 1 2734.775 1559.9 Z" fill="#050505" />
<path d="M2724.775 1739.7 A5 4 0 0 0 2729.775 1735.7 A5 4 0 0 0 2734.775 1739.7 Z" fill="#050505" />
<path d="M2747.37 1559.9 A5 4 0 0 1 2752.37 1563.9 A5 4 0 0 1 2757.37 1559.9 Z" fill="#050505" />
<path d="M2747.37 1739.7 A5 4 0 0 0 2752.37 1735.7 A5 4 0 0 0 2757.37 1739.7 Z" fill="#050505" />
<path d="M2769.965 1559.9 A5 4 0 0 1 2774.965 1563.9 A5 4 0 0 1 2779.965 1559.9 Z" fill="#050505" />
<path d="M2769.965 1739.7 A5 4 0 0 0 2774.965 1735.7 A5 4 0 0 0 2779.965 1739.7 Z" fill="#050505" />
<text x="2627.8" y="1585.8" font-size="23.3" fill="#ffffff" stroke="#ffffff" stroke-width="0.5">Snare</text>
<rect x="2622.8" y="1705.0" width="18.0" height="4.0" rx="0" fill="#2d2f62" />
<rect x="2645.0" y="1705.0" width="18.0" height="4.0" rx="0" fill="#2d2f62" />
<rect x="2667.2" y="1705.0" width="18.0" height="4.0" rx="0" fill="#2d2f62" />
<rect x="2689.4" y="1705.0" width="18.0" height="4.0" rx="0" fill="#2d2f62" />
<rect x="2711.6" y="1705.0" width="18.0" height="4.0" rx="0" fill="#2d2f62" />
<rect x="2733.8" y="1705.0" width="18.0" height="4.0" rx="0" fill="#2d2f62" />
<rect x="2756.0" y="1705.0" width="18.0" height="4.0" rx="0" fill="#2d2f62" />
<rect x="2778.2" y="1705.0" width="11.4" height="4.0" rx="0" fill="#2d2f62" />
<rect x="1139.5" y="1743.5" width="23.1" height="118.8" rx="6" fill="#050505" />
<rect x="1141.1" y="1745.1" width="19.9" height="115.2" rx="5" fill="#4a45d8" />
<rect x="1143.1" y="1780.3" width="15.9" height="78.0" rx="3" fill="#050505" />
<rect x="1145.1" y="1782.3" width="11.9" height="74.0" rx="2" fill="#1f2142" />
<rect x="1686.5" y="1743.5" width="22.0" height="118.8" rx="6" fill="#050505" />
<rect x="1688.1" y="1745.1" width="18.8" height="115.2" rx="5" fill="#4a45d8" />
<rect x="1690.1" y="1780.3" width="14.8" height="78.0" rx="3" fill="#050505" />
<rect x="1692.1" y="1782.3" width="10.8" height="74.0" rx="2" fill="#1f2142" />
<rect x="2412.5" y="1743.5" width="23.5" height="118.8" rx="6" fill="#050505" />
<rect x="2414.1" y="1745.1" width="20.3" height="115.2" rx="5" fill="#4a45d8" />
<rect x="2416.1" y="1780.3" width="16.3" height="78.0" rx="3" fill="#050505" />
<rect x="2418.1" y="1782.3" width="12.3" height="74.0" rx="2" fill="#1f2142" />
<line x1="1140.0" y1="378.5" x2="2796.0" y2="378.5" stroke="rgba(150,140,80,0.45)" stroke-width="2" />
<line x1="1140.0" y1="722.0" x2="2796.0" y2="722.0" stroke="rgba(150,140,80,0.45)" stroke-width="2" />
<line x1="1140.0" y1="925.4" x2="2796.0" y2="925.4" stroke="rgba(150,140,80,0.45)" stroke-width="2" />
<line x1="1140.0" y1="548.0" x2="2912.0" y2="548.0" stroke="#4a4744" stroke-width="2" />
<text x="1144.5" y="538.3" font-size="20" fill="rgba(120,120,70,0.45)" font-weight="bold">-1.5 dB</text>
<polygon points="1140.7,452.6 1140.7,329.2 1327.2,329.2 1345.0,390.6 1450.8,381.0 1502.4,367.2 1528.8,329.2 2052.6,329.0 2073.2,391.0 2179.2,380.8 2229.2,367.2 2254.8,329.0 2616.5,329.0 2938.0,329.0 2938.0,452.6" fill="rgba(110,160,230,0.075)"/>
<polyline points="1140.7,329.2 1327.2,329.2 1345.0,390.6 1450.8,381.0 1502.4,367.2 1528.8,329.2 2052.6,329.0 2073.2,391.0 2179.2,380.8 2229.2,367.2 2254.8,329.0 2616.5,329.0 2938.0,329.0" fill="none" stroke="rgba(0,0,0,0.55)" stroke-width="5" stroke-linejoin="round"/>
<polyline points="1140.7,329.2 1327.2,329.2 1345.0,390.6 1450.8,381.0 1502.4,367.2 1528.8,329.2 2052.6,329.0 2073.2,391.0 2179.2,380.8 2229.2,367.2 2254.8,329.0 2616.5,329.0 2938.0,329.0" fill="none" stroke="#78bbfa" stroke-width="3.1" stroke-linejoin="round"/>
<circle cx="1140.7" cy="329.2" r="5.6" fill="#78bbfa" stroke="#1a2a3a" stroke-width="1.3"/>
<circle cx="1327.2" cy="329.2" r="5.6" fill="#78bbfa" stroke="#1a2a3a" stroke-width="1.3"/>
<circle cx="1345.0" cy="390.6" r="5.6" fill="#78bbfa" stroke="#1a2a3a" stroke-width="1.3"/>
<circle cx="1450.8" cy="381.0" r="5.6" fill="#78bbfa" stroke="#1a2a3a" stroke-width="1.3"/>
<circle cx="1502.4" cy="367.2" r="5.6" fill="#78bbfa" stroke="#1a2a3a" stroke-width="1.3"/>
<circle cx="1528.8" cy="329.2" r="5.6" fill="#78bbfa" stroke="#1a2a3a" stroke-width="1.3"/>
<circle cx="2052.6" cy="329.0" r="5.6" fill="#78bbfa" stroke="#1a2a3a" stroke-width="1.3"/>
<circle cx="2073.2" cy="391.0" r="5.6" fill="#78bbfa" stroke="#1a2a3a" stroke-width="1.3"/>
<circle cx="2179.2" cy="380.8" r="5.6" fill="#78bbfa" stroke="#1a2a3a" stroke-width="1.3"/>
<circle cx="2229.2" cy="367.2" r="5.6" fill="#78bbfa" stroke="#1a2a3a" stroke-width="1.3"/>
<circle cx="2254.8" cy="329.0" r="5.6" fill="#78bbfa" stroke="#1a2a3a" stroke-width="1.3"/>
<circle cx="2616.5" cy="329.0" r="5.6" fill="#78bbfa" stroke="#1a2a3a" stroke-width="1.3"/>
<text x="1144.5" y="353.0" font-size="22" fill="#78bbfa" font-weight="bold" stroke="rgba(20,25,35,0.55)" stroke-width="1.6" paint-order="stroke">11400 Hz</text>
<text x="1331.0" y="353.0" font-size="22" fill="#78bbfa" font-weight="bold" stroke="rgba(20,25,35,0.55)" stroke-width="1.6" paint-order="stroke">11400</text>
<text x="1348.7" y="415.0" font-size="22" fill="#78bbfa" font-weight="bold" stroke="rgba(20,25,35,0.55)" stroke-width="1.6" paint-order="stroke">450</text>
<text x="1454.6" y="405.0" font-size="22" fill="#78bbfa" font-weight="bold" stroke="rgba(20,25,35,0.55)" stroke-width="1.6" paint-order="stroke">730 Hz</text>
<text x="1532.7" y="353.0" font-size="22" fill="#78bbfa" font-weight="bold" stroke="rgba(20,25,35,0.55)" stroke-width="1.6" paint-order="stroke">11400</text>
<text x="2058.0" y="353.0" font-size="22" fill="#78bbfa" font-weight="bold" stroke="rgba(20,25,35,0.55)" stroke-width="1.6" paint-order="stroke">11400 Hz</text>
<text x="2077.0" y="415.0" font-size="22" fill="#78bbfa" font-weight="bold" stroke="rgba(20,25,35,0.55)" stroke-width="1.6" paint-order="stroke">450</text>
<text x="2233.0" y="391.0" font-size="22" fill="#78bbfa" font-weight="bold" stroke="rgba(20,25,35,0.55)" stroke-width="1.6" paint-order="stroke">1650</text>
<text x="2258.6" y="353.0" font-size="22" fill="#78bbfa" font-weight="bold" stroke="rgba(20,25,35,0.55)" stroke-width="1.6" paint-order="stroke">11400</text>
<text x="2621.0" y="357.0" font-size="22" fill="#78bbfa" font-weight="bold" stroke="rgba(20,25,35,0.55)" stroke-width="1.6" paint-order="stroke">11400 Hz</text>
<polygon points="1140.7,1004.3 1140.7,872.6 1314.0,872.6 1343.0,938.6 1528.8,868.9 1708.5,871.0 2043.0,872.6 2070.6,938.6 2074.3,870.8 2436.8,869.0 2617.0,873.0 2938.0,873.0 2938.0,1004.3" fill="rgba(110,160,230,0.075)"/>
<polyline points="1140.7,872.6 1314.0,872.6 1343.0,938.6 1528.8,868.9 1708.5,871.0 2043.0,872.6 2070.6,938.6 2074.3,870.8 2436.8,869.0 2617.0,873.0 2938.0,873.0" fill="none" stroke="rgba(0,0,0,0.55)" stroke-width="5" stroke-linejoin="round"/>
<polyline points="1140.7,872.6 1314.0,872.6 1343.0,938.6 1528.8,868.9 1708.5,871.0 2043.0,872.6 2070.6,938.6 2074.3,870.8 2436.8,869.0 2617.0,873.0 2938.0,873.0" fill="none" stroke="#78bbfa" stroke-width="3.1" stroke-linejoin="round"/>
<circle cx="1140.7" cy="872.6" r="5.6" fill="#78bbfa" stroke="#1a2a3a" stroke-width="1.3"/>
<circle cx="1314.0" cy="872.6" r="5.6" fill="#78bbfa" stroke="#1a2a3a" stroke-width="1.3"/>
<circle cx="1343.0" cy="938.6" r="5.6" fill="#78bbfa" stroke="#1a2a3a" stroke-width="1.3"/>
<circle cx="1528.8" cy="868.9" r="5.6" fill="#78bbfa" stroke="#1a2a3a" stroke-width="1.3"/>
<circle cx="1708.5" cy="871.0" r="5.6" fill="#78bbfa" stroke="#1a2a3a" stroke-width="1.3"/>
<circle cx="2043.0" cy="872.6" r="5.6" fill="#78bbfa" stroke="#1a2a3a" stroke-width="1.3"/>
<circle cx="2070.6" cy="938.6" r="5.6" fill="#78bbfa" stroke="#1a2a3a" stroke-width="1.3"/>
<circle cx="2074.3" cy="870.8" r="5.6" fill="#78bbfa" stroke="#1a2a3a" stroke-width="1.3"/>
<circle cx="2436.8" cy="869.0" r="5.6" fill="#78bbfa" stroke="#1a2a3a" stroke-width="1.3"/>
<circle cx="2617.0" cy="873.0" r="5.6" fill="#78bbfa" stroke="#1a2a3a" stroke-width="1.3"/>
<text x="1144.5" y="896.6" font-size="22" fill="#78bbfa" font-weight="bold" stroke="rgba(20,25,35,0.55)" stroke-width="1.6" paint-order="stroke">17000 Hz</text>
<text x="1323.0" y="896.6" font-size="22" fill="#78bbfa" font-weight="bold" stroke="rgba(20,25,35,0.55)" stroke-width="1.6" paint-order="stroke">17000</text>
<text x="1347.0" y="962.6" font-size="22" fill="#78bbfa" font-weight="bold" stroke="rgba(20,25,35,0.55)" stroke-width="1.6" paint-order="stroke">520</text>
<text x="1532.7" y="892.9" font-size="22" fill="#78bbfa" font-weight="bold" stroke="rgba(20,25,35,0.55)" stroke-width="1.6" paint-order="stroke">20000 Hz</text>
<text x="1712.5" y="896.0" font-size="22" fill="#78bbfa" font-weight="bold" stroke="rgba(20,25,35,0.55)" stroke-width="1.6" paint-order="stroke">17000</text>
<text x="2046.8" y="896.0" font-size="22" fill="#78bbfa" font-weight="bold" stroke="rgba(20,25,35,0.55)" stroke-width="1.6" paint-order="stroke">17000 Hz</text>
<text x="2074.0" y="962.0" font-size="22" fill="#78bbfa" font-weight="bold" stroke="rgba(20,25,35,0.55)" stroke-width="1.6" paint-order="stroke">520</text>
<text x="2440.0" y="893.0" font-size="22" fill="#78bbfa" font-weight="bold" stroke="rgba(20,25,35,0.55)" stroke-width="1.6" paint-order="stroke">17000 Hz</text>
<polygon points="1140.7,1188.2 1140.7,1105.0 1476.0,1105.0 1521.3,1075.0 1527.0,1056.0 1528.8,1115.3 2072.7,1114.9 2074.5,1106.0 2202.9,1106.0 2247.1,1074.4 2255.2,1056.9 2257.3,1114.9 2261.0,1123.8 2938.0,1123.8 2938.0,1188.2" fill="rgba(110,160,230,0.075)"/>
<polyline points="1140.7,1105.0 1476.0,1105.0 1521.3,1075.0 1527.0,1056.0 1528.8,1115.3 2072.7,1114.9 2074.5,1106.0 2202.9,1106.0 2247.1,1074.4 2255.2,1056.9 2257.3,1114.9 2261.0,1123.8 2938.0,1123.8" fill="none" stroke="rgba(0,0,0,0.55)" stroke-width="5" stroke-linejoin="round"/>
<polyline points="1140.7,1105.0 1476.0,1105.0 1521.3,1075.0 1527.0,1056.0 1528.8,1115.3 2072.7,1114.9 2074.5,1106.0 2202.9,1106.0 2247.1,1074.4 2255.2,1056.9 2257.3,1114.9 2261.0,1123.8 2938.0,1123.8" fill="none" stroke="#78bbfa" stroke-width="3.1" stroke-linejoin="round"/>
<circle cx="1140.7" cy="1105.0" r="5.6" fill="#78bbfa" stroke="#1a2a3a" stroke-width="1.3"/>
<circle cx="1476.0" cy="1105.0" r="5.6" fill="#78bbfa" stroke="#1a2a3a" stroke-width="1.3"/>
<circle cx="1521.3" cy="1075.0" r="5.6" fill="#78bbfa" stroke="#1a2a3a" stroke-width="1.3"/>
<circle cx="1527.0" cy="1056.0" r="5.6" fill="#78bbfa" stroke="#1a2a3a" stroke-width="1.3"/>
<circle cx="1528.8" cy="1115.3" r="5.6" fill="#78bbfa" stroke="#1a2a3a" stroke-width="1.3"/>
<circle cx="2072.7" cy="1114.9" r="5.6" fill="#78bbfa" stroke="#1a2a3a" stroke-width="1.3"/>
<circle cx="2202.9" cy="1106.0" r="5.6" fill="#78bbfa" stroke="#1a2a3a" stroke-width="1.3"/>
<circle cx="2247.1" cy="1074.4" r="5.6" fill="#78bbfa" stroke="#1a2a3a" stroke-width="1.3"/>
<circle cx="2255.2" cy="1056.9" r="5.6" fill="#78bbfa" stroke="#1a2a3a" stroke-width="1.3"/>
<circle cx="2257.3" cy="1114.9" r="5.6" fill="#78bbfa" stroke="#1a2a3a" stroke-width="1.3"/>
<text x="1144.5" y="1096.8" font-size="22" fill="#78bbfa" font-weight="bold" stroke="rgba(20,25,35,0.55)" stroke-width="1.6" paint-order="stroke">1470 Hz</text>
<text x="1530.0" y="1080.6" font-size="22" fill="#78bbfa" font-weight="bold" stroke="rgba(20,25,35,0.55)" stroke-width="1.6" paint-order="stroke">17900</text>
<text x="1480.6" y="1128.9" font-size="22" fill="#78bbfa" font-weight="bold" stroke="rgba(20,25,35,0.55)" stroke-width="1.6" paint-order="stroke">1470 Hz</text>
<text x="2077.9" y="1097.0" font-size="22" fill="#78bbfa" font-weight="bold" stroke="rgba(20,25,35,0.55)" stroke-width="1.6" paint-order="stroke">1470 Hz</text>
<text x="2259.0" y="1081.0" font-size="22" fill="#78bbfa" font-weight="bold" stroke="rgba(20,25,35,0.55)" stroke-width="1.6" paint-order="stroke">17900</text>
<text x="2207.3" y="1128.6" font-size="22" fill="#78bbfa" font-weight="bold" stroke="rgba(20,25,35,0.55)" stroke-width="1.6" paint-order="stroke">1470</text>
<text x="2263.6" y="1147.0" font-size="22" fill="#78bbfa" font-weight="bold" stroke="rgba(20,25,35,0.55)" stroke-width="1.6" paint-order="stroke">520</text>
<polygon points="1140.7,1372.1 1140.7,1306.7 1527.0,1306.7 1527.0,1240.8 1709.0,1236.3 1710.8,1306.7 2254.0,1306.7 2254.0,1240.0 2436.8,1236.3 2438.7,1306.7 2938.0,1306.7 2938.0,1372.1" fill="rgba(110,160,230,0.075)"/>
<polyline points="1140.7,1306.7 1527.0,1306.7 1527.0,1240.8 1709.0,1236.3 1710.8,1306.7 2254.0,1306.7 2254.0,1240.0 2436.8,1236.3 2438.7,1306.7 2938.0,1306.7" fill="none" stroke="rgba(0,0,0,0.55)" stroke-width="5" stroke-linejoin="round"/>
<polyline points="1140.7,1306.7 1527.0,1306.7 1527.0,1240.8 1709.0,1236.3 1710.8,1306.7 2254.0,1306.7 2254.0,1240.0 2436.8,1236.3 2438.7,1306.7 2938.0,1306.7" fill="none" stroke="#78bbfa" stroke-width="3.1" stroke-linejoin="round"/>
<circle cx="1140.7" cy="1306.7" r="5.6" fill="#78bbfa" stroke="#1a2a3a" stroke-width="1.3"/>
<circle cx="1527.0" cy="1306.7" r="5.6" fill="#78bbfa" stroke="#1a2a3a" stroke-width="1.3"/>
<circle cx="1527.0" cy="1240.8" r="5.6" fill="#78bbfa" stroke="#1a2a3a" stroke-width="1.3"/>
<circle cx="1709.0" cy="1236.3" r="5.6" fill="#78bbfa" stroke="#1a2a3a" stroke-width="1.3"/>
<circle cx="1710.8" cy="1306.7" r="5.6" fill="#78bbfa" stroke="#1a2a3a" stroke-width="1.3"/>
<circle cx="2254.0" cy="1306.7" r="5.6" fill="#78bbfa" stroke="#1a2a3a" stroke-width="1.3"/>
<circle cx="2254.0" cy="1240.0" r="5.6" fill="#78bbfa" stroke="#1a2a3a" stroke-width="1.3"/>
<circle cx="2436.8" cy="1236.3" r="5.6" fill="#78bbfa" stroke="#1a2a3a" stroke-width="1.3"/>
<circle cx="2438.7" cy="1306.7" r="5.6" fill="#78bbfa" stroke="#1a2a3a" stroke-width="1.3"/>
<text x="1144.5" y="1298.4" font-size="22" fill="#78bbfa" font-weight="bold" stroke="rgba(20,25,35,0.55)" stroke-width="1.6" paint-order="stroke">520 Hz</text>
<text x="1531.0" y="1260.7" font-size="22" fill="#78bbfa" font-weight="bold" stroke="rgba(20,25,35,0.55)" stroke-width="1.6" paint-order="stroke">20000</text>
<text x="1530.7" y="1330.4" font-size="22" fill="#78bbfa" font-weight="bold" stroke="rgba(20,25,35,0.55)" stroke-width="1.6" paint-order="stroke">520 Hz</text>
<text x="1713.0" y="1260.7" font-size="22" fill="#78bbfa" font-weight="bold" stroke="rgba(20,25,35,0.55)" stroke-width="1.6" paint-order="stroke">20000</text>
<text x="1714.8" y="1330.4" font-size="22" fill="#78bbfa" font-weight="bold" stroke="rgba(20,25,35,0.55)" stroke-width="1.6" paint-order="stroke">520</text>
<text x="2258.0" y="1260.7" font-size="22" fill="#78bbfa" font-weight="bold" stroke="rgba(20,25,35,0.55)" stroke-width="1.6" paint-order="stroke">20000</text>
<text x="2258.6" y="1330.4" font-size="22" fill="#78bbfa" font-weight="bold" stroke="rgba(20,25,35,0.55)" stroke-width="1.6" paint-order="stroke">520 Hz</text>
<text x="2441.0" y="1260.7" font-size="22" fill="#78bbfa" font-weight="bold" stroke="rgba(20,25,35,0.55)" stroke-width="1.6" paint-order="stroke">20000</text>
<text x="2443.0" y="1330.4" font-size="22" fill="#78bbfa" font-weight="bold" stroke="rgba(20,25,35,0.55)" stroke-width="1.6" paint-order="stroke">520</text>
<polygon points="1140.7,1556.0 1140.7,1423.4 1325.3,1423.4 1345.0,1469.4 1461.0,1471.3 1507.0,1463.0 1527.0,1420.8 1687.0,1423.4 1709.0,1469.4 1709.0,1423.4 2050.6,1423.4 2073.0,1469.4 2189.0,1471.3 2232.6,1463.0 2254.8,1420.8 2415.0,1423.4 2437.0,1469.4 2437.0,1423.4 2617.0,1421.0 2796.6,1421.0 2938.0,1421.0 2938.0,1556.0" fill="rgba(110,160,230,0.075)"/>
<polyline points="1140.7,1423.4 1325.3,1423.4 1345.0,1469.4 1461.0,1471.3 1507.0,1463.0 1527.0,1420.8 1687.0,1423.4 1709.0,1469.4 1709.0,1423.4 2050.6,1423.4 2073.0,1469.4 2189.0,1471.3 2232.6,1463.0 2254.8,1420.8 2415.0,1423.4 2437.0,1469.4 2437.0,1423.4 2617.0,1421.0 2796.6,1421.0 2938.0,1421.0" fill="none" stroke="rgba(0,0,0,0.55)" stroke-width="5" stroke-linejoin="round"/>
<polyline points="1140.7,1423.4 1325.3,1423.4 1345.0,1469.4 1461.0,1471.3 1507.0,1463.0 1527.0,1420.8 1687.0,1423.4 1709.0,1469.4 1709.0,1423.4 2050.6,1423.4 2073.0,1469.4 2189.0,1471.3 2232.6,1463.0 2254.8,1420.8 2415.0,1423.4 2437.0,1469.4 2437.0,1423.4 2617.0,1421.0 2796.6,1421.0 2938.0,1421.0" fill="none" stroke="#78bbfa" stroke-width="3.1" stroke-linejoin="round"/>
<circle cx="1140.7" cy="1423.4" r="5.6" fill="#78bbfa" stroke="#1a2a3a" stroke-width="1.3"/>
<circle cx="1325.3" cy="1423.4" r="5.6" fill="#78bbfa" stroke="#1a2a3a" stroke-width="1.3"/>
<circle cx="1345.0" cy="1469.4" r="5.6" fill="#78bbfa" stroke="#1a2a3a" stroke-width="1.3"/>
<circle cx="1461.0" cy="1471.3" r="5.6" fill="#78bbfa" stroke="#1a2a3a" stroke-width="1.3"/>
<circle cx="1507.0" cy="1463.0" r="5.6" fill="#78bbfa" stroke="#1a2a3a" stroke-width="1.3"/>
<circle cx="1527.0" cy="1420.8" r="5.6" fill="#78bbfa" stroke="#1a2a3a" stroke-width="1.3"/>
<circle cx="1687.0" cy="1423.4" r="5.6" fill="#78bbfa" stroke="#1a2a3a" stroke-width="1.3"/>
<circle cx="1709.0" cy="1469.4" r="5.6" fill="#78bbfa" stroke="#1a2a3a" stroke-width="1.3"/>
<circle cx="1709.0" cy="1423.4" r="5.6" fill="#78bbfa" stroke="#1a2a3a" stroke-width="1.3"/>
<circle cx="2050.6" cy="1423.4" r="5.6" fill="#78bbfa" stroke="#1a2a3a" stroke-width="1.3"/>
<circle cx="2073.0" cy="1469.4" r="5.6" fill="#78bbfa" stroke="#1a2a3a" stroke-width="1.3"/>
<circle cx="2189.0" cy="1471.3" r="5.6" fill="#78bbfa" stroke="#1a2a3a" stroke-width="1.3"/>
<circle cx="2232.6" cy="1463.0" r="5.6" fill="#78bbfa" stroke="#1a2a3a" stroke-width="1.3"/>
<circle cx="2254.8" cy="1420.8" r="5.6" fill="#78bbfa" stroke="#1a2a3a" stroke-width="1.3"/>
<circle cx="2415.0" cy="1423.4" r="5.6" fill="#78bbfa" stroke="#1a2a3a" stroke-width="1.3"/>
<circle cx="2437.0" cy="1469.4" r="5.6" fill="#78bbfa" stroke="#1a2a3a" stroke-width="1.3"/>
<circle cx="2437.0" cy="1423.4" r="5.6" fill="#78bbfa" stroke="#1a2a3a" stroke-width="1.3"/>
<circle cx="2617.0" cy="1421.0" r="5.6" fill="#78bbfa" stroke="#1a2a3a" stroke-width="1.3"/>
<circle cx="2796.6" cy="1421.0" r="5.6" fill="#78bbfa" stroke="#1a2a3a" stroke-width="1.3"/>
<text x="1144.0" y="1446.8" font-size="22" fill="#78bbfa" font-weight="bold" stroke="rgba(20,25,35,0.55)" stroke-width="1.6" paint-order="stroke">20000 Hz</text>
<text x="1329.0" y="1446.8" font-size="22" fill="#78bbfa" font-weight="bold" stroke="rgba(20,25,35,0.55)" stroke-width="1.6" paint-order="stroke">20000</text>
<text x="1349.0" y="1495.0" font-size="22" fill="#78bbfa" font-weight="bold" stroke="rgba(20,25,35,0.55)" stroke-width="1.6" paint-order="stroke">1610</text>
<text x="1511.9" y="1486.7" font-size="22" fill="#78bbfa" font-weight="bold" stroke="rgba(20,25,35,0.55)" stroke-width="1.6" paint-order="stroke">2380 Hz</text>
<text x="1531.0" y="1444.9" font-size="22" fill="#78bbfa" font-weight="bold" stroke="rgba(20,25,35,0.55)" stroke-width="1.6" paint-order="stroke">20000</text>
<text x="1691.0" y="1446.8" font-size="22" fill="#78bbfa" font-weight="bold" stroke="rgba(20,25,35,0.55)" stroke-width="1.6" paint-order="stroke">20000</text>
<text x="1713.0" y="1493.0" font-size="22" fill="#78bbfa" font-weight="bold" stroke="rgba(20,25,35,0.55)" stroke-width="1.6" paint-order="stroke">1710</text>
<text x="2054.4" y="1446.8" font-size="22" fill="#78bbfa" font-weight="bold" stroke="rgba(20,25,35,0.55)" stroke-width="1.6" paint-order="stroke">20000 Hz</text>
<text x="2077.0" y="1495.0" font-size="22" fill="#78bbfa" font-weight="bold" stroke="rgba(20,25,35,0.55)" stroke-width="1.6" paint-order="stroke">1610</text>
<text x="2237.0" y="1486.7" font-size="22" fill="#78bbfa" font-weight="bold" stroke="rgba(20,25,35,0.55)" stroke-width="1.6" paint-order="stroke">2380</text>
<text x="2258.6" y="1444.9" font-size="22" fill="#78bbfa" font-weight="bold" stroke="rgba(20,25,35,0.55)" stroke-width="1.6" paint-order="stroke">20000</text>
<text x="2418.7" y="1446.8" font-size="22" fill="#78bbfa" font-weight="bold" stroke="rgba(20,25,35,0.55)" stroke-width="1.6" paint-order="stroke">20000 Hz</text>
<text x="2441.0" y="1493.0" font-size="22" fill="#78bbfa" font-weight="bold" stroke="rgba(20,25,35,0.55)" stroke-width="1.6" paint-order="stroke">1710</text>
<text x="2621.0" y="1444.9" font-size="22" fill="#78bbfa" font-weight="bold" stroke="rgba(20,25,35,0.55)" stroke-width="1.6" paint-order="stroke">20000</text>
<text x="2801.0" y="1444.9" font-size="22" fill="#78bbfa" font-weight="bold" stroke="rgba(20,25,35,0.55)" stroke-width="1.6" paint-order="stroke">20000 Hz</text>
<polygon points="1140.7,1739.9 1140.7,1606.9 1162.6,1606.9 1327.2,1605.0 1345.0,1651.4 1459.0,1651.4 1508.8,1635.2 1527.0,1609.2 1690.8,1605.0 1709.0,1651.4 1709.0,1605.0 2052.5,1605.0 2073.0,1651.4 2187.0,1651.4 2236.4,1635.2 2254.8,1609.2 2416.8,1605.0 2437.0,1651.4 2437.0,1605.0 2617.0,1605.0 2938.0,1605.0 2938.0,1739.9" fill="rgba(110,160,230,0.075)"/>
<polyline points="1140.7,1606.9 1162.6,1606.9 1327.2,1605.0 1345.0,1651.4 1459.0,1651.4 1508.8,1635.2 1527.0,1609.2 1690.8,1605.0 1709.0,1651.4 1709.0,1605.0 2052.5,1605.0 2073.0,1651.4 2187.0,1651.4 2236.4,1635.2 2254.8,1609.2 2416.8,1605.0 2437.0,1651.4 2437.0,1605.0 2617.0,1605.0 2938.0,1605.0" fill="none" stroke="rgba(0,0,0,0.55)" stroke-width="5" stroke-linejoin="round"/>
<polyline points="1140.7,1606.9 1162.6,1606.9 1327.2,1605.0 1345.0,1651.4 1459.0,1651.4 1508.8,1635.2 1527.0,1609.2 1690.8,1605.0 1709.0,1651.4 1709.0,1605.0 2052.5,1605.0 2073.0,1651.4 2187.0,1651.4 2236.4,1635.2 2254.8,1609.2 2416.8,1605.0 2437.0,1651.4 2437.0,1605.0 2617.0,1605.0 2938.0,1605.0" fill="none" stroke="#78bbfa" stroke-width="3.1" stroke-linejoin="round"/>
<circle cx="1140.7" cy="1606.9" r="5.6" fill="#78bbfa" stroke="#1a2a3a" stroke-width="1.3"/>
<circle cx="1162.6" cy="1606.9" r="5.6" fill="#78bbfa" stroke="#1a2a3a" stroke-width="1.3"/>
<circle cx="1327.2" cy="1605.0" r="5.6" fill="#78bbfa" stroke="#1a2a3a" stroke-width="1.3"/>
<circle cx="1345.0" cy="1651.4" r="5.6" fill="#78bbfa" stroke="#1a2a3a" stroke-width="1.3"/>
<circle cx="1459.0" cy="1651.4" r="5.6" fill="#78bbfa" stroke="#1a2a3a" stroke-width="1.3"/>
<circle cx="1508.8" cy="1635.2" r="5.6" fill="#78bbfa" stroke="#1a2a3a" stroke-width="1.3"/>
<circle cx="1527.0" cy="1609.2" r="5.6" fill="#78bbfa" stroke="#1a2a3a" stroke-width="1.3"/>
<circle cx="1690.8" cy="1605.0" r="5.6" fill="#78bbfa" stroke="#1a2a3a" stroke-width="1.3"/>
<circle cx="1709.0" cy="1651.4" r="5.6" fill="#78bbfa" stroke="#1a2a3a" stroke-width="1.3"/>
<circle cx="1709.0" cy="1605.0" r="5.6" fill="#78bbfa" stroke="#1a2a3a" stroke-width="1.3"/>
<circle cx="2052.5" cy="1605.0" r="5.6" fill="#78bbfa" stroke="#1a2a3a" stroke-width="1.3"/>
<circle cx="2073.0" cy="1651.4" r="5.6" fill="#78bbfa" stroke="#1a2a3a" stroke-width="1.3"/>
<circle cx="2187.0" cy="1651.4" r="5.6" fill="#78bbfa" stroke="#1a2a3a" stroke-width="1.3"/>
<circle cx="2236.4" cy="1635.2" r="5.6" fill="#78bbfa" stroke="#1a2a3a" stroke-width="1.3"/>
<circle cx="2254.8" cy="1609.2" r="5.6" fill="#78bbfa" stroke="#1a2a3a" stroke-width="1.3"/>
<circle cx="2416.8" cy="1605.0" r="5.6" fill="#78bbfa" stroke="#1a2a3a" stroke-width="1.3"/>
<circle cx="2437.0" cy="1651.4" r="5.6" fill="#78bbfa" stroke="#1a2a3a" stroke-width="1.3"/>
<circle cx="2437.0" cy="1605.0" r="5.6" fill="#78bbfa" stroke="#1a2a3a" stroke-width="1.3"/>
<circle cx="2617.0" cy="1605.0" r="5.6" fill="#78bbfa" stroke="#1a2a3a" stroke-width="1.3"/>
<text x="1166.0" y="1628.8" font-size="22" fill="#78bbfa" font-weight="bold" stroke="rgba(20,25,35,0.55)" stroke-width="1.6" paint-order="stroke">20000</text>
<text x="1331.0" y="1628.8" font-size="22" fill="#78bbfa" font-weight="bold" stroke="rgba(20,25,35,0.55)" stroke-width="1.6" paint-order="stroke">20000</text>
<text x="1348.0" y="1674.7" font-size="22" fill="#78bbfa" font-weight="bold" stroke="rgba(20,25,35,0.55)" stroke-width="1.6" paint-order="stroke">1890</text>
<text x="1531.0" y="1628.8" font-size="22" fill="#78bbfa" font-weight="bold" stroke="rgba(20,25,35,0.55)" stroke-width="1.6" paint-order="stroke">20000 Hz</text>
<text x="1694.0" y="1628.8" font-size="22" fill="#78bbfa" font-weight="bold" stroke="rgba(20,25,35,0.55)" stroke-width="1.6" paint-order="stroke">20000</text>
<text x="1713.0" y="1674.7" font-size="22" fill="#78bbfa" font-weight="bold" stroke="rgba(20,25,35,0.55)" stroke-width="1.6" paint-order="stroke">1960</text>
<text x="2056.0" y="1628.8" font-size="22" fill="#78bbfa" font-weight="bold" stroke="rgba(20,25,35,0.55)" stroke-width="1.6" paint-order="stroke">20000 Hz</text>
<text x="2077.0" y="1674.7" font-size="22" fill="#78bbfa" font-weight="bold" stroke="rgba(20,25,35,0.55)" stroke-width="1.6" paint-order="stroke">1890</text>
<text x="2258.6" y="1628.8" font-size="22" fill="#78bbfa" font-weight="bold" stroke="rgba(20,25,35,0.55)" stroke-width="1.6" paint-order="stroke">20000</text>
<text x="2421.0" y="1628.8" font-size="22" fill="#78bbfa" font-weight="bold" stroke="rgba(20,25,35,0.55)" stroke-width="1.6" paint-order="stroke">20000 Hz</text>
<text x="2441.0" y="1674.7" font-size="22" fill="#78bbfa" font-weight="bold" stroke="rgba(20,25,35,0.55)" stroke-width="1.6" paint-order="stroke">1960</text>
<text x="2621.0" y="1630.6" font-size="22" fill="#78bbfa" font-weight="bold" stroke="rgba(20,25,35,0.55)" stroke-width="1.6" paint-order="stroke">19600</text>
<polygon points="1140.9,747 1140.9,751.0 1185.0,817.0 1210.8,685.0 1230.6,685.0 1253.0,817.0 1276.5,817.0 1302.6,685.0 1323.5,685.0 1345.2,815.0 1527.0,817.0 1708.5,817.0 1708.5,784.5 1728.5,817.0 1754.9,685.0 1774.9,685.0 1798.2,817.0 1820.8,817.0 1849.0,685.0 1869.0,685.0 1890.5,817.0 1890.5,784.5 1910.5,817.0 1936.9,685.0 1956.9,685.0 1980.2,817.0 2002.8,817.0 2031.0,685.0 2051.0,685.0 2072.5,817.0 2436.8,817.0 2436.8,784.5 2456.8,817.0 2483.2,685.0 2503.2,685.0 2526.5,817.0 2549.1,817.0 2577.3,685.0 2597.3,685.0 2618.8,817.0 2617.0,784.5 2637.0,817.0 2663.4,685.0 2683.4,685.0 2706.7,817.0 2729.3,817.0 2757.5,685.0 2777.5,685.0 2798.5,817.0 2938.0,817.0 2938.0,747" fill="rgba(90,200,90,0.10)"/>
<polyline points="1140.9,751.0 1185.0,817.0 1210.8,685.0 1230.6,685.0 1253.0,817.0 1276.5,817.0 1302.6,685.0 1323.5,685.0 1345.2,815.0 1527.0,817.0 1708.5,817.0 1708.5,784.5 1728.5,817.0 1754.9,685.0 1774.9,685.0 1798.2,817.0 1820.8,817.0 1849.0,685.0 1869.0,685.0 1890.5,817.0 1890.5,784.5 1910.5,817.0 1936.9,685.0 1956.9,685.0 1980.2,817.0 2002.8,817.0 2031.0,685.0 2051.0,685.0 2072.5,817.0 2436.8,817.0 2436.8,784.5 2456.8,817.0 2483.2,685.0 2503.2,685.0 2526.5,817.0 2549.1,817.0 2577.3,685.0 2597.3,685.0 2618.8,817.0 2617.0,784.5 2637.0,817.0 2663.4,685.0 2683.4,685.0 2706.7,817.0 2729.3,817.0 2757.5,685.0 2777.5,685.0 2798.5,817.0 2938.0,817.0" fill="none" stroke="rgba(0,0,0,0.5)" stroke-width="5" stroke-linejoin="round"/>
<polyline points="1140.9,751.0 1185.0,817.0 1210.8,685.0 1230.6,685.0 1253.0,817.0 1276.5,817.0 1302.6,685.0 1323.5,685.0 1345.2,815.0 1527.0,817.0 1708.5,817.0 1708.5,784.5 1728.5,817.0 1754.9,685.0 1774.9,685.0 1798.2,817.0 1820.8,817.0 1849.0,685.0 1869.0,685.0 1890.5,817.0 1890.5,784.5 1910.5,817.0 1936.9,685.0 1956.9,685.0 1980.2,817.0 2002.8,817.0 2031.0,685.0 2051.0,685.0 2072.5,817.0 2436.8,817.0 2436.8,784.5 2456.8,817.0 2483.2,685.0 2503.2,685.0 2526.5,817.0 2549.1,817.0 2577.3,685.0 2597.3,685.0 2618.8,817.0 2617.0,784.5 2637.0,817.0 2663.4,685.0 2683.4,685.0 2706.7,817.0 2729.3,817.0 2757.5,685.0 2777.5,685.0 2798.5,817.0 2938.0,817.0" fill="none" stroke="#62e35c" stroke-width="3.2" stroke-linejoin="round"/>
<circle cx="1140.9" cy="751.0" r="6.2" fill="#62e35c" stroke="#1d3a1d" stroke-width="1.2"/>
<circle cx="1185.0" cy="817.0" r="6.2" fill="#62e35c" stroke="#1d3a1d" stroke-width="1.2"/>
<circle cx="1210.8" cy="685.0" r="6.2" fill="#62e35c" stroke="#1d3a1d" stroke-width="1.2"/>
<circle cx="1230.6" cy="685.0" r="6.2" fill="#62e35c" stroke="#1d3a1d" stroke-width="1.2"/>
<circle cx="1253.0" cy="817.0" r="6.2" fill="#62e35c" stroke="#1d3a1d" stroke-width="1.2"/>
<circle cx="1276.5" cy="817.0" r="6.2" fill="#62e35c" stroke="#1d3a1d" stroke-width="1.2"/>
<circle cx="1302.6" cy="685.0" r="6.2" fill="#62e35c" stroke="#1d3a1d" stroke-width="1.2"/>
<circle cx="1323.5" cy="685.0" r="6.2" fill="#62e35c" stroke="#1d3a1d" stroke-width="1.2"/>
<circle cx="1345.2" cy="815.0" r="6.2" fill="#62e35c" stroke="#1d3a1d" stroke-width="1.2"/>
<circle cx="1527.0" cy="817.0" r="6.2" fill="#62e35c" stroke="#1d3a1d" stroke-width="1.2"/>
<circle cx="1708.5" cy="817.0" r="6.2" fill="#62e35c" stroke="#1d3a1d" stroke-width="1.2"/>
<circle cx="1708.5" cy="784.5" r="6.2" fill="#62e35c" stroke="#1d3a1d" stroke-width="1.2"/>
<circle cx="1728.5" cy="817.0" r="6.2" fill="#62e35c" stroke="#1d3a1d" stroke-width="1.2"/>
<circle cx="1754.9" cy="685.0" r="6.2" fill="#62e35c" stroke="#1d3a1d" stroke-width="1.2"/>
<circle cx="1774.9" cy="685.0" r="6.2" fill="#62e35c" stroke="#1d3a1d" stroke-width="1.2"/>
<circle cx="1798.2" cy="817.0" r="6.2" fill="#62e35c" stroke="#1d3a1d" stroke-width="1.2"/>
<circle cx="1820.8" cy="817.0" r="6.2" fill="#62e35c" stroke="#1d3a1d" stroke-width="1.2"/>
<circle cx="1849.0" cy="685.0" r="6.2" fill="#62e35c" stroke="#1d3a1d" stroke-width="1.2"/>
<circle cx="1869.0" cy="685.0" r="6.2" fill="#62e35c" stroke="#1d3a1d" stroke-width="1.2"/>
<circle cx="1890.5" cy="817.0" r="6.2" fill="#62e35c" stroke="#1d3a1d" stroke-width="1.2"/>
<circle cx="1890.5" cy="784.5" r="6.2" fill="#62e35c" stroke="#1d3a1d" stroke-width="1.2"/>
<circle cx="1910.5" cy="817.0" r="6.2" fill="#62e35c" stroke="#1d3a1d" stroke-width="1.2"/>
<circle cx="1936.9" cy="685.0" r="6.2" fill="#62e35c" stroke="#1d3a1d" stroke-width="1.2"/>
<circle cx="1956.9" cy="685.0" r="6.2" fill="#62e35c" stroke="#1d3a1d" stroke-width="1.2"/>
<circle cx="1980.2" cy="817.0" r="6.2" fill="#62e35c" stroke="#1d3a1d" stroke-width="1.2"/>
<circle cx="2002.8" cy="817.0" r="6.2" fill="#62e35c" stroke="#1d3a1d" stroke-width="1.2"/>
<circle cx="2031.0" cy="685.0" r="6.2" fill="#62e35c" stroke="#1d3a1d" stroke-width="1.2"/>
<circle cx="2051.0" cy="685.0" r="6.2" fill="#62e35c" stroke="#1d3a1d" stroke-width="1.2"/>
<circle cx="2072.5" cy="817.0" r="6.2" fill="#62e35c" stroke="#1d3a1d" stroke-width="1.2"/>
<circle cx="2436.8" cy="817.0" r="6.2" fill="#62e35c" stroke="#1d3a1d" stroke-width="1.2"/>
<circle cx="2436.8" cy="784.5" r="6.2" fill="#62e35c" stroke="#1d3a1d" stroke-width="1.2"/>
<circle cx="2456.8" cy="817.0" r="6.2" fill="#62e35c" stroke="#1d3a1d" stroke-width="1.2"/>
<circle cx="2483.2" cy="685.0" r="6.2" fill="#62e35c" stroke="#1d3a1d" stroke-width="1.2"/>
<circle cx="2503.2" cy="685.0" r="6.2" fill="#62e35c" stroke="#1d3a1d" stroke-width="1.2"/>
<circle cx="2526.5" cy="817.0" r="6.2" fill="#62e35c" stroke="#1d3a1d" stroke-width="1.2"/>
<circle cx="2549.1" cy="817.0" r="6.2" fill="#62e35c" stroke="#1d3a1d" stroke-width="1.2"/>
<circle cx="2577.3" cy="685.0" r="6.2" fill="#62e35c" stroke="#1d3a1d" stroke-width="1.2"/>
<circle cx="2597.3" cy="685.0" r="6.2" fill="#62e35c" stroke="#1d3a1d" stroke-width="1.2"/>
<circle cx="2618.8" cy="817.0" r="6.2" fill="#62e35c" stroke="#1d3a1d" stroke-width="1.2"/>
<circle cx="2617.0" cy="784.5" r="6.2" fill="#62e35c" stroke="#1d3a1d" stroke-width="1.2"/>
<circle cx="2637.0" cy="817.0" r="6.2" fill="#62e35c" stroke="#1d3a1d" stroke-width="1.2"/>
<circle cx="2663.4" cy="685.0" r="6.2" fill="#62e35c" stroke="#1d3a1d" stroke-width="1.2"/>
<circle cx="2683.4" cy="685.0" r="6.2" fill="#62e35c" stroke="#1d3a1d" stroke-width="1.2"/>
<circle cx="2706.7" cy="817.0" r="6.2" fill="#62e35c" stroke="#1d3a1d" stroke-width="1.2"/>
<circle cx="2729.3" cy="817.0" r="6.2" fill="#62e35c" stroke="#1d3a1d" stroke-width="1.2"/>
<circle cx="2757.5" cy="685.0" r="6.2" fill="#62e35c" stroke="#1d3a1d" stroke-width="1.2"/>
<circle cx="2777.5" cy="685.0" r="6.2" fill="#62e35c" stroke="#1d3a1d" stroke-width="1.2"/>
<circle cx="2798.5" cy="817.0" r="6.2" fill="#62e35c" stroke="#1d3a1d" stroke-width="1.2"/>
<text x="1145.0" y="741.0" font-size="22" fill="#62e35c" font-weight="bold" stroke="rgba(15,30,15,0.55)" stroke-width="1.6" paint-order="stroke">0</text>
<text x="1189.6" y="808.0" font-size="22" fill="#62e35c" font-weight="bold" stroke="rgba(15,30,15,0.55)" stroke-width="1.6" paint-order="stroke">+63</text>
<text x="1214.8" y="708.0" font-size="22" fill="#62e35c" font-weight="bold" stroke="rgba(15,30,15,0.55)" stroke-width="1.6" paint-order="stroke">-64</text>
<text x="1282.6" y="808.0" font-size="22" fill="#62e35c" font-weight="bold" stroke="rgba(15,30,15,0.55)" stroke-width="1.6" paint-order="stroke">+63</text>
<text x="1307.0" y="708.0" font-size="22" fill="#62e35c" font-weight="bold" stroke="rgba(15,30,15,0.55)" stroke-width="1.6" paint-order="stroke">-64</text>
<text x="1348.7" y="806.5" font-size="22" fill="#62e35c" font-weight="bold" stroke="rgba(15,30,15,0.55)" stroke-width="1.6" paint-order="stroke">+62</text>
<text x="1530.7" y="808.0" font-size="22" fill="#62e35c" font-weight="bold" stroke="rgba(15,30,15,0.55)" stroke-width="1.6" paint-order="stroke">+63</text>
<text x="1713.0" y="776.0" font-size="22" fill="#62e35c" font-weight="bold" stroke="rgba(15,30,15,0.55)" stroke-width="1.6" paint-order="stroke">+33</text>
<text x="1713.0" y="808.0" font-size="22" fill="#62e35c" font-weight="bold" stroke="rgba(15,30,15,0.55)" stroke-width="1.6" paint-order="stroke">+63</text>
<text x="1758.0" y="708.0" font-size="22" fill="#62e35c" font-weight="bold" stroke="rgba(15,30,15,0.55)" stroke-width="1.6" paint-order="stroke">-64</text>
<text x="1822.5" y="808.0" font-size="22" fill="#62e35c" font-weight="bold" stroke="rgba(15,30,15,0.55)" stroke-width="1.6" paint-order="stroke">+63</text>
<text x="1852.5" y="708.0" font-size="22" fill="#62e35c" font-weight="bold" stroke="rgba(15,30,15,0.55)" stroke-width="1.6" paint-order="stroke">-64</text>
<text x="1895.0" y="776.0" font-size="22" fill="#62e35c" font-weight="bold" stroke="rgba(15,30,15,0.55)" stroke-width="1.6" paint-order="stroke">+33</text>
<text x="1895.0" y="808.0" font-size="22" fill="#62e35c" font-weight="bold" stroke="rgba(15,30,15,0.55)" stroke-width="1.6" paint-order="stroke">+63</text>
<text x="1940.0" y="708.0" font-size="22" fill="#62e35c" font-weight="bold" stroke="rgba(15,30,15,0.55)" stroke-width="1.6" paint-order="stroke">-64</text>
<text x="2004.5" y="808.0" font-size="22" fill="#62e35c" font-weight="bold" stroke="rgba(15,30,15,0.55)" stroke-width="1.6" paint-order="stroke">+63</text>
<text x="2034.5" y="708.0" font-size="22" fill="#62e35c" font-weight="bold" stroke="rgba(15,30,15,0.55)" stroke-width="1.6" paint-order="stroke">-64</text>
<text x="2441.3" y="776.0" font-size="22" fill="#62e35c" font-weight="bold" stroke="rgba(15,30,15,0.55)" stroke-width="1.6" paint-order="stroke">+33</text>
<text x="2441.3" y="808.0" font-size="22" fill="#62e35c" font-weight="bold" stroke="rgba(15,30,15,0.55)" stroke-width="1.6" paint-order="stroke">+63</text>
<text x="2486.3" y="708.0" font-size="22" fill="#62e35c" font-weight="bold" stroke="rgba(15,30,15,0.55)" stroke-width="1.6" paint-order="stroke">-64</text>
<text x="2550.8" y="808.0" font-size="22" fill="#62e35c" font-weight="bold" stroke="rgba(15,30,15,0.55)" stroke-width="1.6" paint-order="stroke">+63</text>
<text x="2580.8" y="708.0" font-size="22" fill="#62e35c" font-weight="bold" stroke="rgba(15,30,15,0.55)" stroke-width="1.6" paint-order="stroke">-64</text>
<text x="2621.5" y="776.0" font-size="22" fill="#62e35c" font-weight="bold" stroke="rgba(15,30,15,0.55)" stroke-width="1.6" paint-order="stroke">+33</text>
<text x="2621.5" y="808.0" font-size="22" fill="#62e35c" font-weight="bold" stroke="rgba(15,30,15,0.55)" stroke-width="1.6" paint-order="stroke">+63</text>
<text x="2666.5" y="708.0" font-size="22" fill="#62e35c" font-weight="bold" stroke="rgba(15,30,15,0.55)" stroke-width="1.6" paint-order="stroke">-64</text>
<text x="2731.0" y="808.0" font-size="22" fill="#62e35c" font-weight="bold" stroke="rgba(15,30,15,0.55)" stroke-width="1.6" paint-order="stroke">+63</text>
<text x="2761.0" y="708.0" font-size="22" fill="#62e35c" font-weight="bold" stroke="rgba(15,30,15,0.55)" stroke-width="1.6" paint-order="stroke">-64</text>
<text x="2078.9" y="808.0" font-size="22" fill="#62e35c" font-weight="bold" stroke="rgba(15,30,15,0.55)" stroke-width="1.6" paint-order="stroke">+63</text>
<text x="2804.0" y="808.0" font-size="22" fill="#62e35c" font-weight="bold" stroke="rgba(15,30,15,0.55)" stroke-width="1.6" paint-order="stroke">+63</text>
<polyline points="1140.7,1834.9 1160.7,1834.9 1526.2,1834.9 1687.0,1834.9 1704.8,1834.9 2413.0,1834.9 2433.0,1834.9 2938.0,1834.9" fill="none" stroke="rgba(0,0,0,0.5)" stroke-width="5" stroke-linejoin="round"/>
<polyline points="1140.7,1834.9 1160.7,1834.9 1526.2,1834.9 1687.0,1834.9 1704.8,1834.9 2413.0,1834.9 2433.0,1834.9 2938.0,1834.9" fill="none" stroke="#62e35c" stroke-width="3.2" stroke-linejoin="round"/>
<circle cx="1160.7" cy="1834.9" r="6.2" fill="#62e35c" stroke="#1d3a1d" stroke-width="1.2"/>
<circle cx="1526.2" cy="1834.9" r="6.2" fill="#62e35c" stroke="#1d3a1d" stroke-width="1.2"/>
<circle cx="1687.0" cy="1834.9" r="6.2" fill="#62e35c" stroke="#1d3a1d" stroke-width="1.2"/>
<circle cx="1704.8" cy="1834.9" r="6.2" fill="#62e35c" stroke="#1d3a1d" stroke-width="1.2"/>
<circle cx="2413.0" cy="1834.9" r="6.2" fill="#62e35c" stroke="#1d3a1d" stroke-width="1.2"/>
<circle cx="2433.0" cy="1834.9" r="6.2" fill="#62e35c" stroke="#1d3a1d" stroke-width="1.2"/>
<text x="1164.5" y="1826.6" font-size="22" fill="#62e35c" font-weight="bold" stroke="rgba(15,30,15,0.55)" stroke-width="1.6" paint-order="stroke">-18</text>
<text x="1690.8" y="1826.6" font-size="22" fill="#62e35c" font-weight="bold" stroke="rgba(15,30,15,0.55)" stroke-width="1.6" paint-order="stroke">-18</text>
<text x="2416.0" y="1826.6" font-size="22" fill="#62e35c" font-weight="bold" stroke="rgba(15,30,15,0.55)" stroke-width="1.6" paint-order="stroke">-18</text>
</g>
<rect x="2912.0" y="292.0" width="26.0" height="1548.0" rx="0" fill="rgba(20,20,20,0.32)" />
<path d="M1304 265 a9 9 0 0 1 9 -9 h16 a9 9 0 0 1 9 9 v9 L1321 291 L1304 274 Z" fill="#b4b4b4" />
<line x1="1320.5" y1="262.0" x2="1320.5" y2="1840.0" stroke="#ffffff" stroke-width="2.2" />
</svg>
</body></html>
